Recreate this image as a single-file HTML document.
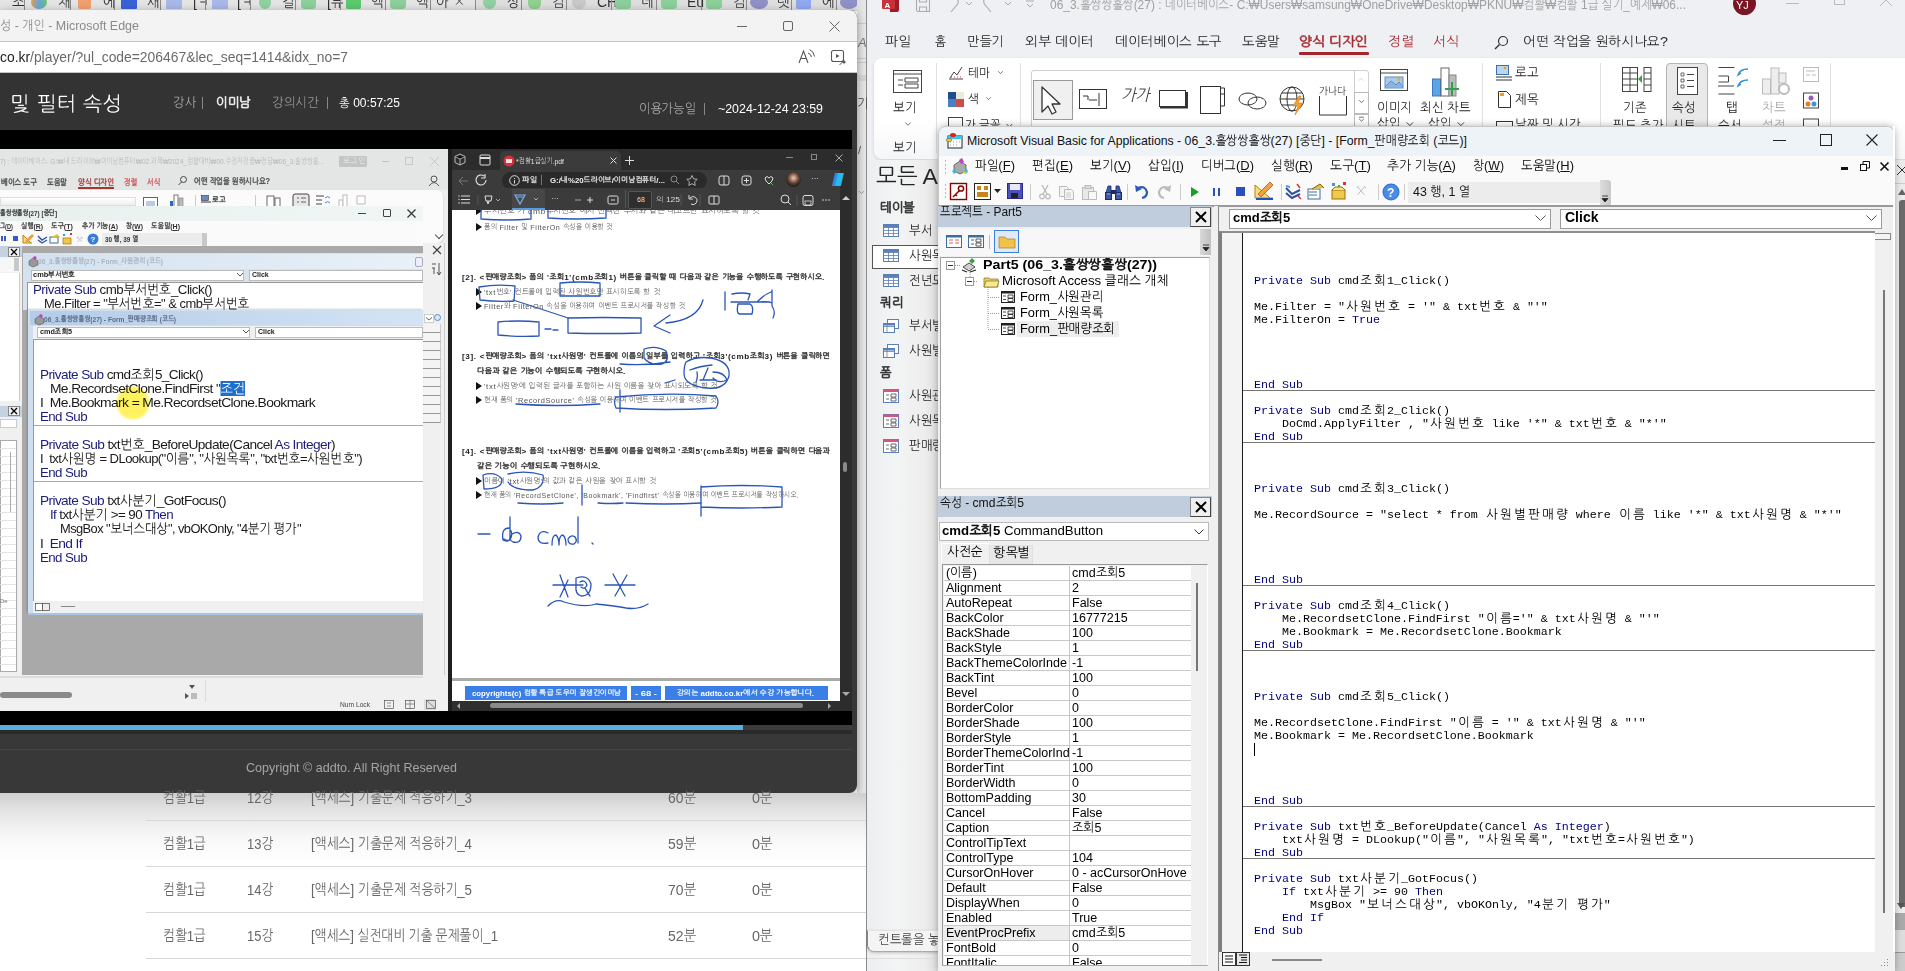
<!DOCTYPE html><html><head><meta charset="utf-8"><title>screen</title><style>
*{box-sizing:border-box;margin:0;padding:0}
html,body{width:1905px;height:971px;overflow:hidden;background:#fff;font-family:"Liberation Sans",sans-serif;}
.a{position:absolute;white-space:nowrap}
svg.h{position:static;display:inline-block;width:.9em;height:1em;vertical-align:-0.156em;fill:currentColor;overflow:visible}
.hb{stroke:currentColor;stroke-width:5}
.hm{width:14px!important;height:1.08em!important;vertical-align:-0.19em!important;padding:0 1.2px}
svg{position:absolute;overflow:visible}
</style></head><body>
<svg width="0" height="0" style="position:absolute;left:0;top:0"><defs><symbol id="g0" viewBox="0 -84 94 100" preserveAspectRatio="none"><path d="M82-36l0 1-2 0-7-3-8-3-8-4-8-4-8 5-8 4-8 4-10 3-1 0-1-1-1-3 0-1 0-1 9-3 7-3 7-3 6-4 6-3 5-4 6-4 5-5 1-1-1-1-1 0-43 0-1 0 0-1 0-4 0-1 1 0 46 0 3 0 3 1 1 1 2 1 0 2-1 1-1 2-2 2-7 7-8 7 6 3 7 3 8 3 7 2 1 0 0 1zm-33 1l1 0 0 1 0 22 40 0 1 1 0 3 0 1-1 0 0 1-86 0-1-1 0-1 0-3 0-1 1 0 39 0 0-22 1-1z"/></symbol><symbol id="g1" viewBox="0 -84 94 100" preserveAspectRatio="none"><path d="M64-45l13 0 0-36 0-1 1-1 4 0 1 1 1 1 0 89-1 1-1 1-4 0-1-1 0-1 0-47-13 0 0 43 0 1-1 1-4 0-1-1 0-1 0-84 0-1 1 0 4 0 1 0 0 1zm-20-10l-2 5-2 4-2 4-3 4 4 5 5 5 4 4 5 3 0 1 0 1-3 3 0 1-1 0-1-1-2-1-2-2-2-2-2-2-2-3-3-2-2-2-2-2-4 5-5 5-6 4-6 4-1 0-3-3 0-1 0-1 1 0 5-4 5-4 4-4 5-5 3-4 3-5 3-5 2-4 0-2-2-1-24 0-1 0 0-1 0-4 1-1 27 0 4 1 2 1 1 3-1 3zm-7-22l1 0 1 1 0 3-1 2-1 0-19 0-1 0 0-2 0-3 0-1 1 0z"/></symbol><symbol id="g2" viewBox="0 -84 94 100" preserveAspectRatio="none"><path d="M66 4l0 1-1 1-4 0-1-1 0-1 0-46-12 0-1 6-1 6-2 5-3 3-3 3-3 3-4 1-4 0-5 0-4-2-3-2-3-3-3-5-2-5-1-6 0-8 0-7 1-6 2-6 3-4 3-3 3-3 4-1 5 0 4 0 4 1 3 2 4 3 2 4 2 5 2 6 0 7 12 0 0-32 0-1 1 0 4 0 1 0 0 1zm-25-50l0-4-1-5-1-4-1-4-2-3-3-2-3-2-3 0-4 0-3 2-2 2-2 4-2 3 0 5-1 4 0 4 0 5 1 4 1 4 1 4 2 3 2 3 3 2 4 0 3 0 3-2 3-2 2-4 1-3 1-5 1-4 0-5zm43 54l-1 1-1 1-3 0-1-1-1-1 0-89 1-1 1-1 3 0 1 1 1 1z"/></symbol><symbol id="g3" viewBox="0 -84 94 100" preserveAspectRatio="none"><path d="M64-45l13 0 0-36 1-1 1-1 3 0 1 1 1 1 0 89-1 1-1 1-3 0-1-1-1-1 0-47-13 0 0 43 0 1-1 1-4 0-1-1 0-1 0-84 0-1 1 0 4 0 1 0 0 1zm-32-31l0 7 0 6-1 5-1 6 1 4 2 4 1 4 3 5 2 4 3 4 3 5 4 3 0 1 0 1-3 3-1 0 0 1-1-1-3-3-2-3-2-3-3-3-2-4-1-3-2-3-1-3-3 7-4 7-5 7-6 6-1 1-1-1-3-3-1 0 1-1 5-6 4-5 4-6 2-7 2-7 2-8 1-10 0-11 0-1 1 0 4 0 1 0 1 1z"/></symbol><symbol id="g4" viewBox="0 -84 94 100" preserveAspectRatio="none"><path d="M64-37l0-13 0-1-1-1-1 0-38 0-1 0 0-1 0-4 0-1 1 0 40 0 3 1 3 1 1 2 0 4 0 37 0 1-1 0-4 0-1 0-1-1 0-18-38 0-1 0-1-1 0-4 1-1 1 0z"/></symbol><symbol id="g5" viewBox="0 -84 94 100" preserveAspectRatio="none"><path d="M80-35l0 1-1 0-4 0-1 0 0-1 0-46 0-1 1-1 4 0 1 1 0 1zm-26-37l-2 6-2 6-4 6-4 5-5 5-7 4-8 5-9 4-1 0-1-1-2-3 0-1 1-1 25-15 11-18 0-2-2-1-31 0-1 0 0-1 0-4 0-1 1 0 33 0 4 0 3 2 1 2 0 3zm29 81l-1 0 0 1-1 0-50 0-4-1-2-1-1-2-1-4 0-7 1-4 1-2 3-1 3 0 40 0 2 0 0-1 1 0 0-2 0-5 0-2-1 0 0-1-1 0-47 0-1 0-1 0 0-1 0-3 0-1 1 0 1 0 48 0 2 0 1 0 2 0 1 1 1 1 0 1 0 2 0 2 0 7 0 4-1 2-3 1-4 0-40 0-1 1-1 0 0 2 0 6 0 1 1 1 1 0 49 0 1 0 0 1 1 0z"/></symbol><symbol id="g6" viewBox="0 -84 94 100" preserveAspectRatio="none"><path d="M23-42l-2 0-1 0-2-1-1-1 0-1-1-1 0-1 0-2 0-32 0-1 1 0 5 0 1 0 0 1 0 13 48 0 0-13 0-1 1 0 4 0 1 0 1 0 0 1 0 32-1 4-1 1-2 1-4 1zm6 51l-1 0 0-1 0-32-24 0-1 0 0-1 0-3 0-1 1-1 86 0 0 1 1 0 0 1 0 3-1 1-24 0 0 32-1 0 0 1-1 0-4 0-1 0 0-1 0-32-25 0 0 32 0 1-1 0zm-6-71l0 12 0 1 1 1 1 0 43 0 2 0 0-1 1 0 0-1 0-12z"/></symbol><symbol id="g7" viewBox="0 -84 94 100" preserveAspectRatio="none"><path d="M27-79l3 1 4 1 3 1 3 2 3 3 2 3 1 5 1 4 13 0 0-21 0-1 1 0 4 0 1 0 0 1 0 49 0 1-1 0-4 0-1 0 0-1 0-22-13 0-1 5-1 4-3 4-2 2-3 3-3 1-4 1-3 0-4 0-3-1-4-2-3-2-2-3-2-4-1-5-1-6 1-5 1-5 2-4 2-3 3-3 4-1 3-1 4-1zm13 23l0-4-1-3-1-3-2-2-2-2-2-1-2-1-3 0-6 1-4 3-2 5-1 7 1 7 3 6 4 3 5 1 3 0 2-1 2-1 2-2 2-3 1-3 1-3 0-4zm-18 34l1 0 0-1 1 0 52 0 4 0 2 2 1 2 1 4 0 24-1 1-1 0-4 0-1 0 0-1 0-24 0-1-1-1-1 0-51 0-1 0 0-1-1 0zm62-8l-1 1-1 1-3 0-1-1-1-1 0-51 1-1 1-1 3 0 1 1 1 1z"/></symbol><symbol id="g8" viewBox="0 -84 94 100" preserveAspectRatio="none"><path d="M55-44l0 5-1 6-2 5-2 5-4 4-4 4-5 2-6 1-6-1-5-2-4-4-3-4-3-5-1-5-1-6 0-5 0-6 1-6 1-6 3-4 3-5 4-3 5-2 6-1 6 1 5 2 4 3 4 4 2 5 2 6 1 6 0 6zm-7-1l0-4-1-5-1-4-2-4-2-3-3-3-4-2-4 0-4 0-4 2-3 3-2 3-1 4-1 4-1 5 0 4 0 5 0 4 1 5 2 4 2 3 3 3 4 2 4 0 4 0 4-2 3-3 2-3 2-4 1-5 1-4 0-5zm29 53l0 1-1 1-4 0-2-1 0-1 0-89 0-1 2-1 4 0 1 1 0 1 0 36 14 0 1 1 0 4 0 1-1 0-14 0z"/></symbol><symbol id="g9" viewBox="0 -84 94 100" preserveAspectRatio="none"><path d="M20-8l1-4 1-4 3-3 3-3 4-2 5-1 6-1 6 0 6 0 5 1 5 1 5 2 3 3 3 3 2 4 0 4 0 4-2 3-3 4-3 2-5 2-5 2-5 1-6 0-6 0-6-1-5-2-4-2-3-2-3-4-1-3-1-4zm7 0l1 3 1 2 2 2 2 2 4 1 3 1 4 1 5 0 4 0 4-1 4-1 3-1 3-2 2-2 2-2 0-3 0-3-2-2-2-2-3-2-3-2-4-1-4 0-4 0-5 0-4 0-3 1-4 2-2 2-2 2-1 2-1 3zm10-71l-1 7-1 7 2 4 1 4 3 3 3 4 3 3 3 3 3 2 4 2 1 0 0 1-1 1-2 3 0 1-1 0-1 0-2-2-3-2-3-2-3-2-3-3-3-4-2-3-2-4-4 8-5 6-6 6-7 5-1 1-1 0 0-1-3-3 0-1 0-1 1 0 10-8 8-10 4-12 2-13 0-1 1-1 5 1 1 1zm40 51l0 1-1 0-4 0-2 0 0-1 0-53 0-1 2-1 4 0 1 1 0 1 0 24 14 0 1 0 0 1 0 4-1 1-14 0z"/></symbol><symbol id="g10" viewBox="0 -84 94 100" preserveAspectRatio="none"><path d="M24-17l0-4 1-2 2-1 4 0 42 0 2 0 2 0 1 0 1 1 1 1 0 1 1 2 0 2 0 19-1 3-1 2-2 1-4 1-42 0-2 0-2-1-1 0-1-1-1-1 0-1 0-1 0-2zm9-1l-1 0-1 0 0 1-1 1 0 16 1 1 0 1 1 1 1 0 38 0 1 0 1-1 1-1 0-1 0-16 0-1-1-1-1 0-1 0zm-20-41l3 0 3 0 3 0 3-1 3 0 3 0 2 0 2 0 1 0 1 0 1 0 1 0 1 0 1 0 2 0 1-1 1-4 2-4-1-3-2 0-31 0-1-1 0-1 0-3 0-1 1 0 33 0 5 0 2 1 1 3 0 3-4 13-8 11-12 10-16 9-2 0-1-1-1-3 0-1 0-1 1 0 9-5 8-4 6-6 6-5-1 0-1 0-1 0-1 0-3 0-3 0-3 0-3 0-3 0-3 0-3 1-2 0-1-1-1-1 0-3 1-1 1 0zm61 3l0-25 0-1 1-1 4 0 1 1 0 1 0 50 0 1-1 0-4 0-1 0 0-1 0-19-21 0-1-1 0-1 0-3 0-1 1 0z"/></symbol><symbol id="g11" viewBox="0 -84 94 100" preserveAspectRatio="none"><path d="M60-52l0-28 0-1 1 0 4 0 1 0 0 1 0 84 0 1-1 1-4 0-1-1 0-1 0-50-24 0-1 0 0-1 0-4 0-1 1 0zm24 60l-1 1-1 1-3 0-1-1-1-1 0-89 1-1 1-1 3 0 1 1 1 1zm-67-35l0 1 1 1 2 1 8 0 7-1 7-1 7-1 2 0 0 1 1 3 0 1-2 0-6 2-8 1-9 1-9 0-4-1-2-1-1-3-1-3 0-48 1-1 1 0 4 0 1 0 0 1z"/></symbol><symbol id="g12" viewBox="0 -84 94 100" preserveAspectRatio="none"><path d="M16-27l-4-1-2-1-2-2 0-4 0-13 1-4 1-2 2-1 4 0 16 0 1 0 1-1 0-2 0-11 0-1 0-1-2 0-22 0-1 0 0-1-1 0 0-4 1 0 0-1 1 0 24 0 2 0 1 0 2 1 1 0 1 1 0 2 0 1 0 2 0 14 0 3-1 2-3 1-4 1-16 0-1 0-1 0 0 1 0 1 0 12 1 1 1 1 8 0 8-1 8-1 7-2 2 0 0 1 1 4-1 1-1 0-7 2-9 1-9 1-8 0zm39 5l0 1-1 0 0 1 0 1 1 1 0 1 1 1 0 1 5 5 7 5 8 4 11 3 1 1-1 1-1 4-1 0-1 0-11-3-9-5-8-6-5-6-5 7-7 5-9 5-11 4-1 0-1-1-1-3 0-1 1-1 7-2 6-3 5-3 4-3 4-4 3-3 1-4 1-4 0-1 1 0 5 0 1 1 0 1zm5-34l0-24 0-1 1 0 4 0 1 0 0 1 0 52 0 1-1 0-4 0-1 0 0-1 0-22-13 0-1 0 0-1 0-4 0-1 1 0zm24 35l-1 1-1 0-3 0-1 0-1-1 0-60 1-1 1-1 3 0 1 1 1 1z"/></symbol><symbol id="g13" viewBox="0 -84 94 100" preserveAspectRatio="none"><path d="M80 8l0 1-1 1-4 0-1-1 0-1 0-89 0-1 1-1 4 0 1 1 0 1zm-26-76l-1 9-3 8-3 8-5 8-5 7-7 7-8 6-9 5-1 0-3-4 0-1 1 0 8-5 7-5 6-6 5-7 4-6 3-8 3-7 1-7 0-2-1-1-2 0-32 0-1-1 0-4 1-1 34 0 4 0 2 2 1 2 1 3z"/></symbol><symbol id="g14" viewBox="0 -84 94 100" preserveAspectRatio="none"><path d="M81-8l0 4-2 3-3 4-3 2-5 2-4 2-6 1-6 0-6 0-6-1-4-2-5-2-3-2-2-4-2-3-1-4 1-4 2-4 2-3 3-3 5-2 4-1 6-1 6 0 6 0 6 1 4 1 5 2 3 3 3 3 2 4 0 4zm-7 0l0-3-2-2-2-2-2-2-4-2-4-1-4 0-4 0-4 0-5 0-3 1-3 2-3 2-2 2-1 2-1 3 1 3 1 2 2 2 3 2 3 1 3 1 5 1 4 0 4 0 4-1 4-1 4-1 2-2 2-2 2-2 0-3zm-37-71l0 7-1 7 1 4 2 4 2 3 3 4 3 3 4 3 3 2 4 2 0 1 0 1-2 3 0 1-1 0-1 0-2-2-3-2-3-2-3-2-3-3-3-4-2-3-2-4-4 8-5 6-6 6-7 5-1 1-1 0-1-1-2-3 0-1 0-1 1 0 10-8 7-10 5-12 1-13 1-1 1-1 4 1 1 0 0 1zm37 18l0-20 0-1 1-1 4 0 1 1 0 1 0 53 0 1-1 0-4 0-1 0 0-1 0-27-21 0-1 0 0-1 0-4 0-1 1 0z"/></symbol><symbol id="g15" viewBox="0 -84 94 100" preserveAspectRatio="none"><path d="M64-45l13 0 0-36 1-1 1-1 3 0 1 1 1 1 0 89-1 1-1 1-3 0-1-1-1-1 0-47-13 0 0 43 0 1-1 1-4 0-1-1 0-1 0-84 0-1 1 0 4 0 1 0 0 1zm-18-22l-3 16-7 14-10 12-15 12-1 0-1-1-2-3 0-1 1-1 6-4 6-5 5-5 4-6 4-6 3-6 2-7 1-7 0-2-1-1-1 0-1-1-24 0-1 0-1-1 0-3 1-1 0-1 1 0 26 0 4 1 2 1 2 3 0 3z"/></symbol><symbol id="g16" viewBox="0 -84 94 100" preserveAspectRatio="none"><path d="M80-17l0 1-1 0-4 0-1 0 0-1 0-64 0-1 1-1 4 0 1 1 0 1zm4 24l-1 0 0 1-1 0-50 0-4-1-2-1-1-2-1-4 0-19 1-1 1-1 4 0 1 1 0 1 0 19 0 1 1 0 0 1 2 0 48 0 1 0 0 1 1 0zm-28-62l0 5-2 5-2 4-3 3-3 3-4 2-5 1-5 1-5-1-4-1-4-2-3-3-3-3-2-4-2-5 0-5 0-5 2-5 2-4 3-3 3-3 4-2 4-1 5-1 5 1 4 1 4 2 4 3 3 3 2 4 2 5 0 5zm-7 0l0-4-1-3-2-3-2-3-2-2-3-1-3-1-4 0-3 0-3 1-3 1-2 2-2 3-2 3-1 3 0 4 0 4 1 3 1 3 2 3 3 2 3 1 3 1 3 0 4 0 3-1 3-1 2-2 2-3 2-3 1-3 0-4z"/></symbol><symbol id="g17" viewBox="0 -84 94 100" preserveAspectRatio="none"><path d="M11-72l1-4 1-2 2-1 4 0 27 0 2 0 2 0 1 0 1 1 1 1 1 1 0 2 0 2 0 27-1 4-1 2-2 1-4 0-27 0-2 0-2 0-1 0-1-1-1-1-1-1 0-2 0-2zm65 64l-3 2-4 2-4 2-4 2 3 0 3 1 4 1 4 1 3 0 4 1 3 0 3 1 1 0 0 1-1 3 0 1-2 0-3 0-5-1-4-1-5-1-4-1-5-1-4-1-4-1-7 3-8 2-8 2-8 1-1 0-1-1-1-3 0-1 1 0 15-4 13-3 12-5 10-4 1-1 0-1-2 0-43 0-1 0 0-1 0-4 0-1 1 0 46 0 4 0 2 1 2 1 1 2 0 1 0 2-2 1-2 2zm-56-65l-1 0-1 0 0 1 0 1 0 25 0 1 0 1 1 0 1 0 24 0 2 0 1-1 0-1 0-25 0-1-1-1-2 0zm60 40l0 1-1 0-4 0-1 0 0-1 0-48 0-1 1-1 4 0 1 1 0 1zm-15 3l2 0 0 1 0 3 0 1-2 1-25 0-1-1 0-1 0-3 0-1 1 0z"/></symbol><symbol id="g18" viewBox="0 -84 94 100" preserveAspectRatio="none"><path d="M61-47l1 0 0 1 1 0 0 3 0 1 0 1-1 0-6 1-7 1-7 0-7 1-3 0-4 0-3 0-4 0-4 0-4 0-3 0-3 0-1 0-1-1 0-3 0-1 1 0 0-1 1 0 11 0 0-29-10 0-1 0 0-1-1 0 0-1 0-3 1-1 1 0 49 0 1 0 0 1 0 4-1 1-8 0 0 28 3 0 3-1 3 0 3-1zm22 56l-1 0 0 1-1 0-50 0-4-1-2-1-1-2-1-4 0-7 1-4 1-2 3-1 3 0 40 0 2 0 0-1 1 0 0-2 0-5 0-2-1 0 0-1-1 0-47 0-1 0-1 0 0-1 0-3 0-1 1 0 1 0 48 0 2 0 1 0 2 0 1 1 1 1 0 1 0 2 0 2 0 7 0 4-1 2-3 1-4 0-40 0-1 1-1 0 0 2 0 6 0 1 1 1 1 0 49 0 1 0 0 1 1 0zm-49-53l2 0 2 0 2 0 2 0 0-29-17 0 0 29 5 0 4 0zm46 8l0 1-1 1-4 0-1-1 0-1 0-45 0-1 1-1 4 0 1 1 0 1z"/></symbol><symbol id="g19" viewBox="0 -84 94 100" preserveAspectRatio="none"><path d="M47-43l-3 0-4 0-3 1-3 0-4 0-3 0-3 0-3 0-4 0 0 18 0 2 1 0 0 1 1 0 9 0 10-1 9-1 9-1 1 0 1 1 1 3 0 1-1 0 0 1-1 0-4 1-5 0-5 1-5 0-5 1-5 0-5 0-5 0-4 0-2-2-1-2-1-4 0-45 0-4 2-2 2-1 4 0 31 0 1 0 0 1 0 4 0 1-1 0-30 0-1 0-1 0 0 1 0 1 0 19 4 0 3 0 3 0 3 0 3 0 4 0 3 0 4-1 3 0 1 1 0 4 0 1-1 0zm33 51l0 1-1 1-4 0-1-1 0-1 0-51-17 0-1 0-1-1 0-4 1-1 1 0 17 0 0-32 0-1 1-1 4 0 1 1 0 1z"/></symbol><symbol id="g20" viewBox="0 -84 94 100" preserveAspectRatio="none"><path d="M90-37l1 1 0 4-1 1-86 0-1 0 0-1 0-4 0-1 1 0 39 0 0-14 1-1 1 0 4 0 1 0 0 1 0 14zm-40-43l0 1 0 1 0 1 0 1 1 1 2 4 3 3 3 3 4 2 4 3 5 2 5 2 5 1 1 1 0 1-2 3 0 1-1 0-1 0-5-1-5-2-5-3-4-2-4-3-4-3-3-4-3-3-5 7-7 6-9 5-10 4-2 0-2-4 0-1 0-1 1 0 6-2 6-3 5-3 5-3 4-4 3-4 2-4 1-4 0-1 1 0 4 0 1 1 0 1zm-35 61l0-1 1 0 53 0 4 1 3 1 1 2 0 4 0 21 0 1-1 1-4 0-2-1 0-1 0-21 0-1-1-1-1 0-52 0-1 0 0-1z"/></symbol><symbol id="g21" viewBox="0 -84 94 100" preserveAspectRatio="none"><path d="M78-8l0 4-2 3-3 4-3 2-5 2-5 2-5 1-6 0-6 0-6-1-5-2-4-2-3-2-3-4-1-3-1-4 1-4 1-4 3-3 3-3 4-2 5-1 6-1 6 0 6 0 5 1 5 1 5 2 3 3 3 3 2 4 0 4zm-7 0l0-3-2-2-2-2-3-2-3-2-4-1-4 0-4 0-5 0-4 0-3 1-4 2-2 2-2 2-1 2-1 3 1 3 1 2 2 2 2 2 4 1 3 1 4 1 5 0 4 0 4-1 4-1 3-1 3-2 2-2 2-2 0-3zm-20-63l-4 13-8 11-12 10-16 9-1 0-1 0 0-1-2-3 0-1 1-1 14-7 11-9 7-9 4-10 0-2-2-1-31 0-1-1 0-1 0-3 0-1 1 0 33 0 4 0 2 2 1 2 0 3zm26 43l0 1-1 0-4 0-2 0 0-1 0-53 0-1 2-1 4 0 1 1 0 1 0 24 14 0 1 0 0 1 0 3 0 1-1 1-14 0z"/></symbol><symbol id="g22" viewBox="0 -84 94 100" preserveAspectRatio="none"><path d="M36-76l0 6-1 7-1 5-1 6 2 4 1 5 3 4 2 5 3 4 4 4 4 4 3 4 1 0 0 1 0 1-3 3-1 0-1 0-3-3-3-3-3-4-2-3-3-4-3-4-2-4-2-3-3 8-5 8-6 8-6 7-1 0-1 0-3-3 0-1 0-1 6-6 5-6 4-7 3-7 3-8 1-8 1-9 1-10 0-1 0-1 1 0 5 0 0 1 1 1zm41 84l0 1-1 1-4 0-2-1 0-1 0-89 0-1 2-1 4 0 1 1 0 1 0 36 14 0 1 1 0 4 0 1-1 0-14 0z"/></symbol><symbol id="g23" viewBox="0 -84 94 100" preserveAspectRatio="none"><path d="M57-44l0 5-1 6-2 5-2 5-4 4-4 4-5 2-6 1-6-1-5-2-4-4-3-4-3-5-1-5-1-6 0-5 0-6 1-6 1-6 3-4 3-5 4-3 5-2 6-1 6 1 5 2 4 3 4 4 2 5 2 6 1 6 0 6zm-7-1l0-4-1-5-1-4-2-4-2-4-3-2-4-2-4-1-4 1-4 2-3 2-2 4-2 4-1 4 0 5 0 4 0 5 0 4 1 5 2 4 2 3 3 3 4 2 4 1 4-1 4-2 3-3 2-3 2-4 1-5 1-4 0-5zm30 53l0 1-1 1-4 0-1-1 0-1 0-89 0-1 1-1 4 0 1 1 0 1z"/></symbol><symbol id="g24" viewBox="0 -84 94 100" preserveAspectRatio="none"><path d="M80 8l0 1-1 1-4 0-1-1 0-1 0-89 0-1 1-1 4 0 1 1 0 1zm-69-76l0-4 2-2 2-1 4 0 29 0 2 0 2 0 1 1 1 0 1 1 0 1 1 2 0 2 0 44-1 4-1 2-2 1-4 0-29 0-3 0-1 0-2 0-1-1 0-1-1-1 0-2 0-2zm9-1l-1 0-1 0 0 1 0 2 0 41 0 1 0 1 1 0 1 0 26 0 1 0 1 0 1-1 0-1 0-41 0-2-1-1-1 0-1 0z"/></symbol><symbol id="g25" viewBox="0 -84 94 100" preserveAspectRatio="none"><path d="M20-17l0-4 2-2 2-1 4 0 41 0 3 0 1 0 2 0 1 1 0 1 1 1 0 2 0 2 0 19 0 3-2 2-2 1-4 1-41 0-3 0-1-1-2 0-1-1 0-1-1-1 0-1 0-2zm9-1l-1 0-1 0 0 1 0 1 0 16 0 1 0 1 1 1 1 0 39 0 1 0 1-1 0-1 0-1 0-16 0-1 0-1-1 0-1 0zm-10-27l0 1 1 1 1 0 10 0 10 0 10-1 10-2 1 0 1 1 0 3 0 2-1 0-4 1-5 1-5 0-6 1-6 0-5 1-6 0-5 0-4-1-2-2-1-2-1-4 0-33 0-1 2 0 4 0 1 0 0 1zm58 14l0 1-1 0-4 0-2 0 0-1 0-50 0-1 2-1 4 0 1 1 0 1 0 24 14 0 1 0 0 1 0 3 0 1-1 0 0 1-14 0z"/></symbol><symbol id="g26" viewBox="0 -84 94 100" preserveAspectRatio="none"><path d="M80 8l0 1-1 1-4 0-1-1 0-1 0-89 0-1 1-1 4 0 1 1 0 1zm-22-62l-1 5-1 4-2 4-3 3-4 3-4 2-4 1-5 0-5 0-5-1-4-2-3-3-3-3-2-4-1-4-1-5 1-5 1-5 2-4 3-3 3-2 4-2 5-2 5 0 4 0 5 2 4 2 3 2 3 3 3 4 1 5 1 5zm-7 0l-1-4-1-4-1-2-2-3-3-1-3-2-3 0-3-1-4 1-3 0-3 2-2 1-2 3-2 3-1 3 0 4 1 7 4 5 5 3 7 1 3 0 3-1 3-1 3-2 2-2 1-3 1-4 1-3zm16 33l1 0 1 1 0 3 0 1-1 1-4 0-3 1-4 0-4 1-5 0-4 1-4 0-4 0-3 1-4 0-4 0-5 0-4 0-4 0-3 0-3 0-1 0-1-1 0-3 0-1 1 0 0-1 1 0 3 0 4 0 4 0 4 0 4 0 4 0 4 0 3-1 4 0 4 0 4-1 4 0 5-1 4 0 3-1 3 0z"/></symbol><symbol id="g27" viewBox="0 -84 94 100" preserveAspectRatio="none"><path d="M38-76l-1 6 0 7-1 5-1 6 2 4 1 5 3 4 2 5 3 4 4 4 3 4 4 4 1 0 0 1 0 1-3 3-1 0-1 0-3-3-3-3-3-4-2-3-3-4-3-4-2-4-2-3-3 8-5 8-6 8-6 7-1 0-1 0-3-3 0-1 0-1 6-6 5-6 4-7 3-7 3-8 1-8 1-9 1-10 0-1 0-1 1 0 4 0 1 1 1 1zm42 84l0 1-1 1-4 0-1-1 0-1 0-89 0-1 1-1 4 0 1 1 0 1z"/></symbol><symbol id="g28" viewBox="0 -84 94 100" preserveAspectRatio="none"><path d="M51-70l-4 14-8 12-12 10-16 9-1 0-1 0 0-1-2-3 0-1 1-1 7-3 6-4 6-4 5-5 4-5 4-5 2-6 2-5 0-2-2-1-31 0-1 0 0-1 0-4 0-1 1 0 33 0 4 0 2 2 1 2 0 3zm26 53l0 1-1 0-4 0-2 0 0-1 0-64 0-1 2-1 4 0 1 1 0 1 0 29 14 0 1 0 0 1 0 3 0 1-1 1-14 0zm5 24l-1 0 0 1-1 0-51 0-4-1-2-1-1-2 0-4 0-19 0-1 1 0 4 0 1 0 0 1 0 19 1 1 1 1 1 0 49 0 1 0 0 1 1 0z"/></symbol><symbol id="g29" viewBox="0 -84 94 100" preserveAspectRatio="none"><path d="M78-5l0 3-2 2-1 3-3 1-2 2-3 1-4 1-3 1-3 1-4 0-3 0-3 0-3 0-3 0-4 0-3-1-4-1-3-1-3-1-3-2-2-1-2-3-1-2 0-3 0-3 1-2 2-3 2-1 3-2 3-1 3-1 4-1 3-1 3 0 4 0 3 0 4 0 6 0 5 1 5 2 4 2 4 2 2 4 1 4zm-9-56l-6 4-7 4 5 2 7 1 6 1 6 1 1 1 0 1-1 3 0 1-1 0-4 0-3-1-4-1-5-1-4-1-4-1-4-1-4-1-7 2-8 3-8 2-8 1-2 0 0-1-2-3 1-1 1-1 6-1 7-2 6-1 6-2 5-2 5-2 6-3 5-2 1-1 0-1-1 0-40 0-1-1 0-1 0-3 0-1 1 0 43 0 6 0 4 2-1 4-3 3zm2 56l-1-3-2-2-3-1-4-2-4 0-4-1-3 0-3 0-3 0-4 0-4 1-4 0-3 2-3 1-2 2-1 3 1 3 2 2 3 1 3 1 4 1 4 1 4 0 3 0 3 0 4 0 4-1 3-1 4-1 3-1 2-2 1-3zm19-27l1 0 0 1 0 3 0 1-1 0 0 1-86 0 0-1-1 0 0-1 0-3 0-1 1 0 39 0 0-11 1-1 1 0 4 0 1 0 0 1 0 11zm-30-51l1 1 0 1 0 3 0 1-1 1-27 0-1-1 0-1 0-3 0-1 1-1z"/></symbol><symbol id="g30" viewBox="0 -84 94 100" preserveAspectRatio="none"><path d="M90-35l1 0 0 1 0 3 0 1-1 0 0 1-86 0-1-1 0-1 0-3 0-1 1 0 23 0 0-16-4-3-4-3-2-3-1-5 1-5 2-3 4-3 4-2 5-2 5-1 5-1 5 0 5 0 5 1 5 1 5 2 5 2 3 3 2 4 1 4-1 4-2 4-4 3-4 2 0 17zm-12 29l-1 5-2 3-4 3-4 2-5 2-5 1-5 0-5 0-3 0-4 0-3 0-4-1-3-1-3-1-3-1-3-2-2-2-2-2-1-3 0-3 0-5 3-3 3-3 5-2 5-2 5-1 5 0 5 0 5 0 5 0 5 1 5 2 4 2 4 3 2 3 1 5zm-31-70l-3 0-4 1-4 0-4 1-3 2-3 2-2 2-1 3 1 3 2 2 3 2 3 2 4 1 4 0 4 1 3 0 3 0 4-1 4 0 4-1 3-2 3-2 2-2 1-3-1-3-2-2-3-2-3-2-4-1-4 0-4-1-3 0zm24 70l-1-3-2-2-3-2-3-1-4-1-4-1-4 0-3 0-3 0-4 0-4 1-4 1-3 1-3 2-2 2-1 3 1 3 2 2 3 2 3 1 4 1 4 1 4 0 3 0 3 0 4 0 4-1 4-1 3-1 3-2 2-2 1-3zm-24-42l-3 0-3 0-4-1-3 0 0 14 26 0 0-15-4 1-3 1-3 0-3 0z"/></symbol><symbol id="g31" viewBox="0 -84 94 100" preserveAspectRatio="none"><path d="M51-68l-1 9-3 8-3 8-5 8-5 7-7 7-8 6-9 5-1 0-1 0-2-4 0-1 1 0 8-5 7-5 6-6 5-7 4-6 3-8 2-7 2-7 0-2-1-1-1 0-1 0-31 0-1 0 0-1 0-4 0-1 1 0 33 0 4 0 2 2 1 2 1 3zm26 76l0 1-1 1-4 0-2-1 0-1 0-89 0-1 2-1 4 0 1 1 0 1 0 35 14 0 1 1 0 1 0 3 0 1-1 0-14 0z"/></symbol><symbol id="g32" viewBox="0 -84 94 100" preserveAspectRatio="none"><path d="M90-38l0 1 1 0 0 1 0 3-1 1-86 0-1 0 0-1 0-3 0-1 1-1zm-11-11l-1 1-1 0-52 0-4-1-2-1-1-3 0-3 0-24 0-1 1-1 4 0 1 1 1 1 0 24 0 1 1 1 1 0 50 0 1 0 1 1zm-1 42l0 3-2 3-1 2-3 3-2 1-3 2-4 1-3 1-3 1-4 0-3 0-3 0-3 0-3 0-4 0-3-1-4-1-3-1-3-2-3-1-2-3-2-2-1-3 0-3 0-3 1-3 2-2 2-2 3-2 3-1 3-2 4 0 3-1 3-1 4 0 3 0 3 0 3 0 4 1 3 0 4 1 3 2 3 1 2 2 3 2 1 2 2 3 0 3zm-7 0l-1-3-2-2-3-2-4-2-3-1-4-1-4 0-3 0-3 0-4 0-4 1-4 1-3 2-3 2-2 2-1 3 1 3 2 3 3 2 3 1 4 1 4 1 4 0 3 0 3 0 4 0 4-1 3-1 4-1 3-2 2-3 1-3z"/></symbol><symbol id="g33" viewBox="0 -84 94 100" preserveAspectRatio="none"><path d="M80-36l0 1-1 1-4 0-1-1 0-1 0-45 0-1 1-1 4 0 1 1 0 1zm-24-23l-1 5-1 4-2 4-3 3-4 2-4 2-4 2-5 0-5 0-4-1-4-2-3-3-3-3-2-4-1-4-1-5 1-4 1-5 2-3 3-4 3-2 4-2 4-1 5 0 5 0 4 1 4 2 3 2 3 4 3 3 1 5 1 4zm-7 0l-1-3-1-3-1-3-2-2-3-2-3-1-3-1-3 0-3 0-3 1-3 1-2 2-2 2-2 3-1 3 0 3 0 4 1 3 2 2 2 3 2 1 3 2 3 1 3 0 3 0 3-1 3-2 3-1 2-3 1-2 1-3 1-4zm34 68l-1 0 0 1-1 0-50 0-4-1-2-1-1-2-1-4 0-7 1-4 1-2 3-1 3 0 40 0 2 0 0-1 1 0 0-2 0-5 0-2-1 0 0-1-1 0-47 0-1 0-1 0 0-1 0-3 0-1 1 0 1 0 48 0 2 0 1 0 2 0 1 1 1 1 0 1 0 2 0 2 0 7 0 4-1 2-3 1-4 0-40 0-1 1-1 0 0 2 0 6 0 1 1 1 1 0 49 0 1 0 0 1 1 0z"/></symbol><symbol id="g34" viewBox="0 -84 94 100" preserveAspectRatio="none"><path d="M64-38l1 0 0 1 1 0 0 3 0 1-1 1-9 1-9 1-10 0-10 0-21 0-1 0-1 0 0-1 0-3 1-1 1 0 17 0 2 0 2 0 2 0 3 0 0-6-4 0-4-1-3-1-2-1-3-1-1-2-1-2-1-3 1-2 1-3 2-2 3-1 3-1 4-1 4-1 4 0 4 0 4 1 4 1 3 1 3 1 2 2 1 3 1 2-1 3-1 2-2 2-2 1-2 1-4 1-3 1-4 0 0 6 7-1 7 0 6-1 6-1zm15 47l0 1-1 0-52 0-4 0-3-1-1-3 0-3 0-5 0-4 2-2 2-1 4 0 42 0 1 0 1-1 0-2 0-3 0-2-1-1-1 0-49 0-1 0 0-1 0-3 0-1 1 0 50 0 2 0 2 0 1 1 2 0 0 1 1 2 0 1 0 2 0 5 0 4-2 2-2 1-4 0-42 0-1 0-1 1 0 1 0 5 0 1 0 1 1 0 1 0 51 0 1 0 0 1zm-2-39l0 1-1 0-4 0-2 0 0-1 0-51 0-1 2-1 4 0 1 1 0 1 0 27 14 0 1 1 0 1 0 3 0 1-1 0-14 0zm-27-22l0-1-1-2-2-1-2 0-2-1-2 0-3-1-3 0-3 0-3 0-2 1-3 1-1 0-2 1-1 2 0 1 0 2 1 1 2 1 1 1 3 1 2 0 3 0 3 0 3 0 3 0 2 0 2-1 2-1 2-1 1-1 0-2zm12-16l0 1-1 1-51 0-1-1-1 0 0-1 0-2 0-1 1 0 0-1 1 0 51 0 1 1 0 1zm-14-10l-1 1-1 0-23 0-1 0-1-1 0-3 1-1 1 0 23 0 1 0 1 1z"/></symbol><symbol id="g35" viewBox="0 -84 94 100" preserveAspectRatio="none"><path d="M24 9l-2 0-2 0-1-1-1 0 0-1-1-2 0-1 0-2 0-29 0-1 1 0 4 0 1 0 1 0 0 1 0 11 46 0 0-11 0-1 1 0 5 0 1 0 0 1 0 30 0 3-2 2-2 1-4 0zm46-81l0-1 0-1-1-1-1 0-50 0-1 0-1-1 0-3 1-1 1-1 52 0 3 1 3 1 1 2 0 4 0 3 0 3 0 4-1 3 0 4 0 4-1 3-1 3 16 0 1 1 0 4-1 1-86 0-1 0 0-1 0-4 0-1 1 0 64 0 1-3 0-3 0-4 1-3 0-4 0-3 0-3 0-3zm-46 62l0 11 0 1 0 1 1 0 1 0 42 0 1 0 1 0 0-1 0-1 0-11z"/></symbol><symbol id="g36" viewBox="0 -84 94 100" preserveAspectRatio="none"><path d="M27-79l4 1 3 1 4 1 3 3 2 3 2 4 2 5 0 5 0 6-2 5-2 4-2 3-3 2-4 2-4 1-3 0-4 0-3-1-4-2-3-2-2-3-2-4-1-5-1-6 1-5 1-5 2-4 2-3 3-3 4-1 3-1 4-1zm37 21l13 0 0-23 1-1 1-1 3 0 1 1 1 1 0 51-1 1-1 0-3 0-1 0-1-1 0-22-13 0 0 21 0 1-1 0-4 0-1 0 0-1 0-49 0-1 1 0 4 0 1 0 0 1zm-24 2l0-4-1-3-1-3-2-2-2-2-2-1-2-1-3 0-6 1-4 3-2 5-1 7 1 7 3 6 4 3 5 1 3 0 2-1 2-1 2-2 2-3 1-3 1-3 0-4zm-18 34l1 0 0-1 1 0 52 0 4 0 2 2 1 2 1 4 0 24-1 1-1 0-4 0-1 0 0-1 0-24 0-1-1-1-1 0-51 0-1 0 0-1-1 0z"/></symbol><symbol id="g37" viewBox="0 -84 94 100" preserveAspectRatio="none"><path d="M32-76l0 7 0 6-1 5-1 6 1 4 2 4 1 4 3 5 2 4 3 4 3 5 4 3 0 1 0 1-3 3-1 0 0 1-1-1-3-3-2-3-2-3-3-3-2-4-1-3-2-3-1-3-3 7-4 7-5 7-6 6-1 1-1-1-3-3-1 0 1-1 5-6 4-5 4-6 2-7 2-7 2-8 1-10 0-11 0-1 1 0 4 0 1 0 1 1zm28 28l0-32 0-1 1 0 4 0 1 0 0 1 0 84 0 1-1 1-4 0-1-1 0-1 0-46-15 0-1 0-1-1 0-4 1-1 1 0zm24 56l-1 1-1 1-3 0-1-1-1-1 0-89 1-1 1-1 3 0 1 1 1 1z"/></symbol><symbol id="g38" viewBox="0 -84 94 100" preserveAspectRatio="none"><path d="M50-76l0 2 0 3 0 1 0 1 0 1 1 1 2 4 4 5 3 4 4 4 5 3 4 3 5 2 5 2 1 0 0 1 0 1-2 3 0 1-1 0-1 0-5-2-5-3-5-3-5-3-4-4-4-4-3-5-3-4-2 4-3 5-4 4-4 4-4 4-5 3-5 3-5 2-2 1 0-1-2-3 0-1 0-1 7-3 6-4 5-4 5-5 4-5 3-6 2-6 2-6 0-1 1 0 4 0 1 1 0 1zm40 64l1 1 0 3 0 1-1 0 0 1-86 0-1-1 0-1 0-3 0-1 1 0z"/></symbol><symbol id="g39" viewBox="0 -84 94 100" preserveAspectRatio="none"><path d="M79 8l0 1-1 0-54 0-3 0-3-2-1-2 0-3 0-6 0-4 2-2 2-1 4 0 43 0 1 0 1-1 0-1 0-4 0-1 0-1-1 0-1 0-50 0-1 0 0-1 0-4 1-1 25 0 0-9-39 0-1-1 0-1 0-3 0-1 1 0 86 0 1 1 0 3 0 1-1 0 0 1-40 0 0 9 19 0 2 0 2 1 1 0 1 1 1 1 1 1 0 2 0 2 0 5-1 3-1 2-2 1-4 1-43 0-1 0-1 0 0 1 0 1 0 4 0 1 0 1 1 0 1 0 52 0 1 1zm-11-69l-2 1-3 2-4 1-3 2 3 0 3 1 3 0 3 1 3 0 4 0 3 1 3 0 1 0 0 1-1 3 0 1-1 1-4-1-4 0-5-1-4-1-5 0-5-1-4-1-4-1-7 2-8 2-8 1-7 1-1 1 0-1-1 0 0-4 0-1 1 0 6-1 6-1 7-2 6-1 6-2 6-2 5-1 3-2 2-1 0-1-1 0-40 0-1 0 0-1 0-4 1-1 42 0 4 0 3 1 2 1 1 1 1 1-1 2-1 2-3 2zm-8-22l1 0 0 1 0 4 0 1-1 0-27 0-1 0 0-1 0-4 0-1 1 0z"/></symbol><symbol id="g40" viewBox="0 -84 94 100" preserveAspectRatio="none"><path d="M17-73l1-3 1-2 2-1 4-1 44 0 2 0 2 1 1 0 1 1 1 1 0 1 1 1 0 2 0 19-1 4-1 2-2 1-4 0-44 0-2 0-2 0-1-1-1 0-1-1 0-2-1-1 0-2zm10-1l-2 0 0 1-1 1 0 1 0 15 0 2 1 1 2 0 40 0 2 0 1-1 0-2 0-15 0-1-1-1 0-1-2 0zm19 65l-1 0 0-1-1 0 0-1 0-20-40 0-1-1 0-4 0-1 1 0 86 0 1 1 0 4-1 0 0 1-39 0 0 20 0 1-1 1zm34 16l0 1-1 0-55 0-4-1-3-1-1-3 0-3 0-20 0-1 1-1 5 0 1 1 0 1 0 20 0 1 1 1 1 0 54 0 1 0 0 1z"/></symbol><symbol id="g41" viewBox="0 -84 94 100" preserveAspectRatio="none"><path d="M44-66l-2 5-2 6-2 5-3 6 2 3 2 3 2 3 2 3 3 3 2 3 3 2 2 2 1 1 0 1-1 0-2 3-1 0 0 1 0-1-1 0-2-2-3-3-2-2-2-3-3-3-2-2-2-3-2-3-4 7-6 6-6 6-7 5 0 1-1 0-1 0-2-3 0-1 0-1 12-10 9-12 7-12 4-14 1-1-1-1-1-1-26 0-1 0 0-1 0-3 0-1 2-1 27 0 5 1 2 1 1 3-1 4zm16 17l0-31 0-1 1 0 4 0 1 0 0 1 0 84 0 1-1 1-4 0-1-1 0-1 0-47-15 0-1-1 0-4 0-1 1 0zm24 57l-1 1-1 1-3 0-1-1-1-1 0-89 1-1 1-1 3 0 1 1 1 1z"/></symbol><symbol id="g42" viewBox="0 -84 94 100" preserveAspectRatio="none"><path d="M52-70l-2 5-2 4-3 4-3 3 4 4 4 3 5 3 6 3 1 0 0 1 0 1-2 4-1 0-1 0-3-1-2-1-3-2-2-2-3-1-3-2-2-3-3-2-6 5-6 5-7 5-7 3-1 0-1 0-2-4 0-1 1 0 12-7 10-8 8-8 6-10 0-1 0-1 0-1-2 0-29 0-1 0 0-1 0-3 0-1 1-1 32 0 4 1 3 1 1 3-1 3zm-30 48l0-1 1 0 1 0 49 0 4 0 2 1 1 3 0 3 0 25 0 1-1 0-4 0-1 0 0-1 0-24-1-1 0-1-1 0-1 0-47 0-1 0 0-1-1 0zm52-36l0-23 0-1 1-1 4 0 1 1 0 1 0 51 0 1-1 0-4 0-1 0 0-1 0-22-19 0-1-1-1-1 0-3 1-1 1 0z"/></symbol><symbol id="g43" viewBox="0 -84 94 100" preserveAspectRatio="none"><path d="M90-37l1 1 0 4-1 0 0 1-86 0-1-1 0-4 0-1 1 0zm-43-9l-5 0-6-1-5-1-5-2-4-2-3-3-3-4 0-5 0-4 3-4 3-3 4-3 5-1 5-2 6 0 5 0 5 0 5 1 6 1 4 2 5 2 3 3 2 4 1 4-1 5-2 3-3 3-5 3-4 2-6 1-5 1-5 0zm0-29l-4 0-4 0-4 1-4 1-3 2-3 2-1 2-1 3 1 3 1 3 3 2 3 1 4 1 4 1 4 1 4 0 3 0 4-1 4-1 4-1 3-1 3-2 2-3 1-3-1-3-2-2-3-2-3-2-4-1-4-1-4 0-3 0zm31 68l0 3-2 3-1 2-3 3-2 1-3 2-4 1-3 1-3 1-4 0-3 0-3 0-3 0-3 0-4 0-3-1-4-1-3-1-3-2-3-1-2-3-2-2-1-3 0-3 0-3 1-3 2-2 2-2 3-2 3-1 3-2 4 0 3-1 3-1 4 0 3 0 3 0 3 0 4 1 3 0 4 1 3 2 3 1 2 2 3 2 1 2 2 3 0 3zm-7 0l-1-3-2-2-3-2-4-2-3-1-4-1-4 0-3 0-3 0-4 0-4 1-4 1-3 2-3 2-2 2-1 3 1 3 2 3 3 2 3 1 4 1 4 1 4 0 3 0 3 0 4 0 4-1 3-1 4-1 3-2 2-3 1-3z"/></symbol><symbol id="g44" viewBox="0 -84 94 100" preserveAspectRatio="none"><path d="M55-28l0 3-1 4-2 3-3 3-3 3-4 1-4 2-4 0-5 0-4-2-4-1-3-3-2-3-2-3-2-4 0-3 0-5 2-3 2-4 2-2 3-3 4-1 4-2 5 0 4 0 4 2 4 1 3 3 3 3 2 3 1 4 0 4zm22 36l0 1-1 1-4 0-2-1 0-1 0-89 0-1 2-1 4 0 1 1 0 1 0 37 14 0 1 0 0 1 0 3 0 1-1 1-14 0zm-28-36l-1-3 0-3-2-2-2-2-2-2-2-1-3-1-3 0-3 0-3 1-3 1-2 2-2 2-1 2-1 3 0 3 0 2 1 3 1 2 2 2 2 2 3 1 3 1 3 0 3 0 3-1 2-1 2-2 2-2 2-2 0-3 1-2zm14-28l0 1-2 0-55 0-1-1 0-4 0-1 1 0 55 0 2 0 0 1zm-15-17l0 1-1 0-28 0-1 0 0-1 0-4 0-1 1 0 28 0 1 0 0 1z"/></symbol><symbol id="g45" viewBox="0 -84 94 100" preserveAspectRatio="none"><path d="M25-46l-2 0-2 0-1 0-1-1-1-1 0-1 0-2 0-2 0-27 0-1 1 0 4 0 1 0 0 1 0 10 46 0 0-10 0-1 1 0 4 0 1 0 0 1 0 28 0 3-1 2-2 1-4 0zm21 38l-1-1-1 0 0-1 0-20-40 0-1 0 0-1 0-3 0-1 1-1 86 0 0 1 1 0 0 1 0 3-1 1-39 0 0 20 0 1-1 0 0 1zm-22-56l0 10 0 1 1 1 1 0 1 0 40 0 1 0 1 0 1-1 0-1 0-10zm56 71l0 1-1 0-55 0-4-1-3-1-1-3 0-3 0-19 0-1 1 0 5 0 1 0 0 1 0 19 0 1 1 1 1 0 54 0 1 0 0 1z"/></symbol><symbol id="g46" viewBox="0 -84 94 100" preserveAspectRatio="none"><path d="M83 9l-1 0 0 1-1 0-50 0-4-1-2-1-1-2-1-4 0-7 1-4 1-2 3-1 3 0 40 0 2 0 0-1 1 0 0-2 0-5 0-2-1 0 0-1-1 0-47 0-1 0-1 0 0-1 0-3 0-1 1 0 1 0 48 0 2 0 1 0 2 0 1 1 1 1 0 1 0 2 0 2 0 7 0 4-1 2-3 1-4 0-40 0-1 1-1 0 0 2 0 6 0 1 1 1 1 0 49 0 1 0 0 1 1 0zm-46-89l-1 7-1 7 2 3 2 3 2 3 3 3 3 3 3 3 4 2 3 1 1 1 0 1-2 3-1 1-1 0-3-2-4-2-3-2-3-2-3-3-2-3-2-3-2-2-4 5-5 6-5 5-7 5-1 0-1 0-3-3 0-1 1-1 5-4 5-4 4-5 3-4 3-5 1-5 1-5 1-6 0-1 1 0 5 0 1 0 0 1zm43 44l0 1-1 1-4 0-1-1 0-1 0-45 0-1 1-1 4 0 1 1 0 1z"/></symbol><symbol id="g47" viewBox="0 -84 94 100" preserveAspectRatio="none"><path d="M52-68l-2 5-2 4-3 4-3 5 4 4 5 4 5 4 5 3 1 1 0 1-2 3-1 1-1 0-6-3-5-4-5-5-5-5-6 6-6 5-7 5-7 4-1 0-1 0-2-4 0-1 1-1 11-7 10-8 9-9 6-11 0-1 0-1 0-1-2 0-29 0-1 0 0-1 0-3 0-1 1-1 32 0 4 1 3 1 1 3-1 3zm22 12l0-25 0-1 1-1 4 0 1 1 0 1 0 64 0 1-1 1-4 0-1-1 0-1 0-33-19 0-1 0-1-1 0-4 1-1 1 0zm10 63l-1 0 0 1-1 0-50 0-4-1-3-1-1-2 0-4 0-19 0-1 1 0 4 0 1 0 1 1 0 19 0 1 1 1 1 0 49 0 1 0 0 1 1 0z"/></symbol><symbol id="g48" viewBox="0 -84 94 100" preserveAspectRatio="none"><path d="M64-45l13 0 0-36 1-1 1-1 3 0 1 1 1 1 0 89-1 1-1 1-3 0-1-1-1-1 0-47-13 0 0 43 0 1-1 1-4 0-1-1 0-1 0-84 0-1 1 0 4 0 1 0 0 1zm-11 24l0 1-1 0-8 2-8 1-10 0-9 0-4 0-2-2-1-2-1-4 0-42 1-4 1-2 2-1 4 0 27 0 1 0 1 1 0 4-1 1-1 0-26 0-1 0-1 0 0 1 0 1 0 41 0 1 1 1 2 0 8 0 8 0 8-1 8-1 1 0 1 1z"/></symbol><symbol id="g49" viewBox="0 -84 94 100" preserveAspectRatio="none"><path d="M81 8l-1 1-1 1-4 0-1-1 0-1 0-89 0-1 1-1 4 0 1 1 1 1zm-63-25l-2 0-1 0-2 0-1-1 0-1-1-1 0-2 0-2 0-52 0-1 1 0 0-1 4 0 1 1 1 0 0 1 0 23 31 0 0-23 0-1 1-1 4 0 1 1 1 1 0 53-1 3-1 2-2 1-4 0zm0-30l0 22 0 1 0 1 1 0 1 1 26 0 1-1 1 0 1-1 0-1 0-22z"/></symbol><symbol id="g50" viewBox="0 -84 94 100" preserveAspectRatio="none"><path d="M79 8l0 1-1 0-54 0-3 0-3-2-1-2 0-4 0-6 0-4 2-2 2-1 4 0 43 0 1 0 1-1 0-1 0-5 0-2-1-1-1 0-50 0-1 0 0-1 0-3 0-1 1 0 25 0 0-9-39 0-1-1 0-1 0-3 0-1 1 0 86 0 1 0 0 1 0 3 0 1-1 0 0 1-40 0 0 9 19 0 2 0 2 0 1 1 1 0 1 1 1 1 0 2 0 2 0 6-1 4-1 2-2 1-4 1-43 0-1 0-1 0 0 1 0 1 0 5 0 1 0 1 1 0 1 0 52 0 1 1zm0-61l-1 1-1 1-61 0-1-1-1 0 0-1 0-3 1-1 1 0 12 0 0-19-10 0-1-1-1 0 0-1 0-3 0-1 1 0 1 0 57 0 1 0 1 1 0 3-1 1-1 1-10 0 0 19 12 0 1 0 1 1zm-44-4l24 0 0-19-24 0z"/></symbol><symbol id="g51" viewBox="0 -84 94 100" preserveAspectRatio="none"><path d="M53-21l0 1-1 0-4 1-4 1-4 0-5 1-5 0-4 0-5 0-5 0-4 0-2-2-1-2-1-4 0-42 1-4 1-2 2-1 4 0 28 0 1 0 1 1 0 4-1 1-1 0-27 0-1 0-1 1 0 1 0 41 0 1 1 1 2 0 8 0 9 0 8-1 8-1 1 0 1 1zm7-28l0-31 0-1 1 0 4 0 1 0 0 1 0 84 0 1-1 1-4 0-1-1 0-1 0-47-22 0-1-1 0-4 1-1zm24 57l-1 1-1 1-3 0-1-1-1-1 0-89 1-1 1-1 3 0 1 1 1 1z"/></symbol><symbol id="g52" viewBox="0 -84 94 100" preserveAspectRatio="none"><path d="M15-17l-2 0-2 0-1-1-1 0-1-1 0-1 0-2 0-2 0-51 0-1 1 0 4 0 1 0 0 1 0 23 25 0 0-23 0-1 1 0 4 0 1 0 1 1 0 27 14 0 0-32 0-1 1 0 4 0 1 0 0 1 0 84 0 1-1 1-4 0-1-1 0-1 0-46-14 0 0 19-1 3-1 2-2 1-4 0zm69 25l-1 1-1 1-3 0-1-1-1-1 0-89 1-1 1-1 3 0 1 1 1 1zm-70-54l0 21 1 1 0 1 1 0 1 0 19 0 1 0 1 0 1-1 0-1 0-21z"/></symbol><symbol id="g53" viewBox="0 -84 94 100" preserveAspectRatio="none"><path d="M64-45l13 0 0-36 1-1 1-1 3 0 1 1 1 1 0 89-1 1-1 1-3 0-1-1-1-1 0-47-13 0 0 43 0 1-1 1-4 0-1-1 0-1 0-84 0-1 1 0 4 0 1 0 0 1zm-46 18l0 1 1 1 1 1 9 0 7-1 7-1 7-1 2 0 0 1 1 3 0 1-2 0-6 2-8 1-9 1-9 0-4-1-2-1-1-3-1-3 0-48 1-1 1-1 4 0 1 1 0 1z"/></symbol><symbol id="g54" viewBox="0 -84 94 100" preserveAspectRatio="none"><path d="M90-12l1 1 0 3 0 1-1 0 0 1-86 0-1-1 0-1 0-3 0-1 1 0zm-11-22l-1 1-1 0-54 0-3 0-3-1-1-3 0-3 0-29 0-4 1-2 3-1 3 0 54 0 1 0 0 1 0 3 0 2-1 0-52 0-1 0-1 0 0 1 0 1 0 26 0 2 1 1 1 0 52 0 1 0 1 1z"/></symbol><symbol id="g55" viewBox="0 -84 94 100" preserveAspectRatio="none"><path d="M17-13l-4-1-2-1-1-2-1-4 0-20 1-3 1-2 3-2 3 0 26 0 1 0 1-1 0-1 0-17 0-1-1-1-1 0-32 0-1 0 0-1 0-4 0-1 1 0 33 0 2 0 2 0 1 1 1 0 1 1 0 2 1 1 0 2 0 19-1 4-1 2-2 1-4 0-26 0-1 0-1 1 0 1 0 18 1 2 1 1 12 0 11-1 11-2 11-2 1 1 0 1 1 3 0 1-1 0-6 2-6 1-5 0-6 1-6 0-6 1-6 0-6 0zm60 21l0 1-1 1-4 0-2-1 0-1 0-89 0-1 2-1 4 0 1 1 0 1 0 36 14 0 1 1 0 4 0 1-1 0-14 0z"/></symbol><symbol id="g56" viewBox="0 -84 94 100" preserveAspectRatio="none"><path d="M90-12l1 1 0 3 0 1-1 0 0 1-86 0-1-1 0-1 0-3 0-1 1 0zm-67-20l-2 0-1 0-2-1-1 0 0-1-1-1 0-2 0-2 0-38 0-1 1-1 5 0 0 1 1 0 0 1 0 16 48 0 0-16 0-1 1 0 0-1 4 0 1 0 0 1 1 0 0 1 0 39-1 3-1 2-2 1-4 0zm0-23l0 15 0 1 0 1 1 0 1 0 43 0 2 0 1-1 0-1 0-15z"/></symbol><symbol id="g57" viewBox="0 -84 94 100" preserveAspectRatio="none"><path d="M81-43l-1 1-1 0-65 0-1 0-1-1 0-1 0-3 1-1 1 0 13 0 0-27-11 0-1 0-1-1 0-3 0-1 1 0 1-1 61 0 1 1 1 1 0 3-1 1-1 0-11 0 0 27 13 0 1 0 1 1zm-53 52l-1 0 0-1 0-32-23 0-1-1 0-1 0-3 0-1 1 0 86 0 1 1 0 3 0 1-1 0 0 1-24 0 0 32 0 1-1 0-4 0-1 0 0-1 0-32-26 0 0 32-1 0 0 1-1 0zm6-57l26 0 0-27-26 0z"/></symbol><symbol id="g58" viewBox="0 -84 94 100" preserveAspectRatio="none"><path d="M77 8l0 1-1 1-4 0-2-1 0-1 0-89 0-1 2-1 4 0 1 1 0 1 0 39 14 0 1 0 0 1 0 4 0 1-1 0-14 0zm-13-28l1 0 1 1 0 4 0 1-1 0-7 1-8 1-8 1-8 0-3 1-4 0-4 0-4 0-4 0-4 0-3 0-3 0-1 0 0-1-1 0 0-1 0-3 1-1 1 0 2 0 2 0 3 0 2 0 3 0 3 0 3 0 3 0 0-28 0-1 1 0 5 0 1 1 0 28 1 0 4-1 3 0 4 0 4-1 4 0 4 0 4-1 3-1zm-54-53l0-1 1 0 37 0 3 0 1 0 2 1 1 0 0 2 1 1 0 2 0 2 0 4 0 4 0 4 0 5-1 4 0 4-1 4-1 4 0 1-1 0-4 0-1 0-1-2 1-3 1-5 1-4 0-4 0-5 1-4 0-4-1-3 0-2-1 0-1 0-36 0-1-1 0-1z"/></symbol><symbol id="g59" viewBox="0 -84 94 100" preserveAspectRatio="none"><path d="M17-74l1-3 1-2 2-1 4-1 44 0 2 0 2 1 1 0 1 1 1 1 0 1 1 2 0 1 0 18-1 4-1 2-2 1-4 1-19 0 0 12 40 0 0 1 1 0 0 1 0 3 0 1-1 0-86 0-1 0 0-1 0-3 0-1 1 0 0-1 39 0 0-12-18 0-2 0-2-1-1 0-1-1-1-1 0-1-1-2 0-2zm10-1l-2 1-1 1 0 1 0 15 0 1 1 1 2 1 41 0 1-1 1-1 0-1 0-15 0-1-1-1-1-1zm-12 56l0-1 1 0 53 0 4 1 3 1 1 2 0 4 0 21 0 1-1 1-4 0-2-1 0-1 0-21 0-1 0-1-1 0-1 0-52 0-1 0 0-1z"/></symbol><symbol id="g60" viewBox="0 -84 94 100" preserveAspectRatio="none"><path d="M45 9l-1 0-1-1 0-33-39 0-1-1 0-4 0-1 1 0 86 0 1 1 0 4-1 0 0 1-40 0 0 33 0 1-1 0zm5-89l0 1 0 1 0 1-1 1 1 1 0 1 1 1 0 1 2 4 3 3 4 3 4 3 4 3 5 2 5 3 5 1 1 0 0 1 0 1-2 3 0 1-1 0-1 0-5-2-5-2-5-2-5-3-4-4-4-3-3-4-3-4-5 8-7 6-9 6-11 5-2 1 0-1-2-4 0-1 7-3 6-3 5-4 5-4 4-5 4-5 2-4 1-5 0-1 1 0 4 0 1 0 0 1 1 0-1 1z"/></symbol><symbol id="g61" viewBox="0 -84 94 100" preserveAspectRatio="none"><path d="M81-8l-1 4-1 3-3 4-4 2-4 2-5 2-5 1-6 0-6 0-6-1-5-2-4-2-3-2-3-4-1-3-1-4 1-4 1-4 3-3 3-3 4-2 5-1 6-1 6 0 6 0 5 1 5 1 4 2 4 3 3 3 1 4 1 4zm-7 0l-1-3-1-2-2-2-3-2-3-2-4-1-4 0-4 0-5 0-4 0-4 1-3 2-2 2-2 2-2 2 0 3 0 3 2 2 2 2 2 2 3 1 4 1 4 1 5 0 4 0 4-1 4-1 3-1 3-2 2-2 1-2 1-3zm-22-62l-2 5-2 4-3 4-3 3 4 4 4 3 5 3 6 3 1 0 0 1 0 1-2 4-1 0-1 0-3-1-2-1-3-2-2-2-3-1-3-2-2-3-3-2-6 5-6 5-7 5-7 3-1 0-1 0-2-4 0-1 1 0 12-7 10-8 8-8 6-10 0-1 0-1 0-1-2 0-29 0-1 0 0-1 0-3 0-1 1-1 32 0 4 1 3 1 1 3-1 3zm22 11l0-22 0-1 1-1 4 0 1 1 0 1 0 52 0 1-1 1-4 0-1-1 0-1 0-24-19 0-1-1 0-1 0-3 0-1 1 0z"/></symbol><symbol id="g62" viewBox="0 -84 94 100" preserveAspectRatio="none"><path d="M59-18l-1 1-1-1-3-2-2-2-3-2-3-3-2-3-3-2-2-3-2-3-6 6-6 6-7 6-7 6-1 0-1 0-3-3 0-1 0-1 1 0 14-12 11-11 7-12 5-12 0-2 0-1-2 0-30 0-1 0 0-1 0-4 0-1 1 0 33 0 4 0 3 2 0 2 0 4-5 12-6 12 2 3 3 3 2 3 3 3 2 2 3 3 3 2 2 2 0 1zm21 26l0 1-1 1-4 0-1-1 0-1 0-52-19 0-1 0-1-1 0-4 1-1 1 0 19 0 0-31 0-1 1-1 4 0 1 1 0 1z"/></symbol><symbol id="g63" viewBox="0 -84 94 100" preserveAspectRatio="none"><path d="M78-8l0 4-2 3-3 4-3 2-5 2-5 2-5 1-6 0-6 0-6-1-5-2-4-2-3-2-3-4-1-3-1-4 1-4 1-4 3-3 3-3 4-2 5-1 6-1 6 0 6 0 5 1 5 1 5 2 3 3 3 3 2 4 0 4zm-7 0l0-3-2-2-2-2-3-2-3-2-4-1-4 0-4 0-5 0-4 0-3 1-4 2-2 2-2 2-1 2-1 3 1 3 1 2 2 2 2 2 4 1 3 1 4 1 5 0 4 0 4-1 4-1 3-1 3-2 2-2 2-2 0-3zm-20-62l-2 4-2 4-2 4-3 4 3 3 5 3 5 4 6 2 1 1 0 1-2 4-1 0-1 0-3-1-2-1-3-2-2-2-3-1-3-3-2-2-3-2-6 6-7 5-7 4-7 3 0 1-1 0-1-1-2-3 0-1 1-1 12-7 10-7 8-9 6-10 1-1 0-1-1 0-1 0-30 0 0-1-1-1 0-3 1-1 1 0 31 0 5 0 2 2 1 2-1 4zm26 41l0 1-1 0-4 0-2 0 0-1 0-52 0-1 2-1 4 0 1 1 0 1 0 24 14 0 1 0 0 1 0 3 0 1-1 1-14 0z"/></symbol><symbol id="g64" viewBox="0 -84 94 100" preserveAspectRatio="none"><path d="M90-40l1 0 0 1 0 3 0 1-1 0 0 1-40 0 0 12 5 0 5 1 4 1 5 1 3 3 3 2 2 4 1 4-1 5-2 3-4 3-4 2-5 2-5 1-5 0-5 0-3 0-4 0-3 0-4-1-3-1-3-1-3-1-3-2-2-2-2-2-1-3 0-3 0-4 2-4 3-2 4-3 4-1 5-1 5-1 4 0 0-12-39 0 0-1-1 0 0-1 0-3 0-1 1 0zm-20-30l-6 5-8 4 3 1 3 1 4 1 3 1 4 1 4 0 3 1 3 1 1 0 0 1-1 3-1 1-1 0-4 0-4-1-4-1-4-1-4-2-5-1-4-1-4-1-8 3-9 3-9 2-9 2-1 0-1-1-1-3 0-1 1-1 7-1 8-2 7-2 7-3 7-2 6-3 5-3 5-3 1-1 0-1-1 0-1 0-43 0-1-1 0-1 0-3 0-1 1 0 46 0 6 0 3 2 0 4-4 4zm1 64l-1-3-2-2-3-2-3-1-4-1-4-1-4 0-3 0-3 0-4 0-4 1-4 1-3 1-3 2-2 2-1 3 1 3 2 2 3 2 3 1 4 1 4 1 4 0 3 0 3 0 4 0 4-1 4-1 3-1 3-2 2-2 1-3z"/></symbol><symbol id="g65" viewBox="0 -84 94 100" preserveAspectRatio="none"><path d="M28 9l-3 0-1-1-2 0-1-1 0-1-1-1 0-1 0-2 0-29 0-1 1 0 5 0 1 0 0 1 0 11 43 0 0-11 1-1 5 0 1 0 0 1 0 29 0 4-1 2-3 0-3 1zm35-53l0 1 0 1-1 0-4 1-5 1-6 1-6 0-6 1-6 0-6 0-5 0-3 0-3-2-1-2 0-4 0-26 0-4 1-2 2-1 4 0 34 0 1 0 1 1 0 4-1 1-1 0-32 0-2 0 0 1 0 1 0 25 0 1 0 1 1 0 1 0 5 0 5 0 5 0 6-1 5 0 5-1 5-1 5-1 1 0 1 1zm-36 34l0 10 0 2 1 1 1 0 39 0 1 0 1-1 0-2 0-10zm50-25l0 1-1 0-4 0-2 0 0-1 0-46 0-1 2-1 4 0 1 1 0 1 0 20 14 0 1 0 0 1 0 4-1 1-14 0z"/></symbol><symbol id="g66" viewBox="0 -84 94 100" preserveAspectRatio="none"><path d="M73-52l-1 2-1 2-2 2-3 2-3 1-4 1-4 1-5 0 0 6 40 0 0 1 1 0 0 4-1 1-86 0-1 0 0-1 0-4 1-1 39 0 0-6-9-1-7-2-5-4-1-4 0-3 2-2 2-2 3-1 4-2 4-1 5 0 6-1 5 1 5 0 5 1 4 2 3 1 2 2 1 2 1 3zm6 60l0 1-1 0-54 0-3 0-3-2-1-2 0-4 0-3 0-4 2-2 2-1 4-1 43 0 1 0 1 0 0-1 0-1 0-2 0-2-1-1-1 0-50 0-1 0 0-1 0-3 0-1 1 0 51 0 2 0 2 0 1 0 1 1 1 1 1 1 0 2 0 2 0 4-1 4-1 2-2 1-4 0-43 0-1 0-1 0 0 1 0 1 0 3 0 1 0 1 1 0 1 0 52 0 1 1zm3-76l0 1-1 0-68 0-1 0 0-1-1 0 0-3 1-1 1-1 68 0 1 1 0 1zm-17 16l-1-3-4-2-6-1-7 0-8 0-6 1-3 2-2 3 2 3 3 1 6 2 8 0 7 0 6-2 4-1 1-3zm-6-31l1 1 1 1 0 3-1 1-1 0-25 0-1 0-1-1 0-3 1-1 1-1z"/></symbol><symbol id="g67" viewBox="0 -84 94 100" preserveAspectRatio="none"><path d="M20-8l1-4 1-4 3-3 3-3 4-2 5-1 6-1 6 0 6 0 5 1 5 1 5 2 3 3 3 3 2 4 0 4 0 4-2 3-3 4-3 2-5 2-5 2-5 1-6 0-6 0-6-1-5-2-4-2-3-2-3-4-1-3-1-4zm31-70l-1 9-2 9 4 5 4 4 4 5 6 3 0 1-2 4-1 0-1 0-5-4-4-4-4-3-3-4-3 5-4 6-4 5-6 5-1 1 0-1-3-3 0-1 4-4 4-4-3-3-3-3-3-2-2-4-2 5-4 5-4 4-4 4-1 0-1 0-3-3 0-1 1-1 4-4 3-4 3-4 3-4 2-4 1-5 1-5 0-6 1-1 4 1 1 0 1 1-1 4 0 4-1 4-1 3 2 4 3 4 3 3 3 3 4-6 2-7 2-8 1-8 0-1 1-1 4 1 1 0 0 1zm-24 70l1 3 1 2 2 2 2 2 4 1 3 1 4 1 5 0 4 0 4-1 4-1 3-1 3-2 2-2 2-2 0-3 0-3-2-2-2-2-3-2-3-2-4-1-4 0-4 0-5 0-4 0-3 1-4 2-2 2-2 2-1 2-1 3zm50-20l0 1-1 0-4 0-2 0 0-1 0-53 0-1 2-1 4 0 1 1 0 1 0 24 14 0 1 0 0 1 0 4-1 1-14 0z"/></symbol><symbol id="g68" viewBox="0 -84 94 100" preserveAspectRatio="none"><path d="M43-12l0-18-20 0-4 0-2-1-1-3 0-3 0-13 0-3 1-3 3-1 4 0 45 0 1 0 1 0 0-1 0-1 0-11 0-1 0-1-1 0-1 0-52 0-1 0 0-1 0-4 0-1 1 0 53 0 2 0 2 0 1 1 1 1 1 1 0 1 1 1 0 2 0 13-1 3-1 3-2 1-4 0-45 0-1 0-1 0 0 1 0 1 0 11 0 1 0 1 1 0 1 0 53 0 1 0 0 1 1 0 0 1 0 3 0 1-1 0-29 0 0 18 40 0 1 1 0 3 0 1-1 0 0 1-86 0-1-1 0-1 0-3 0-1 1 0z"/></symbol><symbol id="g69" viewBox="0 -84 94 100" preserveAspectRatio="none"><path d="M15-74l1-1 1 0 53 0 3 0 1 1 2 0 0 1 1 1 1 2 0 1 0 2 0 3 0 4 0 4 0 5-1 5 0 5-1 6 0 5-1 5 0 5-1 4-1 4 17 0 1 1 0 3 0 1-1 0 0 1-86 0-1-1 0-1 0-3 0-1 1 0 63 0 0-3 1-4 0-5 1-4 1-6 0-5 1-6 0-5 0-5 0-5 0-4 0-3 0-1 0-1-1 0-1 0-52 0-1 0-1-1z"/></symbol><symbol id="g70" viewBox="0 -84 94 100" preserveAspectRatio="none"><path d="M79-35l-1 1-1 0-27 0 0 22 40 0 1 1 0 3 0 1-1 0 0 1-86 0-1-1 0-1 0-3 0-1 1 0 39 0 0-22-20 0-3 0-3-1-1-3 0-3 0-28 0-4 1-2 3-1 3 0 54 0 1 0 0 1 0 3 0 2-1 0-52 0-1 0-1 0 0 1 0 2 0 24 0 2 1 1 1 0 52 0 1 0 1 1z"/></symbol><symbol id="g71" viewBox="0 -84 94 100" preserveAspectRatio="none"><path d="M15-79l1-1 1 0 53 0 2 0 1 1 2 0 1 1 0 1 1 2 0 1 0 2 0 8-1 8-1 9-2 9 17 0 1 0 0 1 0 3 0 1-1 0 0 1-40 0 0 40 0 1-1 0-4 0-1 0-1-1 0-40-39 0-1-1 0-1 0-3 0-1 1 0 62 0 1-4 1-5 1-5 1-4 0-5 0-4 0-4 0-3 0-1-1-1-1 0-51 0-1 0-1-1z"/></symbol><symbol id="g72" viewBox="0 -84 94 100" preserveAspectRatio="none"><path d="M17-14l0-4 1-2 3-1 3 0 19 0 0-12-39 0-1-1 0-1 0-3 0-1 1 0 86 0 1 0 0 1 0 3 0 1-1 0 0 1-40 0 0 12 19 0 3 0 1 0 2 1 1 0 0 1 1 1 0 2 0 2 0 16 0 3-2 2-2 1-4 1-45 0-2 0-1-1-2 0-1-1 0-1-1-1 0-1 0-2zm30-34l-5 0-5-1-5-1-5-1-5-3-3-2-2-4-1-5 1-5 2-3 3-3 5-3 5-1 5-1 5-1 5 0 5 0 5 1 6 1 5 2 4 2 3 3 2 4 1 4-1 4-2 4-3 3-5 2-4 2-6 1-5 1-5 0zm0-28l-4 0-3 1-4 0-4 1-4 2-2 2-2 2-1 3 1 3 2 2 2 2 4 2 4 1 4 0 3 1 4 0 3 0 4-1 4 0 4-1 4-2 2-2 2-2 1-3-1-3-2-2-2-2-4-2-4-1-4 0-4-1-3 0zm-21 61l-1 0-1 0 0 1 0 2 0 12 0 1 0 1 1 1 1 0 42 0 1 0 1-1 0-1 0-1 0-12 0-2 0-1-1 0-1 0z"/></symbol><symbol id="g73" viewBox="0 -84 94 100" preserveAspectRatio="none"><path d="M11-72l0-4 1-2 2-1 4 0 28 0 2 0 2 0 1 1 1 0 1 1 0 1 0 2 0 2 0 28 0 3-1 2-3 1-3 1-28 0-2 0-2-1-1 0-1-1-1-1 0-1 0-2 0-1zm68 81l0 1-1 0-50 0-4-1-3-1-1-2 0-4 0-7 0-4 2-2 2-1 4 0 40 0 1 0 1-1 0-2 0-5 0-2-1-1-1 0-47 0-1 0 0-1 0-3 0-1 1 0 48 0 2 0 2 0 1 0 1 1 1 1 1 1 0 2 0 2 0 7 0 4-2 2-2 1-4 0-40 0-1 1-1 0 0 2 0 6 0 1 0 1 1 0 1 0 49 0 1 0 0 1zm-59-82l-1 0-1 0 0 1 0 2 0 24 0 1 0 1 1 0 1 1 24 0 1-1 1 0 0-1 0-1 0-24 0-2 0-1-1 0-1 0zm57 38l0 1-1 0-4 0-2 0 0-1 0-46 0-1 2-1 4 0 1 1 0 1 0 20 14 0 1 0 0 1 0 3 0 1-1 1-14 0z"/></symbol><symbol id="g74" viewBox="0 -84 94 100" preserveAspectRatio="none"><path d="M56-56l-1 4-1 5-2 4-3 3-4 3-4 2-4 1-5 0-5 0-5-1-4-2-3-3-3-3-2-4-1-5-1-4 1-5 1-5 2-4 3-3 3-3 4-2 5-1 5 0 4 0 5 1 4 2 3 3 3 3 3 4 1 4 1 6zm22 48l0 4-2 3-3 4-3 2-5 2-5 2-5 1-6 0-6 0-6-1-5-2-4-2-3-2-3-4-1-3-1-4 1-4 1-4 3-3 3-3 4-2 5-1 6-1 6 0 6 0 5 1 5 1 5 2 3 3 3 3 2 4 0 4zm-30-48l0-4-1-4-1-2-2-3-3-1-3-2-3-1-3 0-4 0-3 1-3 2-2 1-2 3-1 2-1 4-1 4 1 3 0 3 2 3 2 3 2 1 3 2 3 1 4 0 3 0 3-1 3-2 3-1 2-3 1-3 1-3 0-3zm23 48l0-3-2-2-2-2-3-2-3-2-4-1-4 0-4 0-5 0-4 0-3 1-4 2-2 2-2 2-1 2-1 3 1 3 1 2 2 2 2 2 4 1 3 1 4 1 5 0 4 0 4-1 4-1 3-1 3-2 2-2 2-2 0-3zm6-21l0 1-1 0-4 0-2 0 0-1 0-52 0-1 2-1 4 0 1 1 0 1 0 16 14 0 1 0 0 1 0 4-1 1-14 0 0 12 14 0 1 0 0 1 0 4-1 1-14 0z"/></symbol><symbol id="g75" viewBox="0 -84 94 100" preserveAspectRatio="none"><path d="M37-78l-1 7-1 6 2 4 1 4 3 4 3 3 3 3 3 3 3 3 4 2 1 0 0 1-1 0-2 4-1 0-1 0-2-1-3-2-3-2-3-3-3-3-3-3-2-4-2-3-4 7-5 7-6 6-7 5-1 0-1 0-3-4 0-1 1 0 10-9 8-10 4-12 2-13 0-1 1 0 5 0 1 2zm-15 55l1-1 1 0 49 0 4 1 2 1 1 2 0 4 0 25 0 1-1 0-4 0-1 0 0-1 0-25-1-1-1-1-1 0-47 0-1 0-1-1zm58-8l0 1-1 1-4 0-1-1 0-1 0-50 0-1 1-1 4 0 1 1 0 1z"/></symbol><symbol id="g76" viewBox="0 -84 94 100" preserveAspectRatio="none"><path d="M80 8l0 1-1 1-4 0-1-1 0-1 0-89 0-1 1-1 4 0 1 1 0 1zm-13-31l0 1-1 1-3 1-3 0-4 1-4 0-4 1-5 0-4 1-5 0-4 0-4 1-4 0-3 0-4-1-2-1-2-3 0-4 0-43 0-4 2-2 2-1 4 0 34 0 1 0 0 1 0 4 0 1-1 0-33 0-1 0-1 0 0 1 0 1 0 42 0 1 0 1 1 0 1 0 5 0 6 0 5 0 6-1 6 0 6-1 6-1 5-1 1 0 1 1z"/></symbol><symbol id="g77" viewBox="0 -84 94 100" preserveAspectRatio="none"><path d="M57-18l0 1-1 0-1-1-2-2-3-2-2-2-3-3-3-3-2-2-2-3-3-3-5 6-6 6-7 6-8 6-1 0-3-3 0-1 0-1 15-12 10-11 8-12 5-12 0-2-1-1-1 0-30 0-1 0 0-1 0-4 0-1 1 0 33 0 4 0 2 2 1 2-1 4-4 12-7 12 3 3 2 3 3 3 2 3 3 2 3 3 2 2 3 2 0 1zm20 26l0 1-1 1-4 0-2-1 0-1 0-89 0-1 2-1 4 0 1 1 0 1 0 36 14 0 1 1 0 4 0 1-1 0-14 0z"/></symbol><symbol id="g78" viewBox="0 -84 94 100" preserveAspectRatio="none"><path d="M83 9l-1 0 0 1-1 0-50 0-4-1-2-1-1-2-1-4 0-7 1-3 1-2 3-1 3-1 40 0 2 0 1-1 0-1 0-5 0-1-1-1-1 0-47 0-1 0 0-1-1 0 0-4 1-1 1 0 48 0 2 0 1 0 2 1 1 0 1 1 0 2 0 1 0 2 0 7 0 4-1 2-3 1-4 0-40 0-1 0-1 1 0 1 0 6 0 1 1 1 1 0 49 0 1 0 0 1 1 0zm-64-45l-4 0-2-2-2-2 0-3 0-11 1-4 1-2 2-1 4 0 20 0 1 0 1-1 0-1 0-8 0-1 0-1-1 0-1-1-26 0-1 0 0-1 0-3 0-1 1-1 27 0 2 1 2 0 1 0 1 1 1 1 1 1 0 2 0 2 0 10-1 3-1 2-2 2-4 0-20 0-1 0-1 0 0 1 0 1 0 9 1 2 1 0 5 0 4 0 4 0 4 0 4-1 4 0 5-1 4 0 1 0 1 0 0 1 0 3 1 1-1 0-1 1-5 0-4 1-4 1-5 0-4 0-5 0-4 0-5 0zm55-34l0-11 0-1 1-1 4 0 1 1 0 1 0 47 0 2-1 0-4 0-1 0 0-2 0-15-18 0-1 0 0-1 0-3 0-1 1 0 18 0 0-11-18 0-1 0 0-1 0-3 0-1 1 0z"/></symbol><symbol id="g79" viewBox="0 -84 94 100" preserveAspectRatio="none"><path d="M80 8l0 1-1 1-4 0-1-1 0-1 0-52-22 0-1 0-1-1 0-4 1-1 1 0 22 0 0-31 0-1 1-1 4 0 1 1 0 1zm-44-84l0 6 0 7-1 5-1 6 1 4 2 5 2 4 3 5 3 4 3 4 4 4 4 4 1 0 0 1-1 1-2 3-1 0-1 0-3-3-3-3-3-4-3-3-2-4-3-4-2-4-2-3-4 8-4 8-6 8-7 7-1 0-1 0-2-3-1-1 0-1 1 0 6-6 4-6 4-7 4-7 2-8 2-8 1-9 0-10 0-1 1 0 0-1 5 0 1 1 0 1z"/></symbol><symbol id="g80" viewBox="0 -84 94 100" preserveAspectRatio="none"><path d="M80 8l0 1-1 1-4 0-1-1 0-1 0-50-18 0-1 6-1 5-2 5-3 4-3 4-4 3-5 2-5 1-6-1-5-2-4-4-4-4-2-5-2-5-1-6 0-5 0-6 1-6 2-6 2-4 4-5 4-3 5-2 6-1 5 1 5 2 4 3 3 3 3 5 2 5 1 5 1 5 18 0 0-33 0-1 1-1 4 0 1 1 0 1zm-31-53l-1-4 0-5-1-4-2-4-3-3-2-3-4-2-4 0-5 0-3 2-3 3-2 3-2 4-1 4 0 5-1 4 0 5 1 4 1 5 2 4 2 3 3 3 3 2 5 0 4 0 4-2 2-3 3-3 2-4 1-5 0-4 1-5z"/></symbol><symbol id="g81" viewBox="0 -84 94 100" preserveAspectRatio="none"><path d="M74-59l0-22 0-1 1-1 4 0 1 1 0 1 0 64 0 1-1 1-4 0-1-1 0-1 0-36-18 0-1 0-1-1 0-3 1-1 1-1zm-8 23l0 1-1 0-5 1-5 1-6 0-6 1-4-1-2-1-1-3 0-3 0-30 0-3 1-2 3-1 3-1 16 0 1 1 0 4 0 1-1 0-15 0-1 0-1 0 0 1 0 1 0 29 1 1 1 1 5 0 6-1 4 0 5-1 1 0 1 1zm18 43l-1 0 0 1-1 0-50 0-4-1-3-1-1-2 0-4 0-19 0-1 1 0 4 0 1 0 1 1 0 19 0 1 1 1 1 0 49 0 1 0 0 1 1 0zm-50-42l0 1-1 1-1 0-4 0-4 1-3 0-4 0-4-1-2-2-1-2-1-4 0-29 1-3 1-2 2-1 4-1 15 0 1 1 0 4 0 1-1 0-14 0-1 0-1 0 0 1 0 1 0 28 0 1 0 1 1 1 1 0 4 0 3 0 3 0 4-1 1 1 0 1z"/></symbol><symbol id="g82" viewBox="0 -84 94 100" preserveAspectRatio="none"><path d="M51-70l-2 4-2 4-2 4-3 4 3 4 5 3 5 3 6 3 1 0 0 1 0 1-2 3-1 1-1 0 0-1-3-1-2-1-3-1-2-2-3-2-3-2-2-2-3-2-6 5-7 5-7 4-7 4-1 0-1 0-2-4 0-1 1 0 12-7 10-8 8-8 6-10 1-1 0-1-1-1-1 0-30 0-1-1 0-3 1-1 1-1 31 0 5 1 2 1 1 3-1 3zm-32 48l0-1 1 0 49 0 3 0 1 0 2 0 1 1 0 1 1 1 0 2 0 2 0 25 0 1-1 0-4 0-2 0 0-1 0-24 0-1 0-1-1 0-1 0-48 0-1-1 0-1zm58-8l0 1-1 0-4 0-2 0 0-1 0-51 0-1 2-1 4 0 1 1 0 1 0 24 14 0 1 0 0 1 0 3 0 1-1 0 0 1-14 0z"/></symbol><symbol id="g83" viewBox="0 -84 94 100" preserveAspectRatio="none"><path d="M80-35l0 1-1 0-4 0-1 0 0-1 0-20-18 0-1 4-2 4-2 3-3 3-3 3-4 1-4 1-5 1-4-1-5-1-4-2-3-3-3-3-2-4-2-4 0-5 0-5 2-4 2-4 3-3 3-3 4-2 5-1 4 0 5 0 4 1 3 2 4 2 3 3 2 3 2 4 1 4 18 0 0-20 0-1 1-1 4 0 1 1 0 1zm-49 44l-2 0-2-1-1 0-1-1-1-1 0-1 0-1 0-2 0-29 0-1 1 0 4 0 1 0 0 1 0 11 44 0 0-11 0-1 1 0 4 0 1 0 0 1 0 29 0 4-1 2-2 0-4 1zm18-67l0-3-1-4-2-2-2-3-2-2-3-1-3-1-4 0-3 0-3 1-3 1-2 2-2 2-2 3-1 4 0 3 0 4 1 3 2 3 2 2 2 2 3 1 3 1 3 0 4 0 3-1 3-1 2-2 2-2 2-3 1-3 0-4zm-19 48l0 10 1 2 1 1 1 0 38 0 1 0 1-1 1-2 0-10z"/></symbol><symbol id="g84" viewBox="0 -84 94 100" preserveAspectRatio="none"><path d="M47-49l-5 0-5-1-5-1-5-2-4-2-4-3-2-4-1-4 1-5 2-4 4-3 4-2 5-2 5-1 5 0 5-1 5 1 5 0 5 1 5 2 4 2 4 3 2 4 1 5-1 4-2 4-4 3-4 2-5 2-5 1-5 1-5 0zm0-29l-4 1-3 0-4 1-4 0-3 2-3 2-2 2 0 4 0 3 2 2 3 2 3 2 4 1 4 0 3 0 4 1 3-1 4 0 4 0 4-1 3-2 3-2 2-2 0-3 0-4-2-2-3-2-3-2-4 0-4-1-4 0-3-1zm43 35l1 1 0 4-1 0 0 1-86 0-1-1 0-4 0-1 1 0zm-11 51l0 1-1 0-54 0-3 0-3-2-1-2 0-4 0-7 0-3 2-3 2-1 4 0 43 0 1 0 1 0 0-1 0-1 0-6 0-1 0-1-1 0-1 0-50 0-1-1 0-4 0-1 1 0 51 0 2 0 2 0 1 1 1 1 1 1 1 1 0 1 0 2 0 8-1 3-1 2-2 1-4 1-43 0-1 0-1 0 0 1 0 1 0 6 0 1 0 1 1 0 1 0 52 0 1 1z"/></symbol><symbol id="g85" viewBox="0 -84 94 100" preserveAspectRatio="none"><path d="M57-62l-1 3-1 4-2 3-3 3-3 2-4 2-4 1-5 0-5 0-4-1-4-2-3-2-3-3-2-3-1-4 0-3 0-4 1-4 2-3 3-3 3-2 4-1 4-1 5 0 5 0 4 1 4 1 3 2 3 3 2 3 1 4 1 4zm17 35l0-54 0-1 1-1 4 0 1 1 0 1 0 71 0 1-1 1-4 0-1-1 0-1 0-11-20 0-1 0-1-1 0-4 1 0 1-1zm-24-35l0-3-1-3-2-2-1-1-3-2-3-1-3 0-3-1-3 1-3 0-3 1-2 2-2 1-1 2-1 3-1 3 1 5 4 4 5 2 6 1 3 0 3-1 3-1 3-1 1-2 2-2 1-3 0-2zm-18 48l-1 0 0-1 0-16-3 0-4 0-3 0-4 0-3 0-3 1-3 0-2 0 0-1-1 0 0-1 0-3 0-1 1 0 3-1 4 0 4 0 4 0 4 0 4 0 4 0 3 0 4-1 4 0 4 0 4-1 4 0 4-1 4 0 3-1 1 0 0 1 1 3 0 1-1 1-7 1-8 1-8 1-7 0 0 17 0 1-1 0-1 0zm51 21l-1 1-1 0-54 0-4-1-2-1-1-2-1-4 0-12 1-1 1-1 4 0 1 1 0 1 0 12 0 1 1 0 0 1 2 0 52 0 1 0 1 1z"/></symbol><symbol id="g86" viewBox="0 -84 94 100" preserveAspectRatio="none"><path d="M77 8l0 1-1 1-4 0-2-1 0-1 0-89 0-1 2-1 4 0 1 1 0 1 0 36 14 0 1 1 0 4 0 1-1 0-14 0zm-59-35l0 1 1 1 0 1 1 0 10 0 10-1 11-1 9-2 2 0 0 1 1 3 0 1-1 1-5 1-5 0-5 1-6 1-6 0-6 1-5 0-5 0-4-1-2-1-1-3-1-3 0-50 1-1 1 0 4 0 1 0 0 1z"/></symbol><symbol id="g87" viewBox="0 -84 94 100" preserveAspectRatio="none"><path d="M47-35l-5 0-6-1-5-1-5-3-5-2-3-4-2-5-1-5 1-6 2-4 3-4 5-3 5-2 5-1 6-1 5 0 5 0 6 1 5 1 5 2 4 3 4 4 2 4 1 6-1 5-2 5-4 4-4 2-5 3-5 1-6 1-5 0zm0-36l-4 0-4 1-4 0-4 2-3 2-3 2-2 4-1 4 1 4 2 4 3 2 3 2 4 1 4 1 4 1 4 0 3 0 4-1 5-1 3-1 4-2 3-2 2-4 0-4 0-4-2-4-3-2-4-2-3-2-5 0-4-1-3 0zm20 39l1 0 0 1 0 1 0 18 22 0 1 1 0 3 0 1-1 0 0 1-86 0-1-1 0-1 0-3 0-1 1 0 21 0 0-18 0-1 1-1 5 0 1 0 0 1 0 1 0 18 30 0 0-18 0-1 0-1 1 0z"/></symbol><symbol id="g88" viewBox="0 -84 94 100" preserveAspectRatio="none"><path d="M90-12l1 1 0 3 0 1-1 0 0 1-86 0-1-1 0-1 0-3 0-1 1 0 36 0 0-31 0-1 1 0 5 0 1 0 0 1 0 31zm-74-62l0-1 1-1 53 0 3 0 1 1 2 0 0 1 1 1 1 2 0 1 0 2 0 5 0 5 0 5 0 5-1 6-1 5 0 6-1 5-1 1-1 0-4 0-1 0 0-2 1-4 1-5 0-6 1-6 0-5 0-6 0-5 0-4 0-1-1-1-1 0-52 0-1 0 0-1z"/></symbol><symbol id="g89" viewBox="0 -84 94 100" preserveAspectRatio="none"><path d="M64-36l-1 1-1 0-4 1-5 1-6 0-6 1-6 0-6 1-6 0-5 0-3-1-3-1-1-3 0-4 0-30 0-3 1-3 2-1 4 0 34 0 1 0 1 1 0 4-1 1-1 0-32 0-2 0 0 1 0 1 0 29 0 1 0 1 1 0 1 0 5 1 5 0 5-1 5 0 6 0 5-1 5-1 5-1 1 0 0 1 1 0zm13 20l0 1-1 0-4 0-2 0 0-1 0-65 0-1 2-1 4 0 1 1 0 1 0 28 14 0 1 1 0 1 0 3 0 1-1 0-14 0zm5 23l-1 0 0 1-1 0-51 0-4-1-2-1-1-2-1-4 0-18 1-1 1-1 4 0 1 1 0 1 0 18 0 1 1 0 0 1 1 0 50 0 1 0 0 1 1 0z"/></symbol><symbol id="g90" viewBox="0 -84 94 100" preserveAspectRatio="none"><path d="M84-5l-1 3-1 3-3 3-4 2-5 2-5 1-6 1-5 0-7 0-5-1-6-1-4-2-4-2-2-3-2-3-1-3 1-4 2-3 2-2 4-3 4-1 6-2 5 0 7 0 5 0 6 0 5 2 5 1 4 3 3 2 1 3 1 4zm-36-37l-1 3-1 3-1 2-2 3-3 2-3 1-4 1-4 1-5-1-3-1-4-1-2-2-3-3-1-2-1-3 0-3 0-3 1-3 1-3 3-2 2-2 4-2 3-1 5 0 4 0 4 1 3 2 3 2 2 2 1 3 1 3 1 3zm16-14l13 0 0-25 1-1 1-1 3 0 1 1 1 1 0 56-1 1-1 1-3 0-1-1-1-1 0-25-13 0 0 22 0 1-1 1-4 0-1-1 0-1 0-52 0-1 1 0 4 0 1 0 0 1zm13 51l0-2-2-2-2-2-3-1-4-2-4 0-4-1-4 0-5 0-4 1-4 0-4 2-3 1-2 2-1 2-1 2 1 2 1 2 2 2 3 1 4 1 4 1 4 0 5 0 4 0 4 0 4-1 4-1 3-1 2-2 2-2 0-2zm-36-37l0-4-3-3-4-3-5 0-6 0-4 3-2 3-1 4 1 3 2 4 4 2 6 1 5-1 4-2 3-4 0-3zm10-22l-1 1-1 1-42 0 0-1-1 0 0-1 0-3 0-1 1 0 42 0 1 0 1 1zm-10-12l-1 1-1 1-21 0-1-1 0-1 0-3 0-1 1 0 21 0 1 0 1 1z"/></symbol><symbol id="g91" viewBox="0 -84 94 100" preserveAspectRatio="none"><path d="M70-59l-2 2-4 3-4 2-5 3 3 1 4 1 3 1 4 1 4 1 3 1 3 1 3 0 1 1 0 1-1 3-1 1-1 0-3-1-4 0-4-2-4-1-5-1-4-1-5-2-4-1-8 3-9 3-9 3-8 1-1 0-1 0 0-1-1-3 0-1 1 0 0-1 6-1 7-2 8-2 7-2 7-3 6-3 6-3 4-3 1-1 1-1-1-1-1 0-43 0-1 0 0-1 0-4 0-1 1 0 46 0 9 2-4 8zm-25 68l-1 0-1-1 0-28-39 0-1-1 0-1 0-3 0-1 1 0 86 0 1 0 0 1 0 3 0 1-1 0 0 1-40 0 0 28 0 1-1 0zm15-92l1 1 0 1 0 3 0 1-1 1-27 0-1-1-1-1 0-3 1-1 1-1z"/></symbol><symbol id="g92" viewBox="0 -84 94 100" preserveAspectRatio="none"><path d="M77-6l0 3-2 3-3 3-3 3-4 1-5 2-6 1-6 0-6 0-5-1-5-2-4-1-4-3-2-3-2-3 0-3 0-4 2-3 2-3 4-2 4-2 5-1 5-1 6 0 6 0 6 1 5 1 4 2 3 2 3 3 2 3 0 4zm-7 0l0-2-2-2-2-2-2-2-4-1-3-1-4-1-5 0-4 0-4 1-4 1-3 1-3 2-2 2-1 2 0 2 0 2 1 2 2 2 3 2 3 1 4 1 4 0 4 0 5 0 4 0 3-1 4-1 2-2 2-2 2-2 0-2zm-11-25l-1 0 0 1-1 0-6-3-5-2-5-4-5-3-6 4-6 4-6 3-8 4-1 0-2-4 0-1 1-1 6-3 6-3 5-3 4-3 4-3 4-4 3-4 3-4 1-1-1-1-1 0-31 0-1-1 0-1 0-3 0-1 1 0 33 0 5 0 2 2 1 2-1 4-2 3-3 4-2 3-3 3 4 4 5 3 5 2 4 2 1 0 0 2zm18 5l0 1-1 1-4 0-2-1 0-1 0-55 0-1 2-1 4 0 1 1 0 1 0 27 14 0 1 0 0 1 0 3 0 1-1 1-14 0zm-35-55l1 0 1 1 0 4-1 1-1 0-22 0-1 0-1-1 0-4 1-1 1 0z"/></symbol><symbol id="g93" viewBox="0 -84 94 100" preserveAspectRatio="none"><path d="M80-35l0 1-1 0-4 0-1 0 0-1 0-10-23 0-4 3-4 3-5 2-6 0-5 0-4-2-4-2-3-2-3-3-2-4-1-4-1-5 1-4 1-5 2-3 3-3 3-3 4-2 4-1 5 0 6 0 6 2 4 4 4 4 22 0 0-11 0-1 1-1 4 0 1 1 0 1zm3 44l-1 0 0 1-1 0-50 0-4-1-2-1-1-2-1-4 0-7 1-4 1-2 3-1 3 0 40 0 2 0 0-1 1 0 0-2 0-5 0-2-1 0 0-1-1 0-47 0-1 0-1 0 0-1 0-3 0-1 1 0 1 0 48 0 2 0 1 0 2 0 1 1 1 1 0 1 0 2 0 2 0 7 0 4-1 2-3 1-4 0-40 0-1 1-1 0 0 2 0 6 0 1 1 1 1 0 49 0 1 0 0 1 1 0zm-35-68l0-3-1-3-2-3-2-2-2-2-3-1-3-1-3 0-3 0-3 1-3 1-2 2-2 2-2 3 0 3-1 3 0 4 1 3 2 2 2 3 2 1 3 2 3 1 3 0 3 0 3-1 3-2 2-1 2-3 2-2 1-3 0-4zm7 0l0 4-1 4 20 0 0-13-19 0 0 3 0 2z"/></symbol><symbol id="g94" viewBox="0 -84 94 100" preserveAspectRatio="none"><path d="M77-15l0 1-1 1-4 0-2-1 0-1 0-66 0-1 2-1 4 0 1 1 0 1 0 31 14 0 1 0 0 1 0 3 0 1-1 1-14 0zm-12-20l1 0 1 1 0 3 0 1-1 0-8 1-9 1-11 0-11 0-21 0-1 0-1 0 0-1 0-3 0-1 1 0 0-1 1 0 17 0 4 0 0-20 0-1 1 0 4 0 2 0 0 1 0 20 9 0 8 0 7-1 7 0zm17 42l-1 0 0 1-1 0-52 0-4-1-3-1-1-2 0-4 0-17 0-1 1-1 4 0 1 1 1 1 0 17 0 1 1 1 1 0 51 0 1 0 0 1 1 0zm-71-82l0-1 1 0 37 0 2 0 2 0 1 1 1 1 1 1 0 1 0 2 1 2 0 5-1 6-1 6-1 6 0 1-1 0-1 0-4 0-1 0 0-2 1-5 1-5 1-6 0-6 0-1-1-1-1 0-36 0 0-1-1 0 0-1z"/></symbol><symbol id="g95" viewBox="0 -84 94 100" preserveAspectRatio="none"><path d="M80 8l0 1-1 1-4 0-1-1 0-1 0-89 0-1 1-1 4 0 1 1 0 1zm-61-21l-4-1-2-1-1-2-1-4 0-20 1-3 1-2 2-1 4-1 25 0 2 0 1-1 0-1 0-17 0-1-1-1-1 0-32 0-1 0 0-1 0-4 0-1 1 0 33 0 2 0 2 0 1 1 1 0 1 1 0 2 1 1 0 2 0 19-1 4-1 2-3 1-3 0-26 0-1 0 0 1-1 0 0 2 0 18 1 2 1 0 12 0 11-1 11-1 10-2 2 0 0 1 1 3 0 1-1 1-6 1-6 1-6 1-6 0-6 1-6 0-5 0-6 0z"/></symbol><symbol id="g96" viewBox="0 -84 94 100" preserveAspectRatio="none"><path d="M18-51l2 0 3 0 3 0 4 0 3 0 4 0 3-1 4 0 3 0 3 0 2 0 2 0 1 0 1 0 3 0 3 0 2 0 3 0 3 0 1-1 0-4 0-4 0-4 0-4 0-1-1-1-1 0-51 0-1 0-1 0 0-1 0-4 1-1 1 0 52 0 3 0 1 1 2 0 0 1 1 1 1 2 0 1 0 2 0 5 0 5 0 6-1 5 0 6-1 6 0 5-1 4 0 1-1 0 0 1-1 0-4-1-1-1 0-1 1-4 1-4 0-5 1-6-2 0-2 1-3 0-2 0-3 0-2 0-2 0-1 0-2 0-2 0-3 0-4 0-3 0-4 0-3 0-4 0-3 0-3 0-3 0-2 0-1 0 0-1 0-3 0-1 1 0zm28 13l0 1 1 0 0 1 0 24 43 0 1 1 0 3 0 1-1 0 0 1-86 0-1-1 0-1 0-3 0-1 1 0 36 0 0-24 0-1 1 0 0-1z"/></symbol><symbol id="g97" viewBox="0 -84 94 100" preserveAspectRatio="none"><path d="M23-42l-2 0-1 0-2-1-1-1 0-1-1-1 0-1 0-2 0-32 0-1 1 0 5 0 1 0 0 1 0 13 48 0 0-13 0-1 1 0 4 0 1 0 1 0 0 1 0 32-1 4-1 1-2 1-4 1zm22 51l-1 0-1-1 0-32-39 0-1 0 0-1 0-3 0-1 1-1 86 0 0 1 1 0 0 1 0 3-1 1-40 0 0 32 0 1-1 0zm-22-71l0 12 0 1 1 1 1 0 43 0 2 0 0-1 1 0 0-1 0-12z"/></symbol><symbol id="g98" viewBox="0 -84 94 100" preserveAspectRatio="none"><path d="M19-31l-3 0-1-1-2 0-1-1 0-1-1-1 0-1 0-2 0-40 1-1 5 0 1 1 0 18 29 0 0-18 1-1 4 0 1 0 1 1 0 20 20 0 0-23 0-1 1-1 4 0 1 1 0 1 0 64 0 1-1 0-4 0-1 0 0-1 0-35-20 0 0 14-1 4-1 2-2 0-4 1zm66 38l-1 1-52 0-4-1-2-1-2-2 0-4 0-19 0-1 2-1 4 0 1 1 0 1 0 19 0 1 1 1 1 0 51 0 1 1zm-67-61l0 14 0 2 1 1 1 0 25 0 1 0 0-1 1 0 0-2 0-14z"/></symbol><symbol id="g99" viewBox="0 -84 94 100" preserveAspectRatio="none"><path d="M73-41l0 3-1 3-2 3-3 3-3 2-4 1-5 1-5 1 0 12 40 0 1 1 0 3 0 1-1 0 0 1-86 0-1-1 0-1 0-3 0-1 1 0 39 0 0-12-5-1-4-1-4-1-4-2-2-3-2-3-1-3-1-3 1-4 1-3 2-3 3-3 4-2 5-1 5-1 6 0 5 0 6 1 4 1 4 2 3 3 2 3 2 3 0 4zm-8 0l-1-5-4-3-5-3-8 0-8 0-6 3-4 3-1 5 1 4 4 4 6 2 8 1 8-1 5-2 4-4 1-4zm18-23l0 1-2 1-69 0 0-1-1 0 0-1 0-3 0-1 1 0 69 0 2 0 0 1zm-24-17l1 1 1 1 0 3-1 1-1 1-25 0-2-1 0-1 0-3 0-1 2-1z"/></symbol><symbol id="g100" viewBox="0 -84 94 100" preserveAspectRatio="none"><path d="M62-41l1 0 0 1 1 3 0 1-1 0-1 0-2 1-4 0-3 1-4 0-4 1-3 0-4 0-4 1-3 0-3 0-4 0-4 0-4 0-4 0-3 0-3 0-1 0-1-1 0-3 0-1 1 0 0-1 1 0 2 0 3 0 3 0 3 0 0-32-11 0 0-1-1 0 0-1 0-3 0-1 1 0 51 0 1 0 0 1 0 3 0 1-1 1-8 0 0 31 3-1 3 0 4-1 3 0zm-28 3l2 0 2 0 2-1 2 0 0-31-18 0 0 32 3 0 2 0 3 0 2 0zm43 22l0 1-1 0-4 0-2 0 0-1 0-65 0-1 2-1 4 0 1 1 0 1 0 28 14 0 1 0 0 1 0 3 0 1-1 1-14 0zm5 23l-1 0 0 1-1 0-51 0-4-1-2-1-1-2-1-4 0-18 1-1 1-1 4 0 1 1 0 1 0 18 0 1 1 0 0 1 1 0 50 0 1 0 0 1 1 0z"/></symbol><symbol id="g101" viewBox="0 -84 94 100" preserveAspectRatio="none"><path d="M8-68l0-3 1-2 3-1 3-1 23 0 3 0 1 1 2 0 1 1 0 1 1 1 0 2 0 1 0 44 0 4-2 2-2 1-4 0-23 0-2 0-2 0-1-1-1 0-1-1 0-2 0-1 0-2zm56 23l13 0 0-36 1-1 1-1 3 0 1 1 1 1 0 89-1 1-1 1-3 0-1-1-1-1 0-47-13 0 0 43 0 1-1 1-4 0-1-1 0-1 0-84 0-1 1 0 4 0 1 0 0 1zm-47-24l-1 1-1 0 0 1-1 1 0 40 1 2 0 1 1 0 1 0 20 0 1 0 1 0 0-1 0-2 0-40 0-1 0-1-1 0-1-1z"/></symbol><symbol id="g102" viewBox="0 -84 94 100" preserveAspectRatio="none"><path d="M78-7l0 4-2 3-3 3-3 3-5 2-5 1-5 1-6 0-6 0-6-1-5-1-4-2-3-3-3-3-1-3-1-4 1-4 1-3 3-3 3-2 4-2 5-1 6-1 6 0 6 0 5 1 5 1 5 2 3 2 3 3 2 3 0 4zm-60-26l-4 0-2-1-1-3-1-3 0-12 1-4 1-2 3-1 3 0 24 0 2 0 0-1 1 0 0-2 0-8 0-2-1 0 0-1-1 0-31 0-1 0 0-1 0-4 1-1 32 0 2 0 2 1 1 0 1 1 1 1 0 1 1 2 0 1 0 12-1 3-1 2-3 1-3 1-25 0-1 0-1 1 0 1 0 10 1 2 2 1 11-1 10 0 11-1 10-2 1 0 1 1 0 3 0 1 0 1-1 0-10 1-11 2-12 0-12 0zm53 27l0-3-2-3-2-1-3-2-3-1-4-1-4 0-4 0-5 0-4 0-4 1-3 1-2 2-2 1-1 3-1 3 1 2 1 2 2 2 2 2 3 1 4 0 4 1 5 0 4 0 4-1 4 0 3-1 3-2 2-2 2-2 0-2zm6-21l0 1-1 0-4 0-2 0 0-1 0-54 0-1 2-1 4 0 1 1 0 1 0 15 14 0 1 0 0 1 0 3 0 1-1 1-14 0 0 12 14 0 1 0 0 1 0 3 0 1-1 1-14 0z"/></symbol><symbol id="g103" viewBox="0 -84 94 100" preserveAspectRatio="none"><path d="M67-17l1 0 1 0 0 4 0 1-1 1-4 0-4 1-4 0-4 1-4 0-4 1-4 0-4 0-3 0-4 0-4 0-4 1-4 0-4 0-4 0-3 0-1-1-1 0 0-1 0-3 0-1 1 0 1 0 2 0 3 0 4 0 3 0 4 0 3 0 4 0 3-1 0-10-4-1-3-1-3-1-3-2-2-3-2-2-1-3 0-3 0-4 2-3 2-3 2-2 3-2 4-2 4-1 5 0 4 0 4 1 4 2 3 2 3 2 2 3 1 3 0 4 0 3-1 3-2 2-2 3-2 2-3 1-4 1-4 1 0 10 3 0 4 0 4-1 3 0 4-1 4 0 3-1 3 0zm13 25l0 1-1 1-4 0-1-1 0-1 0-89 0-1 1-1 4 0 1 1 0 1zm-29-48l-1-5-4-3-4-2-6-1-3 0-3 1-3 1-2 1-2 1-1 2-1 2 0 3 0 2 1 2 1 2 2 1 2 1 3 1 3 1 3 0 6-1 4-2 4-3 1-4zm13-23l-1 1-1 0-53 0-1 0 0-1 0-1 0-3 0-1 1 0 53 0 1 0 1 1zm-14-13l-1 1-1 0-26 0-1 0-1-1 0-3 0-1 1 0 0-1 1 0 26 0 1 1 1 1z"/></symbol><symbol id="g104" viewBox="0 -84 94 100" preserveAspectRatio="none"><path d="M54-70l-4 14-9 12-12 11-15 8-2 0-1-1-1-3 0-1 0-1 1 0 7-3 6-4 6-4 5-5 4-5 4-5 2-5 2-6-1-2-2-1-31 0-1 0 0-1 0-4 0-1 1 0 33 0 5 1 2 1 1 2 0 3zm20 17l0-28 0-1 1-1 4 0 1 1 0 1 0 64 0 1-1 0-4 0-1 0 0-1 0-30-21 0-1-1 0-4 0-1 1 0zm10 60l-1 0 0 1-1 0-50 0-4-1-2-1-1-2-1-4 0-19 1-1 1-1 4 0 1 1 0 1 0 19 0 1 1 0 0 1 1 0 49 0 1 0 0 1 1 0z"/></symbol><symbol id="g105" viewBox="0 -84 94 100" preserveAspectRatio="none"><path d="M80-28l0 1-1 0-4 0-1 0 0-1 0-16-20 0 0 3-1 4-1 2-2 1-4 0-27 0-2 0-2 0-1 0-1-1-1-1-1-1 0-2 0-2 0-30 1-4 1-2 2-1 4 0 27 0 2 0 2 0 1 0 1 1 1 1 1 1 0 2 0 2 0 3 20 0 0-13 0-1 1-1 4 0 1 1 0 1zm1 20l0 4-2 3-3 4-3 2-5 2-4 2-6 1-6 0-6 0-6-1-4-2-5-2-3-2-2-4-2-3-1-4 1-4 2-4 2-3 3-3 5-2 4-1 6-1 6 0 6 0 6 1 4 1 5 2 3 3 3 3 2 4 0 4zm-61-64l-1 0-1 0 0 1 0 1 0 28 0 1 0 1 1 0 1 0 24 0 2 0 1-1 0-1 0-28 0-1-1-1-2 0zm54 64l0-3-2-2-2-2-2-2-4-2-4-1-4 0-4 0-4 0-5 0-3 1-3 2-3 2-2 2-1 2-1 3 1 3 1 2 2 2 3 2 3 1 3 1 5 1 4 0 4 0 4-1 4-1 4-1 2-2 2-2 2-2 0-3zm-20-42l20 0 0-12-20 0z"/></symbol><symbol id="g106" viewBox="0 -84 94 100" preserveAspectRatio="none"><path d="M17-14l0-3 1-2 3-1 3-1 45 0 3 0 1 1 2 0 1 1 0 1 1 1 0 1 0 2 0 16 0 3-2 2-2 1-4 1-45 0-2 0-1-1-2 0-1-1 0-1-1-1 0-1 0-2zm9-1l-1 0-1 1 0 2 0 12 0 1 0 1 1 1 1 0 42 0 1 0 1-1 0-1 0-1 0-12 0-2-1-1-1 0zm64-20l1 1 0 4-1 1-86 0-1 0 0-1 0-4 0-1 1 0zm-12-10l0 1-1 1-52 0-4-1-2-1-1-3-1-3 0-7 1-4 1-2 2-1 4 0 43 0 1 0 0-1 1 0 0-2 0-5 0-1-1-1-1 0-49 0-1 0 0-1-1 0 0-4 1-1 1 0 50 0 2 0 2 0 1 1 1 0 1 1 0 2 1 1 0 2 0 8-1 3-1 2-2 1-4 1-43 0-1 0-1 0 0 1 0 1 0 6 0 1 1 1 1 0 51 0 1 0 0 1z"/></symbol><symbol id="g107" viewBox="0 -84 94 100" preserveAspectRatio="none"><path d="M78-45l0 1-1 1-27 0 0 10 40 0 1 0 0 1 0 3 0 1-1 0 0 1-86 0 0-1-1 0 0-1 0-3 0-1 1 0 39 0 0-10-18 0-4-1-2-1-1-3-1-3 0-7 1-4 1-2 2-1 4 0 43 0 1 0 0-1 1 0 0-2 0-5 0-1-1-1-1 0-49 0-1 0 0-1-1 0 0-4 1-1 1 0 50 0 2 0 2 0 1 1 1 0 1 1 0 2 1 1 0 2 0 8-1 3-1 2-2 1-4 1-43 0-1 0-1 0 0 1 0 1 0 6 0 1 1 1 1 0 51 0 1 0 0 1zm-63 27l0-1 1 0 53 0 4 1 3 1 1 2 0 4 0 20 0 1-1 1-4 0-2-1 0-1 0-20 0-1 0-1-1 0-1 0-52 0-1 0 0-1z"/></symbol><symbol id="g108" viewBox="0 -84 94 100" preserveAspectRatio="none"><path d="M50-33l0 21 40 0 1 1 0 3 0 1-1 0 0 1-86 0-1-1 0-1 0-3 0-1 1 0 39 0 0-21-20 0-2 0-1 0-2-1-1 0 0-1-1-1 0-2 0-2 0-37 0-1 1-1 5 0 0 1 1 0 0 1 0 15 48 0 0-15 0-1 1 0 0-1 4 0 1 0 0 1 1 0 0 1 0 38-1 3-1 2-2 1-4 0zm-27-23l0 15 0 1 0 1 1 0 1 0 43 0 2 0 1-1 0-1 0-15z"/></symbol><symbol id="g109" viewBox="0 -84 94 100" preserveAspectRatio="none"><path d="M74-52l0-29 0-1 1-1 4 0 1 1 0 1 0 89 0 1-1 1-4 0-1-1 0-1 0-54-28 0-1-1-1-1 0-3 1-1 1 0zm-55 25l0 1 1 1 0 1 2 0 4 0 6 0 5 0 5-1 5 0 5-1 5 0 5-1 1 0 1 1 0 3 0 1-1 1-4 1-5 0-6 1-6 1-6 0-5 0-6 0-5 0-4-1-2-1-1-3-1-3 0-50 1-1 1 0 4 0 1 0 0 1z"/></symbol><symbol id="g110" viewBox="0 -84 94 100" preserveAspectRatio="none"><path d="M81-8l0 4-2 3-3 4-3 2-5 2-4 2-6 1-6 0-6 0-6-1-4-2-5-2-3-2-2-4-2-3-1-4 1-4 2-4 2-3 3-3 5-2 4-1 6-1 6 0 6 0 6 1 4 1 5 2 3 3 3 3 2 4 0 4zm-23-66l0 1-1 1-9 0 0 31 4 0 3 0 3-1 3 0 1 0 0 1 1 3 0 1-1 0 0 1-6 0-7 1-7 0-7 1-3 0-4 0-3 0-4 0-4 0-4 0-3 0-3 0-1 0-1-1 0-3 0-1 1 0 0-1 1 0 11 0 0-32-10 0-1 0 0-1-1 0 0-1 0-3 1-1 1 0 49 0 1 0 0 1zm16 66l0-3-2-2-2-2-2-2-4-2-4-1-4 0-4 0-4 0-5 0-3 1-3 2-3 2-2 2-1 2-1 3 1 3 1 2 2 2 3 2 3 1 3 1 5 1 4 0 4 0 4-1 4-1 4-1 2-2 2-2 2-2 0-3zm0-60l0-13 0-1 1-1 4 0 1 1 0 1 0 52 0 1-1 1-4 0-1-1 0-1 0-17-16 0-1-1 0-1 0-3 0-1 1 0 16 0 0-10-16 0-1-1 0-1 0-3 0-1 1 0zm-40 28l2 0 2 0 2 0 2 0 0-32-17 0 0 32 3 0 2 0 2 0 2 0z"/></symbol><symbol id="g111" viewBox="0 -84 94 100" preserveAspectRatio="none"><path d="M62-26l1 0 1 1 0 4 0 1-1 0-3 0-3 1-4 0-4 1-3 0-4 1-4 0-4 0-3 0-3 0-4 0-4 1-4 0-4 0-3 0-3 0-1-1-1 0 0-1 0-3 0-1 1 0 1 0 2 0 2 0 3 0 3 0 0-47-10 0-1-1 0-1 0-3 0-1 1 0 51 0 1 0 0 1 0 4-1 1-7 0 0 45 3 0 3-1 3 0 3-1zm-28 3l2 0 2 0 3 0 2 0 0-46-20 0 0 47 3 0 3-1 2 0 3 0zm43 31l0 1-1 1-4 0-2-1 0-1 0-89 0-1 2-1 4 0 1 1 0 1 0 36 14 0 1 1 0 4 0 1-1 0-14 0z"/></symbol><symbol id="g112" viewBox="0 -84 94 100" preserveAspectRatio="none"><path d="M37-78l0 4 0 4-1 3 0 4 1 4 2 4 2 4 3 4 3 3 4 3 4 3 3 2 1 0 0 1 0 1-2 3-1 1-1 0-3-2-3-2-4-3-3-3-3-4-2-3-3-3-2-4-4 8-5 7-6 6-7 5 0 1-1 0-1-1-2-3 0-1 0-1 6-3 4-5 4-5 4-6 3-6 2-6 1-7 0-7 0-1 1-1 5 1 1 0 0 1zm37 19l0-22 0-1 1-1 4 0 1 1 0 1 0 64 0 1-1 0-4 0-1 0 0-1 0-36-21 0-1 0 0-1 0-4 1-1zm10 66l-1 0 0 1-1 0-50 0-4-1-2-1-1-2-1-4 0-19 1-1 1-1 4 0 1 1 0 1 0 19 0 1 1 0 0 1 2 0 48 0 1 0 0 1 1 0z"/></symbol><symbol id="g113" viewBox="0 -84 94 100" preserveAspectRatio="none"><path d="M42-52l-5 1-5 0-6 0-5 0-6 0 0 12 0 1 1 1 1 1 5 0 4 0 4-1 3 0 4 0 4-1 4-1 4 0 1 0 1 1 1 3-1 1-1 0-8 2-8 1-9 1-9 0-4-1-2-1-1-3-1-4 0-31 0-3 2-2 2-1 4-1 27 0 1 1 0 4 0 1-1 0-26 0-1 0-1 1 0 1 0 12 6 0 5 0 6 0 5 0 5-1 1 0 0 1 1 0 0 1 0 3-1 1-1 0zm22-4l13 0 0-25 1-1 1-1 3 0 1 1 1 1 0 53-1 1-1 1-3 0-1-1-1-1 0-22-13 0 0 21 0 1-1 0-4 0-1 0 0-1 0-51 0-1 1 0 4 0 1 0 0 1zm-42 36l1 0 0-1 1 0 52 0 4 0 2 2 1 2 1 4 0 22-1 1-1 0-4 0-1 0 0-1 0-22 0-1-1-1-1 0-51 0-1 0 0-1-1 0z"/></symbol><symbol id="g114" viewBox="0 -84 94 100" preserveAspectRatio="none"><path d="M54-38l0 3-1 3-2 4-2 2-3 2-4 2-4 1-4 0-4 0-4-1-4-2-3-2-2-2-2-4-1-3-1-3 1-4 1-3 2-3 2-3 3-2 4-1 4-1 4-1 4 1 4 1 4 1 3 2 2 3 2 3 1 3 0 4zm23 25l0 1-1 0-4 0-2 0 0-1 0-68 0-1 2-1 4 0 1 1 0 1 0 33 14 0 1 0 0 1 0 4 0 1-1 0-14 0zm-29-25l-1-3 0-2-2-2-1-1-2-2-3-1-2 0-3-1-3 1-3 0-2 1-2 2-2 1-1 2-1 2 0 3 0 2 1 2 1 2 2 2 2 1 2 1 3 1 3 0 3 0 2-1 3-1 2-1 1-2 2-2 0-2 1-2zm34 45l-1 0 0 1-1 0-52 0-3 0-3-2-1-2 0-4 0-13 0-1 1-1 4 0 1 1 1 1 0 13 0 1 0 1 1 0 1 0 50 0 1 0 0 1 1 0zm-19-69l0 1-2 1-55 0-1-1 0-1 0-3 0-1 1 0 55 0 2 0 0 1zm-15-13l0 1-1 0-28 0-1 0 0-1 0-4 0-1 1 0 28 0 1 0 0 1z"/></symbol><symbol id="g115" viewBox="0 -84 94 100" preserveAspectRatio="none"><path d="M64-18l1 0 1 0 0 4 0 1-1 0-4 1-3 0-4 1-4 0-4 1-4 0-4 0-4 1-3 0-3 0-4 0-4 0-4 0-4 0-4 0-3 0-1 0-1-1 0-4 1-1 1 0 2 0 3 0 3 0 3 0 3 0 4 0 3 0 3 0 0-17-4-1-4-2-3-2-3-3-3-3-2-3-1-4 0-4 0-5 2-5 2-3 3-3 3-3 4-2 5-1 4 0 5 0 5 1 4 2 3 3 3 3 2 4 2 4 0 5 0 4-1 4-2 3-2 3-3 3-4 2-3 1-5 1 0 18 4-1 3 0 4 0 3 0 4-1 4 0 3-1 3 0zm-15-36l0-4-1-3-2-3-2-2-2-1-3-2-3 0-4-1-3 1-3 0-3 2-2 1-2 2-2 3-1 3 0 4 0 3 1 3 2 3 1 2 3 2 3 1 3 1 3 0 4 0 3-1 3-1 2-2 2-2 2-3 1-3 0-3zm28 62l0 1-1 1-4 0-2-1 0-1 0-89 0-1 2-1 4 0 1 1 0 1 0 39 14 0 1 0 0 1 0 4 0 1-1 0-14 0z"/></symbol><symbol id="g116" viewBox="0 -84 94 100" preserveAspectRatio="none"><path d="M77-8l0 1-1 1-48 0 0 8 0 1 0 1 1 0 1 0 48 0 1 0 0 1 0 3 0 2-1 0-50 0-3 0-3-2-1-2 0-3 0-24 0-4 1-2 3-1 3 0 48 0 1 0 1 1 0 3-1 1-1 0-46 0-1 0-1 1 0 1 0 1 0 8 48 0 1 0 0 1zm-26-64l-1 6-3 6-3 6-4 5-6 5-6 4-8 5-9 4-1 0-1-1-2-3 0-1 1-1 25-15 11-18 0-2-2-1-31 0-1 0 0-1 0-4 0-1 1 0 33 0 4 0 2 2 1 2 0 3zm26 37l0 1-1 0-4 0-2 0 0-1 0-46 0-1 2-1 4 0 1 1 0 1 0 20 14 0 1 0 0 1 0 4 0 1-1 0-14 0z"/></symbol><symbol id="g117" viewBox="0 -84 94 100" preserveAspectRatio="none"><path d="M90-36l1 1 0 4-1 1-86 0-1 0 0-1 0-4 0-1 1 0zm-43-9l-5-1-5 0-5-2-5-1-5-3-3-3-2-4-1-4 1-5 2-4 3-3 5-3 5-1 5-1 5-1 5 0 5 0 5 1 6 1 5 2 4 2 3 3 2 4 1 5-1 4-2 4-3 3-4 3-5 1-6 2-5 0-5 1zm0-30l-3 0-4 0-4 1-4 1-3 2-3 2-2 2-1 4 1 3 2 3 3 2 3 1 4 1 4 1 4 0 3 0 3 0 4 0 4-1 4-1 3-1 3-2 2-3 1-3-1-4-2-2-3-2-3-2-4-1-4-1-4 0-3 0zm33 82l0 1-1 0-55 0-3-1-3-1-1-3 0-3 0-21 0-1 1 0 4 0 1 0 1 1 0 21 0 1 1 1 1 0 53 0 1 0 0 1z"/></symbol><symbol id="g118" viewBox="0 -84 94 100" preserveAspectRatio="none"><path d="M15-14l-4 0-2-2-1-2 0-4 0-19 0-3 1-2 3-1 4-1 16 0 1 0 1 0 0-1 0-1 0-16 0-1 0-1-1 0-1 0-23 0-1-1 0-1 0-3 0-1 1 0 24 0 3 0 1 0 2 0 1 1 0 1 1 1 0 2 0 2 0 18 0 4-1 2-3 1-4 0-16 0-2 0 0 1-1 1 0 18 1 2 2 0 8 0 8-1 8-1 7-2 1 1 1 1 1 3-1 1-1 1-8 1-9 2-8 0-9 0zm45-33l0-33 0-1 1 0 4 0 1 0 0 1 0 84 0 1-1 1-4 0-1-1 0-1 0-45-14 0 0-1-1 0 0-4 1-1zm24 55l-1 1-1 1-3 0-1-1-1-1 0-89 1-1 1-1 3 0 1 1 1 1z"/></symbol><symbol id="g119" viewBox="0 -84 94 100" preserveAspectRatio="none"><path d="M11-70l0-3 1-3 2-1 4 0 28 0 2 0 2 0 1 1 1 0 1 1 0 2 0 1 0 2 0 31 0 4-1 2-3 1-3 0-28 0-2 0-2 0-1-1-1 0-1-1 0-2 0-1 0-2zm9-1l-1 0-1 1 0 2 0 28 0 1 0 1 1 0 1 0 24 0 1 0 1 0 0-1 0-1 0-28 0-2-1-1-1 0zm57 53l0 1-1 1-4 0-2-1 0-1 0-63 0-1 2-1 4 0 1 1 0 1 0 28 14 0 1 1 0 1 0 3 0 1-1 0-14 0zm5 25l-1 0 0 1-1 0-51 0-4-1-2-1-1-2 0-4 0-19 0-1 1-1 4 0 1 1 0 1 0 19 1 1 1 1 1 0 49 0 1 0 0 1 1 0z"/></symbol><symbol id="g120" viewBox="0 -84 94 100" preserveAspectRatio="none"><path d="M81-36l-1 1-1 0-13 0 0 23 24 0 1 1 0 3 0 1-1 0 0 1-86 0-1-1 0-1 0-3 0-1 1 0 24 0 0-23-14 0-1 0-1 0 0-1 0-3 0-1 1 0 1 0 12 0 0-30-10 0-1 0 0-1-1 0 0-1 0-3 1-1 1 0 61 0 1 0 1 1 0 3-1 1-1 1-10 0 0 30 12 0 1 0 1 1zm-48-4l27 0 0-30-27 0zm1 28l25 0 0-23-25 0z"/></symbol><symbol id="g121" viewBox="0 -84 94 100" preserveAspectRatio="none"><path d="M79 9l0 1-1 0-50 0-4-1-3-1-1-2 0-4 0-5 0-4 2-2 2-1 4 0 40 0 1 0 1-1 0-2 0-3 0-2-1-1-1 0-47 0-1 0 0-1 0-3 0-1 1 0 48 0 2 0 2 0 1 0 2 1 0 1 1 1 0 2 0 2 0 5 0 4-2 2-2 1-4 1-40 0-1 0-1 0 0 1 0 1 0 4 0 1 0 1 1 0 1 0 49 0 1 0 0 1zm-24-54l0 3-1 3-2 3-3 2-3 2-4 1-4 1-4 1-5-1-4-1-4-1-3-2-2-2-2-3-1-3-1-3 1-3 1-3 2-3 2-2 3-2 4-1 4-1 5 0 4 0 4 1 4 1 3 2 3 2 2 3 1 3 0 3zm-7 0l0-2-1-2-1-2-2-1-2-1-2-1-3 0-3-1-3 1-3 0-3 1-2 1-2 1-1 2-1 2 0 2 0 2 1 2 1 2 2 1 2 1 3 1 3 1 3 0 3 0 3-1 2-1 2-1 2-1 1-2 1-2 0-2zm29 14l0 1-1 1-4 0-2-1 0-1 0-50 0-1 2-1 4 0 1 1 0 1 0 23 14 0 1 0 0 1 0 3 0 1-1 1-14 0zm-14-35l0 1-2 0-55 0-1 0 0-1 0-3 0-1 1 0 0-1 55 0 2 1 0 1zm-15-11l0 1-1 0-28 0-1 0 0-1 0-4 0-1 1 0 28 0 1 0 0 1z"/></symbol><symbol id="g122" viewBox="0 -84 94 100" preserveAspectRatio="none"><path d="M54-70l-5 14-8 12-12 10-16 9-1 0-1-1-1-3-1-1 1 0 0-1 8-3 6-4 6-4 5-5 4-5 3-5 3-6 1-5 0-2-2-1-31 0-1 0 0-1 0-4 0-1 1 0 33 0 4 0 3 2 1 2 0 3zm1 46l0 1 0 1-1 0 1 2 1 3 6 7 7 5 9 4 9 3 0 1 1 0 0 1-2 4-1 0 0 1-1-1-5-1-6-2-4-3-5-3-4-3-3-3-3-3-3-4-2 4-3 3-3 3-4 4-5 2-4 3-5 2-6 2-1 0-1-1-1-3 0-1 0-1 1 0 6-2 6-3 5-3 5-4 3-4 3-4 2-4 1-4 0-1 1 0 5 0 1 0 0 2zm19-31l0-26 0-1 1-1 4 0 1 1 0 1 0 55 0 2-1 0-4 0-1 0 0-2 0-23-21 0-1 0 0-1 0-4 1-1z"/></symbol><symbol id="g123" viewBox="0 -84 94 100" preserveAspectRatio="none"><path d="M79-49l-1 1-1 0-27 0 0 12 40 0 0 1 1 0 0 1 0 3 0 1-1 0-86 0-1 0 0-1 0-3 0-1 1 0 0-1 39 0 0-12-27 0-1 0-1-1 0-3 0-1 1 0 0-1 1 0 12 0 0-21-10 0-1 0-1-1 0-3 0-1 1 0 1-1 57 0 1 1 1 1 0 3-1 1-1 0-10 0 0 21 12 0 1 1 1 1zm-62 35l0-3 1-3 3-1 3 0 45 0 3 0 1 0 2 1 1 0 0 1 1 2 0 1 0 2 0 16 0 3-2 2-2 1-4 1-45 0-2 0-1-1-2 0-1-1 0-1-1-1 0-1 0-2zm9-1l-1 0-1 1 0 2 0 12 0 1 0 1 1 1 1 0 42 0 1 0 1-1 0-1 0-1 0-12 0-2-1-1-1 0zm9-39l24 0 0-21-24 0z"/></symbol><symbol id="g124" viewBox="0 -84 94 100" preserveAspectRatio="none"><path d="M18-17l-3 0-1 0-2 0 0-1-1-1-1-1 0-2 0-2 0-52 0-1 1 0 0-1 5 0 0 1 1 0 0 1 0 23 30 0 0-23 0-1 1 0 0-1 4 0 1 1 1 0 0 1 0 26 20 0 0-31 0-1 1-1 4 0 1 1 0 1 0 89 0 1-1 1-4 0-1-1 0-1 0-52-20 0 0 21-1 3-1 2-2 1-4 0zm-1-30l0 22 0 1 0 1 1 0 1 1 25 0 2-1 1-1 0-1 0-22z"/></symbol><symbol id="g125" viewBox="0 -84 94 100" preserveAspectRatio="none"><path d="M76-59l-1 1-1 0-50 0 0 9 0 1 0 1 1 0 1 1 50 0 1 0 1 1 0 3-1 1-1 0-52 0-3 0-3-1-1-2 0-4 0-25 0-4 1-2 3-1 3 0 52 0 1 0 0 1 0 3 0 1-1 1-50 0-1 0-1 0 0 1 0 1 0 9 50 0 1 0 1 1zm14 28l1 1 0 4-1 1-86 0-1 0 0-1 0-4 0-1 1 0zm-11 38l0 1-1 0-54 0-3-1-3-1-1-3 0-3 0-16 0-1 1 0 4 0 1 0 1 1 0 16 0 1 1 1 1 0 52 0 1 0 0 1z"/></symbol><symbol id="g126" viewBox="0 -84 94 100" preserveAspectRatio="none"><path d="M16-80l1 0 0-1 1 0 52 0 2 0 2 1 1 0 1 1 0 1 1 2 0 1 0 2 0 3 0 4 0 3 0 4-1 3 0 4-1 3 0 3 15 0 1 1 0 4-1 1-86 0-1 0 0-1 0-4 0-1 1 0 64 0 0-2 1-3 0-3 1-4-2 0-2 0-2 0-3 1-2 0-2 0-1 0-1 0-3 0-5 0-5 0-5 0-5 0-6 0-4 0-3 0-1 0-1-1 0-4 1 0 1-1 2 0 3 0 3 0 3 0 4 0 4 0 3 0 3 0 4 0 2 0 3 0 1 0 1 0 2 0 2 0 2 0 3 0 2-1 2 0 2 0 0-2 0-3 0-2 0-2 0-1 0-1-1 0-1 0-50 0-1 0 0-1-1 0zm63 88l0 1-1 0-54 0-3 0-3-2-1-2 0-4 0-7 0-4 2-2 2-1 4-1 43 0 1 0 1 0 0-1 0-1 0-6 0-1 0-1-1 0-1 0-50 0-1-1 0-1 0-3 0-1 1 0 51 0 2 0 2 0 1 1 1 0 1 1 1 2 0 1 0 2 0 8-1 4-1 2-2 1-4 0-43 0-1 0-1 0 0 1 0 1 0 7 0 1 0 1 1 0 1 0 52 0 1 1z"/></symbol><symbol id="g127" viewBox="0 -84 94 100" preserveAspectRatio="none"><path d="M80-28l0 1-1 1-4 0-1-1 0-1 0-53 0-1 1-1 4 0 1 1 0 1zm-58 8l1-1 1 0 49 0 4 1 2 1 1 2 0 4 0 22 0 1-1 0-4 0-1 0 0-1 0-22-1-1 0-1-1 0-1 0-47 0-1 0-1-1zm-3-12l-4-1-2-1-2-2 0-4 0-12 1-3 1-2 2-1 4-1 24 0 1 0 1 0 0-1 0-1 0-9 0-1 0-1-1 0-1 0-30 0-1-1 0-1 0-3 0-1 1 0 31 0 3 0 1 0 2 1 1 0 0 1 1 1 0 2 0 2 0 11 0 4-1 2-3 1-4 0-24 0-1 0-1 1 0 2 0 10 1 1 1 1 6 0 6 0 5 0 5-1 5 0 5-1 5-1 5-1 1 0 1 0 0 1 0 1 1 3 0 1-1 0-10 2-12 1-11 1-12 0z"/></symbol><symbol id="g128" viewBox="0 -84 94 100" preserveAspectRatio="none"><path d="M67-45l10 0 0-36 1-1 1-1 3 0 1 1 1 1 0 89-1 1-1 1-3 0-1-1-1-1 0-47-10 0 0 43 0 1-1 1-4 0-1-1-1-1 0-84 1-1 1 0 4 0 1 0 0 1zm-11 24l0 1-1 1-4 1-4 0-5 0-4 1-3-1-3-1-1-2 0-4 0-42 0-3 1-3 3-1 3 0 13 0 1 0 0 1 0 3 0 1-1 1-12 0-1 0-1 1 0 1 0 41 1 1 0 1 1 0 4 0 3-1 4 0 4 0 1-1 0 1 1 1zm-27 1l0 1 0 1-1 0-3 0-4 1-3 0-3 0-4-1-2-2-1-2-1-4 0-41 1-3 1-3 2-1 4 0 12 0 1 0 0 1 0 3 0 1-1 1-11 0-1 0-1 0 0 1 0 1 0 40 0 1 0 1 1 0 1 1 3 0 2 0 3 0 3-1 1 1 0 1z"/></symbol><symbol id="g129" viewBox="0 -84 94 100" preserveAspectRatio="none"><path d="M63-23l0 1-1 1-5 1-5 1-6 0-6 1-6 1-6 0-6 0-5 0-3 0-3-2-1-2 0-4 0-43 0-4 1-2 2-1 4 0 35 0 1 1 0 4-1 1-34 0-1 0-1 1 0 1 0 41 1 2 1 1 1 0 5 0 5 0 5 0 6-1 5 0 5-1 6-1 4-1 2 0 0 1zm14 31l0 1-1 1-4 0-2-1 0-1 0-89 0-1 2-1 4 0 1 1 0 1 0 36 14 0 1 1 0 4 0 1-1 0-14 0z"/></symbol><symbol id="g130" viewBox="0 -84 94 100" preserveAspectRatio="none"><path d="M17-15l0-3 1-3 3-1 3 0 45 0 3 0 1 0 2 1 1 0 0 1 1 2 0 1 0 2 0 17 0 3-2 2-2 1-4 1-45 0-2 0-1-1-2 0-1-1 0-1-1-1 0-1 0-2zm9-1l-1 0-1 1 0 2 0 13 0 1 0 1 1 1 1 0 42 0 1 0 1-1 0-1 0-1 0-13 0-2-1-1-1 0zm64-22l1 1 0 4-1 1-86 0-1 0 0-1 0-4 0-1 1 0zm-43-8l-5 0-6-1-5-1-5-2-4-2-3-3-3-4 0-5 0-4 3-4 3-3 4-3 5-1 5-2 6 0 5 0 5 0 5 1 6 1 4 2 5 2 3 3 2 4 1 4-1 5-2 3-3 3-5 3-4 2-6 1-5 1-5 0zm0-29l-4 0-4 0-4 1-4 1-3 2-3 2-1 2-1 3 1 3 1 3 3 2 3 1 4 1 4 1 4 1 4 0 3 0 4-1 4-1 4-1 3-1 3-2 2-3 1-3-1-3-2-2-3-2-3-2-4-1-4-1-4 0-3 0z"/></symbol><symbol id="g131" viewBox="0 -84 94 100" preserveAspectRatio="none"><path d="M56-38l-1 3-1 3-2 4-2 2-3 2-4 2-4 1-4 0-4 0-4-1-4-2-3-2-2-2-2-4-1-3-1-3 1-4 1-3 2-3 2-3 3-2 4-1 4-1 4-1 4 1 4 1 4 1 3 2 2 3 2 3 1 3 1 4zm18-16l0-27 0-1 1-1 4 0 1 1 0 1 0 68 0 1-1 1-4 0-1-1 0-1 0-16-13 0-1 0 0-1 0-3 0-1 1-1 13 0 0-13-13 0-1 0 0-1 0-4 0-1 1 0zm-25 16l-1-3 0-2-2-2-1-1-2-2-3-1-2 0-3-1-3 1-3 0-2 1-2 2-2 1-1 2-1 2 0 3 0 2 1 2 1 2 2 2 2 1 2 1 3 1 3 0 3 0 2-1 3-1 2-1 1-2 2-2 0-2 1-2zm35 45l-1 0 0 1-1 0-50 0-4 0-2-2-1-2-1-4 0-13 1-1 1 0 4 0 1 0 0 1 0 13 0 1 1 1 1 0 49 0 1 0 0 1 1 0zm-22-69l0 1-2 1-51 0-1 0 0-1-1 0 0-1 0-3 0-1 1 0 1 0 51 0 2 0 0 1zm-13-13l0 1-1 0-27 0-1 0 0-1 0-4 0-1 1 0 27 0 1 0 0 1z"/></symbol><symbol id="g132" viewBox="0 -84 94 100" preserveAspectRatio="none"><path d="M90-12l1 1 0 3 0 1-1 0 0 1-86 0-1-1 0-1 0-3 0-1 1 0 39 0 0-21-5-1-5-1-4-2-5-2-4-3-3-4-2-4 0-5 1-6 2-5 3-3 5-3 5-3 5-1 6-1 5 0 5 0 6 1 5 1 5 3 4 3 4 3 2 5 1 6-1 5-2 4-3 4-3 3-5 3-5 1-5 1-5 1 0 21zm-43-59l-4 0-4 1-4 1-4 1-3 2-3 3-2 4-1 4 1 4 2 4 3 3 3 2 4 1 4 1 4 1 4 0 3 0 4-1 5-1 3-1 4-2 3-3 2-4 0-4 0-4-2-4-3-3-4-2-3-1-5-1-4-1-3 0z"/></symbol><symbol id="g133" viewBox="0 -84 94 100" preserveAspectRatio="none"><path d="M13-57l3 0 3 0 3 0 3 0 3 0 3 0 2-1 2 0 1 0 1 0 1 0 1 0 1 0 1 0 1 0 1 0 1-3 1-2 1-3 1-2-1-2-2-1-31 0-1 0 0-1 0-4 0-1 1 0 33 0 5 1 2 1 1 2 0 3-4 14-9 12-12 11-15 8-2 0-1-1-1-3 0-1 0-1 1 0 8-4 8-5 7-6 5-6-1 0-1 0-1 0-3 0-3 0-3 0-3 1-3 0-3 0-3 0-2 0-1 0-1-1 0-4 1-1 1 0zm61 4l0-28 0-1 1-1 4 0 1 1 0 1 0 64 0 1-1 0-4 0-1 0 0-1 0-30-21 0-1-1 0-4 0-1 1 0zm10 60l-1 0 0 1-1 0-50 0-4-1-2-1-1-2-1-4 0-19 1-1 1-1 4 0 1 1 0 1 0 19 0 1 1 0 0 1 1 0 49 0 1 0 0 1 1 0z"/></symbol><symbol id="g134" viewBox="0 -84 94 100" preserveAspectRatio="none"><path d="M79-32l-1 1-1 0-54 0-3 0-3-1-1-2 0-4 0-32 0-4 1-2 3-1 3 0 54 0 1 0 0 1 0 3 0 1-1 1-52 0-1 0-1 0 0 1 0 1 0 12 52 0 1 0 1 1 0 4-1 1-1 0-52 0 0 12 0 1 0 1 1 0 1 0 52 0 1 1 1 1zm11 20l1 1 0 3 0 1-1 0 0 1-86 0-1-1 0-1 0-3 0-1 1 0z"/></symbol><symbol id="g135" viewBox="0 -84 94 100" preserveAspectRatio="none"><path d="M78-49l-1 1-27 0 0 8 40 0 1 1 0 4-1 1-86 0-1 0 0-1 0-4 0-1 1 0 39 0 0-8-18 0-4-1-2-1-1-2-1-4 0-5 1-4 1-2 2-1 4 0 43 0 1-1 1-1 0-1 0-4 0-1-1-1-1 0-49 0-1 0-1-1 0-4 1-1 1 0 50 0 2 0 2 0 1 1 1 1 1 1 0 1 1 1 0 2 0 6-1 4-1 2-2 1-4 0-43 0-1 0-1 1 0 2 0 4 0 1 0 1 1 0 1 0 51 0 1 0 0 1zm1 57l0 1-1 0-54 0-3 0-3-2-1-2 0-4 0-6 0-3 2-2 2-1 4-1 43 0 1 0 1 0 0-1 0-1 0-4 0-1 0-1-1 0-1 0-50 0-1 0 0-1 0-4 0-1 1 0 51 0 2 0 2 1 1 0 1 1 1 1 1 1 0 2 0 2 0 5-1 3-1 3-2 1-4 0-43 0-1 0-1 0 0 1 0 1 0 5 0 1 0 1 1 0 1 0 52 0 1 1z"/></symbol><symbol id="g136" viewBox="0 -84 94 100" preserveAspectRatio="none"><path d="M80-35l0 1-1 0-4 0-1 0 0-1 0-46 0-1 1-1 4 0 1 1 0 1zm-24-23l0 5-2 4-2 4-3 3-3 3-4 2-5 1-5 1-4-1-5-1-4-2-3-3-3-3-2-4-2-4 0-5 0-5 2-4 2-4 3-3 3-3 4-2 5-1 4 0 5 0 4 1 4 2 4 3 3 3 2 4 2 4 0 5zm-7 0l0-3-1-4-2-2-2-3-3-2-2-1-3-1-4 0-3 0-3 1-3 1-2 2-2 2-2 3-1 4 0 3 0 4 1 3 2 3 2 2 2 2 3 1 3 1 3 0 4 0 3-1 2-1 3-2 2-2 2-3 1-3 0-4zm-18 67l-2 0-2-1-1 0-1-1-1-1 0-1-1-1 0-2 0-29 1 0 0-1 1 0 4 0 1 0 0 1 0 11 44 0 0-11 0-1 1 0 4 0 1 0 0 1 0 29 0 4-1 2-2 0-4 1zm-1-19l0 10 0 2 1 0 1 1 1 0 38 0 1 0 1-1 1-2 0-10z"/></symbol><symbol id="g137" viewBox="0 -84 94 100" preserveAspectRatio="none"><path d="M19-31l-4-1-2-1-2-2 0-4 0-12 1-4 1-2 2-1 4 0 20 0 1 0 1-1 0-2 0-9 0-1 0-1-1 0-1 0-26 0-1-1 0-1 0-3 0-1 1 0 27 0 2 0 2 0 1 1 1 0 1 1 1 1 0 2 0 2 0 12-1 3-1 2-2 1-4 1-20 0-1 0-1 0 0 1 0 1 0 10 1 2 1 1 5 0 4 0 4 0 4-1 5 0 4-1 4 0 4-1 1 0 1 0 0 1 0 3 1 1-1 0 0 1-1 0-8 1-9 1-9 1-10 0zm55-37l0-13 0-1 1-1 4 0 1 1 0 1 0 53 0 1-1 1-4 0-1-1 0-1 0-18-18 0-1 0 0-1 0-3 0-1 1-1 18 0 0-10-18 0-1 0 0-1 0-4 0-1 1 0zm-52 48l1-1 1 0 49 0 4 1 2 1 1 2 0 4 0 22 0 1-1 0-4 0-1 0 0-1 0-22-1-1 0-1-1 0-1 0-47 0-1 0-1-1z"/></symbol><symbol id="g138" viewBox="0 -84 94 100" preserveAspectRatio="none"><path d="M59-47l0 1-1 0-19 0 0 16 7-1 7 0 8-1 6-1 1 0 1 1 0 3 0 1 0 1-1 0-8 1-8 0-8 1-8 0-1 0-2 1-2 0-2 0-3 0-2 0-3 0-3 0-6 0-6 0-1 0 0-1-1 0 0-1 0-3 1-1 1 0 10 0 4 0 4 0 5 0 3 0 0-16-11 0-4 0-2-1-1-2-1-4 0-17 1-4 1-2 2-1 4-1 36 0 1 1 0 1 0 3 0 1-1 0-35 0-1 1-1 1 0 1 0 15 0 1 1 1 1 0 36 0 1 0 0 1zm25 54l-1 0 0 1-1 0-52 0-4-1-3-1-1-2 0-4 0-15 0-1 1 0 5 0 1 0 0 1 0 15 0 1 1 1 1 0 51 0 1 0 0 1 1 0zm-4-21l0 1-1 1-4 0-1-1 0-1 0-67 0-1 1-1 4 0 1 1 0 1z"/></symbol><symbol id="g139" viewBox="0 -84 94 100" preserveAspectRatio="none"><path d="M80 8l0 1-1 1-4 0-1-1 0-1 0-35-22 0-1 3-2 3-2 2-2 2-3 2-3 1-3 1-4 1-6-1-5-2-4-4-4-4-2-5-2-5-1-6 0-5 0-6 1-6 2-6 2-4 4-5 4-3 5-2 6-1 4 1 3 0 3 2 3 1 2 2 2 3 2 3 1 3 22 0 0-19 0-1 1-1 4 0 1 1 0 1zm-31-53l-1-4 0-5-1-4-2-4-3-3-2-3-4-2-4 0-5 0-3 2-3 3-2 3-2 4-1 4 0 5-1 4 0 5 1 4 1 5 2 4 2 3 3 3 3 2 5 0 4 0 4-2 2-3 3-3 2-4 1-5 0-4 1-5zm7 1l-1 5-1 6 20 0 0-24-20 0 1 6 1 7z"/></symbol><symbol id="g140" viewBox="0 -84 94 100" preserveAspectRatio="none"><path d="M16-32l-3 0-1 0-2-1-1-1-1-2 0-1 0-2 0-37 0-1 1-1 5 0 1 1 0 1 0 16 24 0 0-16 0-1 0-1 1 0 4 0 1 0 0 1 1 1 0 19 14 0 0-23 0-1 1 0 4 0 1 0 0 1 0 61 0 1-1 0-4 0-1 0 0-1 0-32-14 0 0 13-1 3-1 2-2 1-4 0zm70 39l0 1-1 0-53 0-4-1-2-1-1-2-1-4 0-19 1-1 1-1 4 0 1 1 0 1 0 19 1 1 1 1 1 0 51 0 1 0 0 1zm-2-23l-1 1-1 0-3 0-1 0-1-1 0-65 1-1 1-1 3 0 1 1 1 1zm-69-38l0 14 0 1 0 1 1 0 1 0 19 0 1 0 1 0 1-1 0-1 0-14z"/></symbol><symbol id="g141" viewBox="0 -84 94 100" preserveAspectRatio="none"><path d="M81-34l-1 1-1 1-65 0-1 0 0-1-1 0 0-1 0-3 1-1 1 0 13 0 0-32-11 0-1 0 0-1-1 0 0-1 0-3 1-1 1 0 61 0 1 0 1 1 0 3-1 1-1 1-11 0 0 32 13 0 1 0 1 1zm-47-4l26 0 0-32-26 0zm56 26l1 1 0 3 0 1-1 0 0 1-86 0-1-1 0-1 0-3 0-1 1 0z"/></symbol><symbol id="g142" viewBox="0 -84 94 100" preserveAspectRatio="none"><path d="M90-40l1 1 0 4-1 1-86 0-1 0 0-1 0-4 0-1 1 0zm-11 48l0 1-1 0-54 0-3 0-3-2-1-2 0-4 0-6 0-3 2-2 2-1 4-1 43 0 1 0 1 0 0-1 0-1 0-4 0-1 0-1-1 0-1 0-50 0-1 0 0-1 0-4 0-1 1 0 51 0 2 0 2 1 1 0 1 1 1 1 1 1 0 2 0 2 0 5-1 3-1 3-2 1-4 0-43 0-1 0-1 0 0 1 0 1 0 5 0 1 0 1 1 0 1 0 52 0 1 1zm-1-57l-1 1-52 0-4-1-2-1-1-2-1-4 0-5 1-4 1-2 2-1 4 0 43 0 1 0 0-1 1 0 0-2 0-4 0-1-1-1-1 0-49 0-1 0-1-1 0-4 1-1 1 0 50 0 2 0 2 0 1 1 1 1 1 1 0 1 1 1 0 2 0 6-1 4-1 2-2 1-4 0-43 0-1 0-1 1 0 2 0 4 0 1 0 1 1 0 1 0 51 0 1 0 0 1z"/></symbol><symbol id="g143" viewBox="0 -84 94 100" preserveAspectRatio="none"><path d="M80-18l0 1-1 0-4 0-1 0 0-1 0-24-20 0 0 3-1 3-1 2-2 2-4 0-27 0-2 0-2 0-1-1-1-1-1-1-1-1 0-1 0-2 0-31 1-4 1-2 2-1 4 0 27 0 2 0 2 0 1 1 1 0 1 1 1 1 0 2 0 2 0 4 20 0 0-15 0-1 1-1 4 0 1 1 0 1zm-60-53l-1 0-1 0 0 1 0 1 0 28 0 2 1 1 1 0 24 0 2 0 0-1 1 0 0-2 0-28 0-1-1-1-2 0zm64 78l-1 0 0 1-1 0-50 0-4-1-2-1-1-2-1-4 0-20 1-1 1-1 4 0 1 1 0 1 0 20 0 1 1 0 0 1 2 0 48 0 1 0 0 1 1 0zm-30-55l20 0 0-13-20 0z"/></symbol><symbol id="g144" viewBox="0 -84 94 100" preserveAspectRatio="none"><path d="M67-18l1 0 1 0 0 4 0 1-1 0-4 1-3 0-4 1-4 0-5 1-4 0-4 0-4 1-3 0-4 0-4 0-4 0-4 0-4 0-4 0-3 0-1 0-1-1 0-4 1-1 1 0 2 0 3 0 4 0 3 0 4 0 3 0 4 0 3 0 0-21-13 0-3 0-3-2-1-2 0-3 0-23 0-4 1-2 3-1 3-1 39 0 1 1 0 1 0 3 0 1-1 0-37 0-1 1-1 0 0 1 0 1 0 20 0 1 0 1 1 1 1 0 37 0 1 0 1 1 0 3-1 2-1 0-19 0 0 21 4-1 3 0 4 0 4-1 3 0 4-1 3 0 3 0zm13 26l0 1-1 1-4 0-1-1 0-1 0-89 0-1 1-1 4 0 1 1 0 1z"/></symbol><symbol id="g145" viewBox="0 -84 94 100" preserveAspectRatio="none"><path d="M79 8l0 1-1 0-54 0-3 0-3-2-1-2 0-4 0-8 0-4 2-2 2-1 4 0 43 0 1-1 1 0 0-1 0-1 0-7 0-1 0-1-1 0-1 0-50 0-1-1 0-4 0-1 1 0 51 0 2 0 2 0 1 1 1 1 1 0 1 2 0 1 0 2 0 9-1 4-1 2-2 1-4 0-43 0-1 0-1 1 0 2 0 7 0 1 0 1 1 0 1 0 52 0 1 1zm11-57l1 1 0 4-1 0 0 1-86 0-1-1 0-4 0-1 1 0 64 0 1-3 0-3 1-3 0-3 0-3 0-3 0-3 0-2 0-2-1-1-1 0-50 0-1 0-1-1 0-4 1-1 1 0 52 0 3 1 3 1 1 2 0 4 0 2 0 3 0 3 0 3-1 3 0 3-1 4-1 3z"/></symbol><symbol id="g146" viewBox="0 -84 94 100" preserveAspectRatio="none"><path d="M81-34l-1 0-1 1-29 0 0 21 40 0 1 1 0 3 0 1-1 0 0 1-86 0-1-1 0-1 0-3 0-1 1 0 39 0 0-21-29 0-1 0 0-1-1 0 0-1 0-3 1-1 1 0 13 0 0-31-11 0-1 0 0-1-1 0 0-1 0-3 1-1 1 0 61 0 1 0 1 1 0 3-1 1-1 1-11 0 0 31 13 0 1 0 1 1zm-47-5l26 0 0-31-26 0z"/></symbol><symbol id="g147" viewBox="0 -84 94 100" preserveAspectRatio="none"><path d="M20-12l0-4 2-2 2-1 4 0 42 0 2 0 1 0 2 0 1 1 0 1 1 1 0 2 0 2 0 14 0 3-1 2-3 1-3 1-42 0-3 0-1-1-2 0-1-1 0-1-1-1 0-1 0-2zm35-30l0 3-1 3-2 3-3 3-3 2-4 1-4 1-4 0-5 0-4-1-4-1-3-2-2-3-2-3-1-3-1-3 1-4 1-3 2-2 2-3 3-2 4-1 4-1 5 0 4 0 4 1 4 1 3 2 3 3 2 2 1 4 0 3zm-26 29l-1 0-1 0 0 1 0 1 0 11 0 1 0 1 1 1 1 0 39 0 1 0 1-1 0-1 0-1 0-11 0-1 0-1-1 0-1 0zm19-29l0-2-1-2-1-2-2-2-2-1-2-1-3 0-3-1-3 1-3 0-3 1-2 1-2 2-1 2-1 2 0 2 0 2 1 2 1 2 2 2 2 1 3 1 3 0 3 0 3 0 3 0 2-1 2-1 2-2 1-2 1-2 0-2zm29 16l0 1-1 1-4 0-2-1 0-1 0-55 0-1 2-1 4 0 1 1 0 1 0 27 14 0 1 0 0 1 0 4 0 1-1 0-14 0zm-14-38l0 1-2 0-55 0-1 0 0-1 0-3 0-1 1-1 55 0 2 1zm-15-12l0 1-1 0-28 0-1 0 0-1 0-4 0-1 1 0 28 0 1 0 0 1z"/></symbol><symbol id="g148" viewBox="0 -84 94 100" preserveAspectRatio="none"><path d="M79-50l0 1-1 0 0 1-1 0-52 0-4-1-2-1-1-3 0-3 0-24 0-1 1 0 4 0 1 0 1 1 0 23 0 2 1 1 1 0 50 0 1 0 1 0 0 1zm1 57l0 1-1 0-55 0-3-1-3-1-1-3 0-3 0-20 0-1 1 0 4 0 1 0 1 1 0 20 0 1 1 1 1 0 53 0 1 0 0 1zm10-42l1 1 0 4-1 1-86 0-1 0 0-1 0-4 0-1 1 0z"/></symbol><symbol id="g149" viewBox="0 -84 94 100" preserveAspectRatio="none"><path d="M73-12l-2 2-3 2-3 2-4 2 5 2 7 2 6 1 6 1 1 1 0 1-1 3-1 1-1 0-8-2-7-2-7-2-8-2-14 5-16 4-1 1-1-1-1-3 0-2 1 0 13-4 12-4 11-4 8-6 1 0 1-1-1 0-1-1-39 0-1 0-1-1 0-3 1-1 1-1 42 0 6 1 3 2 0 3-4 4zm-14-19l-1 0 0 1-1 0-6-3-5-2-5-4-5-3-6 4-6 4-6 3-8 4-1 0-2-4 0-1 1-1 6-3 6-3 5-3 4-3 4-3 4-4 3-4 3-4 1-1-1-1-1 0-31 0-1-1 0-1 0-3 0-1 1 0 33 0 5 0 2 2 1 2-1 4-2 3-3 4-2 3-3 3 4 4 5 3 5 2 4 2 1 0 0 2zm18 3l0 1-1 0-4 0-2 0 0-1 0-53 0-1 2-1 4 0 1 1 0 1 0 26 14 0 1 1 0 1 0 3 0 1-1 0-14 0zm-35-53l1 0 1 1 0 4-1 1-1 0-22 0-1 0-1-1 0-4 1-1 1 0z"/></symbol><symbol id="g150" viewBox="0 -84 94 100" preserveAspectRatio="none"><path d="M64-45l13 0 0-36 0-1 1-1 4 0 1 1 1 1 0 89-1 1-1 1-4 0-1-1 0-1 0-47-13 0 0 43 0 1-1 1-4 0-1-1 0-1 0-84 0-1 1 0 4 0 1 0 0 1zm-20-21l-2 5-2 6-2 5-2 5 3 6 4 6 5 6 5 6 0 1-3 3 0 1-1 0-1-1-2-2-2-3-2-2-3-3-2-3-2-3-2-3-1-2-5 6-6 7-6 6-7 5 0 1-1 0-1 0-2-3 0-1 0-1 12-10 9-12 7-12 4-14 1-1-1-1-1-1-26 0-1 0 0-1 0-3 0-1 2-1 27 0 5 1 2 1 1 3-1 4z"/></symbol><symbol id="g151" viewBox="0 -84 94 100" preserveAspectRatio="none"><path d="M25 11l-2 0-2-1-1 0-1-1 0-1-1-1 0-1 0-2 0-28 0-1 1-1 4 0 1 1 0 1 0 10 18 0 0-10 1-1 1 0 3 0 1 0 1 0 0 1 0 28-1 3-1 2-2 1-4 1zm26-83l-4 13-8 11-12 9-16 9-1 0-1 0 0-1-2-3 0-1 1-1 14-7 11-8 7-9 4-10 0-2-2-1-31 0-1 0 0-1 0-4 0-1 1 0 33 0 4 1 2 1 1 2 0 3zm35 82l-6-4-4-4-4-4-2-5-3 5-3 4-4 4-5 4-1 1-1 0 0-1-3-2 0-2 8-7 5-6 3-8 0-10 1 0 0-1 1 0 4 0 1 0 0 1 0 2 0 3 0 2 0 2 2 6 3 5 5 5 6 4 1 1 0 1-2 3-1 0 0 1-1 0zm-9-44l0 1-1 0-4 0-2 0 0-1 0-47 0-1 2-1 4 0 1 1 0 1 0 21 14 0 1 0 0 1 0 4 0 1-1 0-14 0zm-53 26l0 10 0 1 1 1 2 1 13 0 1-1 1 0 0-1 0-1 0-10z"/></symbol><symbol id="g152" viewBox="0 -84 94 100" preserveAspectRatio="none"><path d="M76-61l-1 1-1 1-50 0 0 7 0 1 0 1 1 1 1 0 50 0 1 0 1 1 0 3-1 1-1 0-52 0-3 0-3-1-1-2 0-4 0-23 0-3 1-2 3-1 3-1 52 0 1 1 0 4 0 1-1 0-50 0-1 0-1 1 0 2 0 7 50 0 1 0 1 1zm-61 43l0-1 1 0 53 0 4 1 3 1 1 2 0 4 0 20 0 1-1 1-4 0-2-1 0-1 0-20 0-1 0-1-1 0-1 0-52 0-1 0 0-1zm75-16l1 1 0 4-1 1-86 0-1 0 0-1 0-4 0-1 1 0z"/></symbol><symbol id="g153" viewBox="0 -84 94 100" preserveAspectRatio="none"><path d="M47-42l-5 0-6-1-5-1-5-2-5-3-3-3-2-5-1-5 1-5 2-4 3-3 5-3 5-2 5-1 6-1 5 0 5 0 6 1 5 1 5 2 4 3 4 3 2 4 1 5-1 5-2 5-4 3-4 3-5 2-5 1-6 1-5 0zm0-33l-4 0-4 0-4 1-4 2-3 1-3 3-2 3-1 3 1 4 2 3 3 3 3 1 4 2 4 0 4 1 4 0 3 0 4-1 5 0 3-2 4-1 3-3 2-3 0-4 0-3-2-3-3-3-4-1-3-2-5-1-4 0-3 0zm-2 84l-1 0-1-1 0-33-39 0-1-1 0-4 0-1 1 0 86 0 1 1 0 4-1 0 0 1-40 0 0 33 0 1-1 0z"/></symbol><symbol id="g154" viewBox="0 -84 94 100" preserveAspectRatio="none"><path d="M79 9l0 1-1 0-50 0-4-1-3-1-1-2 0-4 0-7 0-4 2-2 2-1 4 0 40 0 1 0 1-1 0-2 0-5 0-2-1-1-1 0-47 0-1 0 0-1 0-3 0-1 1 0 48 0 2 0 2 0 1 0 2 1 0 1 1 1 0 2 0 2 0 7 0 4-2 2-2 1-4 0-40 0-1 1-1 0 0 2 0 6 0 1 0 1 1 0 1 0 49 0 1 0 0 1zm-28-80l-4 7-5 8 2 2 2 2 2 1 3 2 2 2 3 1 2 1 3 1 0 1 1 0 0 1-1 0-1 4-1 0-1 0-3-1-3-1-3-2-2-2-3-2-3-2-2-2-2-2-6 5-6 4-8 4-7 4-1 0-1 0 0-1-2-3 0-1 1-1 6-3 6-3 5-3 5-4 5-4 4-4 3-4 2-4 1-2-1-1-1 0-30 0-1-1 0-4 1-1 32 0 5 1 2 1 1 2-1 4zm26 35l0 2-1 0-4 0-2 0 0-2 0-45 0-1 2-1 4 0 1 1 0 1 0 20 14 0 1 1 0 4 0 1-1 0-14 0z"/></symbol><symbol id="g155" viewBox="0 -84 94 100" preserveAspectRatio="none"><path d="M22-8l1-4 2-4 2-3 4-3 5-2 5-1 6-1 6 0 6 0 6 1 5 1 5 2 4 3 3 3 2 4 0 4 0 4-2 4-3 3-4 2-5 2-5 2-6 1-6 0-6 0-6-1-5-2-5-2-4-2-2-3-2-4-1-4zm8 0l0 3 2 2 2 2 2 2 4 1 4 1 4 1 5 0 5 0 4-1 4-1 4-1 3-2 2-2 2-2 0-3 0-3-2-2-2-3-3-1-4-2-4-1-4 0-5 0-5 0-4 0-4 1-4 2-2 1-2 3-2 2 0 3zm34-24l0 1-1 0-4 0-1 0 0-1 0-48 0-1 1 0 4 0 1 0 0 1 0 23 13 0 0-24 1-1 1-1 3 0 1 1 1 1 0 52-1 1-1 0-3 0-1 0-1-1 0-22-13 0zm-31-46l0 8-2 7 2 3 1 4 3 3 2 3 3 3 2 2 4 3 3 1 0 1 0 1-3 4-1 0-6-4-5-5-4-6-4-5-3 6-4 5-5 6-6 5-1 1 0-1-1 0-2-3-1-1 1-1 5-4 4-4 3-5 3-5 2-5 2-5 1-6 0-6 0-1 1 0 1-1 4 1 1 0 0 1z"/></symbol><symbol id="g156" viewBox="0 -84 94 100" preserveAspectRatio="none"><path d="M80-17l0 1-1 0-4 0-1 0 0-1 0-64 0-1 1-1 4 0 1 1 0 1zm4 24l-1 0 0 1-1 0-50 0-4-1-2-1-1-2-1-4 0-19 1-1 1-1 4 0 1 1 0 1 0 19 0 1 1 0 0 1 1 0 49 0 1 0 0 1 1 0zm-30-77l-5 14-8 12-12 11-16 8-1 0-1-1-2-3 0-1 1-1 7-3 7-4 5-4 5-5 5-5 3-5 3-5 1-6 0-2-2-1-31 0-1 0 0-1 0-4 0-1 1 0 33 0 4 1 2 1 2 2 0 3z"/></symbol><symbol id="g157" viewBox="0 -84 94 100" preserveAspectRatio="none"><path d="M27 9l-2 0-1-1-2 0-1-1 0-1-1-1 0-1 0-2 0-26 0-1 1 0 5 0 1 1 0 9 43 0 0-9 0-1 1 0 5 0 1 0 0 1 0 26 0 4-2 2-2 0-4 1zm28-54l0 4-1 3-2 2-3 3-3 2-4 1-4 1-4 0-5 0-4-1-4-1-3-2-2-3-2-2-1-3-1-4 1-3 1-3 2-3 2-2 3-2 4-1 4-1 5 0 4 0 4 1 4 1 3 2 3 2 2 3 1 3 0 3zm-28 36l0 9 0 2 1 1 1 0 39 0 1 0 1-1 0-2 0-9zm21-36l-1-4-3-3-4-2-6 0-3 0-3 0-3 1-2 1-2 2-1 1-1 2 0 2 0 3 1 2 1 1 2 2 2 1 3 1 3 0 3 0 6 0 4-2 3-3 1-5zm29 13l0 1-1 1-4 0-2-1 0-1 0-49 0-1 2-1 4 0 1 1 0 1 0 23 14 0 1 0 0 1 0 4 0 1-1 0-14 0zm-14-34l0 1-2 1-55 0-1-1 0-1 0-3 0-1 1 0 55 0 2 0 0 1zm-15-11l0 1-1 0-28 0-1 0 0-1 0-3 0-1 1-1 28 0 1 1 0 1z"/></symbol><symbol id="g158" viewBox="0 -84 94 100" preserveAspectRatio="none"><path d="M80 8l0 1-1 1-4 0-1-1 0-1 0-89 0-1 1-1 4 0 1 1 0 1zm-60-35l0 1 0 1 1 1 1 0 5 0 6 0 5 0 6-1 5 0 6-1 5-1 5-1 1 0 1 2 0 2 0 2-1 0-4 1-5 1-5 0-6 1-7 0-6 1-6 0-6 0-4-1-2-1-2-3 0-3 0-50 0-1 1 0 4 0 1 0 1 1z"/></symbol><symbol id="g159" viewBox="0 -84 94 100" preserveAspectRatio="none"><path d="M66 4l0 1-1 1-4 0-1-1 0-1 0-32-15 0-3 6-5 4-5 2-5 1-5 0-4-2-3-2-3-3-3-5-2-5-1-6 0-8 0-7 1-6 2-6 3-4 3-3 3-3 4-1 5 0 6 1 5 2 5 5 3 7 14 0 0-19 0-1 1 0 4 0 1 0 0 1zm-25-50l0-4-1-5-1-4-1-4-2-3-3-2-3-2-3 0-4 0-3 2-2 2-2 4-2 3 0 5-1 4 0 4 0 5 1 4 1 4 1 4 2 3 2 3 3 2 4 0 3 0 3-2 3-2 2-4 1-3 1-5 1-4 0-5zm43 54l-1 1-1 1-3 0-1-1-1-1 0-89 1-1 1-1 3 0 1 1 1 1zm-36-54l0 7-1 5 13 0 0-21-12 0 0 2 0 2 0 3 0 2z"/></symbol><symbol id="g160" viewBox="0 -84 94 100" preserveAspectRatio="none"><path d="M90-30l0 1 1 0 0 1 0 3-1 1-86 0-1 0 0-1 0-3 0-1 1-1 39 0 0-6-5 0-4-1-4-1-3-2-3-2-2-2-1-2 0-3 0-3 2-2 2-3 3-2 4-1 4-1 5-1 6 0 5 0 5 1 5 1 3 2 3 1 3 3 1 2 1 3-1 3-1 2-2 2-3 2-3 2-4 1-4 1-5 0 0 6zm-73 19l0-3 1-2 3-1 3-1 45 0 3 0 1 1 2 0 1 1 0 1 1 1 0 1 0 2 0 13 0 3-2 2-2 1-4 1-45 0-2 0-1-1-2 0-1-1 0-1-1-1 0-1 0-2zm9-1l-1 0-1 1 0 2 0 9 0 1 0 1 1 1 1 0 42 0 1 0 1-1 0-1 0-1 0-9 0-2-1-1-1 0zm39-37l0-2-1-1-2-2-2-1-3 0-3-1-3 0-4 0-4 0-4 0-3 1-3 0-2 1-1 2-1 1-1 2 1 2 1 1 1 2 2 1 3 1 3 0 4 1 4 0 4 0 3-1 3 0 3-1 2-1 2-2 1-1 0-2zm17-18l0 1-1 0-68 0-1 0 0-1-1 0 0-3 1-1 0-1 1 0 68 0 1 1 0 1zm-23-15l1 0 1 1 0 3-1 1-1 1-25 0-1-1-1-1 0-3 1-1 1 0z"/></symbol><symbol id="g161" viewBox="0 -84 94 100" preserveAspectRatio="none"><path d="M90-44l0 1 1 0 0 1 0 3-1 1-86 0-1 0 0-1 0-3 0-1 1-1zm-12-10l0 1-1 0-52 0-4 0-2-1-1-2-1-4 0-15 1-4 1-2 2-1 4 0 51 0 1 0 0 1 0 3 0 1-1 1-50 0-1 0-1 1 0 1 0 13 0 1 1 1 1 0 51 0 1 1 0 1zm1 62l0 1-1 0-54 0-3 0-3-2-1-2 0-4 0-7 0-3 2-3 2-1 4 0 43 0 1 0 1 0 0-1 0-1 0-6 0-1 0-1-1 0-1 0-50 0-1-1 0-4 0-1 1 0 51 0 2 0 2 0 1 1 1 1 1 1 1 1 0 1 0 2 0 8-1 3-1 2-2 1-4 1-43 0-1 0-1 0 0 1 0 1 0 6 0 1 0 1 1 0 1 0 52 0 1 1z"/></symbol><symbol id="g162" viewBox="0 -84 94 100" preserveAspectRatio="none"><path d="M58-54l-1 4-1 4-2 3-2 3-3 3-4 2-3 2-5 1 0 17 4 0 4-1 4 0 4 0 4-1 3 0 4-1 3 0 1 0 1 0 0 4 0 1-1 0-4 1-3 0-4 1-4 0-5 1-4 0-4 0-4 1-3 0-4 0-4 0-4 0-4 0-4 0-4 0-3 0-1 0-1-1 0-4 1-1 1 0 2 0 3 0 3 0 3 0 3 0 4 0 3 0 3 0 0-17-4-1-4-2-3-2-3-3-3-3-2-3-1-4 0-4 0-5 2-5 2-3 3-3 3-3 4-2 5-1 5 0 4 0 5 1 4 2 3 3 3 3 3 4 1 4 1 5zm-8 0l0-4-1-3-2-3-2-2-2-1-3-2-3 0-3-1-4 1-3 0-3 2-2 1-2 2-2 3-1 3 0 4 0 3 1 3 2 3 2 2 2 2 3 1 3 1 4 0 3 0 3-1 3-1 2-2 2-2 2-3 1-3 0-3zm30 62l0 1-1 1-4 0-1-1 0-1 0-89 0-1 1-1 4 0 1 1 0 1z"/></symbol><symbol id="g163" viewBox="0 -84 94 100" preserveAspectRatio="none"><path d="M39-43l-6 1-4 0-5 0-5 0-5 0 0 18 1 2 1 1 1 0 8 0 9-1 7-1 8-1 1 0 1 1 1 3 0 1-1 0-1 1-8 1-9 1-9 1-9 0-3 0-3-2-1-3 0-3 0-45 0-3 1-2 3-1 3-1 27 0 1 1 1 1 0 3-1 1-1 0-26 0-1 0 0 1-1 2 0 18 5 0 3 0 2 0 2 0 3 0 2 0 2 0 3 0 3-1 1 0 0 1 0 1 0 3 0 1-1 0zm27 47l0 1-1 1-4 0-1-1 0-1 0-47-13 0-1-1-1 0 0-1 0-3 0-1 1 0 1 0 13 0 0-31 0-1 1 0 4 0 1 0 0 1zm18 4l-1 1-1 1-3 0-1-1-1-1 0-89 1-1 1-1 3 0 1 1 1 1z"/></symbol><symbol id="g164" viewBox="0 -84 94 100" preserveAspectRatio="none"><path d="M10-68l0-4 1-2 2-1 4 0 29 0 3 0 1 0 2 1 1 0 0 1 1 1 0 2 0 2 0 44 0 4-2 2-2 1-4 0-29 0-2 0-2 0-1 0-1-1-1-1 0-1 0-2 0-2zm9-1l-1 0-1 0 0 1-1 2 0 41 1 1 0 1 1 0 1 0 26 0 1 0 1 0 0-1 0-1 0-41 0-2 0-1-1 0-1 0zm58 77l0 1-1 1-4 0-2-1 0-1 0-89 0-1 2-1 4 0 1 1 0 1 0 36 14 0 1 1 0 4 0 1-1 0-14 0z"/></symbol><symbol id="g165" viewBox="0 -84 94 100" preserveAspectRatio="none"><path d="M64-31l0 1-1 0-4 0-1 0 0-1 0-49 0-1 1 0 4 0 1 0 0 1 0 23 13 0 0-24 1-1 1-1 3 0 1 1 1 1 0 51-1 1-1 1-3 0-1-1-1-1 0-21-13 0zm-42 9l1 0 0-1 1 0 52 0 4 0 2 2 1 2 1 4 0 24-1 1-1 0-4 0-1 0 0-1 0-24 0-1-1-1-1 0-51 0-1 0 0-1-1 0zm11-55l0 7-2 7 2 4 1 3 3 3 2 3 3 3 2 3 4 2 3 2 0 1 0 1-3 3 0 1-1-1-6-4-5-5-4-5-4-6-3 6-4 6-5 5-6 5 0 1-1 0-1 0-2-4-1-1 1-1 5-4 4-4 3-5 3-4 2-5 2-6 1-5 0-7 1-1 1 0 4 0 1 1 0 1z"/></symbol><symbol id="g166" viewBox="0 -84 94 100" preserveAspectRatio="none"><path d="M79 8l0 1-1 0-54 0-3 0-3-2-1-2 0-4 0-7 0-3 2-3 2-1 4 0 43 0 1 0 1 0 0-1 0-1 0-6 0-1 0-1-1 0-1 0-50 0-1 0 0-1 0-4 1-1 51 0 2 0 2 1 1 0 1 1 1 1 1 1 0 2 0 1 0 8-1 3-1 2-2 1-4 1-43 0-1 0-1 0 0 1 0 1 0 6 0 1 0 1 1 0 1 0 52 0 1 1zm-29-68l1 0 0 1 1 0 0 15 38 0 0 1 1 0 0 1 0 3-1 1-86 0-1 0 0-1 0-3 0-1 1-1 41 0 0-15 0-1 1 0zm-5-19l0-1 1 0 0-1 1 0 23 0 3 1 1 0 2 1 1 1 1 2 0 1 0 2 0 6-1 5 0 5-1 4-1 1-1 0-3 0-2 0 0-2 1-4 1-5 0-5 0-5 0-1-1-1-1 0-22 0-1 0-1-1zm-32 0l0-1 1-1 21 0 3 1 3 1 1 3 0 3 0 3 0 3-1 2-1 3-1 3-2 3-1 2-2 2-1 1-2 0-2-2-1-1 0-1 4-4 2-5 1-4 1-5 0-1-1 0 0-1-1 0-20 0-1 0 0-1z"/></symbol><symbol id="g167" viewBox="0 -84 94 100" preserveAspectRatio="none"><path d="M60-18l-1 1-1-1-3-2-2-2-3-2-3-3-2-3-3-2-2-3-2-3-6 6-6 6-7 6-7 6-1 0-1 0-2-3-1-1 0-1 1 0 14-12 11-11 7-12 5-12 0-2 0-1-2 0-30 0-1 0 0-1 0-4 0-1 1 0 33 0 4 0 3 2 0 2 0 4-5 12-6 12 2 3 3 3 2 3 3 3 2 2 3 3 3 2 2 2 0 1zm20 26l0 1-1 1-4 0-1-1 0-1 0-89 0-1 1-1 4 0 1 1 0 1z"/></symbol><symbol id="g168" viewBox="0 -84 94 100" preserveAspectRatio="none"><path d="M27 9l-2 0-1-1-2 0-1-1 0-1-1-1 0-1 0-2 0-29 0-1 1 0 5 0 1 1 0 11 43 0 0-11 0-1 1 0 5 0 1 0 0 1 0 29 0 4-2 2-2 0-4 1zm10-88l0 3-1 3 0 3-1 3 3 8 5 6 7 6 7 5 1 0 0 1-1 1-2 3 0 1-1 0-1-1-6-4-6-5-5-6-4-5-4 7-4 6-7 6-7 5-1 0 0 1-1-1-3-3 0-1 0-1 1 0 18-18 6-23 0-1 1-1 5 0 0 1 1 1zm-10 69l0 10 0 2 1 1 1 0 39 0 1 0 1-1 0-2 0-10zm50-25l0 1-1 0-4 0-2 0 0-1 0-46 0-1 2-1 4 0 1 1 0 1 0 20 14 0 1 0 0 1 0 4-1 1-14 0z"/></symbol><symbol id="g169" viewBox="0 -84 94 100" preserveAspectRatio="none"><path d="M55-57l-3 3-2 4-3 3-4 3 5 2 4 2 6 2 4 2 1 0 0 1-1 4-1 0-1 0-6-2-6-2-5-3-5-2-11 6-14 5 0 1-1 0-1-1-1-3 0-1 0-1 12-5 10-5 8-6 7-6 1-1 0-1-1-1-1 0-32 0-1 0 0-1 0-4 0-1 1 0 34 0 5 0 3 2 0 3-1 3zm25 65l0 1-1 1-4 0-1-1 0-1 0-89 0-1 1-1 4 0 1 1 0 1zm-13-25l1 0 1 1 0 3 0 1-1 1-4 0-4 1-3 0-5 1-4 0-4 1-4 0-4 0-3 0-4 0-4 1-4 0-4 0-4 0-4 0-3 0-1-1-1 0 0-1 0-3 0-1 1 0 1 0 2 0 3 0 4 0 3 0 4 0 4 0 3 0 4-1 0-14 0-1 1 0 4 0 1 0 1 1 0 14 3 0 4-1 4 0 3 0 4-1 3 0 3-1 3 0zm-21-62l1 0 0 1 0 4 0 1-1 0-23 0-1 0 0-1 0-4 0-1 1 0z"/></symbol><symbol id="g170" viewBox="0 -84 94 100" preserveAspectRatio="none"><path d="M37-78l0 4-1 4 0 3-1 4 2 4 2 4 2 4 3 4 3 3 3 3 4 3 4 2 0 1 0 1-2 3 0 1-1 0-1 0-3-2-3-2-3-3-3-3-3-4-3-3-2-3-2-4-4 8-5 7-6 6-7 5-1 1-1 0 0-1-3-3 0-1 1 0 0-1 5-3 5-5 4-5 3-6 3-6 2-6 1-7 1-7 0-1 1-1 5 1 1 0 0 1zm47 85l-1 0 0 1-1 0-50 0-4-1-2-1-1-2-1-4 0-19 1-1 1-1 4 0 1 1 0 1 0 19 0 1 1 0 0 1 2 0 48 0 1 0 0 1 1 0zm-4-24l0 1-1 0-4 0-1 0 0-1 0-64 0-1 1-1 4 0 1 1 0 1z"/></symbol><symbol id="g171" viewBox="0 -84 94 100" preserveAspectRatio="none"><path d="M50-55l-2 5-2 4-2 4-4 4 3 3 2 2 2 3 3 2 3 2 2 2 3 2 2 1 1 1 0 1-2 3-1 1-1-1-3-1-2-2-3-2-3-2-2-3-3-2-2-2-3-3-5 6-7 5-7 4-7 4-2 1 0-1-2-3 0-1 0-1 12-7 10-8 8-9 7-11 0-1 0-1-1-1-1 0-30 0-1 0 0-1 0-4 1-1 33 0 4 1 2 1 1 3-1 3zm27 63l0 1-1 1-4 0-2-1 0-1 0-89 0-1 2-1 4 0 1 1 0 1 0 36 14 0 1 1 0 4 0 1-1 0-14 0zm-33-86l1 0 0 1 0 4 0 1-1 0-25 0-1 0-1-1 0-4 1-1 1 0z"/></symbol><symbol id="g172" viewBox="0 -84 94 100" preserveAspectRatio="none"><path d="M79 9l0 1-1 0-50 0-4-1-3-1-1-2 0-4 0-7 0-4 2-2 2-1 4 0 40 0 1 0 1-1 0-2 0-5 0-2-1-1-1 0-47 0-1 0 0-1 0-3 0-1 1 0 48 0 2 0 2 0 1 0 2 1 0 1 1 1 0 2 0 2 0 7 0 4-2 2-2 1-4 0-40 0-1 1-1 0 0 2 0 6 0 1 0 1 1 0 1 0 49 0 1 0 0 1zm-60-57l0 1 1 1 1 0 10 0 10 0 10-1 10-2 1 0 1 1 0 4-1 1-4 1-5 1-6 0-5 1-6 0-6 1-5 0-5 0-4-1-2-2-1-2-1-4 0-31 0-1 2 0 4 0 1 0 0 1zm58 12l0 1-1 1-4 0-2-1 0-1 0-45 0-1 2-1 4 0 1 1 0 1 0 20 14 0 1 0 0 1 0 3 0 1-1 1-14 0z"/></symbol><symbol id="g173" viewBox="0 -84 94 100" preserveAspectRatio="none"><path d="M64-20l-1 1-1 0 0-1-4-3-4-5-4-4-3-5-4 7-4 7-5 7-6 6-1 0-3-2-1-1 1-1 3-3 3-4 2-3 3-4-3-3-3-4-3-4-3-4-3 6-4 6-4 6-5 4-1 1-1 0-2-3-1-1 0-1 5-4 3-5 4-5 3-5 2-6 2-5 2-6 1-5 0-2-1-1-1 0-13 0-1 0 0-1 0-3 0-1 1-1 15 0 4 1 2 1 0 3 0 4-1 8-3 8 1 3 1 2 2 2 1 2 2 2 2 2 1 2 2 2 4-8 4-8 2-9 2-8 0-2-1-1-1 0-13 0-1 0 0-1 0-3 0-1 1-1 15 0 4 1 2 1 1 3 0 4-1 5-2 6-1 6-3 5 2 3 1 2 2 3 2 3 2 2 2 3 3 2 2 2 0 1zm13 28l0 1-1 1-4 0-2-1 0-1 0-89 0-1 2-1 4 0 1 1 0 1 0 36 14 0 1 1 0 4 0 1-1 0-14 0z"/></symbol><symbol id="g174" viewBox="0 -84 94 100" preserveAspectRatio="none"><path d="M70-69l-2 2-4 3-4 2-4 2 3 2 3 1 4 1 4 1 4 1 3 1 3 0 3 1 1 0 0 1-1 4-1 0-1 1-3-1-4-1-4-1-4-1-5-2-5-1-4-1-4-2-5 2-4 2-5 2-4 1-5 1-4 1-4 1-4 1-1 0-1-1-1-3 0-1 1-1 6-1 7-2 8-2 7-3 7-3 6-3 6-3 4-3 1 0 1-1-1-1-1 0-43 0-1-1 0-1 0-3 0-1 1 0 46 0 9 2-4 8zm20 37l1 1 0 4-1 1-86 0-1 0 0-1 0-4 0-1 1 0 40 0 0-14 0-1 1 0 4 0 1 0 0 1 0 14zm-10 39l-1 1-1 0-54 0-3-1-3-1-1-3 0-3 0-18 0-1 1 0 4 0 1 0 1 1 0 18 0 1 1 1 1 0 52 0 1 0 1 1z"/></symbol><symbol id="g175" viewBox="0 -84 94 100" preserveAspectRatio="none"><path d="M32 9l-2 0-2-1-1 0-1-1-1-1-1-1 0-1 0-2 0-26 0-1 1 0 1-1 4 0 0 1 1 0 0 1 0 9 46 0 0-9 0-1 1 0 0-1 4 0 1 1 1 0 0 1 0 26-1 4-1 2-2 0-4 1zm10-63l-5 1-5 0-6 0-5 0-6 0 0 11 0 2 1 1 1 0 5 0 4 0 4 0 3 0 4-1 4 0 4-1 4-1 1 0 1 1 1 3 0 1-1 1-1 0-8 2-8 1-9 0-9 0-4 0-2-2-1-2-1-4 0-30 0-4 2-2 2-1 4 0 27 0 1 0 0 1 0 3 0 1-1 1-26 0-1 0-1 0 0 1 0 1 0 11 6 0 5 0 6 0 5 0 5-1 1 0 0 1 1 0 0 1 0 3-1 1-1 0zm22-4l13 0 0-23 1-1 1-1 3 0 1 1 1 1 0 49-1 1-1 1-3 0-1-1-1-1 0-20-13 0 0 19 0 1-1 0-4 0-1 0 0-1 0-47 0-1 1 0 4 0 1 0 0 1zm-33 49l0 9 0 2 1 0 0 1 2 0 40 0 2 0 0-1 1 0 0-2 0-9z"/></symbol><symbol id="g176" viewBox="0 -84 94 100" preserveAspectRatio="none"><path d="M46-9l-1 0 0-1-1 0 0-1 0-20-40 0-1-1 0-4 0-1 1 0 86 0 1 1 0 4-1 0 0 1-39 0 0 20 0 1-1 1zm4-71l0 1 0 1 0 1 0 1 0 1 1 1 2 4 3 3 3 3 4 2 4 3 5 2 5 2 5 1 1 1 0 1-2 4-1 0-1 0-5-1-5-2-5-3-4-2-4-3-4-3-3-4-3-3-5 7-7 6-9 5-10 4-2 0-2-4 0-1 0-1 1 0 6-2 6-3 5-3 5-3 4-4 3-4 2-4 1-4 0-1 1 0 4 0 1 1zm30 87l0 1-1 0-55 0-4-1-3-1-1-3 0-3 0-20 0-1 1-1 5 0 1 1 0 1 0 20 0 1 1 1 1 0 54 0 1 0 0 1z"/></symbol><symbol id="g177" viewBox="0 -84 94 100" preserveAspectRatio="none"><path d="M83 9l-1 0 0 1-1 0-50 0-4-1-2-1-1-2-1-4 0-7 1-4 1-2 3-1 3 0 40 0 2 0 0-1 1 0 0-2 0-5 0-2-1 0 0-1-1 0-47 0-1 0-1 0 0-1 0-3 0-1 1 0 1 0 48 0 2 0 1 0 2 0 1 1 1 1 0 1 0 2 0 2 0 7 0 4-1 2-3 1-4 0-40 0-1 1-1 0 0 2 0 6 0 1 1 1 1 0 49 0 1 0 0 1 1 0zm-45-89l-1 8-1 6 2 3 2 4 2 3 3 3 3 3 4 2 3 2 3 2 0 1-2 4-1 0-1 0-3-1-3-2-3-2-3-3-3-3-2-2-3-3-2-3-3 5-5 6-6 5-6 5-1 0-1 0-1 0-2-3 0-1 0-1 6-4 5-4 4-5 3-4 3-5 1-5 1-5 0-6 1 0 0-1 1 0 4 0 1 0 1 1zm42 44l0 2-1 0-4 0-1 0 0-2 0-22-21 0-1 0 0-1 0-4 0-1 1 0 21 0 0-17 0-1 1-1 4 0 1 1 0 1z"/></symbol><symbol id="g178" viewBox="0 -84 94 100" preserveAspectRatio="none"><path d="M16-69l0-4 1-2 3-1 3 0 47 0 2 0 2 0 1 1 1 0 1 1 1 2 0 1 0 2 0 28-1 3-1 3-2 1-4 0-20 0 0 22 40 0 1 1 0 3 0 1-1 0 0 1-86 0-1-1 0-1 0-3 0-1 1 0 39 0 0-22-20 0-2 0-2 0-1-1-1 0-1-1 0-2 0-1 0-2zm9-1l-1 0-1 0 0 1 0 1 0 25 0 2 1 1 1 0 43 0 2 0 0-1 1 0 0-2 0-25 0-1-1-1-2 0z"/></symbol><symbol id="g179" viewBox="0 -84 94 100" preserveAspectRatio="none"><path d="M80 7l0 1-1 0-55 0-3-1-3-1-1-3 0-3 0-20 0-1 1 0 4 0 1 0 1 1 0 20 0 1 1 1 1 0 53 0 1 0 0 1zm10-42l1 1 0 4-1 1-86 0-1 0 0-1 0-4 0-1 1 0zm-12-14l-1 1-1 0-51 0-4 0-2-1-1-2-1-4 0-18 1-3 1-3 2-1 4 0 51 0 1 0 0 1 0 4 0 1-1 0-49 0-2 0 0 1-1 0 0 2 0 15 0 1 1 1 2 0 49 0 1 1 1 1z"/></symbol><symbol id="g180" viewBox="0 -84 94 100" preserveAspectRatio="none"><path d="M90-42l1 0 0 1 0 3 0 1-1 0 0 1-86 0-1-1 0-1 0-3 0-1 1 0zm-11 50l0 1-1 0-54 0-3 0-3-2-1-2 0-4 0-7 0-3 2-3 2-1 4 0 43 0 1 0 1 0 0-1 0-1 0-5 0-2-1-1-1 0-50 0-1 0 0-1 0-3 0-1 1 0 51 0 2 0 2 0 1 0 1 1 1 1 1 1 0 2 0 2 0 7-1 3-1 2-2 1-4 1-43 0-1 0-1 0 0 1 0 1 0 6 0 1 0 1 1 0 1 0 52 0 1 1zm-54-58l-2 0-2-1-1 0-1-1-1-1 0-1 0-2 0-2 0-24 0-1 1 0 4 0 1 0 0 1 0 10 46 0 0-10 0-1 1 0 4 0 1 0 0 1 0 25 0 3-1 2-2 1-4 1zm-1-17l0 8 0 2 1 0 1 1 1 0 40 0 1 0 1-1 1 0 0-2 0-8z"/></symbol><symbol id="g181" viewBox="0 -84 94 100" preserveAspectRatio="none"><path d="M74-70l0-11 0-1 1-1 4 0 1 1 0 1 0 64 0 1-1 1-4 0-1-1 0-1 0-30-25 0-1 0-1-1 0-4 1-1 1 0 25 0 0-11-25 0-1 0-1-1 0-4 1-1 1 0zm-55 31l0 1 1 1 1 0 5 1 4 0 5-1 5 0 4 0 5 0 4-1 4 0 1-1 1 1 0 1 1 2-1 1 0 1-1 0-4 1-5 1-5 0-5 0-5 1-5 0-5 0-4 0-4-1-2-2-1-2-1-4 0-38 0-1 2 0 4 0 1 0 0 1zm65 46l-1 0 0 1-1 0-50 0-4-1-2-1-1-2-1-4 0-19 1-1 1 0 4 0 1 0 0 1 0 19 0 1 1 0 0 1 2 0 48 0 1 0 0 1 1 0z"/></symbol><symbol id="g182" viewBox="0 -84 94 100" preserveAspectRatio="none"><path d="M66-39l1 0 0 1 1 4-1 1-7 1-7 1-8 0-7 1 0 33 0 1-1 1-5 0-1-1 0-1 0-33-3 0-4 0-3 1-4 0-3 0-3 0-3 0-2 0-1 0 0-1-1 0 0-4 1-1 1 0 3 0 4 0 4 0 4 0 4-1 4 0 4 0 3 0 2 0 2 0 3 0 2-1 1-3 0-3 1-4 1-4-2 0-2 0-2 0-2 0-2 1-1 0-2 0-3 0-3 0-3 0-2 0-4 0-2 0-3 0-3 0-1 0-1-1 0-3 1-1 1-1 2 0 3 0 3 0 3 0 3 0 3 0 3 0 2 0 1 0 2 0 2 0 2 0 2-1 2 0 2 0 1 0 0-3 1-2 0-3 0-2-1-1 0-1-1 0-1 0-34 0-1-1 0-4 1-1 36 0 2 0 2 0 1 1 1 1 1 1 0 1 0 2 0 2 0 3 0 4 0 4-1 4 0 4-1 4 0 4-1 3 4 0 4-1 3 0 3-1zm8 18l0-60 0-1 1-1 4 0 1 1 0 1 0 89 0 1-1 1-4 0-1-1 0-1 0-23-21 0-1-1-1 0 0-4 1-1 1 0z"/></symbol><symbol id="g183" viewBox="0 -84 94 100" preserveAspectRatio="none"><path d="M19-37l-3 0-1-1-2 0-1-1 0-1-1-1 0-1 0-2 0-36 1-1 5 0 1 0 0 1 0 16 29 0 0-16 0-1 1 0 5 0 1 0 0 1 0 12 20 0 0-13 0-1 1-1 4 0 1 1 0 1 0 45 0 1-1 1-4 0-1-1 0-1 0-10-20 0 0 2 0 3-2 2-2 1-4 1zm64 46l-1 0 0 1-1 0-50 0-4-1-2-1-1-2-1-4 0-7 1-4 1-2 2-1 4 0 40 0 2 0 0-1 1 0 0-2 0-5 0-2-1 0 0-1-1 0-48 0-1 0 0-1 0-3 0-1 1 0 49 0 2 0 1 0 2 0 1 1 1 1 0 1 0 2 0 2 0 7 0 4-1 2-3 1-4 0-40 0-1 1-1 0 0 2 0 6 0 1 1 1 1 0 49 0 1 0 0 1 1 0zm-65-67l0 12 0 2 1 1 1 0 25 0 1 0 1-1 0-2 0-12zm36 6l20 0 0-11-20 0z"/></symbol><symbol id="g184" viewBox="0 -84 94 100" preserveAspectRatio="none"><path d="M79-55l0 1-1 0-1 0-27 0 0 10 40 0 0 1 1 0 0 1 0 3-1 1-86 0-1 0 0-1 0-3 0-1 1-1 40 0 0-10-19 0-4 0-2-2-1-2 0-4 0-20 0-1 1 0 4 0 1 0 1 1 0 20 0 1 0 1 1 0 1 0 50 0 1 0 0 1 1 0zm-9 55l0 3-2 3-2 2-3 2-3 1-4 1-4 1-4 0-5 0-4-1-4-1-3-1-3-2-3-2-1-3-1-3 1-2 1-3 3-2 3-2 3-1 4-1 4 0 4-1 5 1 4 0 4 1 3 1 3 2 2 2 2 3 0 2zm10-16l0 1-1 0-63 0-1 0 0-1 0-3 0-1 1 0 63 0 1 0 0 1zm-17 16l0-1-1-1-2-2-2 0-2-1-3-1-3 0-3 0-2 0-3 0-3 1-2 1-2 0-2 2-1 1 0 1 0 2 1 1 2 1 2 1 2 1 3 1 3 0 2 0 3 0 3 0 3-1 2-1 2-1 2-1 1-1 0-2zm0-27l0 1-1 1-30 0-1-1 0-1 0-3 1-1 30 0 1 0 0 1z"/></symbol><symbol id="g185" viewBox="0 -84 94 100" preserveAspectRatio="none"><path d="M47-32l-6 0-5-1-6-2-4-2-5-3-3-4-2-5-1-5 1-6 2-4 3-4 5-3 4-3 6-1 5-1 6-1 5 1 6 1 5 1 5 3 4 3 4 4 2 4 1 6-1 5-2 5-4 4-4 3-5 2-5 2-6 1-5 0zm0-38l-4 0-4 0-4 1-4 2-3 2-3 3-2 4-1 4 1 4 2 4 3 2 3 3 4 1 4 1 4 1 4 0 3 0 5-1 4-1 4-1 3-3 3-2 2-4 0-4 0-4-2-4-3-3-3-2-4-2-4-1-5 0-3 0zm43 58l1 1 0 3 0 1-1 0 0 1-86 0-1-1 0-1 0-3 0-1 1 0z"/></symbol><symbol id="g186" viewBox="0 -84 94 100" preserveAspectRatio="none"><path d="M61-39l1 0 0 1 1 3 0 1-1 1-6 1-7 0-7 1-7 0-3 0-4 0-3 0-4 0-4 0-4 1-3-1-3 0-1 0-1 0 0-1 0-3 0-1 1 0 1 0 11 0 0-35-10 0-1 0 0-1-1 0 0-4 1-1 1 0 49 0 1 0 0 1 0 4 0 1-1 0-9 0 0 34 4-1 3 0 3 0 3-1zm13-27l0-15 0-1 1-1 4 0 1 1 0 1 0 64 0 1-1 0-4 0-1 0 0-1 0-27-16 0-1 0 0-1 0-3 0-1 1-1 16 0 0-10-16 0-1-1 0-1 0-3 0-1 1 0zm-40 29l2 0 2 0 2 0 2 0 0-34-17 0 0 35 3-1 2 0 2 0 2 0zm50 44l-1 0 0 1-1 0-50 0-4-1-2-1-1-2-1-4 0-19 1-1 1-1 4 0 1 1 0 1 0 19 0 1 1 0 0 1 2 0 48 0 1 0 0 1 1 0z"/></symbol><symbol id="g187" viewBox="0 -84 94 100" preserveAspectRatio="none"><path d="M31 9l-2 0-2-1-1 0-1-1-1-1 0-1-1-1 0-2 0-29 1 0 0-1 1 0 4 0 1 0 0 1 0 11 44 0 0-11 0-1 1 0 4 0 1 0 0 1 0 29 0 4-1 2-2 0-4 1zm21-80l-2 4-2 4-2 3-3 4 4 4 5 3 5 3 5 3 1 0 0 1-1 0-2 4 0 1-1 0-1-1-5-2-5-4-5-3-5-4-5 5-7 5-7 4-8 4-1 0-2-4-1 0 0-1 1 0 0-1 13-6 10-8 8-8 5-9 1-2-1-1-1 0-30 0-1 0 0-1 0-4 1-1 1 0 31 0 5 0 2 2 1 2-1 4zm-22 61l0 10 0 2 1 0 1 1 1 0 38 0 1 0 1-1 1-2 0-10zm50-25l0 1-1 0-4 0-1 0 0-1 0-46 0-1 1-1 4 0 1 1 0 1z"/></symbol><symbol id="g188" viewBox="0 -84 94 100" preserveAspectRatio="none"><path d="M44-69l-2 4-2 4-3 4-2 4 4 4 3 3 4 4 5 3 1 1 0 1-3 3-1 1-1-1-5-3-4-4-3-3-4-4-4 4-5 4-5 4-7 5-1 0-1 0-2-3 0-1 0-1 6-4 5-4 4-3 4-4 3-4 3-4 3-5 2-5 1-1-1-1-2 0-23 0-1-1 0-1 0-3 0-1 1 0 26 0 4 0 3 2 1 2-1 4zm-22 47l1 0 0-1 1 0 52 0 4 0 2 2 1 2 1 4 0 24-1 1-1 0-4 0-1 0 0-1 0-24 0-1-1-1-1 0-51 0-1 0 0-1-1 0zm38-37l0-21 0-1 1 0 4 0 1 0 0 1 0 49 0 1-1 0-4 0-1 0 0-1 0-22-14 0-1-1-1 0 0-4 1-1 1 0zm24 29l-1 1-1 1-3 0-1-1-1-1 0-51 1-1 1-1 3 0 1 1 1 1z"/></symbol><symbol id="g189" viewBox="0 -84 94 100" preserveAspectRatio="none"><path d="M64-45l13 0 0-36 1-1 1-1 3 0 1 1 1 1 0 89-1 1-1 1-3 0-1-1-1-1 0-47-13 0 0 43 0 1-1 1-4 0-1-1 0-1 0-84 0-1 1 0 4 0 1 0 0 1zm-49 31l-4 0-2-2-1-2 0-4 0-19 0-3 1-2 3-1 4-1 19 0 1 0 1 0 0-1 0-1 0-16 0-1 0-1-1 0-1 0-26 0-1-1 0-1 0-3 0-1 1 0 27 0 2 0 2 0 1 0 1 1 1 1 1 1 0 2 0 2 0 18-1 4-1 2-2 1-4 0-19 0-2 0 0 1-1 1 0 18 1 2 2 0 8 0 8-1 9-1 8-2 2 1 0 1 1 3 0 1-1 0-9 2-9 1-9 1-10 0z"/></symbol><symbol id="g190" viewBox="0 -84 94 100" preserveAspectRatio="none"><path d="M44-55l-2 5-2 4-2 4-3 4 4 5 5 5 4 4 5 3 0 1 0 1-3 3 0 1-1 0-1-1-2-1-2-2-2-2-2-2-2-3-3-2-2-2-2-2-4 5-5 5-6 4-6 4-1 0-3-3 0-1 0-1 1 0 5-4 5-4 4-4 5-5 3-4 3-5 3-5 2-4 0-2-2-1-24 0-1 0 0-1 0-4 1-1 27 0 4 1 2 1 1 3-1 3zm16 11l0-36 0-1 1 0 4 0 1 0 0 1 0 84 0 1-1 1-4 0-1-1 0-1 0-42-13 0-1 0 0-1 0-3 0-1 1 0 0-1zm24 52l-1 1-1 1-3 0-1-1-1-1 0-89 1-1 1-1 3 0 1 1 1 1zm-47-85l1 0 1 1 0 3-1 2-1 0-19 0-1 0 0-2 0-3 0-1 1 0z"/></symbol><symbol id="g191" viewBox="0 -84 94 100" preserveAspectRatio="none"><path d="M78-5l0 3-2 3-3 3-3 2-5 1-5 2-5 1-6 0-6 0-6-1-5-2-4-1-3-2-3-3-1-3-1-3 1-4 1-3 3-2 3-2 4-2 5-1 6-1 6 0 6 0 5 1 5 1 5 2 3 2 3 2 2 3 0 4zm-23-37l0 3-1 3-2 3-3 3-3 2-4 1-4 1-4 0-5 0-4-1-4-1-3-2-2-3-2-3-1-3-1-3 1-4 1-3 2-2 2-3 3-2 4-1 4-1 5 0 4 0 4 1 4 1 3 2 3 3 2 2 1 4 0 3zm16 37l0-2-2-2-2-2-3-1-3-1-4-1-4-1-4 0-5 0-4 1-3 1-4 1-2 1-2 2-1 2-1 2 1 2 1 2 2 1 2 2 4 1 3 1 4 0 5 0 4 0 4 0 4-1 3-1 3-2 2-1 2-2 0-2zm-23-37l0-2-1-2-1-2-2-2-2-1-2-1-3 0-3-1-3 1-3 0-3 1-2 1-2 2-1 2-1 2 0 2 0 2 1 2 1 2 2 2 2 1 3 1 3 0 3 0 3 0 3 0 2-1 2-1 2-2 1-2 1-2 0-2zm29 18l0 1-1 0-4 0-2 0 0-1 0-57 0-1 2-1 4 0 1 1 0 1 0 27 14 0 1 0 0 1 0 4 0 1-1 0-14 0zm-14-40l0 1-2 0-55 0-1 0 0-1 0-3 0-1 1-1 55 0 2 1zm-15-12l0 1-1 0-28 0-1 0 0-1 0-4 0-1 1 0 28 0 1 0 0 1z"/></symbol><symbol id="cd" viewBox="0 -84 94 100" preserveAspectRatio="none"><path d="M22-42L47-18L72-42" fill="none" stroke="currentColor" stroke-width="7"/></symbol><symbol id="cu" viewBox="0 -84 94 100" preserveAspectRatio="none"><path d="M22-22L47-46L72-22" fill="none" stroke="currentColor" stroke-width="7"/></symbol><symbol id="cx" viewBox="0 -84 94 100" preserveAspectRatio="none"><path d="M18-70L76-12M76-70L18-12" fill="none" stroke="currentColor" stroke-width="7"/></symbol><symbol id="cm" viewBox="0 -84 94 100" preserveAspectRatio="none"><path d="M22-62H72M22-45L47-22L72-45" fill="none" stroke="currentColor" stroke-width="7"/></symbol><symbol id="ct" viewBox="0 -84 94 100" preserveAspectRatio="none"><path d="M20-70L70-15M70-70L20-15M12-62l16-16M66-78l16 16" fill="none" stroke="currentColor" stroke-width="7"/></symbol></defs></svg>
<div class="a" style="left:0px;top:0px;width:868px;height:11px;background:#e4e4e4;overflow:hidden;border-bottom:1px solid #c8c8c8"></div>
<div class="a" style="left:475px;top:0px;width:393px;height:10px;background:#dedede"></div>
<div class="a" style="left:12px;top:-6.5px;font:normal 14px/17px 'Liberation Sans',sans-serif;color:#333;;"><svg class="h"><use href="#g0" width="100%" height="100%"/></svg></div>
<div class="a" style="left:58px;top:-6.5px;font:normal 14px/17px 'Liberation Sans',sans-serif;color:#333;;"><svg class="h"><use href="#g1" width="100%" height="100%"/></svg></div>
<div class="a" style="left:103px;top:-6.5px;font:normal 14px/17px 'Liberation Sans',sans-serif;color:#333;;"><svg class="h"><use href="#g2" width="100%" height="100%"/></svg></div>
<div class="a" style="left:147px;top:-6.5px;font:normal 14px/17px 'Liberation Sans',sans-serif;color:#333;;"><svg class="h"><use href="#g3" width="100%" height="100%"/></svg></div>
<div class="a" style="left:193px;top:-6.5px;font:normal 14px/17px 'Liberation Sans',sans-serif;color:#333;;">[<svg class="h"><use href="#g4" width="100%" height="100%"/></svg></div>
<div class="a" style="left:237px;top:-6.5px;font:normal 14px/17px 'Liberation Sans',sans-serif;color:#333;;">[<svg class="h"><use href="#g4" width="100%" height="100%"/></svg></div>
<div class="a" style="left:282px;top:-6.5px;font:normal 14px/17px 'Liberation Sans',sans-serif;color:#333;;"><svg class="h"><use href="#g5" width="100%" height="100%"/></svg></div>
<div class="a" style="left:327px;top:-6.5px;font:normal 14px/17px 'Liberation Sans',sans-serif;color:#333;;">[<svg class="h"><use href="#g6" width="100%" height="100%"/></svg></div>
<div class="a" style="left:371px;top:-6.5px;font:normal 14px/17px 'Liberation Sans',sans-serif;color:#333;;"><svg class="h"><use href="#g7" width="100%" height="100%"/></svg></div>
<div class="a" style="left:416px;top:-6.5px;font:normal 14px/17px 'Liberation Sans',sans-serif;color:#333;;"><svg class="h"><use href="#g7" width="100%" height="100%"/></svg></div>
<div class="a" style="left:436px;top:-6.5px;font:normal 14px/17px 'Liberation Sans',sans-serif;color:#333;;"><svg class="h"><use href="#g8" width="100%" height="100%"/></svg></div>
<div class="a" style="left:507px;top:-6.5px;font:normal 14px/17px 'Liberation Sans',sans-serif;color:#333;;"><svg class="h"><use href="#g9" width="100%" height="100%"/></svg></div>
<div class="a" style="left:552px;top:-6.5px;font:normal 14px/17px 'Liberation Sans',sans-serif;color:#333;;"><svg class="h"><use href="#g10" width="100%" height="100%"/></svg></div>
<div class="a" style="left:597px;top:-6.5px;font:normal 14px/17px 'Liberation Sans',sans-serif;color:#333;;">CH</div>
<div class="a" style="left:641px;top:-6.5px;font:normal 14px/17px 'Liberation Sans',sans-serif;color:#333;;"><svg class="h"><use href="#g11" width="100%" height="100%"/></svg></div>
<div class="a" style="left:687px;top:-6.5px;font:normal 14px/17px 'Liberation Sans',sans-serif;color:#333;;">Eu</div>
<div class="a" style="left:733px;top:-6.5px;font:normal 14px/17px 'Liberation Sans',sans-serif;color:#333;;"><svg class="h"><use href="#g10" width="100%" height="100%"/></svg></div>
<div class="a" style="left:777px;top:-6.5px;font:normal 14px/17px 'Liberation Sans',sans-serif;color:#333;;"><svg class="h"><use href="#g12" width="100%" height="100%"/></svg></div>
<div class="a" style="left:822px;top:-6.5px;font:normal 14px/17px 'Liberation Sans',sans-serif;color:#333;;"><svg class="h"><use href="#g2" width="100%" height="100%"/></svg></div>
<div class="a" style="left:31px;top:-4px;width:16px;height:13px;background:linear-gradient(90deg,#e8a040,#60a8e0,#70c070);border-radius:50%"></div>
<div class="a" style="left:78px;top:-4px;width:13px;height:13px;background:#f0a070;border-radius:2px"></div>
<div class="a" style="left:121px;top:-4px;width:16px;height:13px;background:#3a62d8;border-radius:1px"></div>
<div class="a" style="left:166px;top:-4px;width:16px;height:13px;background:#a8b8e8;border-radius:1px"></div>
<div class="a" style="left:212px;top:-4px;width:16px;height:13px;background:#a8b8e8;border-radius:1px"></div>
<div class="a" style="left:259px;top:-4px;width:12px;height:13px;background:#8fd0a0;border-radius:50%"></div>
<div class="a" style="left:301px;top:-4px;width:15px;height:13px;background:#8ccf9a;border-radius:4px"></div>
<div class="a" style="left:346px;top:-4px;width:15px;height:13px;background:#5cc870;border-radius:2px"></div>
<div class="a" style="left:390px;top:-4px;width:16px;height:13px;background:#8ccf9a;border-radius:4px"></div>
<div class="a" style="left:483px;top:-4px;width:13px;height:13px;background:#8fd0a0;border-radius:50%"></div>
<div class="a" style="left:528px;top:-4px;width:13px;height:13px;background:#8fcf8f;border-radius:40%"></div>
<div class="a" style="left:572px;top:-4px;width:14px;height:13px;background:#c8c8c8;border-radius:50%"></div>
<div class="a" style="left:615px;top:-4px;width:16px;height:13px;background:#8ccf9a;border-radius:4px"></div>
<div class="a" style="left:661px;top:-4px;width:16px;height:13px;background:#8ccf9a;border-radius:4px"></div>
<div class="a" style="left:706px;top:-4px;width:16px;height:13px;background:#8ccf9a;border-radius:4px"></div>
<div class="a" style="left:750px;top:-4px;width:18px;height:13px;background:#9090c8;border-radius:50%"></div>
<div class="a" style="left:796px;top:-4px;width:15px;height:13px;background:#90a8f0;border-radius:2px"></div>
<div class="a" style="left:840px;top:-4px;width:18px;height:13px;background:#9090c8;border-radius:50%"></div>
<div class="a" style="left:24px;top:0px;width:1px;height:10px;background:#8a8a8a"></div>
<div class="a" style="left:70px;top:0px;width:1px;height:10px;background:#8a8a8a"></div>
<div class="a" style="left:114px;top:0px;width:1px;height:10px;background:#8a8a8a"></div>
<div class="a" style="left:160px;top:0px;width:1px;height:10px;background:#8a8a8a"></div>
<div class="a" style="left:205px;top:0px;width:1px;height:10px;background:#8a8a8a"></div>
<div class="a" style="left:250px;top:0px;width:1px;height:10px;background:#8a8a8a"></div>
<div class="a" style="left:295px;top:0px;width:1px;height:10px;background:#8a8a8a"></div>
<div class="a" style="left:340px;top:0px;width:1px;height:10px;background:#8a8a8a"></div>
<div class="a" style="left:385px;top:0px;width:1px;height:10px;background:#8a8a8a"></div>
<div class="a" style="left:430px;top:0px;width:1px;height:10px;background:#8a8a8a"></div>
<div class="a" style="left:475px;top:0px;width:1px;height:10px;background:#8a8a8a"></div>
<div class="a" style="left:521px;top:0px;width:1px;height:10px;background:#8a8a8a"></div>
<div class="a" style="left:566px;top:0px;width:1px;height:10px;background:#8a8a8a"></div>
<div class="a" style="left:611px;top:0px;width:1px;height:10px;background:#8a8a8a"></div>
<div class="a" style="left:656px;top:0px;width:1px;height:10px;background:#8a8a8a"></div>
<div class="a" style="left:701px;top:0px;width:1px;height:10px;background:#8a8a8a"></div>
<div class="a" style="left:746px;top:0px;width:1px;height:10px;background:#8a8a8a"></div>
<div class="a" style="left:791px;top:0px;width:1px;height:10px;background:#8a8a8a"></div>
<div class="a" style="left:836px;top:0px;width:1px;height:10px;background:#8a8a8a"></div>
<div class="a" style="left:454px;top:-5.0px;font:normal 12px/14px 'Liberation Sans',sans-serif;color:#222;;"><svg class="h"><use href="#cx" width="100%" height="100%"/></svg></div>
<div class="a" style="left:857px;top:0px;width:10px;height:971px;background:linear-gradient(90deg,#dcdcdc,#e9e9e9)"></div>
<div class="a" style="left:866px;top:0px;width:1px;height:971px;background:#8a8a8a"></div>
<div class="a" style="left:857px;top:23px;width:9px;height:1px;background:#c8c8c8"></div>
<div class="a" style="left:857px;top:58px;width:9px;height:1px;background:#c8c8c8"></div>
<div class="a" style="left:857px;top:62px;width:9px;height:1px;background:#c8c8c8"></div>
<div class="a" style="left:857px;top:80px;width:9px;height:1px;background:#c8c8c8"></div>
<div class="a" style="left:857px;top:75px;width:9px;height:6px;background:#d4d4d4"></div>
<div class="a" style="left:858px;top:35.0px;font:normal 13px/16px 'Liberation Sans',sans-serif;color:#777;font-style:italic;">A</div>
<div class="a" style="left:857px;top:96.0px;font:normal 13px/16px 'Liberation Sans',sans-serif;color:#444;;"><svg class="h"><use href="#g13" width="100%" height="100%"/></svg>_</div>
<div class="a" style="left:858px;top:143.5px;font:normal 11px/13px 'Liberation Sans',sans-serif;color:#555;;">/</div>
<div class="a" style="left:857px;top:186.0px;font:normal 10px/12px 'Liberation Sans',sans-serif;color:#777;;"><svg class="h"><use href="#cd" width="100%" height="100%"/></svg></div>
<div class="a" style="left:0px;top:10px;width:857px;height:783px;background:#383838;border-radius:0 8px 8px 0;overflow:hidden;box-shadow:0 2px 8px rgba(0,0,0,.35)"></div>
<div class="a" style="left:0px;top:10px;width:857px;height:31px;background:#f3f3f3;border-radius:0 8px 0 0"></div>
<div class="a kd3206225f6" style="left:0px;top:18.0px;font:normal 13px/16px 'Liberation Sans',sans-serif;color:#8a8a8a;;transform:scaleX(0.9593);transform-origin:0 50%;"><svg class="h"><use href="#g14" width="100%" height="100%"/></svg> - <svg class="h"><use href="#g15" width="100%" height="100%"/></svg><svg class="h"><use href="#g16" width="100%" height="100%"/></svg> - Microsoft Edge</div>
<div class="a" style="left:737px;top:26px;width:10px;height:1px;background:#666"></div>
<div class="a" style="left:783px;top:21px;width:10px;height:10px;border:1px solid #666;border-radius:2px"></div>
<svg style="left:829px;top:21px" width="11" height="11"><path d="M0.5 0.5L10.5 10.5M10.5 0.5L0.5 10.5" stroke="#666" stroke-width="1"/></svg>
<div class="a" style="left:0px;top:41px;width:857px;height:32px;background:#fff;border-top:1px solid #c4c4c4;border-bottom:1px solid #c4c4c4"></div>
<div class="a k7db3930f82" style="left:0px;top:48.5px;font:normal 14px/17px 'Liberation Sans',sans-serif;color:#6a6a6a;;transform:scaleX(0.9902);transform-origin:0 50%;"><span style="color:#222">co.kr</span>/player/?ul_code=206467&amp;lec_seq=1414&amp;idx_no=7</div>
<svg style="left:798px;top:48px" width="18" height="16"><path d="M1 15L5.5 3L10 15M2.8 10.5h5.5" stroke="#555" fill="none" stroke-width="1.1"/><path d="M10 5q3 1 3.5 4M11.5 1.5q4.5 2 5 7" stroke="#555" fill="none" stroke-width="1"/></svg>
<svg style="left:830px;top:49px" width="18" height="18"><rect x="1.5" y="1.5" width="12" height="11" rx="2" fill="none" stroke="#555" stroke-width="1.1"/><path d="M6 5L9.5 7L6 9Z" fill="#555"/><path d="M14 10.5l.8 1.7l1.7.8l-1.7.8l-.8 1.7l-.8-1.7l-1.7-.8l1.7-.8z" fill="#555"/><path d="M9.5 16l3-3" stroke="#555"/></svg>
<div class="a" style="left:0px;top:73px;width:857px;height:57px;background:#333"></div>
<div class="a k8a79cd1a6a" style="left:10px;top:92.0px;font:normal 20px/24px 'Liberation Sans',sans-serif;color:#fff;letter-spacing:1px;transform:scaleX(1.0861);transform-origin:0 50%;"><svg class="h"><use href="#g17" width="100%" height="100%"/></svg> <svg class="h"><use href="#g18" width="100%" height="100%"/></svg><svg class="h"><use href="#g19" width="100%" height="100%"/></svg> <svg class="h"><use href="#g20" width="100%" height="100%"/></svg><svg class="h"><use href="#g14" width="100%" height="100%"/></svg></div>
<div class="a k3851988830" style="left:173px;top:95.0px;font:normal 13px/16px 'Liberation Sans',sans-serif;color:#aaa;;transform:scaleX(0.9840);transform-origin:0 50%;"><svg class="h"><use href="#g21" width="100%" height="100%"/></svg><svg class="h"><use href="#g22" width="100%" height="100%"/></svg></div>
<div class="a" style="left:202px;top:97px;width:1px;height:12px;background:#888"></div>
<div class="a kca21407f2d" style="left:216px;top:95.0px;font:bold 13px/16px 'Liberation Sans',sans-serif;color:#fff;;transform:scaleX(0.9982);transform-origin:0 50%;"><svg class="h hb"><use href="#g23" width="100%" height="100%"/></svg><svg class="h hb"><use href="#g24" width="100%" height="100%"/></svg><svg class="h hb"><use href="#g25" width="100%" height="100%"/></svg></div>
<div class="a k5d737bf98f" style="left:272px;top:95.0px;font:normal 13px/16px 'Liberation Sans',sans-serif;color:#999;;transform:scaleX(1.0053);transform-origin:0 50%;"><svg class="h"><use href="#g21" width="100%" height="100%"/></svg><svg class="h"><use href="#g26" width="100%" height="100%"/></svg><svg class="h"><use href="#g27" width="100%" height="100%"/></svg><svg class="h"><use href="#g28" width="100%" height="100%"/></svg></div>
<div class="a" style="left:327px;top:97px;width:1px;height:12px;background:#888"></div>
<div class="a k76c47f6ece" style="left:339px;top:96.0px;font:normal 12px/14px 'Liberation Sans',sans-serif;color:#fff;;transform:scaleX(1.0026);transform-origin:0 50%;"><svg class="h"><use href="#g29" width="100%" height="100%"/></svg> 00:57:25</div>
<div class="a kdc5079a3d4" style="left:639px;top:101.0px;font:normal 13px/16px 'Liberation Sans',sans-serif;color:#aaa;;transform:scaleX(0.9754);transform-origin:0 50%;"><svg class="h"><use href="#g23" width="100%" height="100%"/></svg><svg class="h"><use href="#g30" width="100%" height="100%"/></svg><svg class="h"><use href="#g31" width="100%" height="100%"/></svg><svg class="h"><use href="#g32" width="100%" height="100%"/></svg><svg class="h"><use href="#g33" width="100%" height="100%"/></svg></div>
<div class="a" style="left:704px;top:103px;width:1px;height:12px;background:#888"></div>
<div class="a k73611c01c4" style="left:718px;top:101.0px;font:normal 13px/16px 'Liberation Sans',sans-serif;color:#fff;;transform:scaleX(0.9525);transform-origin:0 50%;">~2024-12-24 23:59</div>
<div class="a" style="left:0px;top:130px;width:852px;height:19px;background:#000"></div>
<div class="a" style="left:0px;top:711px;width:852px;height:14px;background:#000"></div>
<div class="a" style="left:0px;top:725px;width:852px;height:5px;background:#3c3c3c"></div>
<div class="a" style="left:0px;top:725px;width:743px;height:5px;background:#5aaedc"></div>
<div class="a" style="left:0px;top:730px;width:852px;height:4px;background:#2a2a2a"></div>
<div class="a" style="left:0px;top:749px;width:852px;height:1px;background:#444"></div>
<div class="a k961628148a" style="left:246px;top:760.0px;font:normal 13px/16px 'Liberation Sans',sans-serif;color:#a5a5a5;;transform:scaleX(0.9629);transform-origin:0 50%;">Copyright © addto. All Right Reserved</div>
<div class="a" style="left:0px;top:793px;width:866px;height:178px;background:linear-gradient(180deg,#cfcfcf 0px,#e6e6e6 20px,#f8f8f8 45px,#fff 70px)"></div>
<div class="a" style="left:146px;top:820px;width:720px;height:1px;background:#d8d8d8"></div>
<div class="a" style="left:146px;top:866px;width:720px;height:1px;background:#d8d8d8"></div>
<div class="a" style="left:146px;top:912px;width:720px;height:1px;background:#d8d8d8"></div>
<div class="a" style="left:146px;top:958px;width:720px;height:1px;background:#d8d8d8"></div>
<div class="a ke10c1f3af2" style="left:163px;top:789.0px;font:normal 15px/18px 'Liberation Sans',sans-serif;color:#666;;transform:scaleX(0.8804);transform-origin:0 50%;"><svg class="h"><use href="#g10" width="100%" height="100%"/></svg><svg class="h"><use href="#g34" width="100%" height="100%"/></svg>1<svg class="h"><use href="#g35" width="100%" height="100%"/></svg></div>
<div class="a ke973958841" style="left:247px;top:789.0px;font:normal 15px/18px 'Liberation Sans',sans-serif;color:#666;;transform:scaleX(0.8613);transform-origin:0 50%;">12<svg class="h"><use href="#g21" width="100%" height="100%"/></svg></div>
<div class="a k7bf710d301" style="left:311px;top:789.0px;font:normal 15px/18px 'Liberation Sans',sans-serif;color:#666;;transform:scaleX(0.8852);transform-origin:0 50%;">[<svg class="h"><use href="#g36" width="100%" height="100%"/></svg><svg class="h"><use href="#g37" width="100%" height="100%"/></svg><svg class="h"><use href="#g38" width="100%" height="100%"/></svg>] <svg class="h"><use href="#g13" width="100%" height="100%"/></svg><svg class="h"><use href="#g39" width="100%" height="100%"/></svg><svg class="h"><use href="#g40" width="100%" height="100%"/></svg><svg class="h"><use href="#g41" width="100%" height="100%"/></svg> <svg class="h"><use href="#g42" width="100%" height="100%"/></svg><svg class="h"><use href="#g43" width="100%" height="100%"/></svg><svg class="h"><use href="#g44" width="100%" height="100%"/></svg><svg class="h"><use href="#g13" width="100%" height="100%"/></svg>_3</div>
<div class="a k4f0b07318f" style="left:668px;top:789.0px;font:normal 15px/18px 'Liberation Sans',sans-serif;color:#666;;transform:scaleX(0.9275);transform-origin:0 50%;">60<svg class="h"><use href="#g45" width="100%" height="100%"/></svg></div>
<div class="a k10c8c81257" style="left:752px;top:789.0px;font:normal 15px/18px 'Liberation Sans',sans-serif;color:#666;;transform:scaleX(0.9614);transform-origin:0 50%;">0<svg class="h"><use href="#g45" width="100%" height="100%"/></svg></div>
<div class="a k3b4611a316" style="left:163px;top:835.0px;font:normal 15px/18px 'Liberation Sans',sans-serif;color:#666;;transform:scaleX(0.8804);transform-origin:0 50%;"><svg class="h"><use href="#g10" width="100%" height="100%"/></svg><svg class="h"><use href="#g34" width="100%" height="100%"/></svg>1<svg class="h"><use href="#g35" width="100%" height="100%"/></svg></div>
<div class="a ke81f0455b3" style="left:247px;top:835.0px;font:normal 15px/18px 'Liberation Sans',sans-serif;color:#666;;transform:scaleX(0.8613);transform-origin:0 50%;">13<svg class="h"><use href="#g21" width="100%" height="100%"/></svg></div>
<div class="a k3c6d652753" style="left:311px;top:835.0px;font:normal 15px/18px 'Liberation Sans',sans-serif;color:#666;;transform:scaleX(0.8852);transform-origin:0 50%;">[<svg class="h"><use href="#g36" width="100%" height="100%"/></svg><svg class="h"><use href="#g37" width="100%" height="100%"/></svg><svg class="h"><use href="#g38" width="100%" height="100%"/></svg>] <svg class="h"><use href="#g13" width="100%" height="100%"/></svg><svg class="h"><use href="#g39" width="100%" height="100%"/></svg><svg class="h"><use href="#g40" width="100%" height="100%"/></svg><svg class="h"><use href="#g41" width="100%" height="100%"/></svg> <svg class="h"><use href="#g42" width="100%" height="100%"/></svg><svg class="h"><use href="#g43" width="100%" height="100%"/></svg><svg class="h"><use href="#g44" width="100%" height="100%"/></svg><svg class="h"><use href="#g13" width="100%" height="100%"/></svg>_4</div>
<div class="a k607d148af1" style="left:668px;top:835.0px;font:normal 15px/18px 'Liberation Sans',sans-serif;color:#666;;transform:scaleX(0.9275);transform-origin:0 50%;">59<svg class="h"><use href="#g45" width="100%" height="100%"/></svg></div>
<div class="a k8e95c59123" style="left:752px;top:835.0px;font:normal 15px/18px 'Liberation Sans',sans-serif;color:#666;;transform:scaleX(0.9614);transform-origin:0 50%;">0<svg class="h"><use href="#g45" width="100%" height="100%"/></svg></div>
<div class="a kcc01de40a3" style="left:163px;top:881.0px;font:normal 15px/18px 'Liberation Sans',sans-serif;color:#666;;transform:scaleX(0.8804);transform-origin:0 50%;"><svg class="h"><use href="#g10" width="100%" height="100%"/></svg><svg class="h"><use href="#g34" width="100%" height="100%"/></svg>1<svg class="h"><use href="#g35" width="100%" height="100%"/></svg></div>
<div class="a k04bf4e3370" style="left:247px;top:881.0px;font:normal 15px/18px 'Liberation Sans',sans-serif;color:#666;;transform:scaleX(0.8613);transform-origin:0 50%;">14<svg class="h"><use href="#g21" width="100%" height="100%"/></svg></div>
<div class="a ke8477b37a1" style="left:311px;top:881.0px;font:normal 15px/18px 'Liberation Sans',sans-serif;color:#666;;transform:scaleX(0.8852);transform-origin:0 50%;">[<svg class="h"><use href="#g36" width="100%" height="100%"/></svg><svg class="h"><use href="#g37" width="100%" height="100%"/></svg><svg class="h"><use href="#g38" width="100%" height="100%"/></svg>] <svg class="h"><use href="#g13" width="100%" height="100%"/></svg><svg class="h"><use href="#g39" width="100%" height="100%"/></svg><svg class="h"><use href="#g40" width="100%" height="100%"/></svg><svg class="h"><use href="#g41" width="100%" height="100%"/></svg> <svg class="h"><use href="#g42" width="100%" height="100%"/></svg><svg class="h"><use href="#g43" width="100%" height="100%"/></svg><svg class="h"><use href="#g44" width="100%" height="100%"/></svg><svg class="h"><use href="#g13" width="100%" height="100%"/></svg>_5</div>
<div class="a kfb5b8e2e20" style="left:668px;top:881.0px;font:normal 15px/18px 'Liberation Sans',sans-serif;color:#666;;transform:scaleX(0.9275);transform-origin:0 50%;">70<svg class="h"><use href="#g45" width="100%" height="100%"/></svg></div>
<div class="a k6d96dd1cc8" style="left:752px;top:881.0px;font:normal 15px/18px 'Liberation Sans',sans-serif;color:#666;;transform:scaleX(0.9614);transform-origin:0 50%;">0<svg class="h"><use href="#g45" width="100%" height="100%"/></svg></div>
<div class="a k15bb006040" style="left:163px;top:927.0px;font:normal 15px/18px 'Liberation Sans',sans-serif;color:#666;;transform:scaleX(0.8804);transform-origin:0 50%;"><svg class="h"><use href="#g10" width="100%" height="100%"/></svg><svg class="h"><use href="#g34" width="100%" height="100%"/></svg>1<svg class="h"><use href="#g35" width="100%" height="100%"/></svg></div>
<div class="a k73925991cc" style="left:247px;top:927.0px;font:normal 15px/18px 'Liberation Sans',sans-serif;color:#666;;transform:scaleX(0.8613);transform-origin:0 50%;">15<svg class="h"><use href="#g21" width="100%" height="100%"/></svg></div>
<div class="a k49048e52e1" style="left:311px;top:927.0px;font:normal 15px/18px 'Liberation Sans',sans-serif;color:#666;;transform:scaleX(0.8777);transform-origin:0 50%;">[<svg class="h"><use href="#g36" width="100%" height="100%"/></svg><svg class="h"><use href="#g37" width="100%" height="100%"/></svg><svg class="h"><use href="#g38" width="100%" height="100%"/></svg>] <svg class="h"><use href="#g46" width="100%" height="100%"/></svg><svg class="h"><use href="#g47" width="100%" height="100%"/></svg><svg class="h"><use href="#g48" width="100%" height="100%"/></svg><svg class="h"><use href="#g49" width="100%" height="100%"/></svg> <svg class="h"><use href="#g13" width="100%" height="100%"/></svg><svg class="h"><use href="#g39" width="100%" height="100%"/></svg> <svg class="h"><use href="#g40" width="100%" height="100%"/></svg><svg class="h"><use href="#g41" width="100%" height="100%"/></svg><svg class="h"><use href="#g50" width="100%" height="100%"/></svg><svg class="h"><use href="#g23" width="100%" height="100%"/></svg>_1</div>
<div class="a kee5d6d32d2" style="left:668px;top:927.0px;font:normal 15px/18px 'Liberation Sans',sans-serif;color:#666;;transform:scaleX(0.9275);transform-origin:0 50%;">52<svg class="h"><use href="#g45" width="100%" height="100%"/></svg></div>
<div class="a kc7da50b79b" style="left:752px;top:927.0px;font:normal 15px/18px 'Liberation Sans',sans-serif;color:#666;;transform:scaleX(0.9614);transform-origin:0 50%;">0<svg class="h"><use href="#g45" width="100%" height="100%"/></svg></div>
<div class="a" style="left:0px;top:149px;width:852px;height:562px;background:#eee;overflow:hidden"></div>
<div class="a" style="left:0px;top:149px;width:448px;height:41px;background:#e4e6e6"></div>
<div class="a k0d9ea19215" style="left:0px;top:157.0px;font:normal 8px/10px 'Liberation Sans',sans-serif;color:#b5b8b8;;transform:scaleX(0.8145);transform-origin:0 50%;">7) : <svg class="h"><use href="#g51" width="100%" height="100%"/></svg><svg class="h"><use href="#g23" width="100%" height="100%"/></svg><svg class="h"><use href="#g19" width="100%" height="100%"/></svg><svg class="h"><use href="#g52" width="100%" height="100%"/></svg><svg class="h"><use href="#g23" width="100%" height="100%"/></svg><svg class="h"><use href="#g38" width="100%" height="100%"/></svg>- G:₩<svg class="h"><use href="#g53" width="100%" height="100%"/></svg> <svg class="h"><use href="#g54" width="100%" height="100%"/></svg><svg class="h"><use href="#g55" width="100%" height="100%"/></svg><svg class="h"><use href="#g23" width="100%" height="100%"/></svg><svg class="h"><use href="#g56" width="100%" height="100%"/></svg>₩<svg class="h"><use href="#g23" width="100%" height="100%"/></svg><svg class="h"><use href="#g24" width="100%" height="100%"/></svg><svg class="h"><use href="#g25" width="100%" height="100%"/></svg><svg class="h"><use href="#g10" width="100%" height="100%"/></svg><svg class="h"><use href="#g57" width="100%" height="100%"/></svg><svg class="h"><use href="#g19" width="100%" height="100%"/></svg>₩02.<svg class="h"><use href="#g58" width="100%" height="100%"/></svg><svg class="h"><use href="#g59" width="100%" height="100%"/></svg>₩2024_<svg class="h"><use href="#g10" width="100%" height="100%"/></svg><svg class="h"><use href="#g34" width="100%" height="100%"/></svg><svg class="h"><use href="#g48" width="100%" height="100%"/></svg><svg class="h"><use href="#g49" width="100%" height="100%"/></svg>₩00.<svg class="h"><use href="#g60" width="100%" height="100%"/></svg><svg class="h"><use href="#g61" width="100%" height="100%"/></svg><svg class="h"><use href="#g62" width="100%" height="100%"/></svg><svg class="h"><use href="#g63" width="100%" height="100%"/></svg><svg class="h"><use href="#g64" width="100%" height="100%"/></svg>₩<svg class="h"><use href="#g61" width="100%" height="100%"/></svg><svg class="h"><use href="#g65" width="100%" height="100%"/></svg>₩06_3.<svg class="h"><use href="#g66" width="100%" height="100%"/></svg><svg class="h"><use href="#g67" width="100%" height="100%"/></svg><svg class="h"><use href="#g67" width="100%" height="100%"/></svg><svg class="h"><use href="#g66" width="100%" height="100%"/></svg>...</div>
<div class="a" style="left:339px;top:156px;width:28px;height:11px;background:#c4c6c6;border-radius:1px"></div>
<div class="a ke1ccdb22de" style="left:343px;top:157.0px;font:normal 7px/8px 'Liberation Sans',sans-serif;color:#eee;;transform:scaleX(1.1646);transform-origin:0 50%;"><svg class="h"><use href="#g68" width="100%" height="100%"/></svg><svg class="h"><use href="#g69" width="100%" height="100%"/></svg><svg class="h"><use href="#g16" width="100%" height="100%"/></svg></div>
<div class="a" style="left:382px;top:161px;width:7px;height:1px;background:#c0c0c0"></div>
<div class="a" style="left:405px;top:157px;width:8px;height:8px;border:1px solid #c8c8c8"></div>
<svg style="left:430px;top:157px" width="9" height="9"><path d="M0 0L9 9M9 0L0 9" stroke="#c8c8c8"/></svg>
<div class="a k48ed7e80aa" style="left:1px;top:177.0px;font:bold 8.5px/10px 'Liberation Sans',sans-serif;color:#444;;transform:scaleX(0.8872);transform-origin:0 50%;"><svg class="h hb"><use href="#g52" width="100%" height="100%"/></svg><svg class="h hb"><use href="#g23" width="100%" height="100%"/></svg><svg class="h hb"><use href="#g38" width="100%" height="100%"/></svg> <svg class="h hb"><use href="#g70" width="100%" height="100%"/></svg><svg class="h hb"><use href="#g71" width="100%" height="100%"/></svg></div>
<div class="a k73468003be" style="left:47px;top:177.0px;font:bold 8.5px/10px 'Liberation Sans',sans-serif;color:#444;;transform:scaleX(0.8725);transform-origin:0 50%;"><svg class="h hb"><use href="#g70" width="100%" height="100%"/></svg><svg class="h hb"><use href="#g72" width="100%" height="100%"/></svg><svg class="h hb"><use href="#g73" width="100%" height="100%"/></svg></div>
<div class="a kb54c736250" style="left:78px;top:177.0px;font:bold 8.5px/10px 'Liberation Sans',sans-serif;color:#a33;;transform:scaleX(0.8872);transform-origin:0 50%;"><svg class="h hb"><use href="#g74" width="100%" height="100%"/></svg><svg class="h hb"><use href="#g75" width="100%" height="100%"/></svg> <svg class="h hb"><use href="#g76" width="100%" height="100%"/></svg><svg class="h hb"><use href="#g77" width="100%" height="100%"/></svg><svg class="h hb"><use href="#g16" width="100%" height="100%"/></svg></div>
<div class="a" style="left:78px;top:187px;width:36px;height:2px;background:#a33"></div>
<div class="a k8fc5933a47" style="left:124px;top:177.0px;font:bold 8.5px/10px 'Liberation Sans',sans-serif;color:#c55;;transform:scaleX(0.8507);transform-origin:0 50%;"><svg class="h hb"><use href="#g61" width="100%" height="100%"/></svg><svg class="h hb"><use href="#g78" width="100%" height="100%"/></svg></div>
<div class="a kef665f15d8" style="left:147px;top:177.0px;font:bold 8.5px/10px 'Liberation Sans',sans-serif;color:#c55;;transform:scaleX(0.8507);transform-origin:0 50%;"><svg class="h hb"><use href="#g79" width="100%" height="100%"/></svg><svg class="h hb"><use href="#g75" width="100%" height="100%"/></svg></div>
<svg style="left:178px;top:176px" width="9" height="10"><circle cx="5.5" cy="3.5" r="3" stroke="#444" fill="none"/><path d="M3.5 6L0.5 9" stroke="#444"/></svg>
<div class="a kd9cbc1edf3" style="left:194px;top:176.0px;font:bold 8.5px/10px 'Liberation Sans',sans-serif;color:#444;;transform:scaleX(0.8800);transform-origin:0 50%;"><svg class="h hb"><use href="#g80" width="100%" height="100%"/></svg><svg class="h hb"><use href="#g81" width="100%" height="100%"/></svg> <svg class="h hb"><use href="#g82" width="100%" height="100%"/></svg><svg class="h hb"><use href="#g83" width="100%" height="100%"/></svg><svg class="h hb"><use href="#g84" width="100%" height="100%"/></svg> <svg class="h hb"><use href="#g85" width="100%" height="100%"/></svg><svg class="h hb"><use href="#g44" width="100%" height="100%"/></svg><svg class="h hb"><use href="#g27" width="100%" height="100%"/></svg><svg class="h hb"><use href="#g86" width="100%" height="100%"/></svg><svg class="h hb"><use href="#g87" width="100%" height="100%"/></svg>?</div>
<svg style="left:428px;top:175px" width="12" height="12"><circle cx="6" cy="4" r="3" stroke="#555" fill="none"/><path d="M1 11q5-7 10 0" stroke="#555" fill="none"/></svg>
<div class="a" style="left:0px;top:190px;width:443px;height:53px;background:#fbfbfb;border-radius:0 6px 6px 0;box-shadow:0 1px 2px rgba(0,0,0,.15)"></div>
<div class="a" style="left:0px;top:197px;width:136px;height:9px;background:linear-gradient(#fff,#eee);border:1px solid #ddd"></div>
<div class="a" style="left:143px;top:197px;width:15px;height:10px;border:1px solid #666;border-bottom:none;background:#fff"></div>
<div class="a" style="left:146px;top:201px;width:9px;height:6px;background:#b8cce4"></div>
<svg style="left:168px;top:193px" width="20" height="14"><rect x="2" y="8" width="3" height="6" fill="#2a6ac0"/><rect x="6" y="2" width="4" height="12" fill="#fff" stroke="#555" stroke-width=".8"/><rect x="11" y="5" width="4" height="9" fill="#bbb" stroke="#777" stroke-width=".6"/></svg>
<div class="a" style="left:195px;top:195px;width:1px;height:12px;background:#ccc"></div>
<svg style="left:201px;top:195px" width="10" height="9"><rect x="0.5" y="0.5" width="7" height="5" fill="#6a8ac0" stroke="#333" stroke-width=".6"/><path d="M0 7h10" stroke="#333"/></svg>
<div class="a" style="left:212px;top:195.5px;font:bold 7.5px/9px 'Liberation Sans',sans-serif;color:#333;;"><svg class="h hb"><use href="#g68" width="100%" height="100%"/></svg><svg class="h hb"><use href="#g88" width="100%" height="100%"/></svg></div>
<div class="a" style="left:255px;top:195px;width:1px;height:12px;background:#ccc"></div>
<svg style="left:266px;top:194px" width="160" height="16"><rect x="1" y="2" width="7" height="11" fill="#fff" stroke="#444" stroke-width=".8"/><rect x="9" y="4" width="5" height="9" fill="#fff" stroke="#444" stroke-width=".8"/><rect x="27" y="0" width="16" height="15" rx="2" fill="#e8e8e8" stroke="#444"/><path d="M31 4h2M31 8h2M35 4h5M35 8h5" stroke="#444" stroke-width=".8"/><path d="M50 2h8M50 6h6M50 10h6" stroke="#444"/><path d="M59 4q3-3 5 0M59 9q3-3 5 0" stroke="#3a8ad8" fill="none"/><rect x="73" y="6" width="4" height="8" fill="#fff" stroke="#bbb"/><rect x="77" y="1" width="4" height="13" fill="#fff" stroke="#bbb"/><rect x="91" y="2" width="8" height="8" fill="#fff" stroke="#bbb"/></svg>
<div class="a" style="left:436px;top:232px;width:6px;height:6px;border-right:1px solid #555;border-bottom:1px solid #555;transform:rotate(45deg)"></div>
<div class="a" style="left:423px;top:243px;width:25px;height:468px;background:#f0f0f0"></div>
<svg style="left:432px;top:245px" width="10" height="10"><path d="M1 1L9 9M9 1L1 9" stroke="#444" stroke-width="1.2"/></svg>
<svg style="left:430px;top:262px" width="14" height="14"><path d="M2 2h4M2 6h3M4 6v6M9 1v12M7 10l2 3l2-3" stroke="#555" fill="none"/></svg>
<div class="a" style="left:423px;top:324px;width:18px;height:9px;background:#f4f4f4;border-bottom:1px solid #9a9a9a;border-right:1px solid #ccc"></div>
<div class="a" style="left:423px;top:333px;width:18px;height:9px;background:#f4f4f4;border-bottom:1px solid #9a9a9a;border-right:1px solid #ccc"></div>
<div class="a" style="left:423px;top:342px;width:18px;height:9px;background:#f4f4f4;border-bottom:1px solid #9a9a9a;border-right:1px solid #ccc"></div>
<div class="a" style="left:423px;top:351px;width:18px;height:9px;background:#f4f4f4;border-bottom:1px solid #9a9a9a;border-right:1px solid #ccc"></div>
<div class="a" style="left:423px;top:360px;width:18px;height:9px;background:#f4f4f4;border-bottom:1px solid #9a9a9a;border-right:1px solid #ccc"></div>
<div class="a" style="left:423px;top:369px;width:18px;height:9px;background:#f4f4f4;border-bottom:1px solid #9a9a9a;border-right:1px solid #ccc"></div>
<div class="a" style="left:423px;top:378px;width:18px;height:9px;background:#f4f4f4;border-bottom:1px solid #9a9a9a;border-right:1px solid #ccc"></div>
<div class="a" style="left:423px;top:387px;width:18px;height:9px;background:#f4f4f4;border-bottom:1px solid #9a9a9a;border-right:1px solid #ccc"></div>
<div class="a" style="left:423px;top:396px;width:18px;height:9px;background:#f4f4f4;border-bottom:1px solid #9a9a9a;border-right:1px solid #ccc"></div>
<div class="a" style="left:423px;top:405px;width:18px;height:9px;background:#f4f4f4;border-bottom:1px solid #9a9a9a;border-right:1px solid #ccc"></div>
<div class="a" style="left:423px;top:414px;width:18px;height:9px;background:#f4f4f4;border-bottom:1px solid #9a9a9a;border-right:1px solid #ccc"></div>
<div class="a" style="left:424px;top:314px;width:10px;height:9px;background:#fff;border:1px solid #ccc"></div>
<svg style="left:425px;top:317px" width="8" height="4"><path d="M1 0.5L4 3L7 0.5" stroke="#666" fill="none"/></svg>
<div class="a" style="left:434px;top:314px;width:7px;height:7px;border:1.5px solid #5a8ac8;border-radius:50%;background:#dde8f8"></div>
<div class="a" style="left:444px;top:243px;width:1px;height:440px;background:#ccc"></div>
<div class="a" style="left:0px;top:206px;width:423px;height:15px;background:linear-gradient(90deg,#e8f0ee,#f1f6f5)"></div>
<div class="a k07711d8426" style="left:0px;top:208.5px;font:bold 7.5px/9px 'Liberation Sans',sans-serif;color:#333;;transform:scaleX(0.8423);transform-origin:0 50%;"><svg class="h hb"><use href="#g66" width="100%" height="100%"/></svg><svg class="h hb"><use href="#g67" width="100%" height="100%"/></svg><svg class="h hb"><use href="#g67" width="100%" height="100%"/></svg><svg class="h hb"><use href="#g66" width="100%" height="100%"/></svg><svg class="h hb"><use href="#g67" width="100%" height="100%"/></svg>(27) [<svg class="h hb"><use href="#g64" width="100%" height="100%"/></svg><svg class="h hb"><use href="#g89" width="100%" height="100%"/></svg>]</div>
<div class="a" style="left:358px;top:213px;width:8px;height:1px;background:#444"></div>
<div class="a" style="left:383px;top:209px;width:8px;height:8px;border:1.4px solid #444;border-radius:1px"></div>
<svg style="left:407px;top:209px" width="9" height="9"><path d="M0.5 0.5L8.5 8.5M8.5 0.5L0.5 8.5" stroke="#333" stroke-width="1.2"/></svg>
<div class="a" style="left:0px;top:221px;width:423px;height:25px;background:#fafafa"></div>
<div class="a kd1618a35ec" style="left:0px;top:221.5px;font:bold 7.5px/9px 'Liberation Sans',sans-serif;color:#333;;transform:scaleX(0.7571);transform-origin:0 50%;"><svg class="h hb"><use href="#g69" width="100%" height="100%"/></svg>(<u>D</u>)</div>
<div class="a k6d586d599a" style="left:21px;top:221.5px;font:bold 7.5px/9px 'Liberation Sans',sans-serif;color:#333;;transform:scaleX(0.9197);transform-origin:0 50%;"><svg class="h hb"><use href="#g46" width="100%" height="100%"/></svg><svg class="h hb"><use href="#g90" width="100%" height="100%"/></svg>(<u>R</u>)</div>
<div class="a kf4cc27b66c" style="left:51px;top:221.5px;font:bold 7.5px/9px 'Liberation Sans',sans-serif;color:#333;;transform:scaleX(0.9526);transform-origin:0 50%;"><svg class="h hb"><use href="#g70" width="100%" height="100%"/></svg><svg class="h hb"><use href="#g71" width="100%" height="100%"/></svg>(<u>T</u>)</div>
<div class="a kbb9982bf1f" style="left:82px;top:221.5px;font:bold 7.5px/9px 'Liberation Sans',sans-serif;color:#333;;transform:scaleX(0.9110);transform-origin:0 50%;"><svg class="h hb"><use href="#g91" width="100%" height="100%"/></svg><svg class="h hb"><use href="#g31" width="100%" height="100%"/></svg> <svg class="h hb"><use href="#g13" width="100%" height="100%"/></svg><svg class="h hb"><use href="#g32" width="100%" height="100%"/></svg>(<u>A</u>)</div>
<div class="a k7dab357acf" style="left:126px;top:221.5px;font:bold 7.5px/9px 'Liberation Sans',sans-serif;color:#333;;transform:scaleX(0.9022);transform-origin:0 50%;"><svg class="h hb"><use href="#g92" width="100%" height="100%"/></svg>(<u>W</u>)</div>
<div class="a k8f6ffc22dd" style="left:151px;top:221.5px;font:bold 7.5px/9px 'Liberation Sans',sans-serif;color:#333;;transform:scaleX(0.9455);transform-origin:0 50%;"><svg class="h hb"><use href="#g70" width="100%" height="100%"/></svg><svg class="h hb"><use href="#g72" width="100%" height="100%"/></svg><svg class="h hb"><use href="#g73" width="100%" height="100%"/></svg>(<u>H</u>)</div>
<svg style="left:0px;top:232px" width="110" height="14"><rect x="1" y="4" width="2" height="5" fill="#3a5ac8"/><rect x="4" y="4" width="2" height="5" fill="#3a5ac8"/><rect x="13" y="4" width="5" height="5" fill="#3a5ac8"/><path d="M23 11h9M23 11V3l8 8" stroke="#c08000" fill="#f0e080"/><path d="M25 9l7-7l2 2l-7 7z" fill="#e8a040"/><path d="M38 4l4 4l5-3M38 8l4 3l5-3" stroke="#3050a0" stroke-width="1.4" fill="none"/><rect x="50" y="5" width="8" height="6" fill="#fff" stroke="#3a6ea0"/><path d="M52 5l5-3l3 3" fill="#e0c040"/><rect x="63" y="6" width="8" height="6" fill="#f0c850" stroke="#a07000" stroke-width=".7"/><rect x="63" y="2" width="2" height="2" fill="#3a9ad8"/><rect x="70" y="1" width="2" height="2" fill="#e03030"/><text x="76" y="10" font-size="8" fill="#ccc">⚒</text><circle cx="93" cy="7" r="5.5" fill="#3a7ad8"/><text x="90.5" y="10" font-family="Liberation Sans" font-size="8" font-weight="bold" fill="#fff">?</text></svg>
<div class="a" style="left:102px;top:233px;width:102px;height:12px;background:#ececec"></div>
<div class="a k9db7b8c29c" style="left:105px;top:234.5px;font:bold 7.5px/9px 'Liberation Sans',sans-serif;color:#333;;transform:scaleX(0.8564);transform-origin:0 50%;">30 <svg class="h hb"><use href="#g90" width="100%" height="100%"/></svg>, 39 <svg class="h hb"><use href="#g93" width="100%" height="100%"/></svg></div>
<div class="a" style="left:202px;top:233px;width:5px;height:13px;background:#c8c8c8"></div>
<div class="a" style="left:0px;top:246px;width:22px;height:465px;background:#f0f0f0"></div>
<div class="a" style="left:0px;top:246px;width:22px;height:11px;background:#c5d3e0"></div>
<div class="a" style="left:8px;top:247px;width:12px;height:10px;background:#f0f0f0;border:1px solid #888"></div>
<svg style="left:10px;top:248px" width="8" height="8"><path d="M1 1L7 7M7 1L1 7" stroke="#000" stroke-width="1.3"/></svg>
<div class="a" style="left:0px;top:258px;width:20px;height:14px;background:#f7f7f7"></div>
<div class="a" style="left:14px;top:258px;width:5px;height:13px;background:#c8c8c8"></div>
<div class="a" style="left:0px;top:273px;width:20px;height:128px;background:#fff;border-right:1px solid #ccc"></div>
<div class="a" style="left:0px;top:406px;width:22px;height:11px;background:#c5d3e0"></div>
<div class="a" style="left:8px;top:406px;width:12px;height:10px;background:#f0f0f0;border:1px solid #888"></div>
<svg style="left:10px;top:407px" width="8" height="8"><path d="M1 1L7 7M7 1L1 7" stroke="#000" stroke-width="1.3"/></svg>
<div class="a" style="left:0px;top:419px;width:17px;height:9px;background:#fff;border:1px solid #ccc"></div>
<div class="a" style="left:0px;top:440px;width:17px;height:232px;background:#fff;border:1px solid #aaa"></div>
<div class="a" style="left:0px;top:448px;width:16px;height:1px;background:#e4e4e4"></div>
<div class="a" style="left:0px;top:456px;width:16px;height:1px;background:#e4e4e4"></div>
<div class="a" style="left:0px;top:464px;width:16px;height:1px;background:#e4e4e4"></div>
<div class="a" style="left:0px;top:472px;width:16px;height:1px;background:#e4e4e4"></div>
<div class="a" style="left:0px;top:480px;width:16px;height:1px;background:#e4e4e4"></div>
<div class="a" style="left:0px;top:488px;width:16px;height:1px;background:#e4e4e4"></div>
<div class="a" style="left:0px;top:496px;width:16px;height:1px;background:#e4e4e4"></div>
<div class="a" style="left:0px;top:504px;width:16px;height:1px;background:#e4e4e4"></div>
<div class="a" style="left:0px;top:512px;width:16px;height:1px;background:#e4e4e4"></div>
<div class="a" style="left:0px;top:520px;width:16px;height:1px;background:#e4e4e4"></div>
<div class="a" style="left:0px;top:528px;width:16px;height:1px;background:#e4e4e4"></div>
<div class="a" style="left:0px;top:536px;width:16px;height:1px;background:#e4e4e4"></div>
<div class="a" style="left:0px;top:544px;width:16px;height:1px;background:#e4e4e4"></div>
<div class="a" style="left:0px;top:552px;width:16px;height:1px;background:#e4e4e4"></div>
<div class="a" style="left:0px;top:560px;width:16px;height:1px;background:#e4e4e4"></div>
<div class="a" style="left:0px;top:568px;width:16px;height:1px;background:#e4e4e4"></div>
<div class="a" style="left:0px;top:576px;width:16px;height:1px;background:#e4e4e4"></div>
<div class="a" style="left:0px;top:584px;width:16px;height:1px;background:#e4e4e4"></div>
<div class="a" style="left:0px;top:592px;width:16px;height:1px;background:#e4e4e4"></div>
<div class="a" style="left:0px;top:600px;width:16px;height:1px;background:#e4e4e4"></div>
<div class="a" style="left:0px;top:608px;width:16px;height:1px;background:#e4e4e4"></div>
<div class="a" style="left:0px;top:616px;width:16px;height:1px;background:#e4e4e4"></div>
<div class="a" style="left:0px;top:624px;width:16px;height:1px;background:#e4e4e4"></div>
<div class="a" style="left:0px;top:632px;width:16px;height:1px;background:#e4e4e4"></div>
<div class="a" style="left:0px;top:640px;width:16px;height:1px;background:#e4e4e4"></div>
<div class="a" style="left:0px;top:648px;width:16px;height:1px;background:#e4e4e4"></div>
<div class="a" style="left:0px;top:656px;width:16px;height:1px;background:#e4e4e4"></div>
<div class="a" style="left:0px;top:664px;width:16px;height:1px;background:#e4e4e4"></div>
<div class="a" style="left:10px;top:452px;width:1px;height:60px;background:#aaa"></div>
<div class="a" style="left:0px;top:597.5px;font:normal 6px/7px 'Liberation Sans',sans-serif;color:#777;;">De</div>
<div class="a" style="left:22px;top:246px;width:401px;height:465px;background:#a9a9a9"></div>
<div class="a" style="left:23px;top:253px;width:400px;height:57px;background:#d6e2ee"></div>
<div class="a" style="left:24px;top:254px;width:399px;height:15px;background:linear-gradient(90deg,#d3e1ef,#e9f1f8)"></div>
<svg style="left:28px;top:256px" width="11" height="11"><path d="M1 5l4-3l5 3v4l-5 2l-4-2z" fill="#999" stroke="#444" stroke-width=".5"/><path d="M5 1l2-1l2 2l-2 2z" fill="#c040c0"/></svg>
<div class="a k6389c4b578" style="left:38px;top:256.5px;font:bold 7.5px/9px 'Liberation Sans',sans-serif;color:#aab4c0;;transform:scaleX(0.8737);transform-origin:0 50%;">06_3.<svg class="h hb"><use href="#g66" width="100%" height="100%"/></svg><svg class="h hb"><use href="#g67" width="100%" height="100%"/></svg><svg class="h hb"><use href="#g67" width="100%" height="100%"/></svg><svg class="h hb"><use href="#g66" width="100%" height="100%"/></svg><svg class="h hb"><use href="#g67" width="100%" height="100%"/></svg>(27) - Form_<svg class="h hb"><use href="#g22" width="100%" height="100%"/></svg><svg class="h hb"><use href="#g85" width="100%" height="100%"/></svg><svg class="h hb"><use href="#g94" width="100%" height="100%"/></svg><svg class="h hb"><use href="#g95" width="100%" height="100%"/></svg> (<svg class="h hb"><use href="#g96" width="100%" height="100%"/></svg><svg class="h hb"><use href="#g54" width="100%" height="100%"/></svg>)</div>
<div class="a" style="left:415px;top:257px;width:8px;height:10px;border:1px solid #aab;border-radius:2px;background:#eef"></div>
<div class="a" style="left:31px;top:270px;width:213px;height:11px;background:#fff;border:1px solid #bbb"></div>
<div class="a k624c964d5a" style="left:33px;top:271.0px;font:bold 7px/8px 'Liberation Sans',sans-serif;color:#222;;transform:scaleX(1.0608);transform-origin:0 50%;">cmb<svg class="h hb"><use href="#g97" width="100%" height="100%"/></svg><svg class="h hb"><use href="#g79" width="100%" height="100%"/></svg><svg class="h hb"><use href="#g98" width="100%" height="100%"/></svg><svg class="h hb"><use href="#g99" width="100%" height="100%"/></svg></div>
<svg style="left:237px;top:273px" width="6" height="4"><path d="M0 0L3 3L6 0" stroke="#555" fill="none"/></svg>
<div class="a" style="left:249px;top:270px;width:174px;height:11px;background:#fff;border:1px solid #bbb"></div>
<div class="a" style="left:252px;top:271.0px;font:bold 7px/8px 'Liberation Sans',sans-serif;color:#222;;">Click</div>
<div class="a" style="left:27px;top:282px;width:396px;height:28px;background:#fff;border-top:1px solid #999;border-left:1px solid #999"></div>
<div class="a kb96f3a6e22" style="left:33px;top:282.0px;font:normal 13.5px/16px 'Liberation Sans',sans-serif;color:#1a1a1a;letter-spacing:-0.5px;transform:scaleX(0.9842);transform-origin:0 50%;"><span style="color:#1c1c7c">Private Sub</span> cmb<svg class="h"><use href="#g97" width="100%" height="100%"/></svg><svg class="h"><use href="#g79" width="100%" height="100%"/></svg><svg class="h"><use href="#g98" width="100%" height="100%"/></svg><svg class="h"><use href="#g99" width="100%" height="100%"/></svg>_Click()</div>
<div class="a ke90fc41bb4" style="left:44px;top:296.0px;font:normal 13.5px/16px 'Liberation Sans',sans-serif;color:#1a1a1a;letter-spacing:-0.5px;transform:scaleX(0.9579);transform-origin:0 50%;">Me.Filter = "<svg class="h"><use href="#g97" width="100%" height="100%"/></svg><svg class="h"><use href="#g79" width="100%" height="100%"/></svg><svg class="h"><use href="#g98" width="100%" height="100%"/></svg><svg class="h"><use href="#g99" width="100%" height="100%"/></svg>=" &amp; cmb<svg class="h"><use href="#g97" width="100%" height="100%"/></svg><svg class="h"><use href="#g79" width="100%" height="100%"/></svg><svg class="h"><use href="#g98" width="100%" height="100%"/></svg><svg class="h"><use href="#g99" width="100%" height="100%"/></svg></div>
<div class="a" style="left:28px;top:310px;width:395px;height:304px;background:#cfdff0;box-shadow:-1px -1px 2px rgba(0,0,0,.2)"></div>
<div class="a" style="left:30px;top:311px;width:393px;height:14px;background:linear-gradient(90deg,#b4cce8,#d4e4f4)"></div>
<svg style="left:34px;top:314px" width="11" height="11"><path d="M1 5l4-3l5 3v4l-5 2l-4-2z" fill="#999" stroke="#444" stroke-width=".5"/><path d="M5 1l2-1l2 2l-2 2z" fill="#c040c0"/></svg>
<div class="a ka406dbc6a6" style="left:44px;top:314.5px;font:bold 7.5px/9px 'Liberation Sans',sans-serif;color:#5a6a86;;transform:scaleX(0.8811);transform-origin:0 50%;">06_3.<svg class="h hb"><use href="#g66" width="100%" height="100%"/></svg><svg class="h hb"><use href="#g67" width="100%" height="100%"/></svg><svg class="h hb"><use href="#g67" width="100%" height="100%"/></svg><svg class="h hb"><use href="#g66" width="100%" height="100%"/></svg><svg class="h hb"><use href="#g67" width="100%" height="100%"/></svg>(27) - Form_<svg class="h hb"><use href="#g100" width="100%" height="100%"/></svg><svg class="h hb"><use href="#g101" width="100%" height="100%"/></svg><svg class="h hb"><use href="#g102" width="100%" height="100%"/></svg><svg class="h hb"><use href="#g0" width="100%" height="100%"/></svg><svg class="h hb"><use href="#g103" width="100%" height="100%"/></svg> (<svg class="h hb"><use href="#g96" width="100%" height="100%"/></svg><svg class="h hb"><use href="#g54" width="100%" height="100%"/></svg>)</div>
<div class="a" style="left:33px;top:326px;width:390px;height:13px;background:#f0f0f0"></div>
<div class="a" style="left:37px;top:327px;width:213px;height:11px;background:#fff;border:1px solid #bbb"></div>
<div class="a ka78b528ddf" style="left:40px;top:328.0px;font:bold 7px/8px 'Liberation Sans',sans-serif;color:#222;;transform:scaleX(1.0354);transform-origin:0 50%;">cmd<svg class="h hb"><use href="#g0" width="100%" height="100%"/></svg><svg class="h hb"><use href="#g103" width="100%" height="100%"/></svg>5</div>
<svg style="left:243px;top:330px" width="6" height="4"><path d="M0 0L3 3L6 0" stroke="#555" fill="none"/></svg>
<div class="a" style="left:255px;top:327px;width:168px;height:11px;background:#fff;border:1px solid #bbb"></div>
<div class="a" style="left:258px;top:328.0px;font:bold 7px/8px 'Liberation Sans',sans-serif;color:#222;;">Click</div>
<div class="a" style="left:33px;top:339px;width:390px;height:262px;background:#fff;border-top:1px solid #999;border-left:1px solid #999"></div>
<div class="a kf102062677" style="left:40px;top:367.0px;font:normal 13.5px/16px 'Liberation Sans',sans-serif;color:#1a1a1a;letter-spacing:-0.6px;transform:scaleX(1.0050);transform-origin:0 50%;"><span style="color:#1c1c7c">Private Sub</span> cmd<svg class="h"><use href="#g0" width="100%" height="100%"/></svg><svg class="h"><use href="#g103" width="100%" height="100%"/></svg>5_Click()</div>
<div class="a k0476f195bc" style="left:50px;top:381.0px;font:normal 13.5px/16px 'Liberation Sans',sans-serif;color:#1a1a1a;letter-spacing:-0.6px;transform:scaleX(1.0210);transform-origin:0 50%;">Me.RecordsetClone.FindFirst "<span style="background:#1e6fd0;color:#fff"><svg class="h"><use href="#g0" width="100%" height="100%"/></svg><svg class="h"><use href="#g104" width="100%" height="100%"/></svg></span></div>
<div class="a kc2b789fcc3" style="left:40px;top:395.0px;font:normal 13.5px/16px 'Liberation Sans',sans-serif;color:#1a1a1a;letter-spacing:-0.6px;transform:scaleX(1.0264);transform-origin:0 50%;">I&nbsp; Me.Bookmark = Me.RecordsetClone.Bookmark</div>
<div class="a ke10f3b0bf3" style="left:40px;top:409.0px;font:normal 13.5px/16px 'Liberation Sans',sans-serif;color:#1a1a1a;letter-spacing:-0.6px;transform:scaleX(0.9875);transform-origin:0 50%;"><span style="color:#1c1c7c">End Sub</span></div>
<div class="a kf55b6da36c" style="left:40px;top:437.0px;font:normal 13.5px/16px 'Liberation Sans',sans-serif;color:#1a1a1a;letter-spacing:-0.6px;transform:scaleX(1.0163);transform-origin:0 50%;"><span style="color:#1c1c7c">Private Sub</span> txt<svg class="h"><use href="#g98" width="100%" height="100%"/></svg><svg class="h"><use href="#g99" width="100%" height="100%"/></svg>_BeforeUpdate(Cancel <span style="color:#1c1c7c">As Integer</span>)</div>
<div class="a k10f6d75c2e" style="left:40px;top:451.0px;font:normal 13.5px/16px 'Liberation Sans',sans-serif;color:#1a1a1a;letter-spacing:-0.6px;transform:scaleX(0.9677);transform-origin:0 50%;">I&nbsp; txt<svg class="h"><use href="#g22" width="100%" height="100%"/></svg><svg class="h"><use href="#g85" width="100%" height="100%"/></svg><svg class="h"><use href="#g105" width="100%" height="100%"/></svg> = DLookup("<svg class="h"><use href="#g23" width="100%" height="100%"/></svg><svg class="h"><use href="#g106" width="100%" height="100%"/></svg>", "<svg class="h"><use href="#g22" width="100%" height="100%"/></svg><svg class="h"><use href="#g85" width="100%" height="100%"/></svg><svg class="h"><use href="#g59" width="100%" height="100%"/></svg><svg class="h"><use href="#g107" width="100%" height="100%"/></svg>", "txt<svg class="h"><use href="#g98" width="100%" height="100%"/></svg><svg class="h"><use href="#g99" width="100%" height="100%"/></svg>=<svg class="h"><use href="#g22" width="100%" height="100%"/></svg><svg class="h"><use href="#g85" width="100%" height="100%"/></svg><svg class="h"><use href="#g98" width="100%" height="100%"/></svg><svg class="h"><use href="#g99" width="100%" height="100%"/></svg>")</div>
<div class="a k30998241f1" style="left:40px;top:465.0px;font:normal 13.5px/16px 'Liberation Sans',sans-serif;color:#1a1a1a;letter-spacing:-0.6px;transform:scaleX(0.9875);transform-origin:0 50%;"><span style="color:#1c1c7c">End Sub</span></div>
<div class="a kd0e4c168c8" style="left:40px;top:493.0px;font:normal 13.5px/16px 'Liberation Sans',sans-serif;color:#1a1a1a;letter-spacing:-0.6px;transform:scaleX(1.0128);transform-origin:0 50%;"><span style="color:#1c1c7c">Private Sub</span> txt<svg class="h"><use href="#g22" width="100%" height="100%"/></svg><svg class="h"><use href="#g45" width="100%" height="100%"/></svg><svg class="h"><use href="#g13" width="100%" height="100%"/></svg>_GotFocus()</div>
<div class="a kb12c778e5f" style="left:50px;top:507.0px;font:normal 13.5px/16px 'Liberation Sans',sans-serif;color:#1a1a1a;letter-spacing:-0.6px;transform:scaleX(0.9894);transform-origin:0 50%;"><span style="color:#1c1c7c">If</span> txt<svg class="h"><use href="#g22" width="100%" height="100%"/></svg><svg class="h"><use href="#g45" width="100%" height="100%"/></svg><svg class="h"><use href="#g13" width="100%" height="100%"/></svg> &gt;= 90 <span style="color:#1c1c7c">Then</span></div>
<div class="a k028346d53e" style="left:60px;top:521.0px;font:normal 13.5px/16px 'Liberation Sans',sans-serif;color:#1a1a1a;letter-spacing:-0.6px;transform:scaleX(0.9535);transform-origin:0 50%;">MsgBox "<svg class="h"><use href="#g108" width="100%" height="100%"/></svg><svg class="h"><use href="#g109" width="100%" height="100%"/></svg><svg class="h"><use href="#g38" width="100%" height="100%"/></svg><svg class="h"><use href="#g48" width="100%" height="100%"/></svg><svg class="h"><use href="#g9" width="100%" height="100%"/></svg>", vbOKOnly, "4<svg class="h"><use href="#g45" width="100%" height="100%"/></svg><svg class="h"><use href="#g13" width="100%" height="100%"/></svg> <svg class="h"><use href="#g110" width="100%" height="100%"/></svg><svg class="h"><use href="#g31" width="100%" height="100%"/></svg>"</div>
<div class="a k74968f2abf" style="left:40px;top:536.0px;font:normal 13.5px/16px 'Liberation Sans',sans-serif;color:#1a1a1a;letter-spacing:-0.6px;transform:scaleX(1.0209);transform-origin:0 50%;">I&nbsp; <span style="color:#1c1c7c">End If</span></div>
<div class="a kf14094660d" style="left:40px;top:550.0px;font:normal 13.5px/16px 'Liberation Sans',sans-serif;color:#1a1a1a;letter-spacing:-0.6px;transform:scaleX(0.9875);transform-origin:0 50%;"><span style="color:#1c1c7c">End Sub</span></div>
<div class="a" style="left:34px;top:425px;width:389px;height:1px;background:#aaa"></div>
<div class="a" style="left:34px;top:481px;width:389px;height:1px;background:#aaa"></div>
<div class="a" style="left:115px;top:385px;width:36px;height:36px;background:radial-gradient(circle,rgba(255,238,40,.8) 0,rgba(255,238,40,.72) 58%,rgba(255,238,40,0) 71%);border-radius:50%;mix-blend-mode:multiply"></div>
<div class="a" style="left:33px;top:601px;width:390px;height:12px;background:#f0f0f0"></div>
<svg style="left:35px;top:603px" width="20" height="8"><rect x="0.5" y="0.5" width="7" height="7" fill="#fff" stroke="#444" stroke-width=".7"/><rect x="7.5" y="0.5" width="7" height="7" fill="#eee" stroke="#444" stroke-width=".7"/></svg>
<div class="a" style="left:61px;top:606px;width:14px;height:1px;background:#888"></div>
<div class="a" style="left:28px;top:613px;width:395px;height:2px;background:#a8c4e4"></div>
<div class="a" style="left:0px;top:675px;width:448px;height:36px;background:#f0f0f0"></div>
<div class="a" style="left:0px;top:676px;width:423px;height:2px;background:#ddd"></div>
<div class="a" style="left:0px;top:692px;width:72px;height:6px;background:#8a8a8a;border-radius:3px"></div>
<svg style="left:183px;top:683px" width="14" height="20"><path d="M6 2h6l-3 4z" fill="#555"/><path d="M2 10v6l4-3z" fill="#555"/><rect x="8" y="10" width="6" height="6" fill="#bbb"/></svg>
<div class="a" style="left:205px;top:680px;width:1px;height:22px;background:#ddd"></div>
<div class="a k1cf0996df4" style="left:340px;top:701.0px;font:normal 6.5px/8px 'Liberation Sans',sans-serif;color:#444;;transform:scaleX(1.0251);transform-origin:0 50%;">Num Lock</div>
<svg style="left:384px;top:700px" width="60" height="10"><rect x="0.5" y="0.5" width="9" height="8" fill="none" stroke="#555" stroke-width=".7"/><path d="M3 3h4M3 6h4" stroke="#555" stroke-width=".6"/><rect x="21.5" y="0.5" width="9" height="8" fill="none" stroke="#555" stroke-width=".7"/><path d="M21 4h10M26 0v9" stroke="#555" stroke-width=".6"/><rect x="40" y="-1" width="12" height="11" fill="#ddd"/><rect x="42.5" y="0.5" width="9" height="8" fill="none" stroke="#555" stroke-width=".7"/><path d="M43 1l8 7" stroke="#555" stroke-width=".6"/></svg>
<div class="a" style="left:448px;top:149px;width:404px;height:562px;background:#2c2c2c"></div>
<div class="a" style="left:448px;top:149px;width:4px;height:562px;background:#1f1f1f"></div>
<svg style="left:454px;top:153px" width="40" height="14"><path d="M6 1l5 2.5v6L6 12L1 9.5v-6z" fill="none" stroke="#ccc" stroke-width=".9"/><path d="M1 3.5L6 6l5-2.5M6 6v6" stroke="#ccc" stroke-width=".8"/><rect x="26" y="2" width="10" height="10" rx="1" fill="none" stroke="#ddd"/><path d="M26 5h10" stroke="#ddd" stroke-width="2"/></svg>
<div class="a" style="left:500px;top:151px;width:121px;height:19px;background:#3b3b3b;border-radius:5px 5px 0 0"></div>
<svg style="left:503px;top:155px" width="12" height="12"><circle cx="6" cy="6" r="5.5" fill="#d8303a"/><rect x="3" y="4" width="6" height="4" fill="#fff" opacity=".85"/></svg>
<div class="a k259cd91586" style="left:516px;top:156.5px;font:normal 7.5px/9px 'Liberation Sans',sans-serif;color:#e8e8e8;;transform:scaleX(0.8996);transform-origin:0 50%;">*<svg class="h"><use href="#g10" width="100%" height="100%"/></svg><svg class="h"><use href="#g34" width="100%" height="100%"/></svg>1<svg class="h"><use href="#g35" width="100%" height="100%"/></svg><svg class="h"><use href="#g46" width="100%" height="100%"/></svg><svg class="h"><use href="#g13" width="100%" height="100%"/></svg>.pdf</div>
<svg style="left:610px;top:157px" width="7" height="7"><path d="M0.5 0.5L6.5 6.5M6.5 0.5L0.5 6.5" stroke="#ddd"/></svg>
<svg style="left:625px;top:156px" width="9" height="9"><path d="M4.5 0v9M0 4.5h9" stroke="#ddd"/></svg>
<div class="a" style="left:786px;top:157px;width:7px;height:1px;background:#888"></div>
<div class="a" style="left:811px;top:154px;width:6px;height:6px;border:1px solid #888"></div>
<svg style="left:835px;top:154px" width="8" height="8"><path d="M0.5 0.5L7.5 7.5M7.5 0.5L0.5 7.5" stroke="#aaa"/></svg>
<div class="a" style="left:452px;top:170px;width:388px;height:41px;background:#3b3b3b"></div>
<svg style="left:458px;top:174px" width="30" height="14"><path d="M10 7H1M5 3L1 7l4 4" stroke="#777" fill="none"/><path d="M28 6a5 5 0 1 1-2-4M27 0v4h-4" stroke="#ddd" fill="none" stroke-width="1.2"/></svg>
<div class="a" style="left:502px;top:172px;width:205px;height:17px;background:#2a2a2a;border-radius:9px"></div>
<svg style="left:509px;top:175px" width="11" height="11"><circle cx="5.5" cy="5.5" r="4.8" stroke="#ddd" fill="none"/><path d="M5.5 3v1M5.5 5v3.5" stroke="#ddd"/></svg>
<div class="a k9097c66e62" style="left:522px;top:175.5px;font:bold 7.5px/9px 'Liberation Sans',sans-serif;color:#eee;;transform:scaleX(1.1111);transform-origin:0 50%;"><svg class="h hb"><use href="#g111" width="100%" height="100%"/></svg><svg class="h hb"><use href="#g33" width="100%" height="100%"/></svg></div>
<div class="a" style="left:541px;top:175px;width:1px;height:10px;background:#777"></div>
<div class="a k84ada2aef6" style="left:550px;top:175.5px;font:bold 7.5px/9px 'Liberation Sans',sans-serif;color:#eee;;transform:scaleX(1.0443);transform-origin:0 50%;">G:/<svg class="h hb"><use href="#g53" width="100%" height="100%"/></svg>%20<svg class="h hb"><use href="#g54" width="100%" height="100%"/></svg><svg class="h hb"><use href="#g55" width="100%" height="100%"/></svg><svg class="h hb"><use href="#g23" width="100%" height="100%"/></svg><svg class="h hb"><use href="#g56" width="100%" height="100%"/></svg>/<svg class="h hb"><use href="#g23" width="100%" height="100%"/></svg><svg class="h hb"><use href="#g24" width="100%" height="100%"/></svg><svg class="h hb"><use href="#g25" width="100%" height="100%"/></svg><svg class="h hb"><use href="#g10" width="100%" height="100%"/></svg><svg class="h hb"><use href="#g57" width="100%" height="100%"/></svg><svg class="h hb"><use href="#g19" width="100%" height="100%"/></svg>/...</div>
<svg style="left:670px;top:175px" width="30" height="12"><circle cx="4" cy="4" r="3" stroke="#888" fill="none"/><path d="M6 6l3 3" stroke="#888"/><path d="M22 0.5l1.6 3.3l3.6.5l-2.6 2.5l.6 3.6l-3.2-1.7l-3.2 1.7l.6-3.6l-2.6-2.5l3.6-.5z" stroke="#ccc" fill="none" stroke-width=".8"/></svg>
<svg style="left:718px;top:174px" width="110" height="14"><rect x="1" y="2" width="10" height="9" rx="2" fill="none" stroke="#ddd"/><path d="M6 2v9" stroke="#ddd"/><rect x="24" y="2" width="9" height="9" rx="2" fill="none" stroke="#ddd"/><path d="M28.5 4v5M26 6.5h5" stroke="#ddd"/><path d="M47 4q2-3 4 0q2-3 4 0q0 3-4 6q-4-3-4-6z" fill="none" stroke="#ddd"/><path d="M53 9l2 2" stroke="#4c4"/></svg>
<div class="a" style="left:786px;top:172px;width:15px;height:15px;background:radial-gradient(circle at 50% 40%,#e8d0c0 0,#6a4030 45%,#222 70%);border-radius:50%"></div>
<div class="a" style="left:811px;top:174.0px;font:normal 8px/10px 'Liberation Sans',sans-serif;color:#ddd;;">···</div>
<svg style="left:831px;top:172px" width="14" height="15"><path d="M4 1h8l-3 13H1z" fill="#2f8ae6"/><path d="M7 1h6l-3 13H4z" fill="#2ac0f0" opacity=".85"/></svg>
<div class="a" style="left:452px;top:210px;width:388px;height:471px;background:#fff"></div>
<svg style="left:476px;top:207px" width="6" height="8"><path d="M0 0L6 4L0 8z" fill="#111"/></svg>
<div class="a k4b721eb43b" style="left:484px;top:206.5px;font:normal 7.3px/9px 'Liberation Sans',sans-serif;color:#555;letter-spacing:0.6px;transform:scaleX(1.1555);transform-origin:0 50%;"><svg class="h"><use href="#g97" width="100%" height="100%"/></svg><svg class="h"><use href="#g79" width="100%" height="100%"/></svg><svg class="h"><use href="#g98" width="100%" height="100%"/></svg><svg class="h"><use href="#g99" width="100%" height="100%"/></svg> <svg class="h"><use href="#g31" width="100%" height="100%"/></svg> cmb<svg class="h"><use href="#g97" width="100%" height="100%"/></svg><svg class="h"><use href="#g79" width="100%" height="100%"/></svg><svg class="h"><use href="#g98" width="100%" height="100%"/></svg><svg class="h"><use href="#g99" width="100%" height="100%"/></svg> <svg class="h"><use href="#g2" width="100%" height="100%"/></svg><svg class="h"><use href="#g79" width="100%" height="100%"/></svg> <svg class="h"><use href="#g112" width="100%" height="100%"/></svg><svg class="h"><use href="#g113" width="100%" height="100%"/></svg><svg class="h"><use href="#g114" width="100%" height="100%"/></svg> <svg class="h"><use href="#g97" width="100%" height="100%"/></svg><svg class="h"><use href="#g79" width="100%" height="100%"/></svg><svg class="h"><use href="#g115" width="100%" height="100%"/></svg> <svg class="h"><use href="#g116" width="100%" height="100%"/></svg><svg class="h"><use href="#g117" width="100%" height="100%"/></svg> <svg class="h"><use href="#g118" width="100%" height="100%"/></svg><svg class="h"><use href="#g96" width="100%" height="100%"/></svg><svg class="h"><use href="#g54" width="100%" height="100%"/></svg><svg class="h"><use href="#g119" width="100%" height="100%"/></svg> <svg class="h"><use href="#g120" width="100%" height="100%"/></svg><svg class="h"><use href="#g27" width="100%" height="100%"/></svg><svg class="h"><use href="#g44" width="100%" height="100%"/></svg><svg class="h"><use href="#g70" width="100%" height="100%"/></svg><svg class="h"><use href="#g107" width="100%" height="100%"/></svg> <svg class="h"><use href="#g121" width="100%" height="100%"/></svg> <svg class="h"><use href="#g122" width="100%" height="100%"/></svg></div>
<svg style="left:476px;top:223px" width="6" height="8"><path d="M0 0L6 4L0 8z" fill="#111"/></svg>
<div class="a k41e3cb13e2" style="left:484px;top:222.5px;font:normal 7.3px/9px 'Liberation Sans',sans-serif;color:#555;letter-spacing:0.6px;transform:scaleX(0.9773);transform-origin:0 50%;"><svg class="h"><use href="#g123" width="100%" height="100%"/></svg><svg class="h"><use href="#g26" width="100%" height="100%"/></svg> Filter <svg class="h"><use href="#g17" width="100%" height="100%"/></svg> FilterOn <svg class="h"><use href="#g20" width="100%" height="100%"/></svg><svg class="h"><use href="#g14" width="100%" height="100%"/></svg><svg class="h"><use href="#g84" width="100%" height="100%"/></svg> <svg class="h"><use href="#g23" width="100%" height="100%"/></svg><svg class="h"><use href="#g30" width="100%" height="100%"/></svg><svg class="h"><use href="#g121" width="100%" height="100%"/></svg> <svg class="h"><use href="#g122" width="100%" height="100%"/></svg></div>
<div class="a k6a8ef43914" style="left:462px;top:272.5px;font:bold 7.6px/9px 'Liberation Sans',sans-serif;color:#222;letter-spacing:0.6px;transform:scaleX(1.0663);transform-origin:0 50%;">[2]. &lt;<svg class="h hb"><use href="#g100" width="100%" height="100%"/></svg><svg class="h hb"><use href="#g101" width="100%" height="100%"/></svg><svg class="h hb"><use href="#g102" width="100%" height="100%"/></svg><svg class="h hb"><use href="#g0" width="100%" height="100%"/></svg><svg class="h hb"><use href="#g103" width="100%" height="100%"/></svg>&gt; <svg class="h hb"><use href="#g123" width="100%" height="100%"/></svg><svg class="h hb"><use href="#g26" width="100%" height="100%"/></svg> '<svg class="h hb"><use href="#g0" width="100%" height="100%"/></svg><svg class="h hb"><use href="#g103" width="100%" height="100%"/></svg>1'(cmb<svg class="h hb"><use href="#g0" width="100%" height="100%"/></svg><svg class="h hb"><use href="#g103" width="100%" height="100%"/></svg>1) <svg class="h hb"><use href="#g124" width="100%" height="100%"/></svg><svg class="h hb"><use href="#g125" width="100%" height="100%"/></svg><svg class="h hb"><use href="#g84" width="100%" height="100%"/></svg> <svg class="h hb"><use href="#g126" width="100%" height="100%"/></svg><svg class="h hb"><use href="#g127" width="100%" height="100%"/></svg><svg class="h hb"><use href="#g121" width="100%" height="100%"/></svg> <svg class="h hb"><use href="#g128" width="100%" height="100%"/></svg> <svg class="h hb"><use href="#g129" width="100%" height="100%"/></svg><svg class="h hb"><use href="#g130" width="100%" height="100%"/></svg><svg class="h hb"><use href="#g58" width="100%" height="100%"/></svg> <svg class="h hb"><use href="#g116" width="100%" height="100%"/></svg><svg class="h hb"><use href="#g117" width="100%" height="100%"/></svg> <svg class="h hb"><use href="#g13" width="100%" height="100%"/></svg><svg class="h hb"><use href="#g32" width="100%" height="100%"/></svg><svg class="h hb"><use href="#g84" width="100%" height="100%"/></svg> <svg class="h hb"><use href="#g60" width="100%" height="100%"/></svg><svg class="h hb"><use href="#g90" width="100%" height="100%"/></svg><svg class="h hb"><use href="#g44" width="100%" height="100%"/></svg><svg class="h hb"><use href="#g70" width="100%" height="100%"/></svg><svg class="h hb"><use href="#g107" width="100%" height="100%"/></svg> <svg class="h hb"><use href="#g71" width="100%" height="100%"/></svg><svg class="h hb"><use href="#g131" width="100%" height="100%"/></svg><svg class="h hb"><use href="#g44" width="100%" height="100%"/></svg><svg class="h hb"><use href="#g27" width="100%" height="100%"/></svg><svg class="h hb"><use href="#g132" width="100%" height="100%"/></svg>.</div>
<svg style="left:476px;top:288px" width="6" height="8"><path d="M0 0L6 4L0 8z" fill="#111"/></svg>
<div class="a k2777be5981" style="left:484px;top:287.5px;font:normal 7.3px/9px 'Liberation Sans',sans-serif;color:#555;letter-spacing:0.6px;transform:scaleX(1.0530);transform-origin:0 50%;">'txt<svg class="h"><use href="#g98" width="100%" height="100%"/></svg><svg class="h"><use href="#g99" width="100%" height="100%"/></svg>' <svg class="h"><use href="#g133" width="100%" height="100%"/></svg><svg class="h"><use href="#g134" width="100%" height="100%"/></svg><svg class="h"><use href="#g135" width="100%" height="100%"/></svg><svg class="h"><use href="#g2" width="100%" height="100%"/></svg> <svg class="h"><use href="#g136" width="100%" height="100%"/></svg><svg class="h"><use href="#g137" width="100%" height="100%"/></svg><svg class="h"><use href="#g138" width="100%" height="100%"/></svg> <svg class="h"><use href="#g22" width="100%" height="100%"/></svg><svg class="h"><use href="#g85" width="100%" height="100%"/></svg><svg class="h"><use href="#g98" width="100%" height="100%"/></svg><svg class="h"><use href="#g99" width="100%" height="100%"/></svg><svg class="h"><use href="#g119" width="100%" height="100%"/></svg> <svg class="h"><use href="#g120" width="100%" height="100%"/></svg><svg class="h"><use href="#g27" width="100%" height="100%"/></svg><svg class="h"><use href="#g44" width="100%" height="100%"/></svg><svg class="h"><use href="#g70" width="100%" height="100%"/></svg><svg class="h"><use href="#g107" width="100%" height="100%"/></svg> <svg class="h"><use href="#g121" width="100%" height="100%"/></svg> <svg class="h"><use href="#g122" width="100%" height="100%"/></svg></div>
<svg style="left:476px;top:302px" width="6" height="8"><path d="M0 0L6 4L0 8z" fill="#111"/></svg>
<div class="a k299ea1e4e0" style="left:484px;top:301.5px;font:normal 7.3px/9px 'Liberation Sans',sans-serif;color:#555;letter-spacing:0.6px;transform:scaleX(1.0035);transform-origin:0 50%;">Filter<svg class="h"><use href="#g115" width="100%" height="100%"/></svg> FilterOn <svg class="h"><use href="#g20" width="100%" height="100%"/></svg><svg class="h"><use href="#g14" width="100%" height="100%"/></svg><svg class="h"><use href="#g84" width="100%" height="100%"/></svg> <svg class="h"><use href="#g23" width="100%" height="100%"/></svg><svg class="h"><use href="#g30" width="100%" height="100%"/></svg><svg class="h"><use href="#g44" width="100%" height="100%"/></svg><svg class="h"><use href="#g139" width="100%" height="100%"/></svg> <svg class="h"><use href="#g23" width="100%" height="100%"/></svg><svg class="h"><use href="#g140" width="100%" height="100%"/></svg><svg class="h"><use href="#g134" width="100%" height="100%"/></svg> <svg class="h"><use href="#g141" width="100%" height="100%"/></svg><svg class="h"><use href="#g68" width="100%" height="100%"/></svg><svg class="h"><use href="#g27" width="100%" height="100%"/></svg><svg class="h"><use href="#g62" width="100%" height="100%"/></svg><svg class="h"><use href="#g142" width="100%" height="100%"/></svg> <svg class="h"><use href="#g82" width="100%" height="100%"/></svg><svg class="h"><use href="#g14" width="100%" height="100%"/></svg><svg class="h"><use href="#g121" width="100%" height="100%"/></svg> <svg class="h"><use href="#g122" width="100%" height="100%"/></svg></div>
<div class="a k6563eb4c8a" style="left:462px;top:351.5px;font:bold 7.6px/9px 'Liberation Sans',sans-serif;color:#222;letter-spacing:0.6px;transform:scaleX(1.0696);transform-origin:0 50%;">[3]. &lt;<svg class="h hb"><use href="#g100" width="100%" height="100%"/></svg><svg class="h hb"><use href="#g101" width="100%" height="100%"/></svg><svg class="h hb"><use href="#g102" width="100%" height="100%"/></svg><svg class="h hb"><use href="#g0" width="100%" height="100%"/></svg><svg class="h hb"><use href="#g103" width="100%" height="100%"/></svg>&gt; <svg class="h hb"><use href="#g123" width="100%" height="100%"/></svg><svg class="h hb"><use href="#g26" width="100%" height="100%"/></svg> 'txt<svg class="h hb"><use href="#g22" width="100%" height="100%"/></svg><svg class="h hb"><use href="#g85" width="100%" height="100%"/></svg><svg class="h hb"><use href="#g105" width="100%" height="100%"/></svg>' <svg class="h hb"><use href="#g133" width="100%" height="100%"/></svg><svg class="h hb"><use href="#g134" width="100%" height="100%"/></svg><svg class="h hb"><use href="#g135" width="100%" height="100%"/></svg><svg class="h hb"><use href="#g2" width="100%" height="100%"/></svg> <svg class="h hb"><use href="#g23" width="100%" height="100%"/></svg><svg class="h hb"><use href="#g106" width="100%" height="100%"/></svg><svg class="h hb"><use href="#g26" width="100%" height="100%"/></svg> <svg class="h hb"><use href="#g33" width="100%" height="100%"/></svg><svg class="h hb"><use href="#g97" width="100%" height="100%"/></svg><svg class="h hb"><use href="#g142" width="100%" height="100%"/></svg> <svg class="h hb"><use href="#g136" width="100%" height="100%"/></svg><svg class="h hb"><use href="#g137" width="100%" height="100%"/></svg><svg class="h hb"><use href="#g44" width="100%" height="100%"/></svg><svg class="h hb"><use href="#g88" width="100%" height="100%"/></svg> '<svg class="h hb"><use href="#g0" width="100%" height="100%"/></svg><svg class="h hb"><use href="#g103" width="100%" height="100%"/></svg>3'(cmb<svg class="h hb"><use href="#g0" width="100%" height="100%"/></svg><svg class="h hb"><use href="#g103" width="100%" height="100%"/></svg>3) <svg class="h hb"><use href="#g124" width="100%" height="100%"/></svg><svg class="h hb"><use href="#g125" width="100%" height="100%"/></svg><svg class="h hb"><use href="#g84" width="100%" height="100%"/></svg> <svg class="h hb"><use href="#g126" width="100%" height="100%"/></svg><svg class="h hb"><use href="#g127" width="100%" height="100%"/></svg><svg class="h hb"><use href="#g44" width="100%" height="100%"/></svg><svg class="h hb"><use href="#g143" width="100%" height="100%"/></svg></div>
<div class="a k6fb5bf005d" style="left:477px;top:366.5px;font:bold 7.6px/9px 'Liberation Sans',sans-serif;color:#222;letter-spacing:0.6px;transform:scaleX(1.0916);transform-origin:0 50%;"><svg class="h hb"><use href="#g129" width="100%" height="100%"/></svg><svg class="h hb"><use href="#g130" width="100%" height="100%"/></svg><svg class="h hb"><use href="#g58" width="100%" height="100%"/></svg> <svg class="h hb"><use href="#g116" width="100%" height="100%"/></svg><svg class="h hb"><use href="#g117" width="100%" height="100%"/></svg> <svg class="h hb"><use href="#g13" width="100%" height="100%"/></svg><svg class="h hb"><use href="#g32" width="100%" height="100%"/></svg><svg class="h hb"><use href="#g23" width="100%" height="100%"/></svg> <svg class="h hb"><use href="#g60" width="100%" height="100%"/></svg><svg class="h hb"><use href="#g90" width="100%" height="100%"/></svg><svg class="h hb"><use href="#g144" width="100%" height="100%"/></svg><svg class="h hb"><use href="#g70" width="100%" height="100%"/></svg><svg class="h hb"><use href="#g107" width="100%" height="100%"/></svg> <svg class="h hb"><use href="#g71" width="100%" height="100%"/></svg><svg class="h hb"><use href="#g131" width="100%" height="100%"/></svg><svg class="h hb"><use href="#g44" width="100%" height="100%"/></svg><svg class="h hb"><use href="#g27" width="100%" height="100%"/></svg><svg class="h hb"><use href="#g132" width="100%" height="100%"/></svg>.</div>
<svg style="left:476px;top:382px" width="6" height="8"><path d="M0 0L6 4L0 8z" fill="#111"/></svg>
<div class="a k1d7cfb34b9" style="left:484px;top:381.5px;font:normal 7.3px/9px 'Liberation Sans',sans-serif;color:#555;letter-spacing:0.6px;transform:scaleX(1.0587);transform-origin:0 50%;">'txt<svg class="h"><use href="#g22" width="100%" height="100%"/></svg><svg class="h"><use href="#g85" width="100%" height="100%"/></svg><svg class="h"><use href="#g105" width="100%" height="100%"/></svg>'<svg class="h"><use href="#g2" width="100%" height="100%"/></svg> <svg class="h"><use href="#g136" width="100%" height="100%"/></svg><svg class="h"><use href="#g137" width="100%" height="100%"/></svg><svg class="h"><use href="#g138" width="100%" height="100%"/></svg> <svg class="h"><use href="#g145" width="100%" height="100%"/></svg><svg class="h"><use href="#g77" width="100%" height="100%"/></svg><svg class="h"><use href="#g142" width="100%" height="100%"/></svg> <svg class="h"><use href="#g146" width="100%" height="100%"/></svg><svg class="h"><use href="#g147" width="100%" height="100%"/></svg><svg class="h"><use href="#g44" width="100%" height="100%"/></svg><svg class="h"><use href="#g148" width="100%" height="100%"/></svg> <svg class="h"><use href="#g22" width="100%" height="100%"/></svg><svg class="h"><use href="#g85" width="100%" height="100%"/></svg> <svg class="h"><use href="#g23" width="100%" height="100%"/></svg><svg class="h"><use href="#g106" width="100%" height="100%"/></svg><svg class="h"><use href="#g84" width="100%" height="100%"/></svg> <svg class="h"><use href="#g149" width="100%" height="100%"/></svg><svg class="h"><use href="#g8" width="100%" height="100%"/></svg> <svg class="h"><use href="#g120" width="100%" height="100%"/></svg><svg class="h"><use href="#g27" width="100%" height="100%"/></svg><svg class="h"><use href="#g144" width="100%" height="100%"/></svg><svg class="h"><use href="#g70" width="100%" height="100%"/></svg><svg class="h"><use href="#g107" width="100%" height="100%"/></svg> <svg class="h"><use href="#g121" width="100%" height="100%"/></svg> <svg class="h"><use href="#g122" width="100%" height="100%"/></svg></div>
<svg style="left:476px;top:396px" width="6" height="8"><path d="M0 0L6 4L0 8z" fill="#111"/></svg>
<div class="a k8d98b92ceb" style="left:484px;top:395.5px;font:normal 7.3px/9px 'Liberation Sans',sans-serif;color:#555;letter-spacing:0.6px;transform:scaleX(1.0136);transform-origin:0 50%;"><svg class="h"><use href="#g131" width="100%" height="100%"/></svg><svg class="h"><use href="#g150" width="100%" height="100%"/></svg> <svg class="h"><use href="#g123" width="100%" height="100%"/></svg><svg class="h"><use href="#g26" width="100%" height="100%"/></svg> 'RecordSource' <svg class="h"><use href="#g20" width="100%" height="100%"/></svg><svg class="h"><use href="#g14" width="100%" height="100%"/></svg><svg class="h"><use href="#g84" width="100%" height="100%"/></svg> <svg class="h"><use href="#g23" width="100%" height="100%"/></svg><svg class="h"><use href="#g30" width="100%" height="100%"/></svg><svg class="h"><use href="#g44" width="100%" height="100%"/></svg><svg class="h"><use href="#g139" width="100%" height="100%"/></svg> <svg class="h"><use href="#g23" width="100%" height="100%"/></svg><svg class="h"><use href="#g140" width="100%" height="100%"/></svg><svg class="h"><use href="#g134" width="100%" height="100%"/></svg> <svg class="h"><use href="#g141" width="100%" height="100%"/></svg><svg class="h"><use href="#g68" width="100%" height="100%"/></svg><svg class="h"><use href="#g27" width="100%" height="100%"/></svg><svg class="h"><use href="#g62" width="100%" height="100%"/></svg><svg class="h"><use href="#g142" width="100%" height="100%"/></svg> <svg class="h"><use href="#g82" width="100%" height="100%"/></svg><svg class="h"><use href="#g14" width="100%" height="100%"/></svg><svg class="h"><use href="#g121" width="100%" height="100%"/></svg> <svg class="h"><use href="#g122" width="100%" height="100%"/></svg></div>
<div class="a k43f64f0f01" style="left:462px;top:446.5px;font:bold 7.6px/9px 'Liberation Sans',sans-serif;color:#222;letter-spacing:0.6px;transform:scaleX(1.0696);transform-origin:0 50%;">[4]. &lt;<svg class="h hb"><use href="#g100" width="100%" height="100%"/></svg><svg class="h hb"><use href="#g101" width="100%" height="100%"/></svg><svg class="h hb"><use href="#g102" width="100%" height="100%"/></svg><svg class="h hb"><use href="#g0" width="100%" height="100%"/></svg><svg class="h hb"><use href="#g103" width="100%" height="100%"/></svg>&gt; <svg class="h hb"><use href="#g123" width="100%" height="100%"/></svg><svg class="h hb"><use href="#g26" width="100%" height="100%"/></svg> 'txt<svg class="h hb"><use href="#g22" width="100%" height="100%"/></svg><svg class="h hb"><use href="#g85" width="100%" height="100%"/></svg><svg class="h hb"><use href="#g105" width="100%" height="100%"/></svg>' <svg class="h hb"><use href="#g133" width="100%" height="100%"/></svg><svg class="h hb"><use href="#g134" width="100%" height="100%"/></svg><svg class="h hb"><use href="#g135" width="100%" height="100%"/></svg><svg class="h hb"><use href="#g2" width="100%" height="100%"/></svg> <svg class="h hb"><use href="#g23" width="100%" height="100%"/></svg><svg class="h hb"><use href="#g106" width="100%" height="100%"/></svg><svg class="h hb"><use href="#g84" width="100%" height="100%"/></svg> <svg class="h hb"><use href="#g136" width="100%" height="100%"/></svg><svg class="h hb"><use href="#g137" width="100%" height="100%"/></svg><svg class="h hb"><use href="#g44" width="100%" height="100%"/></svg><svg class="h hb"><use href="#g88" width="100%" height="100%"/></svg> '<svg class="h hb"><use href="#g0" width="100%" height="100%"/></svg><svg class="h hb"><use href="#g103" width="100%" height="100%"/></svg>5'(cmb<svg class="h hb"><use href="#g0" width="100%" height="100%"/></svg><svg class="h hb"><use href="#g103" width="100%" height="100%"/></svg>5) <svg class="h hb"><use href="#g124" width="100%" height="100%"/></svg><svg class="h hb"><use href="#g125" width="100%" height="100%"/></svg><svg class="h hb"><use href="#g84" width="100%" height="100%"/></svg> <svg class="h hb"><use href="#g126" width="100%" height="100%"/></svg><svg class="h hb"><use href="#g127" width="100%" height="100%"/></svg><svg class="h hb"><use href="#g44" width="100%" height="100%"/></svg><svg class="h hb"><use href="#g143" width="100%" height="100%"/></svg> <svg class="h hb"><use href="#g129" width="100%" height="100%"/></svg><svg class="h hb"><use href="#g130" width="100%" height="100%"/></svg><svg class="h hb"><use href="#g58" width="100%" height="100%"/></svg></div>
<div class="a kd9bc5d7d9b" style="left:477px;top:461.5px;font:bold 7.6px/9px 'Liberation Sans',sans-serif;color:#222;letter-spacing:0.6px;transform:scaleX(1.0945);transform-origin:0 50%;"><svg class="h hb"><use href="#g116" width="100%" height="100%"/></svg><svg class="h hb"><use href="#g117" width="100%" height="100%"/></svg> <svg class="h hb"><use href="#g13" width="100%" height="100%"/></svg><svg class="h hb"><use href="#g32" width="100%" height="100%"/></svg><svg class="h hb"><use href="#g23" width="100%" height="100%"/></svg> <svg class="h hb"><use href="#g60" width="100%" height="100%"/></svg><svg class="h hb"><use href="#g90" width="100%" height="100%"/></svg><svg class="h hb"><use href="#g144" width="100%" height="100%"/></svg><svg class="h hb"><use href="#g70" width="100%" height="100%"/></svg><svg class="h hb"><use href="#g107" width="100%" height="100%"/></svg> <svg class="h hb"><use href="#g71" width="100%" height="100%"/></svg><svg class="h hb"><use href="#g131" width="100%" height="100%"/></svg><svg class="h hb"><use href="#g44" width="100%" height="100%"/></svg><svg class="h hb"><use href="#g27" width="100%" height="100%"/></svg><svg class="h hb"><use href="#g132" width="100%" height="100%"/></svg>.</div>
<svg style="left:476px;top:477px" width="6" height="8"><path d="M0 0L6 4L0 8z" fill="#111"/></svg>
<div class="a kd08b984361" style="left:484px;top:476.5px;font:normal 7.3px/9px 'Liberation Sans',sans-serif;color:#555;letter-spacing:0.6px;transform:scaleX(1.0538);transform-origin:0 50%;"><svg class="h"><use href="#g23" width="100%" height="100%"/></svg><svg class="h"><use href="#g106" width="100%" height="100%"/></svg><svg class="h"><use href="#g23" width="100%" height="100%"/></svg> 'txt<svg class="h"><use href="#g22" width="100%" height="100%"/></svg><svg class="h"><use href="#g85" width="100%" height="100%"/></svg><svg class="h"><use href="#g105" width="100%" height="100%"/></svg>'<svg class="h"><use href="#g26" width="100%" height="100%"/></svg> <svg class="h"><use href="#g151" width="100%" height="100%"/></svg><svg class="h"><use href="#g58" width="100%" height="100%"/></svg> <svg class="h"><use href="#g116" width="100%" height="100%"/></svg><svg class="h"><use href="#g117" width="100%" height="100%"/></svg> <svg class="h"><use href="#g22" width="100%" height="100%"/></svg><svg class="h"><use href="#g85" width="100%" height="100%"/></svg><svg class="h"><use href="#g84" width="100%" height="100%"/></svg> <svg class="h"><use href="#g149" width="100%" height="100%"/></svg><svg class="h"><use href="#g8" width="100%" height="100%"/></svg> <svg class="h"><use href="#g120" width="100%" height="100%"/></svg><svg class="h"><use href="#g27" width="100%" height="100%"/></svg><svg class="h"><use href="#g121" width="100%" height="100%"/></svg> <svg class="h"><use href="#g122" width="100%" height="100%"/></svg></div>
<svg style="left:476px;top:491px" width="6" height="8"><path d="M0 0L6 4L0 8z" fill="#111"/></svg>
<div class="a kea703fdfe3" style="left:484px;top:490.5px;font:normal 7.3px/9px 'Liberation Sans',sans-serif;color:#555;letter-spacing:0.6px;transform:scaleX(0.9488);transform-origin:0 50%;"><svg class="h"><use href="#g131" width="100%" height="100%"/></svg><svg class="h"><use href="#g150" width="100%" height="100%"/></svg> <svg class="h"><use href="#g123" width="100%" height="100%"/></svg><svg class="h"><use href="#g26" width="100%" height="100%"/></svg> 'RecordSetClone', 'Bookmark', 'Findfirst' <svg class="h"><use href="#g20" width="100%" height="100%"/></svg><svg class="h"><use href="#g14" width="100%" height="100%"/></svg><svg class="h"><use href="#g84" width="100%" height="100%"/></svg> <svg class="h"><use href="#g23" width="100%" height="100%"/></svg><svg class="h"><use href="#g30" width="100%" height="100%"/></svg><svg class="h"><use href="#g44" width="100%" height="100%"/></svg><svg class="h"><use href="#g139" width="100%" height="100%"/></svg> <svg class="h"><use href="#g23" width="100%" height="100%"/></svg><svg class="h"><use href="#g140" width="100%" height="100%"/></svg><svg class="h"><use href="#g134" width="100%" height="100%"/></svg> <svg class="h"><use href="#g141" width="100%" height="100%"/></svg><svg class="h"><use href="#g68" width="100%" height="100%"/></svg><svg class="h"><use href="#g27" width="100%" height="100%"/></svg><svg class="h"><use href="#g62" width="100%" height="100%"/></svg><svg class="h"><use href="#g142" width="100%" height="100%"/></svg> <svg class="h"><use href="#g82" width="100%" height="100%"/></svg><svg class="h"><use href="#g14" width="100%" height="100%"/></svg><svg class="h"><use href="#g44" width="100%" height="100%"/></svg><svg class="h"><use href="#g27" width="100%" height="100%"/></svg><svg class="h"><use href="#g132" width="100%" height="100%"/></svg>.</div>
<svg style="left:0;top:0" width="852" height="711"><g stroke="#2a55b8" stroke-width="1.3" fill="none" stroke-linecap="round" stroke-linejoin="round"><path d="M481 206q25-2 50 0v13q-25 2-50 0zM548 206q30-2 58 0v12q-30 2-58 0z"/><path d="M479 287q18-3 36-1l-1 15q-17 1-34-1zM560 283q20-2 40 0v13h-40z"/><path d="M513 300q25 8 55 18"/><path d="M498 322q20-2 41 0v14q-20 1-41-1zM545 329h6M553 330h5M568 318q35-1 73 0v15q-36 1-73 0z"/><path d="M703 300q-5 20-37 23M670 315L654 326L670 333"/><path d="M725 292V310M732 294Q742 292 750 294L748 300M731 302H770M738 304Q736 314 740 314H752Q754 306 750 304ZM757 302Q765 294 771 292M760 302Q767 301 772 303M772 290V306Q776 312 773 318"/><path d="M620 364q25 2 50-2M644 349q12-4 22 2q4 10-4 13q-12 2-18-6z"/><path d="M686 362q10-6 25-4q20 4 18 18q-4 14-22 12q-22-2-23-14q0-8 2-12"/><path d="M690 370Q700 366 712 365M697 372Q698 378 696 382M708 368L703 380M700 380H716M713 372Q724 372 727 380Q718 384 713 378"/><path d="M675 380l-10 3"/><path d="M516 404q40 3 84 0M616 397q50-5 100-1q4 6 0 12q-50 3-100 0q-3-6 0-11zM620 390v22"/><path d="M483 475q12-4 19 4q1 10-18 10zM508 474q18-4 35 1q2 12-10 15q-20 0-25-8"/><path d="M518 503q25 2 45 0M598 503q15 1 25 0M626 503q40 2 75 0"/><path d="M701 487q40-3 81 0v20q-40 2-81 0zM701 486v30M582 505v-20"/><path d="M478 534h12"/><path d="M503 540q-2-12 6-12q5 4 1 12q-4 2-7 0M510 517v22q-2 3-6 0"/><path d="M512 534q-4 6 1 8q8 2 8-6q-2-6-9-2M548 533q-8-4-10 4q0 8 10 6"/><path d="M552 545q0-10 4-10q3 3 3 10q0-10 4-10q3 3 3 10M575 537q-4-3-7 2q0 6 6 5q4-3 1-7M578 517v26M592 543l1 1"/><path d="M553 585h30M560 575l8 22M568 580l-8 17M576 578q12-4 15 6q0 12-10 12q-6-2-5-10zM580 582q5-3 7 3q-2 5-6 2M585 588q2 4 5 8"/><path d="M613 574l12 22M627 575l-12 21M605 585h30"/><path d="M548 606q8-8 16-4q20 6 32 2q20 2 30 4q12 2 22-4"/></g></svg>
<div class="a" style="left:452px;top:188px;width:388px;height:22px;background:#3b3b3b"></div>
<svg style="left:458px;top:195px" width="45" height="10"><path d="M3 1h9M3 4.5h9M3 8h9" stroke="#ddd"/><circle cx="1" cy="1" r=".7" fill="#ddd"/><circle cx="1" cy="4.5" r=".7" fill="#ddd"/><circle cx="1" cy="8" r=".7" fill="#ddd"/><path d="M20 0v10" stroke="#555"/><path d="M27 1h7l-1 5h-5zM29 6l1 3l1-3" stroke="#ddd" fill="none"/><path d="M38 4l2 2l2-2" stroke="#aaa" fill="none"/></svg>
<div class="a" style="left:512px;top:189px;width:33px;height:21px;background:#474747;border-bottom:2px solid #5a9ae0"></div>
<svg style="left:514px;top:194px" width="30" height="12"><path d="M1 1h10L6 10z" stroke="#7ab0f0" fill="none" stroke-width="1.2"/><path d="M3 3h6" stroke="#7ab0f0"/><path d="M20 4l2 2l2-2" stroke="#aaa" fill="none"/></svg>
<div class="a" style="left:551px;top:194.0px;font:normal 8px/10px 'Liberation Sans',sans-serif;color:#ddd;;">···</div>
<svg style="left:575px;top:194px" width="52" height="12"><path d="M0 6h6" stroke="#aaa"/><path d="M15 3v6M12 6h6" stroke="#ddd"/><rect x="33" y="2" width="10" height="8" rx="1.5" fill="none" stroke="#ddd"/><path d="M36 6h4" stroke="#ddd"/></svg>
<div class="a" style="left:625px;top:190px;width:1px;height:18px;background:#555"></div>
<div class="a" style="left:628px;top:191px;width:24px;height:18px;background:#2e2e2e;border:1px solid #555;border-radius:2px"></div>
<div class="a" style="left:637px;top:196.0px;font:normal 7px/8px 'Liberation Sans',sans-serif;color:#ddd;;">68</div>
<div class="a kfe9d663848" style="left:656px;top:196.0px;font:normal 7px/8px 'Liberation Sans',sans-serif;color:#ddd;;transform:scaleX(1.2047);transform-origin:0 50%;"><svg class="h"><use href="#g26" width="100%" height="100%"/></svg> 125</div>
<svg style="left:681px;top:193px" width="48" height="14"><path d="M0 1v12" stroke="#555"/><path d="M9 5a4 4 0 1 1 1 6M8 2v4h4" stroke="#ddd" fill="none"/><path d="M19 1v12" stroke="#555"/><rect x="28" y="3" width="10" height="8" rx="1" fill="none" stroke="#ddd"/><path d="M33 3v8" stroke="#ddd"/></svg>
<svg style="left:780px;top:194px" width="60" height="13"><circle cx="5" cy="5" r="4" stroke="#ddd" fill="none"/><path d="M8 8l3 3" stroke="#ddd"/><path d="M17 1v11" stroke="#555"/><rect x="23" y="1.5" width="10" height="10" rx="2" fill="none" stroke="#ddd"/><rect x="25" y="7" width="6" height="4" fill="none" stroke="#ddd" stroke-width=".8"/><circle cx="43" cy="6" r=".8" fill="#ddd"/><circle cx="46" cy="6" r=".8" fill="#ddd"/><circle cx="49" cy="6" r=".8" fill="#ddd"/></svg>
<div class="a" style="left:452px;top:678px;width:388px;height:3px;background:#aaa"></div>
<div class="a" style="left:452px;top:681px;width:388px;height:20px;background:#fff"></div>
<div class="a" style="left:465px;top:686px;width:162px;height:14px;background:#3a7ee8"></div>
<div class="a kcb9a51b642" style="left:472px;top:688.5px;font:bold 7.2px/9px 'Liberation Sans',sans-serif;color:#fff;;transform:scaleX(1.0827);transform-origin:0 50%;">copyrights(c) <svg class="h hb"><use href="#g10" width="100%" height="100%"/></svg><svg class="h hb"><use href="#g34" width="100%" height="100%"/></svg> <svg class="h hb"><use href="#g152" width="100%" height="100%"/></svg><svg class="h hb"><use href="#g35" width="100%" height="100%"/></svg> <svg class="h hb"><use href="#g70" width="100%" height="100%"/></svg><svg class="h hb"><use href="#g153" width="100%" height="100%"/></svg><svg class="h hb"><use href="#g24" width="100%" height="100%"/></svg> <svg class="h hb"><use href="#g154" width="100%" height="100%"/></svg><svg class="h hb"><use href="#g155" width="100%" height="100%"/></svg><svg class="h hb"><use href="#g156" width="100%" height="100%"/></svg><svg class="h hb"><use href="#g23" width="100%" height="100%"/></svg><svg class="h hb"><use href="#g24" width="100%" height="100%"/></svg><svg class="h hb"><use href="#g25" width="100%" height="100%"/></svg></div>
<div class="a" style="left:631px;top:686px;width:30px;height:14px;background:#3a7ee8"></div>
<div class="a k2a35cc9c21" style="left:635px;top:688.5px;font:bold 7.2px/9px 'Liberation Sans',sans-serif;color:#fff;;transform:scaleX(1.3110);transform-origin:0 50%;">- 68 -</div>
<div class="a" style="left:665px;top:686px;width:163px;height:14px;background:#3a7ee8"></div>
<div class="a k5803151f58" style="left:677px;top:688.5px;font:bold 7.2px/9px 'Liberation Sans',sans-serif;color:#fff;;transform:scaleX(1.1015);transform-origin:0 50%;"><svg class="h hb"><use href="#g21" width="100%" height="100%"/></svg><svg class="h hb"><use href="#g26" width="100%" height="100%"/></svg><svg class="h hb"><use href="#g148" width="100%" height="100%"/></svg> addto.co.kr<svg class="h hb"><use href="#g2" width="100%" height="100%"/></svg><svg class="h hb"><use href="#g79" width="100%" height="100%"/></svg> <svg class="h hb"><use href="#g60" width="100%" height="100%"/></svg><svg class="h hb"><use href="#g21" width="100%" height="100%"/></svg> <svg class="h hb"><use href="#g31" width="100%" height="100%"/></svg><svg class="h hb"><use href="#g32" width="100%" height="100%"/></svg><svg class="h hb"><use href="#g157" width="100%" height="100%"/></svg><svg class="h hb"><use href="#g158" width="100%" height="100%"/></svg><svg class="h hb"><use href="#g129" width="100%" height="100%"/></svg>.</div>
<div class="a" style="left:452px;top:701px;width:388px;height:10px;background:#2f2f2f"></div>
<div class="a" style="left:490px;top:703px;width:313px;height:5px;background:#8a8a8a;border-radius:3px"></div>
<svg style="left:456px;top:702px" width="380" height="8"><path d="M4 1L1 4L4 7z" fill="#aaa"/><path d="M372 1L375 4L372 7z" fill="#aaa"/></svg>
<div class="a" style="left:840px;top:199px;width:12px;height:502px;background:#2c2c2c"></div>
<svg style="left:841px;top:190px" width="10" height="520"><path d="M5 6L1 10h8z" fill="#ccc"/><path d="M1 502h8l-4 4z" fill="#aaa"/></svg>
<div class="a" style="left:843px;top:462px;width:4px;height:10px;background:#8a8a8a;border-radius:2px"></div>
<div class="a" style="left:867px;top:0px;width:1038px;height:971px;background:#eef0f3"></div>
<svg style="left:882px;top:0px" width="18" height="13"><path d="M8 0h9v10q0 2-2 2H8z" fill="#9e1b27"/><path d="M0 0h13v8q0 1-1 1H1q-1 0-1-1z" fill="#c8303c"/><text x="2.5" y="8" font-family="Liberation Sans" font-size="8" font-weight="bold" fill="#fff">A</text></svg>
<svg style="left:915px;top:0px" width="17" height="13"><path d="M1.5 -2v12q0 1.5 1.5 1.5h11.5V-2M4.5 -2v4h7v-4M4.5 11.5V7h7v4.5" stroke="#aaa" fill="none" stroke-width="1.1"/></svg>
<svg style="left:944px;top:0px" width="30" height="13"><path d="M3 -1h4M13 -2q3 4-1 8l-5 6" stroke="#aaa" fill="none" stroke-width="1.1"/><path d="M22 2l3 3l3-3" stroke="#aaa" fill="none"/></svg>
<svg style="left:983px;top:0px" width="30" height="13"><path d="M2 -2q-3 4 1 8l5 6M8 -1h4" stroke="#aaa" fill="none" stroke-width="1.1"/><path d="M22 2l3 3l3-3" stroke="#aaa" fill="none"/></svg>
<svg style="left:1025px;top:0px" width="10" height="9"><path d="M1 1h8M2 4l3 3l3-3" stroke="#aaa" fill="none"/></svg>
<div class="a k276ffe3a80" style="left:1050px;top:-3.0px;font:normal 13px/16px 'Liberation Sans',sans-serif;color:#a0a0a0;;transform:scaleX(0.9193);transform-origin:0 50%;">06_3.<svg class="h"><use href="#g66" width="100%" height="100%"/></svg><svg class="h"><use href="#g67" width="100%" height="100%"/></svg><svg class="h"><use href="#g67" width="100%" height="100%"/></svg><svg class="h"><use href="#g66" width="100%" height="100%"/></svg><svg class="h"><use href="#g67" width="100%" height="100%"/></svg>(27) : <svg class="h"><use href="#g51" width="100%" height="100%"/></svg><svg class="h"><use href="#g23" width="100%" height="100%"/></svg><svg class="h"><use href="#g19" width="100%" height="100%"/></svg><svg class="h"><use href="#g52" width="100%" height="100%"/></svg><svg class="h"><use href="#g23" width="100%" height="100%"/></svg><svg class="h"><use href="#g38" width="100%" height="100%"/></svg>- C:₩Users₩samsung₩OneDrive₩Desktop₩PKNU₩<svg class="h"><use href="#g10" width="100%" height="100%"/></svg><svg class="h"><use href="#g34" width="100%" height="100%"/></svg>₩<svg class="h"><use href="#g10" width="100%" height="100%"/></svg><svg class="h"><use href="#g34" width="100%" height="100%"/></svg> 1<svg class="h"><use href="#g35" width="100%" height="100%"/></svg> <svg class="h"><use href="#g46" width="100%" height="100%"/></svg><svg class="h"><use href="#g13" width="100%" height="100%"/></svg>_<svg class="h"><use href="#g159" width="100%" height="100%"/></svg><svg class="h"><use href="#g41" width="100%" height="100%"/></svg>₩06...</div>
<div class="a" style="left:1733px;top:-8px;width:23px;height:23px;background:#7a1624;border-radius:50%"></div>
<div class="a" style="left:1736px;top:-1.5px;font:normal 11px/13px 'Liberation Sans',sans-serif;color:#fff;;">YJ</div>
<div class="a" style="left:1786px;top:3px;width:13px;height:1px;background:#bbb"></div>
<div class="a" style="left:1834px;top:-6px;width:11px;height:11px;border:1px solid #bbb"></div>
<svg style="left:1880px;top:-6px" width="12" height="12"><path d="M0 0L12 12M12 0L0 12" stroke="#bbb"/></svg>
<div class="a keca855847d" style="left:885px;top:34.0px;font:normal 13px/16px 'Liberation Sans',sans-serif;color:#262626;;transform:scaleX(1.1123);transform-origin:0 50%;"><svg class="h"><use href="#g111" width="100%" height="100%"/></svg><svg class="h"><use href="#g33" width="100%" height="100%"/></svg></div>
<div class="a k15f067f2c3" style="left:935px;top:34.0px;font:normal 13px/16px 'Liberation Sans',sans-serif;color:#262626;;transform:scaleX(0.9412);transform-origin:0 50%;"><svg class="h"><use href="#g160" width="100%" height="100%"/></svg></div>
<div class="a k4067ece9b4" style="left:967px;top:34.0px;font:normal 13px/16px 'Liberation Sans',sans-serif;color:#262626;;transform:scaleX(1.0553);transform-origin:0 50%;"><svg class="h"><use href="#g119" width="100%" height="100%"/></svg><svg class="h"><use href="#g161" width="100%" height="100%"/></svg><svg class="h"><use href="#g13" width="100%" height="100%"/></svg></div>
<div class="a kb192a42dcb" style="left:1025px;top:34.0px;font:normal 13px/16px 'Liberation Sans',sans-serif;color:#262626;;transform:scaleX(1.1118);transform-origin:0 50%;"><svg class="h"><use href="#g162" width="100%" height="100%"/></svg><svg class="h"><use href="#g97" width="100%" height="100%"/></svg> <svg class="h"><use href="#g51" width="100%" height="100%"/></svg><svg class="h"><use href="#g23" width="100%" height="100%"/></svg><svg class="h"><use href="#g19" width="100%" height="100%"/></svg></div>
<div class="a k95ed236e4f" style="left:1115px;top:34.0px;font:normal 13px/16px 'Liberation Sans',sans-serif;color:#262626;;transform:scaleX(1.1017);transform-origin:0 50%;"><svg class="h"><use href="#g51" width="100%" height="100%"/></svg><svg class="h"><use href="#g23" width="100%" height="100%"/></svg><svg class="h"><use href="#g19" width="100%" height="100%"/></svg><svg class="h"><use href="#g52" width="100%" height="100%"/></svg><svg class="h"><use href="#g23" width="100%" height="100%"/></svg><svg class="h"><use href="#g38" width="100%" height="100%"/></svg> <svg class="h"><use href="#g70" width="100%" height="100%"/></svg><svg class="h"><use href="#g71" width="100%" height="100%"/></svg></div>
<div class="a k45ee032a90" style="left:1242px;top:34.0px;font:normal 13px/16px 'Liberation Sans',sans-serif;color:#262626;;transform:scaleX(1.0838);transform-origin:0 50%;"><svg class="h"><use href="#g70" width="100%" height="100%"/></svg><svg class="h"><use href="#g72" width="100%" height="100%"/></svg><svg class="h"><use href="#g73" width="100%" height="100%"/></svg></div>
<div class="a kd77290f819" style="left:1299px;top:34.0px;font:bold 13px/16px 'Liberation Sans',sans-serif;color:#a4262c;;transform:scaleX(1.1118);transform-origin:0 50%;"><svg class="h hb"><use href="#g74" width="100%" height="100%"/></svg><svg class="h hb"><use href="#g75" width="100%" height="100%"/></svg> <svg class="h hb"><use href="#g76" width="100%" height="100%"/></svg><svg class="h hb"><use href="#g77" width="100%" height="100%"/></svg><svg class="h hb"><use href="#g16" width="100%" height="100%"/></svg></div>
<div class="a" style="left:1299px;top:52px;width:70px;height:3px;background:#a4262c;border-radius:1px"></div>
<div class="a k8c8b391cf9" style="left:1388px;top:34.0px;font:normal 13px/16px 'Liberation Sans',sans-serif;color:#a4262c;;transform:scaleX(1.1123);transform-origin:0 50%;"><svg class="h"><use href="#g61" width="100%" height="100%"/></svg><svg class="h"><use href="#g78" width="100%" height="100%"/></svg></div>
<div class="a k394d8cf9eb" style="left:1433px;top:34.0px;font:normal 13px/16px 'Liberation Sans',sans-serif;color:#a4262c;;transform:scaleX(1.1123);transform-origin:0 50%;"><svg class="h"><use href="#g79" width="100%" height="100%"/></svg><svg class="h"><use href="#g75" width="100%" height="100%"/></svg></div>
<svg style="left:1494px;top:35px" width="15" height="15"><circle cx="9" cy="6" r="4.5" stroke="#333" fill="none" stroke-width="1.2"/><path d="M5.5 9.5L1 14" stroke="#333" stroke-width="1.4"/></svg>
<div class="a kbc3496ad1b" style="left:1523px;top:34.0px;font:normal 13px/16px 'Liberation Sans',sans-serif;color:#262626;;transform:scaleX(1.1038);transform-origin:0 50%;"><svg class="h"><use href="#g80" width="100%" height="100%"/></svg><svg class="h"><use href="#g81" width="100%" height="100%"/></svg> <svg class="h"><use href="#g82" width="100%" height="100%"/></svg><svg class="h"><use href="#g83" width="100%" height="100%"/></svg><svg class="h"><use href="#g84" width="100%" height="100%"/></svg> <svg class="h"><use href="#g85" width="100%" height="100%"/></svg><svg class="h"><use href="#g44" width="100%" height="100%"/></svg><svg class="h"><use href="#g27" width="100%" height="100%"/></svg><svg class="h"><use href="#g86" width="100%" height="100%"/></svg><svg class="h"><use href="#g87" width="100%" height="100%"/></svg>?</div>
<div class="a" style="left:874px;top:58px;width:1040px;height:101px;background:linear-gradient(180deg,#fff 0,#fff 60%,#f5f6f8 100%);border-radius:8px;box-shadow:0 1px 3px rgba(0,0,0,.15)"></div>
<svg style="left:893px;top:70px" width="30" height="24"><rect x="0.5" y="0.5" width="28" height="22" fill="#fff" stroke="#444"/><path d="M0.5 4h28M5 10h5M5 15h5M12 8h13v4H12zM12 14h13v4H12z" stroke="#444" fill="none"/></svg>
<div class="a" style="left:893px;top:100.0px;font:normal 13px/16px 'Liberation Sans',sans-serif;color:#262626;;"><svg class="h"><use href="#g108" width="100%" height="100%"/></svg><svg class="h"><use href="#g13" width="100%" height="100%"/></svg></div>
<div class="a" style="left:903px;top:117.5px;font:normal 11px/13px 'Liberation Sans',sans-serif;color:#444;;"><svg class="h"><use href="#cd" width="100%" height="100%"/></svg></div>
<div class="a" style="left:893px;top:140.0px;font:normal 13px/16px 'Liberation Sans',sans-serif;color:#262626;;"><svg class="h"><use href="#g108" width="100%" height="100%"/></svg><svg class="h"><use href="#g13" width="100%" height="100%"/></svg></div>
<div class="a" style="left:936px;top:63px;width:1px;height:90px;background:#e1e1e1"></div>
<svg style="left:948px;top:66px" width="16" height="14"><path d="M1 13h14M2 12l4-6l3 3l5-8" stroke="#444" fill="none"/><path d="M3 11h1M6 11h1M9 11h1M12 11h1" stroke="#e33" /></svg>
<div class="a" style="left:968px;top:66.0px;font:normal 12px/14px 'Liberation Sans',sans-serif;color:#262626;;"><svg class="h"><use href="#g163" width="100%" height="100%"/></svg><svg class="h"><use href="#g164" width="100%" height="100%"/></svg></div>
<div class="a" style="left:996px;top:66.0px;font:normal 10px/12px 'Liberation Sans',sans-serif;color:#444;;"><svg class="h"><use href="#cd" width="100%" height="100%"/></svg></div>
<svg style="left:948px;top:92px" width="16" height="15"><rect x="0" y="0" width="8" height="7" fill="#1f4e8c"/><rect x="8" y="0" width="8" height="7" fill="#f1e8dd"/><rect x="0" y="7" width="8" height="8" fill="#4a7fc4"/><rect x="8" y="7" width="8" height="8" fill="#c94f4f"/></svg>
<div class="a" style="left:968px;top:92.0px;font:normal 12px/14px 'Liberation Sans',sans-serif;color:#262626;;"><svg class="h"><use href="#g165" width="100%" height="100%"/></svg></div>
<div class="a" style="left:984px;top:92.0px;font:normal 10px/12px 'Liberation Sans',sans-serif;color:#444;;"><svg class="h"><use href="#cd" width="100%" height="100%"/></svg></div>
<svg style="left:948px;top:117px" width="16" height="10"><rect x="0.5" y="0.5" width="14" height="12" fill="none" stroke="#444"/></svg>
<div class="a" style="left:965px;top:118.0px;font:normal 12px/14px 'Liberation Sans',sans-serif;color:#262626;;"><svg class="h"><use href="#g31" width="100%" height="100%"/></svg> <svg class="h"><use href="#g145" width="100%" height="100%"/></svg><svg class="h"><use href="#g166" width="100%" height="100%"/></svg> <svg class="h"><use href="#cd" width="100%" height="100%"/></svg></div>
<div class="a" style="left:1020px;top:63px;width:1px;height:63px;background:#e1e1e1"></div>
<div class="a" style="left:1031px;top:70px;width:338px;height:60px;border:1px solid #d0d0d0;border-radius:3px;background:#fff"></div>
<div class="a" style="left:1033px;top:80px;width:40px;height:40px;border:1px solid #9a9a9a;background:#f0f0f0"></div>
<svg style="left:1040px;top:86px" width="28" height="30"><path d="M2 1L2 26L8 20L12 28L16 26L12 18L20 18Z" fill="#fff" stroke="#333" stroke-width="1.3" stroke-linejoin="round"/></svg>
<svg style="left:1079px;top:89px" width="30" height="22"><rect x="0.5" y="0.5" width="27" height="19" fill="#fff" stroke="#333"/><path d="M4 7h5v4M10 11h8M20 4v13" stroke="#333" fill="none"/></svg>
<div class="a" style="left:1120px;top:85.5px;font:normal 16px/19px 'Liberation Sans',sans-serif;color:#444;transform:skewX(-14deg);transform-origin:0 100%;"><svg class="h"><use href="#g31" width="100%" height="100%"/></svg><svg class="h"><use href="#g31" width="100%" height="100%"/></svg></div>
<svg style="left:1159px;top:90px" width="30" height="20"><rect x="0.5" y="0.5" width="26" height="16" fill="#fff" stroke="#333"/><path d="M1 17.5h27V2" stroke="#333" stroke-width="2" fill="none"/></svg>
<svg style="left:1200px;top:86px" width="26" height="28"><rect x="0.5" y="0.5" width="20" height="27" fill="#fff" stroke="#333"/><path d="M20.5 2h4v6h-4M24.5 8v12h-4" stroke="#333" fill="none"/></svg>
<svg style="left:1238px;top:91px" width="30" height="20"><ellipse cx="10" cy="8" rx="9" ry="6" fill="none" stroke="#333"/><ellipse cx="19" cy="12" rx="9" ry="6" fill="none" stroke="#333"/></svg>
<svg style="left:1279px;top:86px" width="32" height="32"><circle cx="13" cy="13" r="12" fill="none" stroke="#333"/><ellipse cx="13" cy="13" rx="5" ry="12" fill="none" stroke="#333"/><path d="M1 13h24M3 7h20M3 19h20" stroke="#333" fill="none"/><path d="M20 10l-6 10h5l-3 9l8-12h-5l3-7z" fill="#f0a030" stroke="#e07810" stroke-width=".6"/></svg>
<div class="a" style="left:1319px;top:85.0px;font:normal 10px/12px 'Liberation Sans',sans-serif;color:#333;;"><svg class="h"><use href="#g31" width="100%" height="100%"/></svg><svg class="h"><use href="#g86" width="100%" height="100%"/></svg><svg class="h"><use href="#g129" width="100%" height="100%"/></svg></div>
<svg style="left:1319px;top:96px" width="30" height="20"><path d="M0.5 0v19h27V0" fill="none" stroke="#333"/></svg>
<div class="a" style="left:1354px;top:70px;width:15px;height:22px;border-left:1px solid #d0d0d0"></div>
<div class="a" style="left:1357px;top:74.5px;font:normal 9px/11px 'Liberation Sans',sans-serif;color:#bbb;;"><svg class="h"><use href="#cu" width="100%" height="100%"/></svg></div>
<div class="a" style="left:1354px;top:92px;width:15px;height:22px;border:1px solid #bbb;background:#fff"></div>
<div class="a" style="left:1357px;top:95.0px;font:normal 10px/12px 'Liberation Sans',sans-serif;color:#333;;"><svg class="h"><use href="#cd" width="100%" height="100%"/></svg></div>
<div class="a" style="left:1354px;top:114px;width:15px;height:16px;border:1px solid #bbb;background:#fff"></div>
<div class="a" style="left:1357px;top:114.0px;font:normal 10px/12px 'Liberation Sans',sans-serif;color:#333;;"><svg class="h"><use href="#cm" width="100%" height="100%"/></svg></div>
<svg style="left:1380px;top:69px" width="30" height="24"><rect x="0.5" y="0.5" width="27" height="21" fill="#fff" stroke="#444"/><path d="M0.5 4h27" stroke="#444"/><rect x="5" y="8" width="18" height="11" fill="#a9cbea" stroke="#5b8fc8"/><path d="M5 18l6-6l5 4l3-3l4 5" stroke="#5b8fc8" fill="#8bb5e0"/><circle cx="19" cy="10.5" r="1.4" fill="#f5a623"/></svg>
<div class="a" style="left:1377px;top:100.0px;font:normal 13px/16px 'Liberation Sans',sans-serif;color:#262626;;"><svg class="h"><use href="#g23" width="100%" height="100%"/></svg><svg class="h"><use href="#g24" width="100%" height="100%"/></svg><svg class="h"><use href="#g167" width="100%" height="100%"/></svg></div>
<div class="a" style="left:1377px;top:116.0px;font:normal 13px/16px 'Liberation Sans',sans-serif;color:#262626;;"><svg class="h"><use href="#g168" width="100%" height="100%"/></svg><svg class="h"><use href="#g136" width="100%" height="100%"/></svg> <svg class="h"><use href="#cd" width="100%" height="100%"/></svg></div>
<svg style="left:1432px;top:67px" width="30" height="32"><rect x="0.5" y="12" width="8" height="17" fill="#5aa5e6" stroke="#3a78c0"/><rect x="9" y="1" width="8" height="28" fill="#fff" stroke="#666"/><rect x="17" y="8" width="7" height="21" fill="#bbb" stroke="#888"/><path d="M20 15v14M13 22h14" stroke="#30a050" stroke-width="2"/></svg>
<div class="a" style="left:1420px;top:100.0px;font:normal 13px/16px 'Liberation Sans',sans-serif;color:#262626;;"><svg class="h"><use href="#g169" width="100%" height="100%"/></svg><svg class="h"><use href="#g170" width="100%" height="100%"/></svg> <svg class="h"><use href="#g171" width="100%" height="100%"/></svg><svg class="h"><use href="#g134" width="100%" height="100%"/></svg></div>
<div class="a" style="left:1428px;top:116.0px;font:normal 13px/16px 'Liberation Sans',sans-serif;color:#262626;;"><svg class="h"><use href="#g168" width="100%" height="100%"/></svg><svg class="h"><use href="#g136" width="100%" height="100%"/></svg> <svg class="h"><use href="#cd" width="100%" height="100%"/></svg></div>
<div class="a" style="left:1482px;top:63px;width:1px;height:63px;background:#e1e1e1"></div>
<svg style="left:1496px;top:65px" width="18" height="16"><rect x="0.5" y="0.5" width="12" height="9" fill="#bcd6f0" stroke="#3a6fb0"/><path d="M0 12h16M0 15h16" stroke="#333"/><circle cx="9" cy="3" r="1.3" fill="#f39c12"/></svg>
<div class="a" style="left:1515px;top:65.0px;font:normal 13px/16px 'Liberation Sans',sans-serif;color:#262626;;"><svg class="h"><use href="#g68" width="100%" height="100%"/></svg><svg class="h"><use href="#g88" width="100%" height="100%"/></svg></div>
<svg style="left:1498px;top:91px" width="14" height="17"><path d="M0.5 0.5h8l4 4v12H0.5z" fill="#fff" stroke="#333"/><path d="M2 2h4v3H2z" fill="#f39c12"/></svg>
<div class="a" style="left:1515px;top:92.0px;font:normal 13px/16px 'Liberation Sans',sans-serif;color:#262626;;"><svg class="h"><use href="#g41" width="100%" height="100%"/></svg><svg class="h"><use href="#g59" width="100%" height="100%"/></svg></div>
<svg style="left:1496px;top:119px" width="18" height="10"><rect x="0.5" y="2.5" width="16" height="10" fill="#fff" stroke="#333"/></svg>
<div class="a" style="left:1515px;top:117.0px;font:normal 13px/16px 'Liberation Sans',sans-serif;color:#262626;;"><svg class="h"><use href="#g172" width="100%" height="100%"/></svg><svg class="h"><use href="#g173" width="100%" height="100%"/></svg> <svg class="h"><use href="#g17" width="100%" height="100%"/></svg> <svg class="h"><use href="#g27" width="100%" height="100%"/></svg><svg class="h"><use href="#g28" width="100%" height="100%"/></svg></div>
<div class="a" style="left:1600px;top:63px;width:1px;height:63px;background:#e1e1e1"></div>
<svg style="left:1622px;top:67px" width="30" height="26"><rect x="0.5" y="0.5" width="15" height="24" fill="#fff" stroke="#444"/><path d="M0.5 6h15M0.5 12h15M0.5 18h15M8 0v25" stroke="#444"/><rect x="22" y="0.5" width="7" height="24" fill="#fff" stroke="#444"/><path d="M22 6h7M22 12h7M22 18h7" stroke="#444"/><path d="M20 8l-4 4l4 4z" fill="#40a040"/></svg>
<div class="a" style="left:1623px;top:100.0px;font:normal 13px/16px 'Liberation Sans',sans-serif;color:#262626;;"><svg class="h"><use href="#g13" width="100%" height="100%"/></svg><svg class="h"><use href="#g174" width="100%" height="100%"/></svg></div>
<div class="a" style="left:1613px;top:118.0px;font:normal 13px/16px 'Liberation Sans',sans-serif;color:#262626;;"><svg class="h"><use href="#g18" width="100%" height="100%"/></svg><svg class="h"><use href="#g54" width="100%" height="100%"/></svg> <svg class="h"><use href="#g91" width="100%" height="100%"/></svg><svg class="h"><use href="#g31" width="100%" height="100%"/></svg></div>
<div class="a" style="left:1666px;top:63px;width:42px;height:70px;border:1px solid #b5b5b5;border-radius:4px;background:#e9e9e9"></div>
<svg style="left:1677px;top:67px" width="22" height="30"><rect x="0.5" y="0.5" width="20" height="27" fill="#fff" stroke="#444"/><path d="M4 6h3v3H4zM4 12h3v3H4zM4 18h3v3H4z" fill="none" stroke="#444" stroke-width=".8"/><path d="M10 7.5h7M10 13.5h7M10 19.5h7" stroke="#444"/></svg>
<div class="a" style="left:1672px;top:100.0px;font:normal 13px/16px 'Liberation Sans',sans-serif;color:#262626;;"><svg class="h"><use href="#g20" width="100%" height="100%"/></svg><svg class="h"><use href="#g14" width="100%" height="100%"/></svg></div>
<div class="a" style="left:1672px;top:118.0px;font:normal 13px/16px 'Liberation Sans',sans-serif;color:#262626;;"><svg class="h"><use href="#g27" width="100%" height="100%"/></svg><svg class="h"><use href="#g134" width="100%" height="100%"/></svg></div>
<svg style="left:1718px;top:67px" width="32" height="30"><path d="M0.5 0.5h16M0.5 27h16M0.5 9h10M0.5 15h10v-6M0 19h16" stroke="#444" fill="none"/><path d="M30 2q-8 0-10 6l3-2M30 13q-8 0-10 6l3-2" stroke="#2f8fd8" fill="none" stroke-width="1.4"/></svg>
<div class="a" style="left:1726px;top:100.0px;font:normal 13px/16px 'Liberation Sans',sans-serif;color:#262626;;"><svg class="h"><use href="#g175" width="100%" height="100%"/></svg></div>
<div class="a" style="left:1718px;top:118.0px;font:normal 13px/16px 'Liberation Sans',sans-serif;color:#262626;;"><svg class="h"><use href="#g176" width="100%" height="100%"/></svg><svg class="h"><use href="#g79" width="100%" height="100%"/></svg></div>
<svg style="left:1762px;top:67px" width="30" height="30"><rect x="0.5" y="12" width="8" height="15" fill="#eee" stroke="#bbb"/><rect x="9" y="1" width="8" height="26" fill="#eee" stroke="#bbb"/><rect x="17" y="6" width="7" height="10" fill="#eee" stroke="#bbb"/><circle cx="22" cy="22" r="5" fill="#fff" stroke="#bbb" stroke-width="2"/></svg>
<div class="a" style="left:1762px;top:100.0px;font:normal 13px/16px 'Liberation Sans',sans-serif;color:#aaa;;"><svg class="h"><use href="#g171" width="100%" height="100%"/></svg><svg class="h"><use href="#g134" width="100%" height="100%"/></svg></div>
<div class="a" style="left:1762px;top:118.0px;font:normal 13px/16px 'Liberation Sans',sans-serif;color:#aaa;;"><svg class="h"><use href="#g177" width="100%" height="100%"/></svg><svg class="h"><use href="#g61" width="100%" height="100%"/></svg></div>
<svg style="left:1803px;top:67px" width="16" height="60"><rect x="0.5" y="0.5" width="15" height="14" fill="#fff" stroke="#bbb"/><path d="M3 4h9M3 8h4M9 8h4" stroke="#bbb"/><rect x="0.5" y="26" width="15" height="15" fill="#fff" stroke="#444"/><circle cx="5" cy="37" r="2.5" fill="#e67e22"/><circle cx="11" cy="37" r="2.5" fill="#3498db"/><circle cx="8" cy="31" r="2.5" fill="#9b59b6"/><rect x="0.5" y="52" width="15" height="10" fill="#fff" stroke="#444"/></svg>
<div class="a" style="left:1830px;top:63px;width:1px;height:63px;background:#e1e1e1"></div>
<div class="a" style="left:867px;top:160px;width:71px;height:811px;background:linear-gradient(90deg,#eceef0 0,#f3f4f5 40%,#eeeeee 80%,#dedede 100%)"></div>
<div class="a k1165b2a51e" style="left:876px;top:164.0px;font:normal 22px/26px 'Liberation Sans',sans-serif;color:#262626;;transform:scaleX(1.0478);transform-origin:0 50%;"><svg class="h"><use href="#g178" width="100%" height="100%"/></svg><svg class="h"><use href="#g179" width="100%" height="100%"/></svg> A</div>
<div class="a" style="left:880px;top:200.0px;font:bold 13px/16px 'Liberation Sans',sans-serif;color:#262626;;"><svg class="h hb"><use href="#g163" width="100%" height="100%"/></svg><svg class="h hb"><use href="#g23" width="100%" height="100%"/></svg><svg class="h hb"><use href="#g180" width="100%" height="100%"/></svg></div>
<svg style="left:883px;top:224px" width="16" height="14"><rect x="0.5" y="0.5" width="15" height="12" fill="#fff" stroke="#5b7fb8"/><path d="M0.5 3.5h15M0.5 6.5h15M0.5 9.5h15M5.5 0.5v12M10.5 0.5v12" stroke="#5b7fb8" stroke-width=".8"/><rect x="0.5" y="0.5" width="15" height="3" fill="#5b7fb8"/></svg>
<div class="a" style="left:909px;top:223.0px;font:normal 13px/16px 'Liberation Sans',sans-serif;color:#262626;;"><svg class="h"><use href="#g97" width="100%" height="100%"/></svg><svg class="h"><use href="#g79" width="100%" height="100%"/></svg></div>
<div class="a" style="left:872px;top:245px;width:70px;height:24px;border:1px solid #555;background:#fff"></div>
<svg style="left:883px;top:249px" width="16" height="14"><rect x="0.5" y="0.5" width="15" height="12" fill="#fff" stroke="#5b7fb8"/><path d="M0.5 3.5h15M0.5 6.5h15M0.5 9.5h15M5.5 0.5v12M10.5 0.5v12" stroke="#5b7fb8" stroke-width=".8"/><rect x="0.5" y="0.5" width="15" height="3" fill="#5b7fb8"/></svg>
<div class="a" style="left:909px;top:248.0px;font:normal 13px/16px 'Liberation Sans',sans-serif;color:#262626;;"><svg class="h"><use href="#g22" width="100%" height="100%"/></svg><svg class="h"><use href="#g85" width="100%" height="100%"/></svg><svg class="h"><use href="#g59" width="100%" height="100%"/></svg><svg class="h"><use href="#g107" width="100%" height="100%"/></svg></div>
<svg style="left:883px;top:274px" width="16" height="14"><rect x="0.5" y="0.5" width="15" height="12" fill="#fff" stroke="#5b7fb8"/><path d="M0.5 3.5h15M0.5 6.5h15M0.5 9.5h15M5.5 0.5v12M10.5 0.5v12" stroke="#5b7fb8" stroke-width=".8"/><rect x="0.5" y="0.5" width="15" height="3" fill="#5b7fb8"/></svg>
<div class="a" style="left:909px;top:273.0px;font:normal 13px/16px 'Liberation Sans',sans-serif;color:#262626;;"><svg class="h"><use href="#g47" width="100%" height="100%"/></svg><svg class="h"><use href="#g181" width="100%" height="100%"/></svg><svg class="h"><use href="#g70" width="100%" height="100%"/></svg></div>
<div class="a" style="left:880px;top:295.0px;font:bold 13px/16px 'Liberation Sans',sans-serif;color:#262626;;"><svg class="h hb"><use href="#g182" width="100%" height="100%"/></svg><svg class="h hb"><use href="#g95" width="100%" height="100%"/></svg></div>
<svg style="left:883px;top:319px" width="16" height="14"><rect x="4.5" y="0.5" width="11" height="9" fill="#fff" stroke="#5b7fb8"/><rect x="0.5" y="4.5" width="11" height="9" fill="#fff" stroke="#5b7fb8"/><path d="M0.5 7.5h11M4 4.5v9" stroke="#5b7fb8" stroke-width=".8"/><rect x="0.5" y="4.5" width="11" height="2" fill="#5b7fb8"/></svg>
<div class="a" style="left:909px;top:318.0px;font:normal 13px/16px 'Liberation Sans',sans-serif;color:#262626;;"><svg class="h"><use href="#g97" width="100%" height="100%"/></svg><svg class="h"><use href="#g79" width="100%" height="100%"/></svg><svg class="h"><use href="#g183" width="100%" height="100%"/></svg></div>
<svg style="left:883px;top:344px" width="16" height="14"><rect x="4.5" y="0.5" width="11" height="9" fill="#fff" stroke="#5b7fb8"/><rect x="0.5" y="4.5" width="11" height="9" fill="#fff" stroke="#5b7fb8"/><path d="M0.5 7.5h11M4 4.5v9" stroke="#5b7fb8" stroke-width=".8"/><rect x="0.5" y="4.5" width="11" height="2" fill="#5b7fb8"/></svg>
<div class="a" style="left:909px;top:343.0px;font:normal 13px/16px 'Liberation Sans',sans-serif;color:#262626;;"><svg class="h"><use href="#g22" width="100%" height="100%"/></svg><svg class="h"><use href="#g85" width="100%" height="100%"/></svg><svg class="h"><use href="#g183" width="100%" height="100%"/></svg></div>
<div class="a" style="left:880px;top:365.0px;font:bold 13px/16px 'Liberation Sans',sans-serif;color:#262626;;"><svg class="h hb"><use href="#g123" width="100%" height="100%"/></svg></div>
<svg style="left:883px;top:389px" width="16" height="14"><rect x="0.5" y="0.5" width="15" height="13" fill="#fff" stroke="#5b7fb8"/><rect x="0.5" y="0.5" width="15" height="2.5" fill="#d8547a"/><path d="M3 6h3M3 10h3M8 5h5v3H8zM8 9h5v3H8z" stroke="#444" stroke-width=".8" fill="none"/></svg>
<div class="a" style="left:909px;top:388.0px;font:normal 13px/16px 'Liberation Sans',sans-serif;color:#262626;;"><svg class="h"><use href="#g22" width="100%" height="100%"/></svg><svg class="h"><use href="#g85" width="100%" height="100%"/></svg><svg class="h"><use href="#g94" width="100%" height="100%"/></svg><svg class="h"><use href="#g95" width="100%" height="100%"/></svg></div>
<svg style="left:883px;top:414px" width="16" height="14"><rect x="0.5" y="0.5" width="15" height="13" fill="#fff" stroke="#5b7fb8"/><rect x="0.5" y="0.5" width="15" height="2.5" fill="#d8547a"/><path d="M3 6h3M3 10h3M8 5h5v3H8zM8 9h5v3H8z" stroke="#444" stroke-width=".8" fill="none"/></svg>
<div class="a" style="left:909px;top:413.0px;font:normal 13px/16px 'Liberation Sans',sans-serif;color:#262626;;"><svg class="h"><use href="#g22" width="100%" height="100%"/></svg><svg class="h"><use href="#g85" width="100%" height="100%"/></svg><svg class="h"><use href="#g59" width="100%" height="100%"/></svg><svg class="h"><use href="#g107" width="100%" height="100%"/></svg></div>
<svg style="left:883px;top:439px" width="16" height="14"><rect x="0.5" y="0.5" width="15" height="13" fill="#fff" stroke="#5b7fb8"/><rect x="0.5" y="0.5" width="15" height="2.5" fill="#d8547a"/><path d="M3 6h3M3 10h3M8 5h5v3H8zM8 9h5v3H8z" stroke="#444" stroke-width=".8" fill="none"/></svg>
<div class="a" style="left:909px;top:438.0px;font:normal 13px/16px 'Liberation Sans',sans-serif;color:#262626;;"><svg class="h"><use href="#g100" width="100%" height="100%"/></svg><svg class="h"><use href="#g101" width="100%" height="100%"/></svg><svg class="h"><use href="#g102" width="100%" height="100%"/></svg><svg class="h"><use href="#g0" width="100%" height="100%"/></svg><svg class="h"><use href="#g103" width="100%" height="100%"/></svg></div>
<div class="a" style="left:867px;top:930px;width:71px;height:22px;background:#f4f4f4;border-top:1px solid #e2e2e2;border-left:1px solid #888;border-bottom:1px solid #aaa;border-radius:0 0 0 7px;box-shadow:0 1px 3px rgba(0,0,0,.2)"></div>
<div class="a" style="left:867px;top:958px;width:71px;height:1px;background:#ddd"></div>
<div class="a" style="left:878px;top:932.0px;font:normal 13px/16px 'Liberation Sans',sans-serif;color:#444;;"><svg class="h"><use href="#g133" width="100%" height="100%"/></svg><svg class="h"><use href="#g134" width="100%" height="100%"/></svg><svg class="h"><use href="#g135" width="100%" height="100%"/></svg><svg class="h"><use href="#g84" width="100%" height="100%"/></svg> <svg class="h"><use href="#g184" width="100%" height="100%"/></svg><svg class="h"><use href="#g185" width="100%" height="100%"/></svg><svg class="h"><use href="#g37" width="100%" height="100%"/></svg><svg class="h"><use href="#g87" width="100%" height="100%"/></svg></div>
<div class="a" style="left:1895px;top:160px;width:10px;height:811px;background:#ececec"></div>
<svg style="left:1897px;top:165px" width="10" height="11"><path d="M0 0L10 10M10 0L0 10" stroke="#333"/></svg>
<div class="a" style="left:1895px;top:183px;width:10px;height:1px;background:#ccc"></div>
<svg style="left:1898px;top:188px" width="8" height="8"><path d="M4 1L8 7H0z" fill="#666"/></svg>
<div class="a" style="left:1899px;top:200px;width:6px;height:707px;background:#6a6a6a;border-radius:3px 0 0 3px"></div>
<svg style="left:1897px;top:902px" width="8" height="8"><path d="M0 1H8L4 7z" fill="#555"/></svg>
<div class="a" style="left:1895px;top:913px;width:10px;height:17px;background:#aaa"></div>
<div class="a" style="left:1895px;top:930px;width:10px;height:22px;background:#ddd"></div>
<div class="a" style="left:1895px;top:952px;width:10px;height:19px;background:#ccc;border-top:1px solid #999"></div>
<div class="a" style="left:938px;top:126px;width:957px;height:845px;background:#fafafa;border-radius:8px 8px 0 0;box-shadow:0 0 7px rgba(0,0,0,.3);border:1px solid #c8c8c8"></div>
<div class="a" style="left:939px;top:127px;width:955px;height:29px;background:#eef3f8;border-radius:8px 8px 0 0"></div>
<svg style="left:946px;top:132px" width="17" height="17"><rect x="2" y="4" width="14" height="12" fill="#fff" stroke="#222"/><rect x="2" y="4" width="14" height="3" fill="#36c6e8"/><path d="M4 10h1M7 10h1M10 10h1M13 10h1M4 13h1M7 13h1M10 13h1" stroke="#999"/><ellipse cx="7" cy="3" rx="3" ry="2" fill="#e02020"/><ellipse cx="3" cy="8" rx="3" ry="1.6" fill="#e8d020" stroke="#555" stroke-width=".5"/></svg>
<div class="a k13507872bf" style="left:967px;top:133.0px;font:normal 13px/16px 'Liberation Sans',sans-serif;color:#111;;transform:scaleX(0.9452);transform-origin:0 50%;">Microsoft Visual Basic for Applications - 06_3.<svg class="h"><use href="#g66" width="100%" height="100%"/></svg><svg class="h"><use href="#g67" width="100%" height="100%"/></svg><svg class="h"><use href="#g67" width="100%" height="100%"/></svg><svg class="h"><use href="#g66" width="100%" height="100%"/></svg><svg class="h"><use href="#g67" width="100%" height="100%"/></svg>(27) [<svg class="h"><use href="#g64" width="100%" height="100%"/></svg><svg class="h"><use href="#g89" width="100%" height="100%"/></svg>] - [Form_<svg class="h"><use href="#g100" width="100%" height="100%"/></svg><svg class="h"><use href="#g101" width="100%" height="100%"/></svg><svg class="h"><use href="#g102" width="100%" height="100%"/></svg><svg class="h"><use href="#g0" width="100%" height="100%"/></svg><svg class="h"><use href="#g103" width="100%" height="100%"/></svg> (<svg class="h"><use href="#g96" width="100%" height="100%"/></svg><svg class="h"><use href="#g54" width="100%" height="100%"/></svg>)]</div>
<div class="a" style="left:1773px;top:140px;width:13px;height:1px;background:#222"></div>
<div class="a" style="left:1820px;top:134px;width:12px;height:12px;border:1px solid #222"></div>
<svg style="left:1866px;top:134px" width="12" height="12"><path d="M0.5 0.5L11.5 11.5M11.5 0.5L0.5 11.5" stroke="#222" stroke-width="1.1"/></svg>
<svg style="left:944px;top:159px" width="3" height="16"><path d="M1.5 1v14" stroke="#bbb" stroke-dasharray="2 2"/></svg>
<svg style="left:951px;top:158px" width="18" height="17"><path d="M3 7l6-4l6 4v6l-6 3l-6-3z" fill="#aaa" stroke="#444" stroke-width=".7"/><path d="M8 2l3-2l2 4l-3 2z" fill="#c040c0"/><path d="M1 13l3-2l2 3l-3 2zM13 13l3-2l1 3l-3 2z" fill="#30c0e0"/><path d="M12 14l3 1" stroke="#e0d000" stroke-width="2"/></svg>
<div class="a kc408554782" style="left:975px;top:158.0px;font:normal 13px/16px 'Liberation Sans',sans-serif;color:#111;;transform:scaleX(0.9996);transform-origin:0 50%;"><svg class="h"><use href="#g111" width="100%" height="100%"/></svg><svg class="h"><use href="#g33" width="100%" height="100%"/></svg>(<u>F</u>)</div>
<div class="a k1d9221a53e" style="left:1032px;top:158.0px;font:normal 13px/16px 'Liberation Sans',sans-serif;color:#111;;transform:scaleX(1.0065);transform-origin:0 50%;"><svg class="h"><use href="#g186" width="100%" height="100%"/></svg><svg class="h"><use href="#g187" width="100%" height="100%"/></svg>(<u>E</u>)</div>
<div class="a ke4b3eeb460" style="left:1090px;top:158.0px;font:normal 13px/16px 'Liberation Sans',sans-serif;color:#111;;transform:scaleX(1.0065);transform-origin:0 50%;"><svg class="h"><use href="#g108" width="100%" height="100%"/></svg><svg class="h"><use href="#g13" width="100%" height="100%"/></svg>(<u>V</u>)</div>
<div class="a k49131673c7" style="left:1148px;top:158.0px;font:normal 13px/16px 'Liberation Sans',sans-serif;color:#111;;transform:scaleX(1.0088);transform-origin:0 50%;"><svg class="h"><use href="#g168" width="100%" height="100%"/></svg><svg class="h"><use href="#g136" width="100%" height="100%"/></svg>(<u>I</u>)</div>
<div class="a k0eba13b1e0" style="left:1201px;top:158.0px;font:normal 13px/16px 'Liberation Sans',sans-serif;color:#111;;transform:scaleX(0.9974);transform-origin:0 50%;"><svg class="h"><use href="#g76" width="100%" height="100%"/></svg><svg class="h"><use href="#g124" width="100%" height="100%"/></svg><svg class="h"><use href="#g69" width="100%" height="100%"/></svg>(<u>D</u>)</div>
<div class="a k2c92d75609" style="left:1271px;top:158.0px;font:normal 13px/16px 'Liberation Sans',sans-serif;color:#111;;transform:scaleX(1.0132);transform-origin:0 50%;"><svg class="h"><use href="#g46" width="100%" height="100%"/></svg><svg class="h"><use href="#g90" width="100%" height="100%"/></svg>(<u>R</u>)</div>
<div class="a k575b3c8de5" style="left:1330px;top:158.0px;font:normal 13px/16px 'Liberation Sans',sans-serif;color:#111;;transform:scaleX(1.0246);transform-origin:0 50%;"><svg class="h"><use href="#g70" width="100%" height="100%"/></svg><svg class="h"><use href="#g71" width="100%" height="100%"/></svg>(<u>T</u>)</div>
<div class="a k361594c06a" style="left:1387px;top:158.0px;font:normal 13px/16px 'Liberation Sans',sans-serif;color:#111;;transform:scaleX(1.0187);transform-origin:0 50%;"><svg class="h"><use href="#g91" width="100%" height="100%"/></svg><svg class="h"><use href="#g31" width="100%" height="100%"/></svg> <svg class="h"><use href="#g13" width="100%" height="100%"/></svg><svg class="h"><use href="#g32" width="100%" height="100%"/></svg>(<u>A</u>)</div>
<div class="a kb19145b8ea" style="left:1473px;top:158.0px;font:normal 13px/16px 'Liberation Sans',sans-serif;color:#111;;transform:scaleX(0.9493);transform-origin:0 50%;"><svg class="h"><use href="#g92" width="100%" height="100%"/></svg>(<u>W</u>)</div>
<div class="a k464e13a7f4" style="left:1521px;top:158.0px;font:normal 13px/16px 'Liberation Sans',sans-serif;color:#111;;transform:scaleX(0.9974);transform-origin:0 50%;"><svg class="h"><use href="#g70" width="100%" height="100%"/></svg><svg class="h"><use href="#g72" width="100%" height="100%"/></svg><svg class="h"><use href="#g73" width="100%" height="100%"/></svg>(<u>H</u>)</div>
<div class="a" style="left:1841px;top:167px;width:7px;height:3px;background:#111"></div>
<svg style="left:1860px;top:161px" width="10" height="10"><rect x="0.5" y="3.5" width="6" height="6" fill="#fff" stroke="#111"/><path d="M3 3V0.5h6.5V7H7" fill="none" stroke="#111"/></svg>
<svg style="left:1880px;top:162px" width="9" height="9"><path d="M0.5 0.5L8.5 8.5M8.5 0.5L0.5 8.5" stroke="#111" stroke-width="1.6"/></svg>
<svg style="left:944px;top:183px" width="3" height="18"><path d="M1.5 1v16" stroke="#bbb" stroke-dasharray="2 2"/></svg>
<svg style="left:950px;top:183px" width="17" height="17"><rect x="0.5" y="0.5" width="16" height="16" fill="#fff" stroke="#8b0000" stroke-width="1.4"/><circle cx="11" cy="5.5" r="2.6" fill="none" stroke="#8b0000" stroke-width="1.5"/><path d="M9.5 7.5L3 14M5 11l2 2" stroke="#8b0000" stroke-width="1.5"/></svg>
<svg style="left:974px;top:183px" width="17" height="17"><rect x="0.5" y="0.5" width="16" height="16" fill="#fff" stroke="#222"/><rect x="3" y="3" width="4" height="4" fill="#c8861a"/><rect x="10" y="3" width="4" height="4" fill="#c8861a"/><rect x="3" y="9" width="11" height="5" fill="#c8861a"/></svg>
<svg style="left:994px;top:189px" width="7" height="5"><path d="M0 0h7L3.5 4z" fill="#222"/></svg>
<svg style="left:1007px;top:183px" width="16" height="16"><rect x="0.5" y="0.5" width="15" height="15" fill="#4a52c0" stroke="#2a2a80"/><rect x="3" y="1" width="10" height="6" fill="#e8e8f8"/><rect x="4" y="10" width="7" height="5" fill="#222"/></svg>
<div class="a" style="left:1030px;top:184px;width:1px;height:16px;background:#ccc"></div>
<svg style="left:1039px;top:185px" width="12" height="15"><path d="M3 0l5 9M9 0L4 9" stroke="#bbb" stroke-width="1.3"/><circle cx="3" cy="11.5" r="2.3" fill="none" stroke="#bbb" stroke-width="1.2"/><circle cx="9" cy="11.5" r="2.3" fill="none" stroke="#bbb" stroke-width="1.2"/></svg>
<svg style="left:1059px;top:186px" width="16" height="14"><path d="M0.5 0.5h7l2 2v8H0.5z" fill="#f4f4f4" stroke="#bbb"/><path d="M5.5 3.5h7l2 2v8H5.5z" fill="#f4f4f4" stroke="#bbb"/><path d="M7 7h5M7 9h5M7 11h5" stroke="#ccc"/></svg>
<svg style="left:1082px;top:185px" width="17" height="15"><rect x="0.5" y="2.5" width="11" height="12" fill="#e8e8e8" stroke="#bbb"/><rect x="3" y="0.5" width="6" height="3" fill="#ddd" stroke="#bbb"/><path d="M6.5 6.5h8v8h-8z" fill="#f8f8f8" stroke="#bbb"/></svg>
<svg style="left:1105px;top:185px" width="17" height="15"><path d="M1 8l2-7h3v6M16 8l-2-7h-3v6" fill="#3a5aa8" stroke="#1a2a70" stroke-width=".8"/><rect x="0.5" y="7.5" width="6" height="7" fill="#3a5aa8" stroke="#1a2a70"/><rect x="10.5" y="7.5" width="6" height="7" fill="#3a5aa8" stroke="#1a2a70"/><rect x="6" y="5" width="5" height="4" fill="#1a2a70"/><path d="M2 9h3M12 9h3" stroke="#aac"/></svg>
<div class="a" style="left:1127px;top:184px;width:1px;height:16px;background:#ccc"></div>
<svg style="left:1135px;top:184px" width="14" height="15"><path d="M3 4q7-3 9 4q0 5-5 6" stroke="#2a5ab8" stroke-width="2.2" fill="none"/><path d="M0 1l1 7l6-3z" fill="#2a5ab8"/></svg>
<svg style="left:1157px;top:184px" width="14" height="15"><path d="M11 4q-7-3-9 4q0 5 5 6" stroke="#bbb" stroke-width="2.2" fill="none"/><path d="M14 1l-1 7l-6-3z" fill="#bbb"/></svg>
<div class="a" style="left:1180px;top:184px;width:1px;height:16px;background:#ccc"></div>
<svg style="left:1190px;top:186px" width="10" height="12"><path d="M1 1l8 5l-8 5z" fill="#18a020"/></svg>
<div class="a" style="left:1213px;top:188px;width:2px;height:8px;background:#2a50c0"></div>
<div class="a" style="left:1218px;top:188px;width:2px;height:8px;background:#2a50c0"></div>
<div class="a" style="left:1236px;top:187px;width:9px;height:9px;background:#2a50c0"></div>
<svg style="left:1254px;top:181px" width="20" height="19"><path d="M1 17h18M1 17V4l15 13" fill="#f0e080" stroke="#c08000"/><path d="M4 13l12-12l3 3l-12 12z" fill="#f4a040" stroke="#804000" stroke-width=".6"/><path d="M2 18h17" stroke="#2050c0" stroke-width="2"/></svg>
<div class="a" style="left:1281px;top:184px;width:1px;height:16px;background:#ccc"></div>
<svg style="left:1284px;top:183px" width="18" height="17"><path d="M2 5l6 6l8-4M2 10l6 5l8-4" stroke="#3050a0" stroke-width="2" fill="none"/><path d="M13 1l3 4M14 13l3 3" stroke="#e03030" stroke-width="1.5"/><path d="M2 3l4 1" stroke="#40a0e0" stroke-width="2"/></svg>
<svg style="left:1307px;top:183px" width="18" height="17"><rect x="1" y="6" width="12" height="10" fill="#fff" stroke="#3a6ea0"/><path d="M2 9h8M2 12h8" stroke="#3a6ea0"/><path d="M5 6l8-5l4 4" fill="#e0c040" stroke="#806000"/></svg>
<svg style="left:1330px;top:182px" width="18" height="18"><rect x="2" y="8" width="13" height="9" fill="#f0c850" stroke="#a07000"/><path d="M2 8l3-3h7l3 3" fill="#f8e090" stroke="#a07000"/><rect x="2" y="1" width="3" height="3" fill="#3a9ad8"/><rect x="13" y="0" width="3" height="3" fill="#e03030"/><rect x="8" y="3" width="2" height="2" fill="#40b040"/></svg>
<div class="a" style="left:1355px;top:183.5px;font:normal 14px/17px 'Liberation Sans',sans-serif;color:#bbb;;"><svg class="h"><use href="#ct" width="100%" height="100%"/></svg></div>
<div class="a" style="left:1378px;top:184px;width:1px;height:16px;background:#ccc"></div>
<svg style="left:1382px;top:183px" width="18" height="18"><circle cx="9" cy="9" r="8.5" fill="#2e6fd0"/><circle cx="9" cy="9" r="7.5" fill="#4a8ae8"/><text x="5" y="14" font-family="Liberation Sans" font-weight="bold" font-size="12" fill="#fff">?</text></svg>
<div class="a" style="left:1404px;top:184px;width:1px;height:16px;background:#ccc"></div>
<div class="a" style="left:1408px;top:182px;width:192px;height:21px;background:#ececec"></div>
<div class="a k36565a6388" style="left:1413px;top:184.0px;font:normal 13px/16px 'Liberation Sans',sans-serif;color:#111;;transform:scaleX(0.9575);transform-origin:0 50%;">43 <svg class="h"><use href="#g90" width="100%" height="100%"/></svg>, 1 <svg class="h"><use href="#g93" width="100%" height="100%"/></svg></div>
<div class="a" style="left:1600px;top:180px;width:11px;height:26px;background:linear-gradient(90deg,#ddd,#c8c8c8);border-radius:0 3px 3px 0"></div>
<svg style="left:1601px;top:195px" width="8" height="8"><path d="M1 1h6M1 3.5h6L4 7z" stroke="#222" fill="#222" stroke-width=".8"/></svg>
<div class="a" style="left:938px;top:205px;width:957px;height:2px;background:#9a9a9a"></div>
<div class="a" style="left:938px;top:207px;width:276px;height:284px;background:#f0f0f0"></div>
<div class="a" style="left:938px;top:206px;width:274px;height:21px;background:#bfcddc"></div>
<div class="a ka97d9616f2" style="left:940px;top:204.0px;font:normal 13px/16px 'Liberation Sans',sans-serif;color:#111;;transform:scaleX(0.9175);transform-origin:0 50%;"><svg class="h"><use href="#g141" width="100%" height="100%"/></svg><svg class="h"><use href="#g68" width="100%" height="100%"/></svg><svg class="h"><use href="#g188" width="100%" height="100%"/></svg><svg class="h"><use href="#g134" width="100%" height="100%"/></svg> - Part5</div>
<div class="a" style="left:1190px;top:207px;width:21px;height:20px;background:#f0f0f0;border:1px solid #888;border-right-color:#444;border-bottom-color:#444"></div>
<svg style="left:1195px;top:211px" width="12" height="12"><path d="M1 1L11 11M11 1L1 11" stroke="#000" stroke-width="2"/></svg>
<div class="a" style="left:940px;top:229px;width:270px;height:27px;background:#f7f7f7"></div>
<svg style="left:946px;top:235px" width="18" height="14"><rect x="0.5" y="0.5" width="15" height="12" fill="#fff" stroke="#3a6ea0"/><rect x="0.5" y="0.5" width="15" height="2" fill="#3a6ea0"/><path d="M3 5h4M9 5h4M3 8h4M9 8h4" stroke="#e06060"/></svg>
<svg style="left:968px;top:235px" width="18" height="14"><rect x="0.5" y="0.5" width="15" height="12" fill="#fff" stroke="#3a6ea0"/><rect x="0.5" y="0.5" width="15" height="2" fill="#3a6ea0"/><path d="M3 5h3M3 9h3M8 4h5v3H8zM8 8h5v3H8z" stroke="#333" stroke-width=".8" fill="none"/></svg>
<div class="a" style="left:989px;top:235px;width:1px;height:14px;background:#bbb"></div>
<div class="a" style="left:994px;top:230px;width:25px;height:23px;border:1px solid #3d7ed8;background:#dfe9f7"></div>
<svg style="left:998px;top:235px" width="18" height="14"><path d="M1 2h6l2 2h8v9H1z" fill="#f0c24a" stroke="#b08020" stroke-width=".7"/></svg>
<div class="a" style="left:1200px;top:229px;width:11px;height:26px;background:linear-gradient(90deg,#d8d8d8,#c0c0c0)"></div>
<svg style="left:1202px;top:244px" width="8" height="8"><path d="M1 1h6M1 3.5h6L4 7z" stroke="#222" fill="#222" stroke-width=".8"/></svg>
<div class="a" style="left:940px;top:257px;width:270px;height:232px;background:#fff;border:1px solid #a0a0a0;border-right-color:#ddd;border-bottom-color:#ddd"></div>
<svg style="left:946px;top:258px" width="80" height="80"><rect x="0.5" y="3.5" width="8" height="8" fill="#fff" stroke="#999"/><path d="M2 7.5h5" stroke="#333"/><path d="M9 7.5h6" stroke="#999" stroke-dasharray="1 1"/><rect x="19.5" y="19.5" width="8" height="8" fill="#fff" stroke="#999"/><path d="M21 23.5h5" stroke="#333"/><path d="M24 12v7M28 23.5h4" stroke="#999" stroke-dasharray="1 1"/><path d="M42 29v42M42 39.5h12M42 55.5h12M42 71.5h12" stroke="#999" stroke-dasharray="1 1"/></svg>
<svg style="left:961px;top:258px" width="17" height="16"><path d="M2 9l6-4l6 4l-6 4z" fill="#d0d0d0" stroke="#222" stroke-width=".8"/><path d="M8 3l3-3l3 3l-3 3z" fill="#40a040"/><path d="M1 12l5 2M9 14l6-2" stroke="#222" stroke-width="1.2"/></svg>
<div class="a k21fcc16ede" style="left:983px;top:257.0px;font:bold 13px/16px 'Liberation Sans',sans-serif;color:#000;;transform:scaleX(1.0951);transform-origin:0 50%;">Part5 (06_3.<svg class="h hb"><use href="#g66" width="100%" height="100%"/></svg><svg class="h hb"><use href="#g67" width="100%" height="100%"/></svg><svg class="h hb"><use href="#g67" width="100%" height="100%"/></svg><svg class="h hb"><use href="#g66" width="100%" height="100%"/></svg><svg class="h hb"><use href="#g67" width="100%" height="100%"/></svg>(27))</div>
<svg style="left:983px;top:275px" width="17" height="13"><path d="M1 3h5l1 1h8v8H1z" fill="#e8d060" stroke="#807020" stroke-width=".7"/><path d="M3 6h13l-2 6H1z" fill="#f8e890" stroke="#807020" stroke-width=".7"/></svg>
<div class="a k327e9fc9c1" style="left:1002px;top:273.0px;font:normal 13px/16px 'Liberation Sans',sans-serif;color:#000;;transform:scaleX(1.0171);transform-origin:0 50%;">Microsoft Access <svg class="h"><use href="#g126" width="100%" height="100%"/></svg><svg class="h"><use href="#g189" width="100%" height="100%"/></svg><svg class="h"><use href="#g38" width="100%" height="100%"/></svg> <svg class="h"><use href="#g15" width="100%" height="100%"/></svg><svg class="h"><use href="#g190" width="100%" height="100%"/></svg></div>
<svg style="left:1001px;top:291px" width="14" height="12"><rect x="0.5" y="0.5" width="13" height="11" fill="#fff" stroke="#222"/><rect x="0.5" y="0.5" width="13" height="2" fill="#222"/><path d="M2 5h3M2 8.5h3M7 4h5v3H7zM7 7.5h5v3H7z" stroke="#222" stroke-width=".8" fill="none"/></svg>
<div class="a k85b99dc2fb" style="left:1020px;top:289.0px;font:normal 13px/16px 'Liberation Sans',sans-serif;color:#000;;transform:scaleX(0.9844);transform-origin:0 50%;">Form_<svg class="h"><use href="#g22" width="100%" height="100%"/></svg><svg class="h"><use href="#g85" width="100%" height="100%"/></svg><svg class="h"><use href="#g94" width="100%" height="100%"/></svg><svg class="h"><use href="#g95" width="100%" height="100%"/></svg></div>
<svg style="left:1001px;top:307px" width="14" height="12"><rect x="0.5" y="0.5" width="13" height="11" fill="#fff" stroke="#222"/><rect x="0.5" y="0.5" width="13" height="2" fill="#222"/><path d="M2 5h3M2 8.5h3M7 4h5v3H7zM7 7.5h5v3H7z" stroke="#222" stroke-width=".8" fill="none"/></svg>
<div class="a k05e942f999" style="left:1020px;top:305.0px;font:normal 13px/16px 'Liberation Sans',sans-serif;color:#000;;transform:scaleX(0.9844);transform-origin:0 50%;">Form_<svg class="h"><use href="#g22" width="100%" height="100%"/></svg><svg class="h"><use href="#g85" width="100%" height="100%"/></svg><svg class="h"><use href="#g59" width="100%" height="100%"/></svg><svg class="h"><use href="#g107" width="100%" height="100%"/></svg></div>
<svg style="left:1001px;top:323px" width="14" height="12"><rect x="0.5" y="0.5" width="13" height="11" fill="#fff" stroke="#222"/><rect x="0.5" y="0.5" width="13" height="2" fill="#222"/><path d="M2 5h3M2 8.5h3M7 4h5v3H7zM7 7.5h5v3H7z" stroke="#222" stroke-width=".8" fill="none"/></svg>
<div class="a" style="left:1017px;top:321px;width:102px;height:16px;background:#ededed"></div>
<div class="a k0454cff719" style="left:1020px;top:321.0px;font:normal 13px/16px 'Liberation Sans',sans-serif;color:#000;;transform:scaleX(0.9896);transform-origin:0 50%;">Form_<svg class="h"><use href="#g100" width="100%" height="100%"/></svg><svg class="h"><use href="#g101" width="100%" height="100%"/></svg><svg class="h"><use href="#g102" width="100%" height="100%"/></svg><svg class="h"><use href="#g0" width="100%" height="100%"/></svg><svg class="h"><use href="#g103" width="100%" height="100%"/></svg></div>
<div class="a" style="left:938px;top:491px;width:276px;height:480px;background:#f0f0f0"></div>
<div class="a" style="left:938px;top:496px;width:274px;height:21px;background:#bfcddc"></div>
<div class="a k2f75ec97d6" style="left:940px;top:495.0px;font:normal 13px/16px 'Liberation Sans',sans-serif;color:#111;;transform:scaleX(0.9322);transform-origin:0 50%;"><svg class="h"><use href="#g20" width="100%" height="100%"/></svg><svg class="h"><use href="#g14" width="100%" height="100%"/></svg> - cmd<svg class="h"><use href="#g0" width="100%" height="100%"/></svg><svg class="h"><use href="#g103" width="100%" height="100%"/></svg>5</div>
<div class="a" style="left:1190px;top:497px;width:21px;height:20px;background:#f0f0f0;border:1px solid #888;border-right-color:#444;border-bottom-color:#444"></div>
<svg style="left:1195px;top:501px" width="12" height="12"><path d="M1 1L11 11M11 1L1 11" stroke="#000" stroke-width="2"/></svg>
<div class="a" style="left:939px;top:522px;width:270px;height:19px;background:#fff;border:1px solid #bbb"></div>
<div class="a k7d622b4637" style="left:942px;top:523.0px;font:normal 13px/16px 'Liberation Sans',sans-serif;color:#000;;transform:scaleX(1.0157);transform-origin:0 50%;"><b>cmd<svg class="h hb"><use href="#g0" width="100%" height="100%"/></svg><svg class="h hb"><use href="#g103" width="100%" height="100%"/></svg>5</b> CommandButton</div>
<svg style="left:1194px;top:529px" width="10" height="6"><path d="M0.5 0.5L5 5L9.5 0.5" stroke="#333" fill="none"/></svg>
<div class="a" style="left:941px;top:543px;width:48px;height:22px;background:#f0f0f0;border-top:1px solid #fff;border-left:1px solid #fff"></div>
<div class="a k012a1f57f8" style="left:947px;top:544.0px;font:normal 13px/16px 'Liberation Sans',sans-serif;color:#000;;transform:scaleX(1.0267);transform-origin:0 50%;"><svg class="h"><use href="#g22" width="100%" height="100%"/></svg><svg class="h"><use href="#g47" width="100%" height="100%"/></svg><svg class="h"><use href="#g176" width="100%" height="100%"/></svg></div>
<div class="a" style="left:989px;top:545px;width:44px;height:19px;background:#e8e8e8;border:1px solid #e0e0e0"></div>
<div class="a kf48326bb7f" style="left:993px;top:545.0px;font:normal 13px/16px 'Liberation Sans',sans-serif;color:#000;;transform:scaleX(1.0553);transform-origin:0 50%;"><svg class="h"><use href="#g191" width="100%" height="100%"/></svg><svg class="h"><use href="#g59" width="100%" height="100%"/></svg><svg class="h"><use href="#g183" width="100%" height="100%"/></svg></div>
<div class="a" style="left:942px;top:564px;width:266px;height:403px;background:#f0f0f0;border:1px solid #999;border-right-color:#fff;border-bottom-color:#fff"></div>
<div class="a" style="left:944px;top:566px;width:247px;height:399px;background:#fff;overflow:hidden"></div>
<div class="a" style="left:944px;top:580px;width:247px;height:1px;background:#c8c8c8"></div>
<div class="a" style="left:946px;top:566.0px;font:normal 12.5px/15px 'Liberation Sans',sans-serif;color:#000;;">(<svg class="h"><use href="#g23" width="100%" height="100%"/></svg><svg class="h"><use href="#g106" width="100%" height="100%"/></svg>)</div>
<div class="a" style="left:1072px;top:566.0px;font:normal 12.5px/15px 'Liberation Sans',sans-serif;color:#000;;">cmd<svg class="h"><use href="#g0" width="100%" height="100%"/></svg><svg class="h"><use href="#g103" width="100%" height="100%"/></svg>5</div>
<div class="a" style="left:944px;top:595px;width:247px;height:1px;background:#c8c8c8"></div>
<div class="a" style="left:946px;top:581.0px;font:normal 12.5px/15px 'Liberation Sans',sans-serif;color:#000;;">Alignment</div>
<div class="a" style="left:1072px;top:581.0px;font:normal 12.5px/15px 'Liberation Sans',sans-serif;color:#000;;">2</div>
<div class="a" style="left:944px;top:610px;width:247px;height:1px;background:#c8c8c8"></div>
<div class="a" style="left:946px;top:596.0px;font:normal 12.5px/15px 'Liberation Sans',sans-serif;color:#000;;">AutoRepeat</div>
<div class="a" style="left:1072px;top:596.0px;font:normal 12.5px/15px 'Liberation Sans',sans-serif;color:#000;;">False</div>
<div class="a" style="left:944px;top:625px;width:247px;height:1px;background:#c8c8c8"></div>
<div class="a" style="left:946px;top:611.0px;font:normal 12.5px/15px 'Liberation Sans',sans-serif;color:#000;;">BackColor</div>
<div class="a" style="left:1072px;top:611.0px;font:normal 12.5px/15px 'Liberation Sans',sans-serif;color:#000;;">16777215</div>
<div class="a" style="left:944px;top:640px;width:247px;height:1px;background:#c8c8c8"></div>
<div class="a" style="left:946px;top:626.0px;font:normal 12.5px/15px 'Liberation Sans',sans-serif;color:#000;;">BackShade</div>
<div class="a" style="left:1072px;top:626.0px;font:normal 12.5px/15px 'Liberation Sans',sans-serif;color:#000;;">100</div>
<div class="a" style="left:944px;top:655px;width:247px;height:1px;background:#c8c8c8"></div>
<div class="a" style="left:946px;top:641.0px;font:normal 12.5px/15px 'Liberation Sans',sans-serif;color:#000;;">BackStyle</div>
<div class="a" style="left:1072px;top:641.0px;font:normal 12.5px/15px 'Liberation Sans',sans-serif;color:#000;;">1</div>
<div class="a" style="left:944px;top:670px;width:247px;height:1px;background:#c8c8c8"></div>
<div class="a" style="left:946px;top:656.0px;font:normal 12.5px/15px 'Liberation Sans',sans-serif;color:#000;;">BackThemeColorInde</div>
<div class="a" style="left:1072px;top:656.0px;font:normal 12.5px/15px 'Liberation Sans',sans-serif;color:#000;;">-1</div>
<div class="a" style="left:944px;top:685px;width:247px;height:1px;background:#c8c8c8"></div>
<div class="a" style="left:946px;top:671.0px;font:normal 12.5px/15px 'Liberation Sans',sans-serif;color:#000;;">BackTint</div>
<div class="a" style="left:1072px;top:671.0px;font:normal 12.5px/15px 'Liberation Sans',sans-serif;color:#000;;">100</div>
<div class="a" style="left:944px;top:700px;width:247px;height:1px;background:#c8c8c8"></div>
<div class="a" style="left:946px;top:686.0px;font:normal 12.5px/15px 'Liberation Sans',sans-serif;color:#000;;">Bevel</div>
<div class="a" style="left:1072px;top:686.0px;font:normal 12.5px/15px 'Liberation Sans',sans-serif;color:#000;;">0</div>
<div class="a" style="left:944px;top:715px;width:247px;height:1px;background:#c8c8c8"></div>
<div class="a" style="left:946px;top:701.0px;font:normal 12.5px/15px 'Liberation Sans',sans-serif;color:#000;;">BorderColor</div>
<div class="a" style="left:1072px;top:701.0px;font:normal 12.5px/15px 'Liberation Sans',sans-serif;color:#000;;">0</div>
<div class="a" style="left:944px;top:730px;width:247px;height:1px;background:#c8c8c8"></div>
<div class="a" style="left:946px;top:716.0px;font:normal 12.5px/15px 'Liberation Sans',sans-serif;color:#000;;">BorderShade</div>
<div class="a" style="left:1072px;top:716.0px;font:normal 12.5px/15px 'Liberation Sans',sans-serif;color:#000;;">100</div>
<div class="a" style="left:944px;top:745px;width:247px;height:1px;background:#c8c8c8"></div>
<div class="a" style="left:946px;top:731.0px;font:normal 12.5px/15px 'Liberation Sans',sans-serif;color:#000;;">BorderStyle</div>
<div class="a" style="left:1072px;top:731.0px;font:normal 12.5px/15px 'Liberation Sans',sans-serif;color:#000;;">1</div>
<div class="a" style="left:944px;top:760px;width:247px;height:1px;background:#c8c8c8"></div>
<div class="a" style="left:946px;top:746.0px;font:normal 12.5px/15px 'Liberation Sans',sans-serif;color:#000;;">BorderThemeColorInd</div>
<div class="a" style="left:1072px;top:746.0px;font:normal 12.5px/15px 'Liberation Sans',sans-serif;color:#000;;">-1</div>
<div class="a" style="left:944px;top:775px;width:247px;height:1px;background:#c8c8c8"></div>
<div class="a" style="left:946px;top:761.0px;font:normal 12.5px/15px 'Liberation Sans',sans-serif;color:#000;;">BorderTint</div>
<div class="a" style="left:1072px;top:761.0px;font:normal 12.5px/15px 'Liberation Sans',sans-serif;color:#000;;">100</div>
<div class="a" style="left:944px;top:790px;width:247px;height:1px;background:#c8c8c8"></div>
<div class="a" style="left:946px;top:776.0px;font:normal 12.5px/15px 'Liberation Sans',sans-serif;color:#000;;">BorderWidth</div>
<div class="a" style="left:1072px;top:776.0px;font:normal 12.5px/15px 'Liberation Sans',sans-serif;color:#000;;">0</div>
<div class="a" style="left:944px;top:805px;width:247px;height:1px;background:#c8c8c8"></div>
<div class="a" style="left:946px;top:791.0px;font:normal 12.5px/15px 'Liberation Sans',sans-serif;color:#000;;">BottomPadding</div>
<div class="a" style="left:1072px;top:791.0px;font:normal 12.5px/15px 'Liberation Sans',sans-serif;color:#000;;">30</div>
<div class="a" style="left:944px;top:820px;width:247px;height:1px;background:#c8c8c8"></div>
<div class="a" style="left:946px;top:806.0px;font:normal 12.5px/15px 'Liberation Sans',sans-serif;color:#000;;">Cancel</div>
<div class="a" style="left:1072px;top:806.0px;font:normal 12.5px/15px 'Liberation Sans',sans-serif;color:#000;;">False</div>
<div class="a" style="left:944px;top:835px;width:247px;height:1px;background:#c8c8c8"></div>
<div class="a" style="left:946px;top:821.0px;font:normal 12.5px/15px 'Liberation Sans',sans-serif;color:#000;;">Caption</div>
<div class="a" style="left:1072px;top:821.0px;font:normal 12.5px/15px 'Liberation Sans',sans-serif;color:#000;;"><svg class="h"><use href="#g0" width="100%" height="100%"/></svg><svg class="h"><use href="#g103" width="100%" height="100%"/></svg>5</div>
<div class="a" style="left:944px;top:850px;width:247px;height:1px;background:#c8c8c8"></div>
<div class="a" style="left:946px;top:836.0px;font:normal 12.5px/15px 'Liberation Sans',sans-serif;color:#000;;">ControlTipText</div>
<div class="a" style="left:1072px;top:836.0px;font:normal 12.5px/15px 'Liberation Sans',sans-serif;color:#000;;"></div>
<div class="a" style="left:944px;top:865px;width:247px;height:1px;background:#c8c8c8"></div>
<div class="a" style="left:946px;top:851.0px;font:normal 12.5px/15px 'Liberation Sans',sans-serif;color:#000;;">ControlType</div>
<div class="a" style="left:1072px;top:851.0px;font:normal 12.5px/15px 'Liberation Sans',sans-serif;color:#000;;">104</div>
<div class="a" style="left:944px;top:880px;width:247px;height:1px;background:#c8c8c8"></div>
<div class="a" style="left:946px;top:866.0px;font:normal 12.5px/15px 'Liberation Sans',sans-serif;color:#000;;">CursorOnHover</div>
<div class="a" style="left:1072px;top:866.0px;font:normal 12.5px/15px 'Liberation Sans',sans-serif;color:#000;;">0 - acCursorOnHove</div>
<div class="a" style="left:944px;top:895px;width:247px;height:1px;background:#c8c8c8"></div>
<div class="a" style="left:946px;top:881.0px;font:normal 12.5px/15px 'Liberation Sans',sans-serif;color:#000;;">Default</div>
<div class="a" style="left:1072px;top:881.0px;font:normal 12.5px/15px 'Liberation Sans',sans-serif;color:#000;;">False</div>
<div class="a" style="left:944px;top:910px;width:247px;height:1px;background:#c8c8c8"></div>
<div class="a" style="left:946px;top:896.0px;font:normal 12.5px/15px 'Liberation Sans',sans-serif;color:#000;;">DisplayWhen</div>
<div class="a" style="left:1072px;top:896.0px;font:normal 12.5px/15px 'Liberation Sans',sans-serif;color:#000;;">0</div>
<div class="a" style="left:944px;top:925px;width:247px;height:1px;background:#c8c8c8"></div>
<div class="a" style="left:946px;top:911.0px;font:normal 12.5px/15px 'Liberation Sans',sans-serif;color:#000;;">Enabled</div>
<div class="a" style="left:1072px;top:911.0px;font:normal 12.5px/15px 'Liberation Sans',sans-serif;color:#000;;">True</div>
<div class="a" style="left:944px;top:940px;width:247px;height:1px;background:#c8c8c8"></div>
<div class="a" style="left:944px;top:926px;width:125px;height:14px;background:#ededed"></div>
<div class="a" style="left:946px;top:926.0px;font:normal 12.5px/15px 'Liberation Sans',sans-serif;color:#000;;">EventProcPrefix</div>
<div class="a" style="left:1072px;top:926.0px;font:normal 12.5px/15px 'Liberation Sans',sans-serif;color:#000;;">cmd<svg class="h"><use href="#g0" width="100%" height="100%"/></svg><svg class="h"><use href="#g103" width="100%" height="100%"/></svg>5</div>
<div class="a" style="left:944px;top:955px;width:247px;height:1px;background:#c8c8c8"></div>
<div class="a" style="left:946px;top:941.0px;font:normal 12.5px/15px 'Liberation Sans',sans-serif;color:#000;;">FontBold</div>
<div class="a" style="left:1072px;top:941.0px;font:normal 12.5px/15px 'Liberation Sans',sans-serif;color:#000;;">0</div>
<div class="a" style="left:944px;top:970px;width:247px;height:1px;background:#c8c8c8"></div>
<div class="a" style="left:946px;top:956.0px;font:normal 12.5px/15px 'Liberation Sans',sans-serif;color:#000;;">FontItalic</div>
<div class="a" style="left:1072px;top:956.0px;font:normal 12.5px/15px 'Liberation Sans',sans-serif;color:#000;;">False</div>
<div class="a" style="left:1069px;top:566px;width:1px;height:399px;background:#c8c8c8"></div>
<div class="a" style="left:942px;top:965px;width:266px;height:6px;background:#f0f0f0;border-top:1px solid #aab"></div>
<div class="a" style="left:1191px;top:566px;width:16px;height:399px;background:#f0f0f0"></div>
<div class="a" style="left:1196px;top:583px;width:2px;height:88px;background:#777"></div>
<div class="a" style="left:1214px;top:206px;width:4px;height:765px;background:#f0f0f0"></div>
<div class="a" style="left:1218px;top:207px;width:677px;height:764px;background:#f0f0f0;border-left:1px solid #888"></div>
<div class="a" style="left:1229px;top:209px;width:322px;height:20px;background:#fff;border:1px solid #9b9b9b"></div>
<div class="a" style="left:1233px;top:210.0px;font:bold 13px/16px 'Liberation Sans',sans-serif;color:#000;;">cmd<svg class="h hb"><use href="#g0" width="100%" height="100%"/></svg><svg class="h hb"><use href="#g103" width="100%" height="100%"/></svg>5</div>
<svg style="left:1535px;top:215px" width="11" height="7"><path d="M0.5 0.5L5.5 5.5L10.5 0.5" stroke="#555" fill="none"/></svg>
<div class="a" style="left:1560px;top:209px;width:322px;height:20px;background:#fff;border:1px solid #9b9b9b"></div>
<div class="a" style="left:1565px;top:208.5px;font:bold 14px/17px 'Liberation Sans',sans-serif;color:#000;;">Click</div>
<svg style="left:1866px;top:215px" width="11" height="7"><path d="M0.5 0.5L5.5 5.5L10.5 0.5" stroke="#555" fill="none"/></svg>
<div class="a" style="left:1219px;top:231px;width:656px;height:721px;background:#fff;border-top:2px solid #8e8e8e;border-left:3px solid #7e7e7e"></div>
<div class="a" style="left:1222px;top:233px;width:20px;height:719px;background:#f3f3f3"></div>
<div class="a" style="left:1242px;top:233px;width:1px;height:719px;background:#1a1a1a"></div>
<div class="a" style="left:1243px;top:390px;width:632px;height:1px;background:#777"></div>
<div class="a" style="left:1243px;top:442px;width:632px;height:1px;background:#777"></div>
<div class="a" style="left:1243px;top:585px;width:632px;height:1px;background:#777"></div>
<div class="a" style="left:1243px;top:650px;width:632px;height:1px;background:#777"></div>
<div class="a" style="left:1243px;top:806px;width:632px;height:1px;background:#777"></div>
<div class="a" style="left:1243px;top:858px;width:632px;height:1px;background:#777"></div>
<div class="a" style="left:1254px;top:274px;font:11.67px/14px 'Liberation Mono',monospace;color:#000"><span style="color:#00007f">Private Sub</span> cmd<svg class="h hm"><use href="#g0" width="100%" height="100%"/></svg><svg class="h hm"><use href="#g103" width="100%" height="100%"/></svg>1_Click()</div>
<div class="a" style="left:1254px;top:300px;font:11.67px/14px 'Liberation Mono',monospace;color:#000">Me.Filter = "<svg class="h hm"><use href="#g22" width="100%" height="100%"/></svg><svg class="h hm"><use href="#g85" width="100%" height="100%"/></svg><svg class="h hm"><use href="#g98" width="100%" height="100%"/></svg><svg class="h hm"><use href="#g99" width="100%" height="100%"/></svg> = '" &amp; txt<svg class="h hm"><use href="#g98" width="100%" height="100%"/></svg><svg class="h hm"><use href="#g99" width="100%" height="100%"/></svg> &amp; "'"</div>
<div class="a" style="left:1254px;top:313px;font:11.67px/14px 'Liberation Mono',monospace;color:#000">Me.FilterOn = <span style="color:#00007f">True</span></div>
<div class="a" style="left:1254px;top:378px;font:11.67px/14px 'Liberation Mono',monospace;color:#000"><span style="color:#00007f">End Sub</span></div>
<div class="a" style="left:1254px;top:404px;font:11.67px/14px 'Liberation Mono',monospace;color:#000"><span style="color:#00007f">Private Sub</span> cmd<svg class="h hm"><use href="#g0" width="100%" height="100%"/></svg><svg class="h hm"><use href="#g103" width="100%" height="100%"/></svg>2_Click()</div>
<div class="a" style="left:1254px;top:417px;font:11.67px/14px 'Liberation Mono',monospace;color:#000">    DoCmd.ApplyFilter , "<svg class="h hm"><use href="#g22" width="100%" height="100%"/></svg><svg class="h hm"><use href="#g85" width="100%" height="100%"/></svg><svg class="h hm"><use href="#g98" width="100%" height="100%"/></svg><svg class="h hm"><use href="#g99" width="100%" height="100%"/></svg> like '*" &amp; txt<svg class="h hm"><use href="#g98" width="100%" height="100%"/></svg><svg class="h hm"><use href="#g99" width="100%" height="100%"/></svg> &amp; "*'"</div>
<div class="a" style="left:1254px;top:430px;font:11.67px/14px 'Liberation Mono',monospace;color:#000"><span style="color:#00007f">End Sub</span></div>
<div class="a" style="left:1254px;top:482px;font:11.67px/14px 'Liberation Mono',monospace;color:#000"><span style="color:#00007f">Private Sub</span> cmd<svg class="h hm"><use href="#g0" width="100%" height="100%"/></svg><svg class="h hm"><use href="#g103" width="100%" height="100%"/></svg>3_Click()</div>
<div class="a" style="left:1254px;top:508px;font:11.67px/14px 'Liberation Mono',monospace;color:#000">Me.RecordSource = "select * from <svg class="h hm"><use href="#g22" width="100%" height="100%"/></svg><svg class="h hm"><use href="#g85" width="100%" height="100%"/></svg><svg class="h hm"><use href="#g183" width="100%" height="100%"/></svg><svg class="h hm"><use href="#g100" width="100%" height="100%"/></svg><svg class="h hm"><use href="#g101" width="100%" height="100%"/></svg><svg class="h hm"><use href="#g102" width="100%" height="100%"/></svg> where <svg class="h hm"><use href="#g23" width="100%" height="100%"/></svg><svg class="h hm"><use href="#g106" width="100%" height="100%"/></svg> like '*" &amp; txt<svg class="h hm"><use href="#g22" width="100%" height="100%"/></svg><svg class="h hm"><use href="#g85" width="100%" height="100%"/></svg><svg class="h hm"><use href="#g105" width="100%" height="100%"/></svg> &amp; "*'"</div>
<div class="a" style="left:1254px;top:573px;font:11.67px/14px 'Liberation Mono',monospace;color:#000"><span style="color:#00007f">End Sub</span></div>
<div class="a" style="left:1254px;top:599px;font:11.67px/14px 'Liberation Mono',monospace;color:#000"><span style="color:#00007f">Private Sub</span> cmd<svg class="h hm"><use href="#g0" width="100%" height="100%"/></svg><svg class="h hm"><use href="#g103" width="100%" height="100%"/></svg>4_Click()</div>
<div class="a" style="left:1254px;top:612px;font:11.67px/14px 'Liberation Mono',monospace;color:#000">    Me.RecordsetClone.FindFirst "<svg class="h hm"><use href="#g23" width="100%" height="100%"/></svg><svg class="h hm"><use href="#g106" width="100%" height="100%"/></svg>='" &amp; txt<svg class="h hm"><use href="#g22" width="100%" height="100%"/></svg><svg class="h hm"><use href="#g85" width="100%" height="100%"/></svg><svg class="h hm"><use href="#g105" width="100%" height="100%"/></svg> &amp; "'"</div>
<div class="a" style="left:1254px;top:625px;font:11.67px/14px 'Liberation Mono',monospace;color:#000">    Me.Bookmark = Me.RecordsetClone.Bookmark</div>
<div class="a" style="left:1254px;top:638px;font:11.67px/14px 'Liberation Mono',monospace;color:#000"><span style="color:#00007f">End Sub</span></div>
<div class="a" style="left:1254px;top:690px;font:11.67px/14px 'Liberation Mono',monospace;color:#000"><span style="color:#00007f">Private Sub</span> cmd<svg class="h hm"><use href="#g0" width="100%" height="100%"/></svg><svg class="h hm"><use href="#g103" width="100%" height="100%"/></svg>5_Click()</div>
<div class="a" style="left:1254px;top:716px;font:11.67px/14px 'Liberation Mono',monospace;color:#000">Me.RecordsetClone.FindFirst "<svg class="h hm"><use href="#g23" width="100%" height="100%"/></svg><svg class="h hm"><use href="#g106" width="100%" height="100%"/></svg> = '" &amp; txt<svg class="h hm"><use href="#g22" width="100%" height="100%"/></svg><svg class="h hm"><use href="#g85" width="100%" height="100%"/></svg><svg class="h hm"><use href="#g105" width="100%" height="100%"/></svg> &amp; "'"</div>
<div class="a" style="left:1254px;top:729px;font:11.67px/14px 'Liberation Mono',monospace;color:#000">Me.Bookmark = Me.RecordsetClone.Bookmark</div>
<div class="a" style="left:1254px;top:794px;font:11.67px/14px 'Liberation Mono',monospace;color:#000"><span style="color:#00007f">End Sub</span></div>
<div class="a" style="left:1254px;top:820px;font:11.67px/14px 'Liberation Mono',monospace;color:#000"><span style="color:#00007f">Private Sub</span> txt<svg class="h hm"><use href="#g98" width="100%" height="100%"/></svg><svg class="h hm"><use href="#g99" width="100%" height="100%"/></svg>_BeforeUpdate(Cancel <span style="color:#00007f">As</span> <span style="color:#00007f">Integer</span>)</div>
<div class="a" style="left:1254px;top:833px;font:11.67px/14px 'Liberation Mono',monospace;color:#000">    txt<svg class="h hm"><use href="#g22" width="100%" height="100%"/></svg><svg class="h hm"><use href="#g85" width="100%" height="100%"/></svg><svg class="h hm"><use href="#g105" width="100%" height="100%"/></svg> = DLookup("<svg class="h hm"><use href="#g23" width="100%" height="100%"/></svg><svg class="h hm"><use href="#g106" width="100%" height="100%"/></svg>", "<svg class="h hm"><use href="#g22" width="100%" height="100%"/></svg><svg class="h hm"><use href="#g85" width="100%" height="100%"/></svg><svg class="h hm"><use href="#g59" width="100%" height="100%"/></svg><svg class="h hm"><use href="#g107" width="100%" height="100%"/></svg>", "txt<svg class="h hm"><use href="#g98" width="100%" height="100%"/></svg><svg class="h hm"><use href="#g99" width="100%" height="100%"/></svg>=<svg class="h hm"><use href="#g22" width="100%" height="100%"/></svg><svg class="h hm"><use href="#g85" width="100%" height="100%"/></svg><svg class="h hm"><use href="#g98" width="100%" height="100%"/></svg><svg class="h hm"><use href="#g99" width="100%" height="100%"/></svg>")</div>
<div class="a" style="left:1254px;top:846px;font:11.67px/14px 'Liberation Mono',monospace;color:#000"><span style="color:#00007f">End Sub</span></div>
<div class="a" style="left:1254px;top:872px;font:11.67px/14px 'Liberation Mono',monospace;color:#000"><span style="color:#00007f">Private Sub</span> txt<svg class="h hm"><use href="#g22" width="100%" height="100%"/></svg><svg class="h hm"><use href="#g45" width="100%" height="100%"/></svg><svg class="h hm"><use href="#g13" width="100%" height="100%"/></svg>_GotFocus()</div>
<div class="a" style="left:1254px;top:885px;font:11.67px/14px 'Liberation Mono',monospace;color:#000">    <span style="color:#00007f">If</span> txt<svg class="h hm"><use href="#g22" width="100%" height="100%"/></svg><svg class="h hm"><use href="#g45" width="100%" height="100%"/></svg><svg class="h hm"><use href="#g13" width="100%" height="100%"/></svg> &gt;= 90 <span style="color:#00007f">Then</span></div>
<div class="a" style="left:1254px;top:898px;font:11.67px/14px 'Liberation Mono',monospace;color:#000">        MsgBox "<svg class="h hm"><use href="#g108" width="100%" height="100%"/></svg><svg class="h hm"><use href="#g109" width="100%" height="100%"/></svg><svg class="h hm"><use href="#g38" width="100%" height="100%"/></svg><svg class="h hm"><use href="#g48" width="100%" height="100%"/></svg><svg class="h hm"><use href="#g9" width="100%" height="100%"/></svg>", vbOKOnly, "4<svg class="h hm"><use href="#g45" width="100%" height="100%"/></svg><svg class="h hm"><use href="#g13" width="100%" height="100%"/></svg> <svg class="h hm"><use href="#g110" width="100%" height="100%"/></svg><svg class="h hm"><use href="#g31" width="100%" height="100%"/></svg>"</div>
<div class="a" style="left:1254px;top:911px;font:11.67px/14px 'Liberation Mono',monospace;color:#000">    <span style="color:#00007f">End If</span></div>
<div class="a" style="left:1254px;top:924px;font:11.67px/14px 'Liberation Mono',monospace;color:#000"><span style="color:#00007f">End Sub</span></div>
<div class="a" style="left:1254px;top:743px;width:1px;height:13px;background:#000"></div>
<div class="a" style="left:1875px;top:231px;width:19px;height:721px;background:#f0f0f0"></div>
<div class="a" style="left:1875px;top:233px;width:16px;height:7px;background:#f4f4f4;border:1px solid #888;border-left:none"></div>
<div class="a" style="left:1883px;top:290px;width:2px;height:623px;background:#777"></div>
<div class="a" style="left:1893px;top:126px;width:2px;height:845px;background:#fff"></div>
<div class="a" style="left:1220px;top:952px;width:675px;height:19px;background:#f0f0f0"></div>
<svg style="left:1222px;top:952px" width="40" height="16"><rect x="0.5" y="0.5" width="13" height="13" fill="#fff" stroke="#333"/><path d="M3 4h8M3 7h8M3 10h8" stroke="#111"/><rect x="14.5" y="0.5" width="13" height="13" fill="#e8e8e8" stroke="#333"/><path d="M17 3h8M19 5.5h6M19 8h6M17 10.5h8" stroke="#111"/></svg>
<div class="a" style="left:1272px;top:959px;width:50px;height:2px;background:#888"></div>
<svg style="left:1880px;top:958px" width="9" height="9"><path d="M7 1h1v1h-1zM4 4h1v1h-1zM7 4h1v1h-1zM1 7h1v1h-1zM4 7h1v1h-1zM7 7h1v1h-1z" fill="#888"/></svg>
</body></html>
